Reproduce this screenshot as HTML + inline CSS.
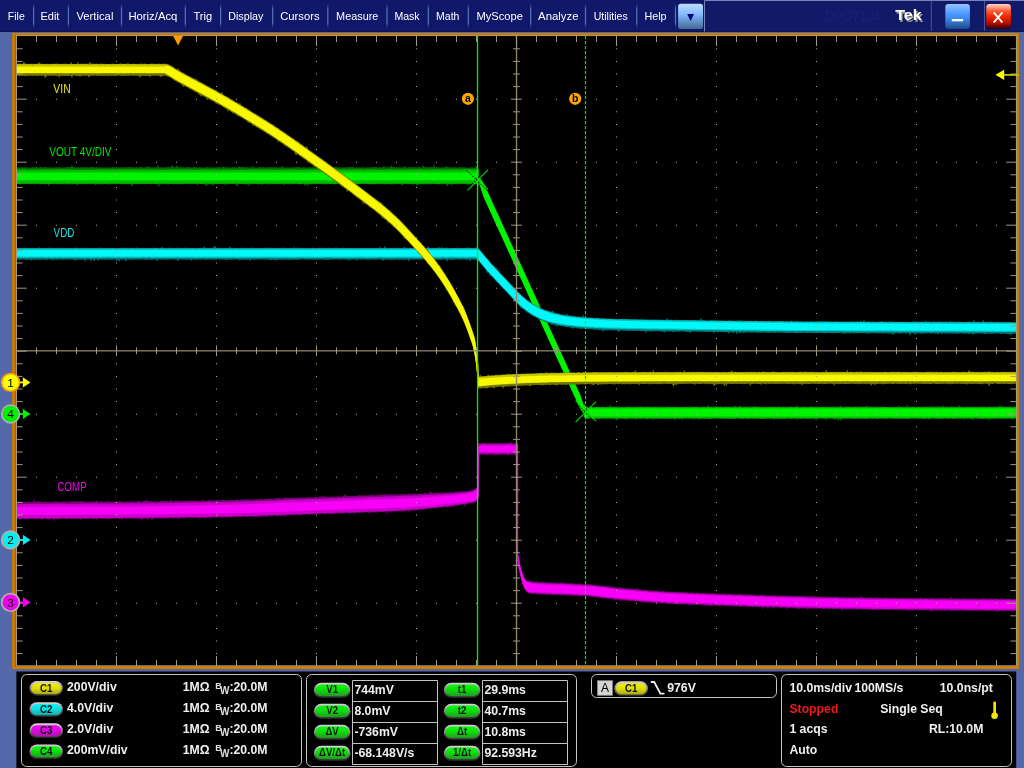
<!DOCTYPE html>
<html><head><meta charset="utf-8"><title>Tek DPO7104</title>
<style>html,body{margin:0;padding:0;background:#000;overflow:hidden}svg{display:block;will-change:transform}</style></head>
<body>
<svg width="1024" height="768" viewBox="0 0 1024 768" font-family="Liberation Sans, Arial, sans-serif">
<defs>
<linearGradient id="gb" x1="0" y1="0" x2="0" y2="1"><stop offset="0" stop-color="#98c4ff"/><stop offset="0.38" stop-color="#4c9aff"/><stop offset="0.6" stop-color="#3a88e6"/><stop offset="1" stop-color="#1c4886"/></linearGradient>
<linearGradient id="gr" x1="0" y1="0" x2="0" y2="1"><stop offset="0" stop-color="#ffd8cc"/><stop offset="0.28" stop-color="#ff5a38"/><stop offset="0.5" stop-color="#f02800"/><stop offset="0.75" stop-color="#b81000"/><stop offset="1" stop-color="#2c0000"/></linearGradient>
<linearGradient id="gd" x1="0" y1="0" x2="0" y2="1"><stop offset="0" stop-color="#bcdcff"/><stop offset="0.42" stop-color="#84baff"/><stop offset="0.56" stop-color="#6ea6e6"/><stop offset="1" stop-color="#466a90"/></linearGradient>
<linearGradient id="sep" x1="0" y1="0" x2="0" y2="1"><stop offset="0" stop-color="#4a5ea8" stop-opacity="0"/><stop offset=".25" stop-color="#5d74b8"/><stop offset=".75" stop-color="#5d74b8"/><stop offset="1" stop-color="#4a5ea8" stop-opacity="0"/></linearGradient>
<linearGradient id="bev" x1="0" y1="0" x2="0" y2="1"><stop offset="0" stop-color="#dcd4dc"/><stop offset=".35" stop-color="#a8a0a8"/><stop offset=".7" stop-color="#585858"/><stop offset="1" stop-color="#202020"/></linearGradient>
<linearGradient id="py" x1="0" y1="0" x2="0" y2="1"><stop offset="0" stop-color="#f0f008"/><stop offset=".5" stop-color="#dcdc08"/><stop offset="1" stop-color="#a8a818"/></linearGradient>
<linearGradient id="pc" x1="0" y1="0" x2="0" y2="1"><stop offset="0" stop-color="#08f4f4"/><stop offset=".5" stop-color="#08dcdc"/><stop offset="1" stop-color="#18a8a8"/></linearGradient>
<linearGradient id="pm" x1="0" y1="0" x2="0" y2="1"><stop offset="0" stop-color="#f408f4"/><stop offset=".5" stop-color="#dc08dc"/><stop offset="1" stop-color="#a818a8"/></linearGradient>
<linearGradient id="pg" x1="0" y1="0" x2="0" y2="1"><stop offset="0" stop-color="#10f810"/><stop offset=".45" stop-color="#08e008"/><stop offset="1" stop-color="#289428"/></linearGradient>
</defs>
<rect width="1024" height="768" fill="#5568aa"/>
<rect x="0" y="0" width="1024" height="31" fill="#10186a"/>
<rect x="0" y="31" width="1024" height="1" fill="#0c1258"/>
<rect x="704" y="0" width="320" height="31.5" fill="#111969"/>
<path d="M704.5 31.5V0.5H1024" fill="none" stroke="#7c80b4" stroke-width="1"/>
<rect x="930.8" y="1" width="1" height="30" fill="#4a5498"/>
<rect x="984" y="1" width="1" height="30" fill="#4a5498"/>
<text x="7.8" y="20" font-size="11.3" fill="#ffffff" textLength="17.0" lengthAdjust="spacingAndGlyphs">File</text>
<text x="40.4" y="20" font-size="11.3" fill="#ffffff" textLength="19.0" lengthAdjust="spacingAndGlyphs">Edit</text>
<text x="76.4" y="20" font-size="11.3" fill="#ffffff" textLength="37.0" lengthAdjust="spacingAndGlyphs">Vertical</text>
<text x="128.4" y="20" font-size="11.3" fill="#ffffff" textLength="49.0" lengthAdjust="spacingAndGlyphs">Horiz/Acq</text>
<text x="193.4" y="20" font-size="11.3" fill="#ffffff" textLength="18.7" lengthAdjust="spacingAndGlyphs">Trig</text>
<text x="228.2" y="20" font-size="11.3" fill="#ffffff" textLength="35.2" lengthAdjust="spacingAndGlyphs">Display</text>
<text x="280.2" y="20" font-size="11.3" fill="#ffffff" textLength="39.4" lengthAdjust="spacingAndGlyphs">Cursors</text>
<text x="336.1" y="20" font-size="11.3" fill="#ffffff" textLength="42.3" lengthAdjust="spacingAndGlyphs">Measure</text>
<text x="394.4" y="20" font-size="11.3" fill="#ffffff" textLength="25.2" lengthAdjust="spacingAndGlyphs">Mask</text>
<text x="436.1" y="20" font-size="11.3" fill="#ffffff" textLength="23.3" lengthAdjust="spacingAndGlyphs">Math</text>
<text x="476.5" y="20" font-size="11.3" fill="#ffffff" textLength="46.4" lengthAdjust="spacingAndGlyphs">MyScope</text>
<text x="538.1" y="20" font-size="11.3" fill="#ffffff" textLength="40.5" lengthAdjust="spacingAndGlyphs">Analyze</text>
<text x="593.7" y="20" font-size="11.3" fill="#ffffff" textLength="34.1" lengthAdjust="spacingAndGlyphs">Utilities</text>
<text x="644.4" y="20" font-size="11.3" fill="#ffffff" textLength="22.1" lengthAdjust="spacingAndGlyphs">Help</text>
<rect x="33.0" y="3" width="1.2" height="26" fill="url(#sep)"/>
<rect x="67.8" y="3" width="1.2" height="26" fill="url(#sep)"/>
<rect x="120.9" y="3" width="1.2" height="26" fill="url(#sep)"/>
<rect x="184.7" y="3" width="1.2" height="26" fill="url(#sep)"/>
<rect x="220.0" y="3" width="1.2" height="26" fill="url(#sep)"/>
<rect x="272.1" y="3" width="1.2" height="26" fill="url(#sep)"/>
<rect x="327.2" y="3" width="1.2" height="26" fill="url(#sep)"/>
<rect x="386.4" y="3" width="1.2" height="26" fill="url(#sep)"/>
<rect x="427.7" y="3" width="1.2" height="26" fill="url(#sep)"/>
<rect x="467.7" y="3" width="1.2" height="26" fill="url(#sep)"/>
<rect x="530.1" y="3" width="1.2" height="26" fill="url(#sep)"/>
<rect x="584.9" y="3" width="1.2" height="26" fill="url(#sep)"/>
<rect x="636.2" y="3" width="1.2" height="26" fill="url(#sep)"/>
<rect x="674.9" y="3" width="1.2" height="26" fill="url(#sep)"/>
<rect x="678.1" y="3.8" width="24.9" height="25.2" rx="2.8" fill="url(#gd)"/>
<path d="M687.2 13.9h6.8l-3.4 7.2z" fill="#000080"/>
<text x="825" y="21.3" font-size="14.5" fill="#182272" textLength="55.5" lengthAdjust="spacingAndGlyphs">DPO7104</text>
<text x="896.6" y="21.5" font-size="15" font-weight="bold" fill="#9a9a8a" textLength="26.5" lengthAdjust="spacingAndGlyphs">Tek</text>
<text x="895.2" y="20" font-size="15" font-weight="bold" fill="#ffffff" textLength="26.5" lengthAdjust="spacingAndGlyphs">Tek</text>
<rect x="945.3" y="3.9" width="24.6" height="25.2" rx="3" fill="url(#gb)"/>
<rect x="951.8" y="19" width="11.3" height="2.3" fill="#ffffff"/>
<rect x="986.3" y="3.9" width="24.6" height="25.2" rx="3" fill="url(#gr)"/>
<path d="M993.7 12.4L1002.4 22.5M1002.4 12.4L993.7 22.5" stroke="#ffffff" stroke-width="1.9" fill="none"/>
<rect x="12.1" y="33" width="1007" height="636" fill="#cc7c00"/>
<rect x="14.8" y="35" width="1.4" height="632" fill="#a86400"/>
<rect x="16" y="35.3" width="1001" height="631" fill="#a89a78"/>
<rect x="17" y="36.1" width="998.9" height="629.2" fill="#000000"/>
<rect x="16.4" y="671.5" width="999.8" height="97" fill="#000000"/>
<clipPath id="gc"><rect x="17" y="36.1" width="998.9" height="629.2"/></clipPath>
<g clip-path="url(#gc)">
<path d="M17,167.5 18,167.3 19,167.7 20,167.4 21,167.3 22,167 23,167.6 24,167.6 25,167.3 26,167.2 27,167.4 28,167.5 29,167.2 30,167.4 31,167.7 32,167.1 33,167.3 34,167.4 35,167.2 36,166 37,167.6 38,167.5 39,167.4 40,167.1 41,167.1 42,167.5 43,167.5 44,167.3 45,167.3 46,167.2 47,167.4 48,167.6 49,167.6 50,167.3 51,167.4 52,167.4 53,167.5 54,167.7 55,167.3 56,167.1 57,167.6 58,167.5 59,167.1 60,167.5 61,167.5 62,167.4 63,167.4 64,167.6 65,167.4 66,167.2 67,167.4 68,167.1 69,167 70,167.6 71,167.1 72,164.4 73,167.3 74,167.1 75,167.5 76,167.6 77,167.3 78,167.3 79,167.6 80,167.4 81,167.3 82,167.3 83,167.3 84,167.4 85,167.2 86,167 87,167.5 88,167.6 89,167.5 90,167.1 91,167.6 92,167 93,167.1 94,167.5 95,167.7 96,167.3 97,167.1 98,167.7 99,167.4 100,167.6 101,167.6 102,167.6 103,167.6 104,167.4 105,167.5 106,167.6 107,167.5 108,167.3 109,167.7 110,167.4 111,167.4 112,167.3 113,167.1 114,167.5 115,167.2 116,167.1 117,167.5 118,167.4 119,167.3 120,167.5 121,167.3 122,167.6 123,167.5 124,167.2 125,167.5 126,167.2 127,167.3 128,167.3 129,167.1 130,166.8 131,167.6 132,167.3 133,167.2 134,167.7 135,167.5 136,167 137,167.2 138,167.6 139,167.3 140,167.2 141,167.3 142,167.1 143,167.7 144,167.4 145,167.6 146,167 147,167.1 148,165.9 149,167.5 150,167.1 151,167.6 152,167.5 153,167.3 154,167.7 155,167 156,167.6 157,167.1 158,165.1 159,167.2 160,167.6 161,167.2 162,167.5 163,167.6 164,167.5 165,167.6 166,167.6 167,167.1 168,167.3 169,167 170,167.1 171,167.4 172,165 173,166.2 174,167.1 175,167.6 176,167 177,165 178,167.1 179,167.5 180,167.7 181,166.6 182,167 183,167.5 184,167.5 185,167.4 186,167.5 187,167.2 188,167.3 189,167.1 190,167.5 191,167.5 192,167.6 193,167.6 194,167.1 195,167 196,167.2 197,167.4 198,167.5 199,167.6 200,167.4 201,167.1 202,167.7 203,167.7 204,167.5 205,167.5 206,167.2 207,167.1 208,167.4 209,167.5 210,167.6 211,167.2 212,167.4 213,167.2 214,167.5 215,167.5 216,167.2 217,167.3 218,167.2 219,167.3 220,167.5 221,167.3 222,167.3 223,167 224,166.2 225,167.6 226,167.4 227,167.2 228,167.3 229,167.6 230,167.6 231,167.6 232,167.3 233,167.3 234,167.2 235,167 236,167.4 237,167.6 238,167.4 239,165.7 240,167.1 241,167.3 242,167.1 243,167 244,167 245,167.4 246,167.6 247,167.1 248,167.4 249,167.5 250,167.2 251,167.3 252,167.4 253,165.5 254,167.5 255,167.6 256,167.4 257,167.7 258,167.2 259,167.4 260,167 261,167 262,167.6 263,167.2 264,167.1 265,167.6 266,167.7 267,167.2 268,167.6 269,167.1 270,167.6 271,167.1 272,167.4 273,167.2 274,167.3 275,167 276,167.4 277,167.5 278,167.6 279,167.3 280,167.6 281,167.6 282,165.5 283,167.5 284,167.2 285,167.4 286,167.7 287,167.6 288,167.1 289,167.7 290,167.7 291,167.2 292,167.5 293,167.2 294,167.3 295,167.5 296,167.1 297,167.2 298,167.1 299,167.3 300,167.4 301,167.4 302,167.6 303,167.6 304,167.3 305,167.3 306,167.4 307,167.7 308,167.6 309,167.1 310,167.5 311,167.6 312,167.5 313,167 314,167.7 315,167.5 316,167.1 317,167.7 318,167.7 319,167.6 320,167.5 321,167.2 322,167.6 323,167.3 324,167.1 325,167.5 326,167.1 327,167.2 328,167.5 329,167.2 330,167.3 331,167.5 332,167.1 333,167.5 334,167.6 335,167 336,167.1 337,167.3 338,167.7 339,167.3 340,167.3 341,167.4 342,167.5 343,167.2 344,167.4 345,167.4 346,167.5 347,167.4 348,167.2 349,167 350,167.2 351,167.3 352,167.3 353,167 354,167.2 355,167.7 356,167.4 357,167.5 358,167.5 359,167.6 360,167.4 361,167.5 362,167.4 363,167.1 364,167.4 365,167.7 366,167.5 367,167.2 368,167.7 369,167.6 370,167 371,167.6 372,167.6 373,167.1 374,167.1 375,167.2 376,167.1 377,167.6 378,167.6 379,167.1 380,167.3 381,167.4 382,167.3 383,167 384,165.2 385,167.5 386,167.3 387,167.4 388,167.1 389,167.3 390,167.5 391,165.1 392,167.3 393,167.1 394,167.1 395,167.2 396,167.2 397,167.6 398,167.2 399,167.3 400,167.5 401,167.3 402,167.3 403,167.3 404,167.4 405,165.5 406,167 407,167.7 408,167.6 409,167.1 410,167.2 411,167 412,167.1 413,167.6 414,167.3 415,167.1 416,167.4 417,167.2 418,167.2 419,167 420,167.4 421,167.3 422,167.7 423,164.6 424,167.1 425,167.1 426,167.6 427,167.2 428,167.2 429,167.2 430,167.1 431,167.1 432,167.3 433,167.2 434,164.3 435,167.6 436,167.3 437,167 438,167.5 439,167.2 440,167.7 441,167.7 442,167 443,167.4 444,167.3 445,167.4 446,166.2 447,167.1 448,167.2 449,167.2 450,167.3 451,167.5 452,167.5 453,167.6 454,167 455,167.4 456,167.3 457,167.4 458,167.7 459,167.1 460,167.5 461,167.4 462,167 463,167.6 464,167.6 465,167.1 466,167.7 467,167.7 468,167.7 469,167.4 470,167.6 471,167.6 472,167.4 473,167.2 474,167.7 475,167.7 476,164.4 477,167.1 478,168.1 478.3,169 478.3,186.6 478,186.3 477,184.6 476,184.1 475,184.4 474,184.3 473,184.4 472,184 471,183.9 470,183.9 469,184.4 468,184.4 467,184.4 466,184.3 465,183.9 464,184.1 463,184.1 462,183.8 461,184 460,184.4 459,184 458,184.3 457,184.2 456,184.1 455,183.9 454,184.4 453,183.8 452,186.1 451,183.9 450,184.3 449,184.5 448,184.7 447,186.8 446,184 445,184.1 444,184.2 443,183.9 442,184.4 441,184.2 440,183.9 439,184.4 438,184.3 437,184.4 436,184.1 435,184.2 434,183.9 433,184.1 432,183.9 431,184.4 430,184.3 429,184.4 428,184.1 427,184.5 426,184.2 425,184.3 424,184.2 423,184.4 422,184 421,184.4 420,184.4 419,184.4 418,184.4 417,187.1 416,184.1 415,184.1 414,184.1 413,185.5 412,183.9 411,184.3 410,184.1 409,184.3 408,183.8 407,184.3 406,183.9 405,183.8 404,183.9 403,184.5 402,185.6 401,184.2 400,184.1 399,184 398,184.1 397,183.8 396,184.1 395,184.2 394,184.2 393,184.2 392,184.4 391,184.3 390,184 389,184.5 388,184.1 387,184.2 386,184.3 385,184.4 384,184.4 383,184 382,183.8 381,184.5 380,184.3 379,183.8 378,184.1 377,184.1 376,184.2 375,184.2 374,184.4 373,184.2 372,184.4 371,184 370,184.3 369,184.4 368,184.4 367,184.1 366,184.1 365,184.3 364,184 363,184 362,184 361,184.2 360,184.2 359,184.3 358,184.4 357,184.3 356,184.3 355,185.2 354,183.9 353,183.9 352,184.4 351,184.2 350,184.5 349,183.8 348,184.3 347,184.3 346,184.1 345,184.3 344,184 343,184.4 342,184.3 341,184.2 340,184.1 339,184.2 338,184.1 337,183.9 336,184.3 335,183.9 334,184.5 333,184.2 332,183.9 331,183.9 330,183.9 329,183.9 328,183.9 327,184.3 326,184 325,184.4 324,184.5 323,184 322,184.4 321,184.1 320,184.5 319,184.1 318,184.1 317,183.9 316,183.9 315,184.3 314,184.1 313,184.2 312,184.3 311,184.8 310,183.9 309,184.2 308,186.5 307,184.4 306,184.4 305,186.1 304,183.9 303,183.8 302,184.2 301,184.3 300,184.4 299,184.3 298,184 297,184.5 296,183.8 295,184.2 294,184.1 293,184.4 292,183.8 291,184.1 290,184.4 289,184.4 288,183.9 287,184.2 286,184.2 285,184 284,185.6 283,184.3 282,184 281,184.2 280,184.5 279,183.9 278,184.1 277,184.3 276,184.2 275,183.8 274,184.5 273,183.8 272,184.3 271,184 270,184.5 269,184.2 268,184.2 267,184.4 266,183.9 265,184 264,183.9 263,183.9 262,185.4 261,184.1 260,184.3 259,184.5 258,184.2 257,184.2 256,183.9 255,184.1 254,184.3 253,184.1 252,184.2 251,184.2 250,183.8 249,186 248,184.2 247,184.4 246,184.4 245,184.4 244,184.1 243,183.9 242,183.9 241,183.9 240,183.9 239,183.9 238,184.4 237,187 236,184.4 235,184 234,184.1 233,184.2 232,183.8 231,184 230,183.8 229,184 228,184 227,184.5 226,184.4 225,184.5 224,184.4 223,183.9 222,184 221,184 220,184 219,184.1 218,183.9 217,184.3 216,184.1 215,183.9 214,184.5 213,185.6 212,184.3 211,184.2 210,184.4 209,184.1 208,184.5 207,184.9 206,186.3 205,184.5 204,184.3 203,183.8 202,184.1 201,183.9 200,183.8 199,184 198,184.5 197,184.9 196,183.8 195,184 194,184.4 193,183.8 192,184.1 191,184.1 190,184.5 189,184 188,183.9 187,183.9 186,183.8 185,184 184,183.8 183,184 182,184.3 181,184.2 180,184.2 179,184.2 178,184.3 177,184.2 176,184.3 175,183.9 174,184.4 173,184.2 172,183.8 171,184.1 170,184 169,183.9 168,184.9 167,184.3 166,184 165,183.9 164,184.4 163,183.9 162,184.2 161,184.5 160,184.1 159,187 158,184.3 157,184.2 156,184.1 155,184 154,183.9 153,184.1 152,184.1 151,184.4 150,183.8 149,183.9 148,183.8 147,184.3 146,183.9 145,184.2 144,184 143,184.1 142,183.9 141,184.1 140,184.3 139,184.2 138,183.9 137,184.3 136,184.1 135,184.3 134,184.3 133,184.2 132,186.7 131,184.4 130,184 129,184.2 128,184.2 127,184.3 126,183.8 125,184.5 124,184.3 123,184.2 122,184.1 121,184.7 120,183.8 119,184 118,184 117,184 116,184.4 115,184 114,183.8 113,184.3 112,184.3 111,184.1 110,184.5 109,184.3 108,184.7 107,184 106,183.9 105,183.9 104,184 103,184.4 102,184.5 101,183.8 100,184.4 99,184.4 98,184.3 97,184.5 96,184.2 95,185.2 94,183.9 93,183.9 92,184.1 91,184.4 90,183.9 89,183.9 88,183.9 87,184.2 86,184.3 85,184.1 84,184.2 83,184.2 82,184 81,184.2 80,184.3 79,183.8 78,185.5 77,184.4 76,184.4 75,184.2 74,183.9 73,184.5 72,183.9 71,184.5 70,184.4 69,184.3 68,184.5 67,183.9 66,184.4 65,184.3 64,184.2 63,184 62,184.5 61,184 60,184.2 59,184.4 58,184 57,184.3 56,184.3 55,183.8 54,184.5 53,184 52,184.1 51,183.9 50,183.9 49,186.5 48,183.9 47,184.1 46,184.4 45,184.3 44,184.5 43,183.8 42,184 41,184.5 40,184 39,184.2 38,184.1 37,183.8 36,184.3 35,184.5 34,184.3 33,184.1 32,184 31,184.3 30,184.3 29,184 28,184.2 27,184 26,184.1 25,183.8 24,184.2 23,183.9 22,183.8 21,184.5 20,184.4 19,184.1 18,184.1 17,183.9Z" fill="#006c00"/>
<path d="M17,169.7 18,169.4 19,169.6 20,169.6 21,169.8 22,169.3 23,169.5 24,169.5 25,169.3 26,169.7 27,169.7 28,169.8 29,169.5 30,169.8 31,169.5 32,169.4 33,169.4 34,169.8 35,169.6 36,169.7 37,169.6 38,169.5 39,169.7 40,169.4 41,169.4 42,169.6 43,169.4 44,169.6 45,169.4 46,169.7 47,169.6 48,169.4 49,169.4 50,169.8 51,169.3 52,169.7 53,169.5 54,169.5 55,169.6 56,169.8 57,169.3 58,169.3 59,169.4 60,169.4 61,169.5 62,169.5 63,169.5 64,169.5 65,169.5 66,169.3 67,169.6 68,169.7 69,169.3 70,169.7 71,169.5 72,169.7 73,169.7 74,169.7 75,169.8 76,169.4 77,169.5 78,169.7 79,169.6 80,169.5 81,169.6 82,169.7 83,169.6 84,169.8 85,169.4 86,169.5 87,169.7 88,169.7 89,169.7 90,169.4 91,169.8 92,169.6 93,169.7 94,169.3 95,169.7 96,169.6 97,169.5 98,169.4 99,169.4 100,169.4 101,169.4 102,169.3 103,169.4 104,169.4 105,169.6 106,169.5 107,169.4 108,169.5 109,169.6 110,169.4 111,169.6 112,169.6 113,169.4 114,169.6 115,169.7 116,169.7 117,169.5 118,169.3 119,169.4 120,169.3 121,169.6 122,169.8 123,169.5 124,169.3 125,169.5 126,169.5 127,169.5 128,169.6 129,169.6 130,169.5 131,169.8 132,169.6 133,169.5 134,169.3 135,169.6 136,169.3 137,169.5 138,169.7 139,169.3 140,169.5 141,169.4 142,169.4 143,169.4 144,169.7 145,169.5 146,169.7 147,169.5 148,169.6 149,169.5 150,169.6 151,169.6 152,169.8 153,169.4 154,169.5 155,169.6 156,169.7 157,169.5 158,169.5 159,169.7 160,169.4 161,169.7 162,169.5 163,169.5 164,169.8 165,169.4 166,169.4 167,169.7 168,169.8 169,169.5 170,169.6 171,169.8 172,169.5 173,169.6 174,169.7 175,169.3 176,169.6 177,169.4 178,169.5 179,169.6 180,169.7 181,169.4 182,169.6 183,169.6 184,169.7 185,169.6 186,169.3 187,169.5 188,169.5 189,169.6 190,169.7 191,169.6 192,169.7 193,169.7 194,169.5 195,169.7 196,169.8 197,169.4 198,169.6 199,169.4 200,169.6 201,169.6 202,169.7 203,169.5 204,169.6 205,169.4 206,169.4 207,169.6 208,169.5 209,169.4 210,169.5 211,169.7 212,169.6 213,169.5 214,169.6 215,169.7 216,169.6 217,169.7 218,169.6 219,169.7 220,169.6 221,169.7 222,169.7 223,169.3 224,169.4 225,169.7 226,169.8 227,169.5 228,169.6 229,169.5 230,169.4 231,169.5 232,169.7 233,169.4 234,169.8 235,169.7 236,169.6 237,169.8 238,169.5 239,169.4 240,169.4 241,169.6 242,169.6 243,169.4 244,169.7 245,169.4 246,169.8 247,169.7 248,169.7 249,169.4 250,169.5 251,169.4 252,169.7 253,169.3 254,169.3 255,169.4 256,169.5 257,169.8 258,169.6 259,169.3 260,169.4 261,169.4 262,169.7 263,169.3 264,169.5 265,169.8 266,169.6 267,169.6 268,169.4 269,169.7 270,169.5 271,169.3 272,169.7 273,169.7 274,169.6 275,169.5 276,169.7 277,169.5 278,169.4 279,169.7 280,169.6 281,169.8 282,169.7 283,169.6 284,169.6 285,169.6 286,169.8 287,169.3 288,169.8 289,169.3 290,169.7 291,169.6 292,169.5 293,169.3 294,169.5 295,169.5 296,169.7 297,169.8 298,169.4 299,169.7 300,169.4 301,169.7 302,169.4 303,169.6 304,169.4 305,169.6 306,169.6 307,169.7 308,169.5 309,169.4 310,169.3 311,169.6 312,169.7 313,169.5 314,169.5 315,169.6 316,169.8 317,169.6 318,169.4 319,169.4 320,169.4 321,169.7 322,169.5 323,169.6 324,169.5 325,169.3 326,169.7 327,169.5 328,169.7 329,169.6 330,169.3 331,169.4 332,169.3 333,169.4 334,169.5 335,169.7 336,169.3 337,169.5 338,169.6 339,169.8 340,169.5 341,169.8 342,169.6 343,169.6 344,169.5 345,169.7 346,169.4 347,169.7 348,169.7 349,169.5 350,169.6 351,169.7 352,169.7 353,169.5 354,169.6 355,169.6 356,169.5 357,169.4 358,169.3 359,169.7 360,169.6 361,169.3 362,169.4 363,169.4 364,169.7 365,169.8 366,169.7 367,169.4 368,169.4 369,169.4 370,169.3 371,169.7 372,169.6 373,169.5 374,169.7 375,169.4 376,169.4 377,169.5 378,169.5 379,169.7 380,169.5 381,169.7 382,169.4 383,169.7 384,169.7 385,169.7 386,169.7 387,169.6 388,169.4 389,169.5 390,169.3 391,169.6 392,169.5 393,169.4 394,169.7 395,169.5 396,169.6 397,169.4 398,169.4 399,169.8 400,169.7 401,169.5 402,169.7 403,169.6 404,169.6 405,169.8 406,169.6 407,169.6 408,169.8 409,169.5 410,169.7 411,169.7 412,169.5 413,169.3 414,169.5 415,169.4 416,169.5 417,169.6 418,169.4 419,169.3 420,169.6 421,169.4 422,169.5 423,169.5 424,169.8 425,169.6 426,169.6 427,169.7 428,169.6 429,169.8 430,169.6 431,169.5 432,169.7 433,169.6 434,169.4 435,169.3 436,169.3 437,169.8 438,169.5 439,169.6 440,169.6 441,169.8 442,169.4 443,169.7 444,169.7 445,169.4 446,169.6 447,169.5 448,169.5 449,169.4 450,169.5 451,169.4 452,169.6 453,169.7 454,169.4 455,169.3 456,169.6 457,169.5 458,169.5 459,169.8 460,169.8 461,169.6 462,169.5 463,169.6 464,169.3 465,169.3 466,169.5 467,169.6 468,169.7 469,169.4 470,169.4 471,169.5 472,169.5 473,169.5 474,169.4 475,169.4 476,169.4 477,168.4 478,169 478.3,169.6 478.3,186 478,185.7 477,184.3 476,183.6 475,183.8 474,183.5 473,183.6 472,183.7 471,183.7 470,183.6 469,183.4 468,183.5 467,183.4 466,183.8 465,183.4 464,183.7 463,183.4 462,183.5 461,183.6 460,183.7 459,183.6 458,183.6 457,183.6 456,183.8 455,183.5 454,183.7 453,183.7 452,183.5 451,183.8 450,183.4 449,183.9 448,183.5 447,183.8 446,183.5 445,183.5 444,183.5 443,183.4 442,183.5 441,183.6 440,183.8 439,183.8 438,183.9 437,183.5 436,183.7 435,183.6 434,183.7 433,183.6 432,183.4 431,183.6 430,183.6 429,183.8 428,183.5 427,183.5 426,183.6 425,183.9 424,183.6 423,183.6 422,183.6 421,183.7 420,183.8 419,183.7 418,183.8 417,183.5 416,183.7 415,183.8 414,183.8 413,183.4 412,183.9 411,183.7 410,183.7 409,183.5 408,183.5 407,183.9 406,183.4 405,183.7 404,183.6 403,183.7 402,183.6 401,183.4 400,183.8 399,183.6 398,183.7 397,183.6 396,183.5 395,183.6 394,183.8 393,183.4 392,183.8 391,183.5 390,183.4 389,183.8 388,183.7 387,183.5 386,183.7 385,183.7 384,183.8 383,183.4 382,183.7 381,183.6 380,183.5 379,183.9 378,183.8 377,183.4 376,183.4 375,183.9 374,183.6 373,183.8 372,183.8 371,183.8 370,183.8 369,183.7 368,183.7 367,183.6 366,183.5 365,183.7 364,183.6 363,183.4 362,183.5 361,183.7 360,183.5 359,183.8 358,183.8 357,183.5 356,183.8 355,183.8 354,183.4 353,183.4 352,183.7 351,183.7 350,183.7 349,183.5 348,183.4 347,183.8 346,183.7 345,183.5 344,183.6 343,183.7 342,183.7 341,183.7 340,183.6 339,183.5 338,183.8 337,183.5 336,183.6 335,183.7 334,183.7 333,183.4 332,183.7 331,183.9 330,183.9 329,183.6 328,183.4 327,183.6 326,183.6 325,183.5 324,183.8 323,183.6 322,183.6 321,183.7 320,183.6 319,183.8 318,183.4 317,183.5 316,183.4 315,183.9 314,183.5 313,183.4 312,183.5 311,183.6 310,183.9 309,183.8 308,183.7 307,183.4 306,183.8 305,183.7 304,183.6 303,183.5 302,183.8 301,183.8 300,183.9 299,183.7 298,183.5 297,183.8 296,183.5 295,183.5 294,183.9 293,183.7 292,183.4 291,183.5 290,183.6 289,183.7 288,183.8 287,183.8 286,183.4 285,183.5 284,183.6 283,183.5 282,183.8 281,183.5 280,183.5 279,183.5 278,183.8 277,183.6 276,183.7 275,183.8 274,183.8 273,183.7 272,183.8 271,183.6 270,183.6 269,183.5 268,183.7 267,183.5 266,183.5 265,183.6 264,183.5 263,183.7 262,183.7 261,183.8 260,183.4 259,183.5 258,183.7 257,183.7 256,183.6 255,183.8 254,183.7 253,183.6 252,183.4 251,183.8 250,183.6 249,183.4 248,183.9 247,183.8 246,183.5 245,183.7 244,183.4 243,183.8 242,183.4 241,183.7 240,183.5 239,183.7 238,183.5 237,183.6 236,183.6 235,183.5 234,183.4 233,183.8 232,183.9 231,183.5 230,183.6 229,183.5 228,183.7 227,183.6 226,183.7 225,183.5 224,183.8 223,183.8 222,183.6 221,183.8 220,183.5 219,183.4 218,183.7 217,183.7 216,183.7 215,183.8 214,183.4 213,183.6 212,183.7 211,183.8 210,183.7 209,183.5 208,183.5 207,183.5 206,183.7 205,183.5 204,183.5 203,183.5 202,183.9 201,183.9 200,183.8 199,183.5 198,183.8 197,183.5 196,183.5 195,183.8 194,183.6 193,183.4 192,183.5 191,183.5 190,183.8 189,183.4 188,183.6 187,183.5 186,183.5 185,183.5 184,183.5 183,183.8 182,183.8 181,183.5 180,183.6 179,183.9 178,183.9 177,183.6 176,183.8 175,183.8 174,183.4 173,183.7 172,183.9 171,183.8 170,183.6 169,183.6 168,183.9 167,183.5 166,183.6 165,183.6 164,183.4 163,183.8 162,183.8 161,183.5 160,183.5 159,183.5 158,183.6 157,183.9 156,183.7 155,183.7 154,183.5 153,183.7 152,183.6 151,183.7 150,183.8 149,183.4 148,183.9 147,183.7 146,183.5 145,183.7 144,183.5 143,183.6 142,183.9 141,183.7 140,183.5 139,183.8 138,183.6 137,183.8 136,183.6 135,183.7 134,183.6 133,183.8 132,183.7 131,183.6 130,183.7 129,183.9 128,183.7 127,183.6 126,183.7 125,183.9 124,183.8 123,183.6 122,183.4 121,183.9 120,183.5 119,183.8 118,183.6 117,183.4 116,183.7 115,183.6 114,183.6 113,183.8 112,183.6 111,183.7 110,183.5 109,183.6 108,183.6 107,183.8 106,183.6 105,183.9 104,183.7 103,183.4 102,183.5 101,183.8 100,183.6 99,183.8 98,183.7 97,183.8 96,183.7 95,183.6 94,183.8 93,183.5 92,183.8 91,183.6 90,183.6 89,183.4 88,183.8 87,183.9 86,183.6 85,183.5 84,183.6 83,183.7 82,183.7 81,183.5 80,183.6 79,183.7 78,183.8 77,183.7 76,183.7 75,183.7 74,183.5 73,183.6 72,183.5 71,183.5 70,183.6 69,183.7 68,183.7 67,183.7 66,183.5 65,183.6 64,183.5 63,183.9 62,183.5 61,183.5 60,183.4 59,183.8 58,183.7 57,183.8 56,183.5 55,183.7 54,183.4 53,183.6 52,183.6 51,183.9 50,183.7 49,183.8 48,183.9 47,183.9 46,183.6 45,183.6 44,183.9 43,183.7 42,183.6 41,183.9 40,183.5 39,183.7 38,183.8 37,183.5 36,183.5 35,183.7 34,183.5 33,183.8 32,183.5 31,183.7 30,183.7 29,183.5 28,183.4 27,183.8 26,183.5 25,183.5 24,183.4 23,183.7 22,183.6 21,183.8 20,183.8 19,183.8 18,183.8 17,183.8Z" fill="#00bc00"/>
<path d="M17,172.4 18,172.4 19,172.4 20,172.4 21,172.4 22,172.4 23,172.4 24,172.4 25,172.4 26,172.4 27,172.4 28,172.4 29,172.4 30,172.4 31,172.4 32,172.4 33,172.4 34,172.4 35,172.4 36,172.4 37,172.4 38,172.4 39,172.4 40,172.4 41,172.4 42,172.4 43,172.4 44,172.4 45,172.4 46,172.4 47,172.4 48,172.4 49,172.4 50,172.4 51,172.4 52,172.4 53,172.4 54,172.4 55,172.4 56,172.4 57,172.4 58,172.4 59,172.4 60,172.4 61,172.4 62,172.4 63,172.4 64,172.4 65,172.4 66,172.4 67,172.4 68,172.4 69,172.4 70,172.4 71,172.4 72,172.4 73,172.4 74,172.4 75,172.4 76,172.4 77,172.4 78,172.4 79,172.4 80,172.4 81,172.4 82,172.4 83,172.4 84,172.4 85,172.4 86,172.4 87,172.4 88,172.4 89,172.4 90,172.4 91,172.4 92,172.4 93,172.4 94,172.4 95,172.4 96,172.4 97,172.4 98,172.4 99,172.4 100,172.4 101,172.4 102,172.4 103,172.4 104,172.4 105,172.4 106,172.4 107,172.4 108,172.4 109,172.4 110,172.4 111,172.4 112,172.4 113,172.4 114,172.4 115,172.4 116,172.4 117,172.4 118,172.4 119,172.4 120,172.4 121,172.4 122,172.4 123,172.4 124,172.4 125,172.4 126,172.4 127,172.4 128,172.4 129,172.4 130,172.4 131,172.4 132,172.4 133,172.4 134,172.4 135,172.4 136,172.4 137,172.4 138,172.4 139,172.4 140,172.4 141,172.4 142,172.4 143,172.4 144,172.4 145,172.4 146,172.4 147,172.4 148,172.4 149,172.4 150,172.4 151,172.4 152,172.4 153,172.4 154,172.4 155,172.4 156,172.4 157,172.4 158,172.4 159,172.4 160,172.4 161,172.4 162,172.4 163,172.4 164,172.4 165,172.4 166,172.4 167,172.4 168,172.4 169,172.4 170,172.4 171,172.4 172,172.4 173,172.4 174,172.4 175,172.4 176,172.4 177,172.4 178,172.4 179,172.4 180,172.4 181,172.4 182,172.4 183,172.4 184,172.4 185,172.4 186,172.4 187,172.4 188,172.4 189,172.4 190,172.4 191,172.4 192,172.4 193,172.4 194,172.4 195,172.4 196,172.4 197,172.4 198,172.4 199,172.4 200,172.4 201,172.4 202,172.4 203,172.4 204,172.4 205,172.4 206,172.4 207,172.4 208,172.4 209,172.4 210,172.4 211,172.4 212,172.4 213,172.4 214,172.4 215,172.4 216,172.4 217,172.4 218,172.4 219,172.4 220,172.4 221,172.4 222,172.4 223,172.4 224,172.4 225,172.4 226,172.4 227,172.4 228,172.4 229,172.4 230,172.4 231,172.4 232,172.4 233,172.4 234,172.4 235,172.4 236,172.4 237,172.4 238,172.4 239,172.4 240,172.4 241,172.4 242,172.4 243,172.4 244,172.4 245,172.4 246,172.4 247,172.4 248,172.4 249,172.4 250,172.4 251,172.4 252,172.4 253,172.4 254,172.4 255,172.4 256,172.4 257,172.4 258,172.4 259,172.4 260,172.4 261,172.4 262,172.4 263,172.4 264,172.4 265,172.4 266,172.4 267,172.4 268,172.4 269,172.4 270,172.4 271,172.4 272,172.4 273,172.4 274,172.4 275,172.4 276,172.4 277,172.4 278,172.4 279,172.4 280,172.4 281,172.4 282,172.4 283,172.4 284,172.4 285,172.4 286,172.4 287,172.4 288,172.4 289,172.4 290,172.4 291,172.4 292,172.4 293,172.4 294,172.4 295,172.4 296,172.4 297,172.4 298,172.4 299,172.4 300,172.4 301,172.4 302,172.4 303,172.4 304,172.4 305,172.4 306,172.4 307,172.4 308,172.4 309,172.4 310,172.4 311,172.4 312,172.4 313,172.4 314,172.4 315,172.4 316,172.4 317,172.4 318,172.4 319,172.4 320,172.4 321,172.4 322,172.4 323,172.4 324,172.4 325,172.4 326,172.4 327,172.4 328,172.4 329,172.4 330,172.4 331,172.4 332,172.4 333,172.4 334,172.4 335,172.4 336,172.4 337,172.4 338,172.4 339,172.4 340,172.4 341,172.4 342,172.4 343,172.4 344,172.4 345,172.4 346,172.4 347,172.4 348,172.4 349,172.4 350,172.4 351,172.4 352,172.4 353,172.4 354,172.4 355,172.4 356,172.4 357,172.4 358,172.4 359,172.4 360,172.4 361,172.4 362,172.4 363,172.4 364,172.4 365,172.4 366,172.4 367,172.4 368,172.4 369,172.4 370,172.4 371,172.4 372,172.4 373,172.4 374,172.4 375,172.4 376,172.4 377,172.4 378,172.4 379,172.4 380,172.4 381,172.4 382,172.4 383,172.4 384,172.4 385,172.4 386,172.4 387,172.4 388,172.4 389,172.4 390,172.4 391,172.4 392,172.4 393,172.4 394,172.4 395,172.4 396,172.4 397,172.4 398,172.4 399,172.4 400,172.4 401,172.4 402,172.4 403,172.4 404,172.4 405,172.4 406,172.4 407,172.4 408,172.4 409,172.4 410,172.4 411,172.4 412,172.4 413,172.4 414,172.4 415,172.4 416,172.4 417,172.4 418,172.4 419,172.4 420,172.4 421,172.4 422,172.4 423,172.4 424,172.4 425,172.4 426,172.4 427,172.4 428,172.4 429,172.4 430,172.4 431,172.4 432,172.4 433,172.4 434,172.4 435,172.4 436,172.4 437,172.4 438,172.4 439,172.4 440,172.4 441,172.4 442,172.4 443,172.4 444,172.4 445,172.4 446,172.4 447,172.4 448,172.4 449,172.4 450,172.4 451,172.4 452,172.4 453,172.4 454,172.4 455,172.4 456,172.4 457,172.4 458,172.4 459,172.4 460,172.4 461,172.4 462,172.4 463,172.4 464,172.4 465,172.4 466,172.4 467,172.4 468,172.4 469,172.4 470,172.4 471,172.4 472,172.4 473,172.4 474,172.4 475,172.4 476,172.4 477,169.4 478,169.6 478.3,170.2 478.3,185.2 478,185.1 477,183 476,180.2 475,180.2 474,180.2 473,180.2 472,180.2 471,180.2 470,180.2 469,180.2 468,180.2 467,180.2 466,180.2 465,180.2 464,180.2 463,180.2 462,180.2 461,180.2 460,180.2 459,180.2 458,180.2 457,180.2 456,180.2 455,180.2 454,180.2 453,180.2 452,180.2 451,180.2 450,180.2 449,180.2 448,180.2 447,180.2 446,180.2 445,180.2 444,180.2 443,180.2 442,180.2 441,180.2 440,180.2 439,180.2 438,180.2 437,180.2 436,180.2 435,180.2 434,180.2 433,180.2 432,180.2 431,180.2 430,180.2 429,180.2 428,180.2 427,180.2 426,180.2 425,180.2 424,180.2 423,180.2 422,180.2 421,180.2 420,180.2 419,180.2 418,180.2 417,180.2 416,180.2 415,180.2 414,180.2 413,180.2 412,180.2 411,180.2 410,180.2 409,180.2 408,180.2 407,180.2 406,180.2 405,180.2 404,180.2 403,180.2 402,180.2 401,180.2 400,180.2 399,180.2 398,180.2 397,180.2 396,180.2 395,180.2 394,180.2 393,180.2 392,180.2 391,180.2 390,180.2 389,180.2 388,180.2 387,180.2 386,180.2 385,180.2 384,180.2 383,180.2 382,180.2 381,180.2 380,180.2 379,180.2 378,180.2 377,180.2 376,180.2 375,180.2 374,180.2 373,180.2 372,180.2 371,180.2 370,180.2 369,180.2 368,180.2 367,180.2 366,180.2 365,180.2 364,180.2 363,180.2 362,180.2 361,180.2 360,180.2 359,180.2 358,180.2 357,180.2 356,180.2 355,180.2 354,180.2 353,180.2 352,180.2 351,180.2 350,180.2 349,180.2 348,180.2 347,180.2 346,180.2 345,180.2 344,180.2 343,180.2 342,180.2 341,180.2 340,180.2 339,180.2 338,180.2 337,180.2 336,180.2 335,180.2 334,180.2 333,180.2 332,180.2 331,180.2 330,180.2 329,180.2 328,180.2 327,180.2 326,180.2 325,180.2 324,180.2 323,180.2 322,180.2 321,180.2 320,180.2 319,180.2 318,180.2 317,180.2 316,180.2 315,180.2 314,180.2 313,180.2 312,180.2 311,180.2 310,180.2 309,180.2 308,180.2 307,180.2 306,180.2 305,180.2 304,180.2 303,180.2 302,180.2 301,180.2 300,180.2 299,180.2 298,180.2 297,180.2 296,180.2 295,180.2 294,180.2 293,180.2 292,180.2 291,180.2 290,180.2 289,180.2 288,180.2 287,180.2 286,180.2 285,180.2 284,180.2 283,180.2 282,180.2 281,180.2 280,180.2 279,180.2 278,180.2 277,180.2 276,180.2 275,180.2 274,180.2 273,180.2 272,180.2 271,180.2 270,180.2 269,180.2 268,180.2 267,180.2 266,180.2 265,180.2 264,180.2 263,180.2 262,180.2 261,180.2 260,180.2 259,180.2 258,180.2 257,180.2 256,180.2 255,180.2 254,180.2 253,180.2 252,180.2 251,180.2 250,180.2 249,180.2 248,180.2 247,180.2 246,180.2 245,180.2 244,180.2 243,180.2 242,180.2 241,180.2 240,180.2 239,180.2 238,180.2 237,180.2 236,180.2 235,180.2 234,180.2 233,180.2 232,180.2 231,180.2 230,180.2 229,180.2 228,180.2 227,180.2 226,180.2 225,180.2 224,180.2 223,180.2 222,180.2 221,180.2 220,180.2 219,180.2 218,180.2 217,180.2 216,180.2 215,180.2 214,180.2 213,180.2 212,180.2 211,180.2 210,180.2 209,180.2 208,180.2 207,180.2 206,180.2 205,180.2 204,180.2 203,180.2 202,180.2 201,180.2 200,180.2 199,180.2 198,180.2 197,180.2 196,180.2 195,180.2 194,180.2 193,180.2 192,180.2 191,180.2 190,180.2 189,180.2 188,180.2 187,180.2 186,180.2 185,180.2 184,180.2 183,180.2 182,180.2 181,180.2 180,180.2 179,180.2 178,180.2 177,180.2 176,180.2 175,180.2 174,180.2 173,180.2 172,180.2 171,180.2 170,180.2 169,180.2 168,180.2 167,180.2 166,180.2 165,180.2 164,180.2 163,180.2 162,180.2 161,180.2 160,180.2 159,180.2 158,180.2 157,180.2 156,180.2 155,180.2 154,180.2 153,180.2 152,180.2 151,180.2 150,180.2 149,180.2 148,180.2 147,180.2 146,180.2 145,180.2 144,180.2 143,180.2 142,180.2 141,180.2 140,180.2 139,180.2 138,180.2 137,180.2 136,180.2 135,180.2 134,180.2 133,180.2 132,180.2 131,180.2 130,180.2 129,180.2 128,180.2 127,180.2 126,180.2 125,180.2 124,180.2 123,180.2 122,180.2 121,180.2 120,180.2 119,180.2 118,180.2 117,180.2 116,180.2 115,180.2 114,180.2 113,180.2 112,180.2 111,180.2 110,180.2 109,180.2 108,180.2 107,180.2 106,180.2 105,180.2 104,180.2 103,180.2 102,180.2 101,180.2 100,180.2 99,180.2 98,180.2 97,180.2 96,180.2 95,180.2 94,180.2 93,180.2 92,180.2 91,180.2 90,180.2 89,180.2 88,180.2 87,180.2 86,180.2 85,180.2 84,180.2 83,180.2 82,180.2 81,180.2 80,180.2 79,180.2 78,180.2 77,180.2 76,180.2 75,180.2 74,180.2 73,180.2 72,180.2 71,180.2 70,180.2 69,180.2 68,180.2 67,180.2 66,180.2 65,180.2 64,180.2 63,180.2 62,180.2 61,180.2 60,180.2 59,180.2 58,180.2 57,180.2 56,180.2 55,180.2 54,180.2 53,180.2 52,180.2 51,180.2 50,180.2 49,180.2 48,180.2 47,180.2 46,180.2 45,180.2 44,180.2 43,180.2 42,180.2 41,180.2 40,180.2 39,180.2 38,180.2 37,180.2 36,180.2 35,180.2 34,180.2 33,180.2 32,180.2 31,180.2 30,180.2 29,180.2 28,180.2 27,180.2 26,180.2 25,180.2 24,180.2 23,180.2 22,180.2 21,180.2 20,180.2 19,180.2 18,180.2 17,180.2Z" fill="#00f400"/>
<path d="M584,404.3 585,405 586,406.2 587,406.7 588,406.9 589,406.9 590,406.4 591,406.5 592,406.9 593,406.8 594,406.8 595,406.9 596,406.9 597,406.8 598,406.9 599,406.5 600,406.7 601,406.6 602,406.9 603,406.5 604,406.8 605,407 606,406.9 607,406.8 608,406.4 609,406.6 610,404.3 611,406.5 612,406.7 613,406.6 614,406.7 615,406.4 616,406.9 617,406.8 618,406.6 619,406.4 620,406.8 621,406.8 622,407 623,406.6 624,406.9 625,407 626,406.7 627,406.5 628,406.9 629,406.6 630,406.6 631,406.9 632,406.7 633,406.9 634,406.7 635,406.9 636,406.5 637,406.5 638,406.8 639,406.7 640,406.4 641,406.5 642,406.8 643,406.3 644,407 645,406.8 646,406.6 647,406.5 648,406.8 649,406.6 650,406.7 651,406.6 652,407 653,406.7 654,406.7 655,406.7 656,406.7 657,406.8 658,406.5 659,407 660,406.5 661,406.6 662,406.7 663,406.5 664,407 665,406.8 666,406.7 667,406.5 668,406.9 669,406.7 670,406.5 671,407 672,406.7 673,406.8 674,406.7 675,407 676,407 677,406.7 678,406.6 679,406.9 680,406.9 681,406.6 682,406.9 683,406.8 684,406.7 685,406.5 686,406.8 687,406.9 688,406.6 689,406.5 690,406.4 691,406.5 692,406.7 693,406.9 694,406.5 695,406.4 696,407 697,406.6 698,407 699,406.5 700,406.9 701,406.8 702,406.9 703,406.5 704,406.5 705,406.9 706,406.7 707,406.9 708,404.3 709,406.5 710,406.5 711,406.7 712,406.7 713,406.6 714,406.4 715,406.5 716,406.4 717,406.8 718,406.6 719,406.9 720,406.4 721,406.5 722,406.9 723,406.9 724,406.4 725,406.5 726,406.5 727,406.5 728,406.4 729,406.4 730,406.9 731,406.7 732,406.8 733,406.4 734,406.6 735,405.3 736,406.5 737,406.8 738,406.6 739,406.6 740,404.9 741,406.8 742,406.5 743,406.7 744,406.9 745,407 746,406.5 747,406.7 748,406.4 749,406.6 750,406.6 751,406.6 752,406.4 753,406.7 754,405.7 755,406.4 756,406.7 757,406.6 758,406.7 759,406.5 760,406.6 761,406.7 762,406.9 763,406.6 764,406.8 765,406.8 766,406.7 767,406.8 768,406.5 769,406.5 770,406.7 771,406.8 772,406.8 773,407 774,406.4 775,406.5 776,406.9 777,406.6 778,406.4 779,406.5 780,406.7 781,406.9 782,406.7 783,406.8 784,406.5 785,406.5 786,406.6 787,406.9 788,406.8 789,406.8 790,406.6 791,406.6 792,407 793,407 794,407 795,406.6 796,406.9 797,404.6 798,406.7 799,406.6 800,406.9 801,406.4 802,406.7 803,406.6 804,406.8 805,406.7 806,406.9 807,406.4 808,406.6 809,407 810,406.8 811,406 812,406.5 813,406.9 814,406.4 815,406.5 816,406.7 817,406.6 818,406.6 819,406.9 820,406.8 821,406.7 822,407 823,406.7 824,406.5 825,406.9 826,406.6 827,407 828,406.6 829,406.7 830,407 831,406.8 832,406.6 833,405.9 834,406.9 835,406.4 836,406.9 837,406.5 838,406.5 839,406.7 840,406.6 841,405 842,406.5 843,406.9 844,406.7 845,406.5 846,406.8 847,406.2 848,406.6 849,406.8 850,406.6 851,406.6 852,406.7 853,406.7 854,406.8 855,406.4 856,406.5 857,406.3 858,406.4 859,406.5 860,406.5 861,406.7 862,406.6 863,406.5 864,406.9 865,406.6 866,406.6 867,405.1 868,406.8 869,406.6 870,406.1 871,406.9 872,406.8 873,406.8 874,406.6 875,406.5 876,406.5 877,407 878,406.6 879,406.9 880,406.6 881,406.5 882,406.6 883,406.8 884,406.5 885,406.9 886,406.8 887,407 888,407 889,406.6 890,406.9 891,407 892,406.7 893,406.7 894,406.9 895,406.9 896,406.8 897,407 898,406.6 899,405.1 900,407 901,406.9 902,406.9 903,406.5 904,406.9 905,406.9 906,406.9 907,404.4 908,406.7 909,406.4 910,406.9 911,406.4 912,406.6 913,406.5 914,406.7 915,406.9 916,406.9 917,407 918,406.7 919,406.5 920,406.8 921,407 922,406.5 923,406.5 924,406.9 925,406.5 926,406.5 927,406.8 928,406.6 929,406.7 930,406.6 931,406.4 932,406.4 933,406.5 934,406.6 935,406.5 936,406.7 937,406.7 938,405.2 939,406.8 940,406.6 941,406.9 942,406.5 943,405.3 944,406.4 945,407 946,406.4 947,406.4 948,406.8 949,407 950,406.6 951,406.6 952,406.4 953,406.6 954,406.5 955,406.9 956,406.9 957,406.9 958,406.6 959,404.9 960,406.8 961,406.5 962,406.8 963,406.5 964,406.8 965,406.9 966,406.4 967,406.9 968,406.6 969,407 970,406.6 971,406.6 972,406.4 973,406.7 974,406.5 975,406.8 976,406.7 977,406.4 978,406.9 979,406.7 980,406.5 981,406.9 982,406.6 983,406.4 984,406.6 985,406.4 986,406.9 987,406.9 988,406.6 989,406.5 990,406.6 991,406.5 992,406.8 993,406.9 994,406.5 995,406.5 996,406.5 997,406.5 998,406.5 999,406.5 1000,404.4 1001,406.7 1002,406.5 1003,404.9 1004,407 1005,406.7 1006,406.8 1007,406.5 1008,406.7 1009,406.7 1010,406.6 1011,406.4 1012,407 1013,406.7 1014,406.5 1015,406.5 1016,406.7 1016,418.7 1015,418.6 1014,418.7 1013,418.6 1012,418.9 1011,418.9 1010,418.6 1009,418.8 1008,418.6 1007,418.9 1006,418.9 1005,418.7 1004,418.5 1003,418.7 1002,418.6 1001,418.7 1000,418.9 999,418.6 998,418.7 997,418.6 996,418.7 995,419.1 994,419 993,419 992,418.7 991,419 990,419 989,420.9 988,418.7 987,419 986,418.7 985,418.6 984,418.9 983,418.9 982,419 981,419.1 980,418.8 979,419 978,418.6 977,418.5 976,418.6 975,418.5 974,418.6 973,421.3 972,419.1 971,419 970,418.6 969,418.7 968,418.8 967,418.8 966,419 965,418.5 964,420.2 963,418.9 962,418.6 961,418.6 960,418.9 959,418.9 958,418.6 957,418.6 956,418.6 955,418.9 954,419 953,418.7 952,418.8 951,418.7 950,418.9 949,418.6 948,418.8 947,418.6 946,418.5 945,418.6 944,418.5 943,418.6 942,418.9 941,419 940,418.9 939,419.1 938,418.8 937,418.7 936,418.5 935,418.7 934,419 933,418.6 932,418.6 931,419 930,418.9 929,420.1 928,418.5 927,418.6 926,418.8 925,419.1 924,418.9 923,418.9 922,418.8 921,418.7 920,418.5 919,419.1 918,418.7 917,418.6 916,418.8 915,418.6 914,418.8 913,418.5 912,418.5 911,418.7 910,419.1 909,418.9 908,418.8 907,418.9 906,418.9 905,418.5 904,418.9 903,418.7 902,419 901,418.8 900,418.8 899,418.6 898,418.7 897,418.8 896,419.1 895,419 894,419.1 893,419 892,418.5 891,418.7 890,418.6 889,418.6 888,418.8 887,418.9 886,418.9 885,418.6 884,418.7 883,418.8 882,418.6 881,418.6 880,418.9 879,418.6 878,418.9 877,418.6 876,419 875,418.5 874,418.6 873,418.7 872,419 871,418.8 870,418.5 869,418.9 868,419.1 867,418.7 866,418.9 865,419.1 864,419.3 863,418.9 862,418.8 861,419.1 860,418.7 859,419 858,418.7 857,418.7 856,419.1 855,418.9 854,418.7 853,418.9 852,419 851,418.5 850,419 849,418.9 848,418.9 847,419 846,419 845,419 844,418.7 843,418.8 842,418.8 841,420.8 840,420.3 839,419 838,421.2 837,418.6 836,419.1 835,420.6 834,418.9 833,418.5 832,418.5 831,419 830,418.6 829,418.6 828,418.6 827,418.8 826,420.7 825,418.6 824,418.7 823,418.9 822,418.7 821,418.5 820,418.5 819,418.5 818,418.7 817,419.1 816,420.9 815,418.6 814,419 813,418.6 812,419 811,418.7 810,418.7 809,419 808,418.9 807,418.9 806,418.7 805,418.8 804,418.7 803,418.8 802,418.6 801,418.7 800,419 799,418.7 798,418.5 797,420.1 796,419 795,418.7 794,419 793,418.8 792,418.9 791,418.5 790,419.1 789,418.6 788,418.5 787,418.9 786,419 785,418.8 784,419 783,418.8 782,419 781,418.7 780,418.8 779,418.7 778,418.9 777,418.9 776,418.7 775,418.9 774,420 773,419 772,418.9 771,418.7 770,418.8 769,418.7 768,418.8 767,419.1 766,418.6 765,419.1 764,419.1 763,419.3 762,418.8 761,419 760,418.9 759,418.9 758,418.8 757,418.7 756,418.5 755,419 754,418.9 753,418.8 752,418.5 751,419 750,418.9 749,418.8 748,419 747,419 746,418.7 745,418.6 744,419 743,419.1 742,418.9 741,419.1 740,418.9 739,418.8 738,418.7 737,418.6 736,418.8 735,419.3 734,419 733,419 732,419 731,419 730,418.6 729,419 728,418.8 727,419 726,419 725,419.1 724,418.9 723,418.9 722,418.9 721,419 720,419 719,418.6 718,418.6 717,418.6 716,418.5 715,418.7 714,418.5 713,418.5 712,418.6 711,418.7 710,419.6 709,418.8 708,419 707,418.6 706,418.7 705,418.8 704,418.6 703,418.8 702,419.1 701,418.7 700,418.9 699,420.1 698,418.8 697,418.6 696,418.7 695,418.7 694,420.1 693,418.6 692,419 691,418.8 690,418.8 689,418.6 688,418.8 687,418.8 686,418.5 685,418.6 684,418.6 683,418.6 682,420.6 681,418.7 680,419 679,419.1 678,418.7 677,419 676,418.9 675,420.9 674,419.1 673,418.9 672,418.7 671,418.7 670,418.6 669,418.8 668,418.5 667,419 666,418.8 665,418.7 664,419.1 663,418.6 662,418.9 661,418.8 660,418.8 659,419 658,419 657,418.5 656,419 655,419 654,418.8 653,420.5 652,419 651,418.7 650,419.1 649,419 648,418.9 647,420 646,419 645,418.6 644,418.6 643,418.7 642,418.8 641,419 640,418.9 639,418.8 638,418.6 637,419 636,420 635,419 634,418.8 633,418.6 632,418.9 631,418.9 630,418.7 629,418.7 628,418.9 627,418.8 626,420.6 625,418.9 624,419 623,418.7 622,418.9 621,418.7 620,418.8 619,419 618,418.8 617,420.6 616,419.9 615,419 614,419.1 613,418.8 612,418.6 611,418.6 610,418.6 609,418.5 608,418.5 607,419.1 606,418.6 605,419 604,418.5 603,418.6 602,419 601,418.8 600,419 599,419 598,419 597,419.1 596,418.6 595,418.7 594,419.1 593,419 592,418.9 591,418.8 590,418.8 589,418.5 588,418.6 587,418.6 586,419.8 585,418.7 584,417Z" fill="#006c00"/>
<path d="M584,405 585,406 586,407.5 587,407.3 588,407.4 589,407.1 590,407.2 591,407.1 592,407.2 593,407.4 594,407.4 595,407.3 596,407.1 597,407.3 598,407.3 599,407.2 600,407.3 601,407.4 602,407.3 603,407.3 604,407.5 605,407.2 606,407.4 607,407.3 608,407.3 609,407.4 610,407.2 611,407.2 612,407.4 613,407.1 614,407.1 615,407.5 616,407.2 617,407.4 618,407.2 619,407.4 620,407.4 621,407.4 622,407.3 623,407.4 624,407.5 625,407.4 626,407.4 627,407.3 628,407.3 629,407.3 630,407.3 631,407.4 632,407.2 633,407.3 634,407.3 635,407.2 636,407.4 637,407.3 638,407.2 639,407.4 640,407.1 641,407.3 642,407.3 643,407.2 644,407.4 645,407.2 646,407.3 647,407.4 648,407.3 649,407.4 650,407.1 651,407.5 652,407.3 653,407.4 654,407.4 655,407.1 656,407.3 657,407.3 658,407.2 659,407.4 660,407.4 661,407.3 662,407.4 663,407.4 664,407.5 665,407.5 666,407.4 667,407.5 668,407.2 669,407.1 670,407.3 671,407.5 672,407.3 673,407.2 674,407.3 675,407.2 676,407.3 677,407.5 678,407.5 679,407.2 680,407.5 681,407.4 682,407.2 683,407.4 684,407.3 685,407.4 686,407.1 687,407.2 688,407.4 689,407.4 690,407.5 691,407.2 692,407.3 693,407.3 694,407.1 695,407.4 696,407.1 697,407.1 698,407.4 699,407.3 700,407.5 701,407.2 702,407.5 703,407.3 704,407.3 705,407.3 706,407.1 707,407.3 708,407.3 709,407.1 710,407.2 711,407.1 712,407.4 713,407.4 714,407.4 715,407.3 716,407.1 717,407.1 718,407.4 719,407.3 720,407.3 721,407.1 722,407.2 723,407.4 724,407.2 725,407.2 726,407.2 727,407.5 728,407.2 729,407.2 730,407.4 731,407.1 732,407.3 733,407.2 734,407.3 735,407.3 736,407.3 737,407.2 738,407.2 739,407.1 740,407.2 741,407.2 742,407.4 743,407.5 744,407.5 745,407.1 746,407.3 747,407.2 748,407.4 749,407.4 750,407.2 751,407.4 752,407.4 753,407.1 754,407.2 755,407.1 756,407.1 757,407.1 758,407.2 759,407.2 760,407.5 761,407.2 762,407.2 763,407.3 764,407.1 765,407.4 766,407.3 767,407.4 768,407.3 769,407.4 770,407.3 771,407.3 772,407.1 773,407.1 774,407.4 775,407.1 776,407.3 777,407.5 778,407.5 779,407.2 780,407.1 781,407.4 782,407.2 783,407.2 784,407.4 785,407.4 786,407.4 787,407.5 788,407.3 789,407.3 790,407.2 791,407.2 792,407.1 793,407.2 794,407.5 795,407.1 796,407.3 797,407.3 798,407.3 799,407.5 800,407.4 801,407.5 802,407.4 803,407.3 804,407.1 805,407.2 806,407.2 807,407.5 808,407.4 809,407.4 810,407.1 811,407.1 812,407.2 813,407.2 814,407.4 815,407.4 816,407.4 817,407.3 818,407.4 819,407.3 820,407.3 821,407.5 822,407.3 823,407.2 824,407.2 825,407.5 826,407.3 827,407.2 828,407.2 829,407.3 830,407.1 831,407.4 832,407.5 833,407.5 834,407.3 835,407.3 836,407.4 837,407.4 838,407.1 839,407.3 840,407.5 841,407.2 842,407.4 843,407.5 844,407.4 845,407.2 846,407.3 847,407.2 848,407.2 849,407.1 850,407.4 851,407.4 852,407.2 853,407.4 854,407.2 855,407.3 856,407.3 857,407.5 858,407.1 859,407.5 860,407.3 861,407.2 862,407.2 863,407.1 864,407.3 865,407.3 866,407.2 867,407.3 868,407.5 869,407.2 870,407.4 871,407.3 872,407.4 873,407.4 874,407.4 875,407.3 876,407.5 877,407.2 878,407.4 879,407.2 880,407.3 881,407.5 882,407.4 883,407.1 884,407.1 885,407.2 886,407.1 887,407.1 888,407.4 889,407.3 890,407.4 891,407.3 892,407.4 893,407.3 894,407.2 895,407.3 896,407.2 897,407.2 898,407.4 899,407.3 900,407.4 901,407.2 902,407.3 903,407.4 904,407.4 905,407.4 906,407.2 907,407.4 908,407.2 909,407.2 910,407.4 911,407.4 912,407.1 913,407.2 914,407.2 915,407.4 916,407.2 917,407.3 918,407.4 919,407.2 920,407.2 921,407.3 922,407.4 923,407.4 924,407.4 925,407.2 926,407.2 927,407.3 928,407.2 929,407.5 930,407.3 931,407.3 932,407.5 933,407.3 934,407.4 935,407.4 936,407.3 937,407.5 938,407.3 939,407.4 940,407.1 941,407.3 942,407.4 943,407.4 944,407.3 945,407.5 946,407.4 947,407.4 948,407.5 949,407.4 950,407.4 951,407.3 952,407.2 953,407.4 954,407.3 955,407.5 956,407.4 957,407.2 958,407.3 959,407.2 960,407.4 961,407.3 962,407.5 963,407.4 964,407.5 965,407.4 966,407.3 967,407.2 968,407.1 969,407.3 970,407.4 971,407.4 972,407.4 973,407.3 974,407.4 975,407.1 976,407.5 977,407.3 978,407.4 979,407.4 980,407.1 981,407.3 982,407.2 983,407.3 984,407.4 985,407.3 986,407.4 987,407.5 988,407.1 989,407.2 990,407.3 991,407.4 992,407.2 993,407.2 994,407.3 995,407.3 996,407.3 997,407.3 998,407.4 999,407.2 1000,407.3 1001,407.3 1002,407.3 1003,407.3 1004,407.4 1005,407.1 1006,407.2 1007,407.3 1008,407.1 1009,407.2 1010,407.2 1011,407.2 1012,407.5 1013,407.3 1014,407.2 1015,407.2 1016,407.1 1016,418.2 1015,418.2 1014,418.3 1013,418.4 1012,418.5 1011,418.3 1010,418.2 1009,418.2 1008,418.5 1007,418.1 1006,418.1 1005,418.4 1004,418.3 1003,418.4 1002,418.4 1001,418.2 1000,418.4 999,418.3 998,418.2 997,418.3 996,418.2 995,418.2 994,418.2 993,418.2 992,418.2 991,418.4 990,418.2 989,418.3 988,418.4 987,418.2 986,418.4 985,418.4 984,418.4 983,418.3 982,418.4 981,418.2 980,418.2 979,418.3 978,418.4 977,418.2 976,418.4 975,418.2 974,418.1 973,418.3 972,418.2 971,418.5 970,418.4 969,418.3 968,418.2 967,418.3 966,418.2 965,418.3 964,418.1 963,418.1 962,418.3 961,418.5 960,418.4 959,418.1 958,418.3 957,418.4 956,418.3 955,418.3 954,418.5 953,418.4 952,418.4 951,418.1 950,418.3 949,418.4 948,418.5 947,418.5 946,418.3 945,418.2 944,418.3 943,418.4 942,418.1 941,418.3 940,418.2 939,418.4 938,418.2 937,418.4 936,418.2 935,418.4 934,418.4 933,418.1 932,418.3 931,418.2 930,418.3 929,418.5 928,418.2 927,418.2 926,418.5 925,418.2 924,418.5 923,418.2 922,418.5 921,418.3 920,418.4 919,418.5 918,418.3 917,418.2 916,418.4 915,418.1 914,418.2 913,418.5 912,418.3 911,418.1 910,418.1 909,418.4 908,418.4 907,418.4 906,418.2 905,418.4 904,418.2 903,418.3 902,418.4 901,418.4 900,418.3 899,418.3 898,418.5 897,418.3 896,418.4 895,418.2 894,418.2 893,418.3 892,418.3 891,418.2 890,418.3 889,418.2 888,418.3 887,418.3 886,418.4 885,418.3 884,418.4 883,418.2 882,418.4 881,418.1 880,418.4 879,418.1 878,418.4 877,418.4 876,418.4 875,418.1 874,418.5 873,418.4 872,418.4 871,418.4 870,418.1 869,418.1 868,418.4 867,418.5 866,418.4 865,418.2 864,418.2 863,418.4 862,418.2 861,418.3 860,418.2 859,418.3 858,418.5 857,418.3 856,418.2 855,418.4 854,418.2 853,418.2 852,418.5 851,418.1 850,418.3 849,418.1 848,418.1 847,418.3 846,418.2 845,418.4 844,418.1 843,418.3 842,418.4 841,418.4 840,418.1 839,418.2 838,418.4 837,418.2 836,418.2 835,418.5 834,418.2 833,418.4 832,418.2 831,418.1 830,418.3 829,418.3 828,418.4 827,418.2 826,418.2 825,418.3 824,418.2 823,418.2 822,418.2 821,418.1 820,418.3 819,418.3 818,418.3 817,418.4 816,418.2 815,418.2 814,418.5 813,418.3 812,418.2 811,418.3 810,418.5 809,418.4 808,418.2 807,418.4 806,418.5 805,418.1 804,418.3 803,418.2 802,418.5 801,418.5 800,418.4 799,418.2 798,418.4 797,418.5 796,418.1 795,418.2 794,418.3 793,418.1 792,418.4 791,418.5 790,418.4 789,418.1 788,418.2 787,418.1 786,418.5 785,418.5 784,418.3 783,418.4 782,418.3 781,418.5 780,418.4 779,418.3 778,418.2 777,418.2 776,418.2 775,418.3 774,418.3 773,418.5 772,418.2 771,418.2 770,418.4 769,418.2 768,418.3 767,418.2 766,418.3 765,418.4 764,418.5 763,418.4 762,418.2 761,418.4 760,418.5 759,418.3 758,418.3 757,418.4 756,418.3 755,418.2 754,418.2 753,418.3 752,418.2 751,418.3 750,418.1 749,418.2 748,418.5 747,418.4 746,418.3 745,418.1 744,418.4 743,418.3 742,418.4 741,418.3 740,418.2 739,418.3 738,418.1 737,418.2 736,418.1 735,418.5 734,418.4 733,418.4 732,418.3 731,418.5 730,418.5 729,418.2 728,418.2 727,418.3 726,418.4 725,418.2 724,418.3 723,418.1 722,418.1 721,418.1 720,418.3 719,418.5 718,418.4 717,418.4 716,418.1 715,418.2 714,418.4 713,418.3 712,418.4 711,418.4 710,418.4 709,418.4 708,418.2 707,418.2 706,418.5 705,418.5 704,418.4 703,418.4 702,418.4 701,418.3 700,418.4 699,418.4 698,418.2 697,418.3 696,418.4 695,418.3 694,418.3 693,418.3 692,418.4 691,418.1 690,418.3 689,418.4 688,418.2 687,418.2 686,418.5 685,418.2 684,418.3 683,418.5 682,418.5 681,418.3 680,418.2 679,418.4 678,418.1 677,418.1 676,418.5 675,418.4 674,418.1 673,418.4 672,418.2 671,418.5 670,418.5 669,418.5 668,418.4 667,418.2 666,418.2 665,418.4 664,418.2 663,418.4 662,418.4 661,418.2 660,418.5 659,418.3 658,418.2 657,418.3 656,418.2 655,418.4 654,418.3 653,418.5 652,418.3 651,418.2 650,418.4 649,418.1 648,418.3 647,418.5 646,418.4 645,418.4 644,418.2 643,418.5 642,418.4 641,418.2 640,418.3 639,418.4 638,418.4 637,418.1 636,418.4 635,418.3 634,418.2 633,418.2 632,418.5 631,418.1 630,418.2 629,418.2 628,418.5 627,418.5 626,418.3 625,418.3 624,418.2 623,418.2 622,418.2 621,418.3 620,418.2 619,418.4 618,418.5 617,418.3 616,418.4 615,418.1 614,418.3 613,418.1 612,418.4 611,418.4 610,418.4 609,418.3 608,418.5 607,418.2 606,418.2 605,418.4 604,418.2 603,418.1 602,418.3 601,418.2 600,418.3 599,418.4 598,418.2 597,418.5 596,418.5 595,418.5 594,418.1 593,418.5 592,418.4 591,418.3 590,418.2 589,418.3 588,418.5 587,418.4 586,418.2 585,418.1 584,416.4Z" fill="#00bc00"/>
<path d="M584,405.1 585,406.3 586,408.1 587,408.4 588,408.4 589,408.4 590,408.4 591,408.4 592,408.4 593,408.4 594,408.4 595,408.4 596,408.4 597,408.4 598,408.4 599,408.4 600,408.4 601,408.4 602,408.4 603,408.4 604,408.4 605,408.4 606,408.4 607,408.4 608,408.4 609,408.4 610,408.4 611,408.4 612,408.4 613,408.4 614,408.4 615,408.4 616,408.4 617,408.4 618,408.4 619,408.4 620,408.4 621,408.4 622,408.4 623,408.4 624,408.4 625,408.4 626,408.4 627,408.4 628,408.4 629,408.4 630,408.4 631,408.4 632,408.4 633,408.4 634,408.4 635,408.4 636,408.4 637,408.4 638,408.4 639,408.4 640,408.4 641,408.4 642,408.4 643,408.4 644,408.4 645,408.4 646,408.4 647,408.4 648,408.4 649,408.4 650,408.4 651,408.4 652,408.4 653,408.4 654,408.4 655,408.4 656,408.4 657,408.4 658,408.4 659,408.4 660,408.4 661,408.4 662,408.4 663,408.4 664,408.4 665,408.4 666,408.4 667,408.4 668,408.4 669,408.4 670,408.4 671,408.4 672,408.4 673,408.4 674,408.4 675,408.4 676,408.4 677,408.4 678,408.4 679,408.4 680,408.4 681,408.4 682,408.4 683,408.4 684,408.4 685,408.4 686,408.4 687,408.4 688,408.4 689,408.4 690,408.4 691,408.4 692,408.4 693,408.4 694,408.4 695,408.4 696,408.4 697,408.4 698,408.4 699,408.4 700,408.4 701,408.4 702,408.4 703,408.4 704,408.4 705,408.4 706,408.4 707,408.4 708,408.4 709,408.4 710,408.4 711,408.4 712,408.4 713,408.4 714,408.4 715,408.4 716,408.4 717,408.4 718,408.4 719,408.4 720,408.4 721,408.4 722,408.4 723,408.4 724,408.4 725,408.4 726,408.4 727,408.4 728,408.4 729,408.4 730,408.4 731,408.4 732,408.4 733,408.4 734,408.4 735,408.4 736,408.4 737,408.4 738,408.4 739,408.4 740,408.4 741,408.4 742,408.4 743,408.4 744,408.4 745,408.4 746,408.4 747,408.4 748,408.4 749,408.4 750,408.4 751,408.4 752,408.4 753,408.4 754,408.4 755,408.4 756,408.4 757,408.4 758,408.4 759,408.4 760,408.4 761,408.4 762,408.4 763,408.4 764,408.4 765,408.4 766,408.4 767,408.4 768,408.4 769,408.4 770,408.4 771,408.4 772,408.4 773,408.4 774,408.4 775,408.4 776,408.4 777,408.4 778,408.4 779,408.4 780,408.4 781,408.4 782,408.4 783,408.4 784,408.4 785,408.4 786,408.4 787,408.4 788,408.4 789,408.4 790,408.4 791,408.4 792,408.4 793,408.4 794,408.4 795,408.4 796,408.4 797,408.4 798,408.4 799,408.4 800,408.4 801,408.4 802,408.4 803,408.4 804,408.4 805,408.4 806,408.4 807,408.4 808,408.4 809,408.4 810,408.4 811,408.4 812,408.4 813,408.4 814,408.4 815,408.4 816,408.4 817,408.4 818,408.4 819,408.4 820,408.4 821,408.4 822,408.4 823,408.4 824,408.4 825,408.4 826,408.4 827,408.4 828,408.4 829,408.4 830,408.4 831,408.4 832,408.4 833,408.4 834,408.4 835,408.4 836,408.4 837,408.4 838,408.4 839,408.4 840,408.4 841,408.4 842,408.4 843,408.4 844,408.4 845,408.4 846,408.4 847,408.4 848,408.4 849,408.4 850,408.4 851,408.4 852,408.4 853,408.4 854,408.4 855,408.4 856,408.4 857,408.4 858,408.4 859,408.4 860,408.4 861,408.4 862,408.4 863,408.4 864,408.4 865,408.4 866,408.4 867,408.4 868,408.4 869,408.4 870,408.4 871,408.4 872,408.4 873,408.4 874,408.4 875,408.4 876,408.4 877,408.4 878,408.4 879,408.4 880,408.4 881,408.4 882,408.4 883,408.4 884,408.4 885,408.4 886,408.4 887,408.4 888,408.4 889,408.4 890,408.4 891,408.4 892,408.4 893,408.4 894,408.4 895,408.4 896,408.4 897,408.4 898,408.4 899,408.4 900,408.4 901,408.4 902,408.4 903,408.4 904,408.4 905,408.4 906,408.4 907,408.4 908,408.4 909,408.4 910,408.4 911,408.4 912,408.4 913,408.4 914,408.4 915,408.4 916,408.4 917,408.4 918,408.4 919,408.4 920,408.4 921,408.4 922,408.4 923,408.4 924,408.4 925,408.4 926,408.4 927,408.4 928,408.4 929,408.4 930,408.4 931,408.4 932,408.4 933,408.4 934,408.4 935,408.4 936,408.4 937,408.4 938,408.4 939,408.4 940,408.4 941,408.4 942,408.4 943,408.4 944,408.4 945,408.4 946,408.4 947,408.4 948,408.4 949,408.4 950,408.4 951,408.4 952,408.4 953,408.4 954,408.4 955,408.4 956,408.4 957,408.4 958,408.4 959,408.4 960,408.4 961,408.4 962,408.4 963,408.4 964,408.4 965,408.4 966,408.4 967,408.4 968,408.4 969,408.4 970,408.4 971,408.4 972,408.4 973,408.4 974,408.4 975,408.4 976,408.4 977,408.4 978,408.4 979,408.4 980,408.4 981,408.4 982,408.4 983,408.4 984,408.4 985,408.4 986,408.4 987,408.4 988,408.4 989,408.4 990,408.4 991,408.4 992,408.4 993,408.4 994,408.4 995,408.4 996,408.4 997,408.4 998,408.4 999,408.4 1000,408.4 1001,408.4 1002,408.4 1003,408.4 1004,408.4 1005,408.4 1006,408.4 1007,408.4 1008,408.4 1009,408.4 1010,408.4 1011,408.4 1012,408.4 1013,408.4 1014,408.4 1015,408.4 1016,408.4 1016,416.4 1015,416.4 1014,416.4 1013,416.4 1012,416.4 1011,416.4 1010,416.4 1009,416.4 1008,416.4 1007,416.4 1006,416.4 1005,416.4 1004,416.4 1003,416.4 1002,416.4 1001,416.4 1000,416.4 999,416.4 998,416.4 997,416.4 996,416.4 995,416.4 994,416.4 993,416.4 992,416.4 991,416.4 990,416.4 989,416.4 988,416.4 987,416.4 986,416.4 985,416.4 984,416.4 983,416.4 982,416.4 981,416.4 980,416.4 979,416.4 978,416.4 977,416.4 976,416.4 975,416.4 974,416.4 973,416.4 972,416.4 971,416.4 970,416.4 969,416.4 968,416.4 967,416.4 966,416.4 965,416.4 964,416.4 963,416.4 962,416.4 961,416.4 960,416.4 959,416.4 958,416.4 957,416.4 956,416.4 955,416.4 954,416.4 953,416.4 952,416.4 951,416.4 950,416.4 949,416.4 948,416.4 947,416.4 946,416.4 945,416.4 944,416.4 943,416.4 942,416.4 941,416.4 940,416.4 939,416.4 938,416.4 937,416.4 936,416.4 935,416.4 934,416.4 933,416.4 932,416.4 931,416.4 930,416.4 929,416.4 928,416.4 927,416.4 926,416.4 925,416.4 924,416.4 923,416.4 922,416.4 921,416.4 920,416.4 919,416.4 918,416.4 917,416.4 916,416.4 915,416.4 914,416.4 913,416.4 912,416.4 911,416.4 910,416.4 909,416.4 908,416.4 907,416.4 906,416.4 905,416.4 904,416.4 903,416.4 902,416.4 901,416.4 900,416.4 899,416.4 898,416.4 897,416.4 896,416.4 895,416.4 894,416.4 893,416.4 892,416.4 891,416.4 890,416.4 889,416.4 888,416.4 887,416.4 886,416.4 885,416.4 884,416.4 883,416.4 882,416.4 881,416.4 880,416.4 879,416.4 878,416.4 877,416.4 876,416.4 875,416.4 874,416.4 873,416.4 872,416.4 871,416.4 870,416.4 869,416.4 868,416.4 867,416.4 866,416.4 865,416.4 864,416.4 863,416.4 862,416.4 861,416.4 860,416.4 859,416.4 858,416.4 857,416.4 856,416.4 855,416.4 854,416.4 853,416.4 852,416.4 851,416.4 850,416.4 849,416.4 848,416.4 847,416.4 846,416.4 845,416.4 844,416.4 843,416.4 842,416.4 841,416.4 840,416.4 839,416.4 838,416.4 837,416.4 836,416.4 835,416.4 834,416.4 833,416.4 832,416.4 831,416.4 830,416.4 829,416.4 828,416.4 827,416.4 826,416.4 825,416.4 824,416.4 823,416.4 822,416.4 821,416.4 820,416.4 819,416.4 818,416.4 817,416.4 816,416.4 815,416.4 814,416.4 813,416.4 812,416.4 811,416.4 810,416.4 809,416.4 808,416.4 807,416.4 806,416.4 805,416.4 804,416.4 803,416.4 802,416.4 801,416.4 800,416.4 799,416.4 798,416.4 797,416.4 796,416.4 795,416.4 794,416.4 793,416.4 792,416.4 791,416.4 790,416.4 789,416.4 788,416.4 787,416.4 786,416.4 785,416.4 784,416.4 783,416.4 782,416.4 781,416.4 780,416.4 779,416.4 778,416.4 777,416.4 776,416.4 775,416.4 774,416.4 773,416.4 772,416.4 771,416.4 770,416.4 769,416.4 768,416.4 767,416.4 766,416.4 765,416.4 764,416.4 763,416.4 762,416.4 761,416.4 760,416.4 759,416.4 758,416.4 757,416.4 756,416.4 755,416.4 754,416.4 753,416.4 752,416.4 751,416.4 750,416.4 749,416.4 748,416.4 747,416.4 746,416.4 745,416.4 744,416.4 743,416.4 742,416.4 741,416.4 740,416.4 739,416.4 738,416.4 737,416.4 736,416.4 735,416.4 734,416.4 733,416.4 732,416.4 731,416.4 730,416.4 729,416.4 728,416.4 727,416.4 726,416.4 725,416.4 724,416.4 723,416.4 722,416.4 721,416.4 720,416.4 719,416.4 718,416.4 717,416.4 716,416.4 715,416.4 714,416.4 713,416.4 712,416.4 711,416.4 710,416.4 709,416.4 708,416.4 707,416.4 706,416.4 705,416.4 704,416.4 703,416.4 702,416.4 701,416.4 700,416.4 699,416.4 698,416.4 697,416.4 696,416.4 695,416.4 694,416.4 693,416.4 692,416.4 691,416.4 690,416.4 689,416.4 688,416.4 687,416.4 686,416.4 685,416.4 684,416.4 683,416.4 682,416.4 681,416.4 680,416.4 679,416.4 678,416.4 677,416.4 676,416.4 675,416.4 674,416.4 673,416.4 672,416.4 671,416.4 670,416.4 669,416.4 668,416.4 667,416.4 666,416.4 665,416.4 664,416.4 663,416.4 662,416.4 661,416.4 660,416.4 659,416.4 658,416.4 657,416.4 656,416.4 655,416.4 654,416.4 653,416.4 652,416.4 651,416.4 650,416.4 649,416.4 648,416.4 647,416.4 646,416.4 645,416.4 644,416.4 643,416.4 642,416.4 641,416.4 640,416.4 639,416.4 638,416.4 637,416.4 636,416.4 635,416.4 634,416.4 633,416.4 632,416.4 631,416.4 630,416.4 629,416.4 628,416.4 627,416.4 626,416.4 625,416.4 624,416.4 623,416.4 622,416.4 621,416.4 620,416.4 619,416.4 618,416.4 617,416.4 616,416.4 615,416.4 614,416.4 613,416.4 612,416.4 611,416.4 610,416.4 609,416.4 608,416.4 607,416.4 606,416.4 605,416.4 604,416.4 603,416.4 602,416.4 601,416.4 600,416.4 599,416.4 598,416.4 597,416.4 596,416.4 595,416.4 594,416.4 593,416.4 592,416.4 591,416.4 590,416.4 589,416.4 588,416.4 587,416.4 586,417 585,417.6 584,416.1Z" fill="#00f400"/>
<path d="M478,176.8 479,177 480,178.1 481,179.6 482,180.8 483,181.9 484,183.2 485,185.5 486,187.6 487,189.9 488,192.3 489,194.4 490,196.4 491,198.7 492,200.8 493,203.3 494,205.4 495,207.4 496,209.6 497,212 498,213.9 499,216.3 500,218.7 501,220.6 502,222.9 503,225.1 504,227.2 505,229.4 506,231.5 507,233.8 508,236.2 509,238.3 510,240.6 511,242.6 512,244.9 513,247.1 514,249.4 515,251.5 516,253.6 517,255.7 518,257.9 519,260 520,262.3 521,264.6 522,266.6 523,269.1 524,271.1 525,273.4 526,275.5 527,277.8 528,280 529,282.1 530,284.3 531,286.7 532,288.8 533,290.7 534,293 535,295.1 536,297.3 537,299.6 538,301.9 539,304.2 540,306.1 541,308.4 542,310.7 543,312.6 544,315.1 545,317.3 546,319.4 547,321.6 548,323.8 549,325.8 550,328.2 551,330.4 552,332.4 553,334.5 554,337.1 555,339.1 556,341.3 557,343.6 558,345.7 559,347.9 560,349.9 561,352.4 562,354.3 563,356.6 564,358.8 565,361.1 566,363.1 567,365.5 568,367.4 569,369.7 570,371.8 571,374.3 572,376.3 573,378.7 574,380.7 575,383.1 576,385.2 577,387.4 578,389.4 579,391.6 580,393.9 581,397.1 582,400.2 583,403.3 584,406.2 585,409.3 586,411.7 586,413.8 585,414.8 584,414 583,412.9 582,411.7 581,410.3 580,409 579,406.6 578,404.4 577,402.2 576,400.2 575,397.9 574,395.8 573,393.6 572,391.4 571,389.1 570,387 569,384.8 568,382.4 567,380.5 566,378 565,376 564,373.8 563,371.6 562,369.4 561,367.2 560,365 559,363 558,360.6 557,358.6 556,356.2 555,354.3 554,352 553,349.6 552,347.6 551,345.2 550,342.9 549,340.8 548,338.8 547,336.5 546,334.2 545,332 544,329.8 543,327.6 542,325.7 541,323.5 540,321.1 539,319.1 538,316.8 537,314.7 536,312.3 535,310.2 534,307.9 533,305.9 532,303.5 531,301.6 530,299.4 529,297 528,294.9 527,292.7 526,290.4 525,288.4 524,286 523,283.9 522,281.6 521,279.6 520,277.5 519,275.3 518,272.9 517,270.6 516,268.6 515,266.5 514,264.3 513,262 512,259.8 511,257.6 510,255.3 509,253.3 508,251.1 507,249 506,246.6 505,244.3 504,242.2 503,240.2 502,237.8 501,235.8 500,233.6 499,231.3 498,229 497,226.8 496,224.7 495,222.4 494,220.4 493,218.3 492,215.9 491,213.7 490,211.4 489,209.4 488,207.3 487,204.9 486,202.9 485,200.5 484,198.4 483,195.5 482,192.5 481,189.1 480,186 479,182.9 478,179.9Z" fill="#006c00"/>
<path d="M478,176.8 479,177 480,178.5 481,179.8 482,181.3 483,182.8 484,184.2 485,186.5 486,188.5 487,190.8 488,193 489,195.1 490,197.2 491,199.6 492,201.7 493,203.9 494,206.1 495,208.3 496,210.4 497,212.7 498,215 499,217.1 500,219.4 501,221.5 502,223.7 503,225.8 504,228 505,230.3 506,232.3 507,234.6 508,236.7 509,239 510,241.3 511,243.3 512,245.5 513,247.8 514,250 515,252.1 516,254.4 517,256.6 518,258.7 519,261 520,263.1 521,265.3 522,267.4 523,269.6 524,271.8 525,274.1 526,276.2 527,278.4 528,280.6 529,282.9 530,285.1 531,287.2 532,289.4 533,291.7 534,293.9 535,296 536,298.3 537,300.3 538,302.6 539,304.7 540,306.9 541,309.1 542,311.4 543,313.4 544,315.6 545,317.9 546,320.1 547,322.2 548,324.4 549,326.6 550,328.9 551,331 552,333.2 553,335.5 554,337.6 555,339.9 556,342.1 557,344.3 558,346.5 559,348.7 560,350.8 561,353 562,355.3 563,357.4 564,359.5 565,361.8 566,364.1 567,366.1 568,368.4 569,370.5 570,372.6 571,375 572,377.2 573,379.3 574,381.5 575,383.8 576,385.9 577,388.2 578,390.3 579,392.4 580,394.6 581,397.6 582,400.5 583,403.7 584,406.5 585,409.5 586,411.8 586,413.8 585,414.6 584,413.9 583,412.3 582,410.9 581,409.5 580,408.2 579,406 578,403.8 577,401.6 576,399.3 575,397.2 574,395 573,392.8 572,390.6 571,388.5 570,386.3 569,384 568,381.8 567,379.6 566,377.5 565,375.1 564,373 563,370.8 562,368.7 561,366.4 560,364.2 559,362 558,360 557,357.8 556,355.6 555,353.2 554,351.1 553,348.9 552,346.8 551,344.6 550,342.3 549,340.2 548,337.9 547,335.8 546,333.6 545,331.3 544,329.2 543,327.1 542,324.9 541,322.6 540,320.4 539,318.3 538,316 537,313.8 536,311.6 535,309.5 534,307.3 533,305.1 532,302.9 531,300.6 530,298.5 529,296.4 528,294.1 527,292 526,289.7 525,287.6 524,285.4 523,283.2 522,280.9 521,278.7 520,276.6 519,274.4 518,272.1 517,270.1 516,267.8 515,265.6 514,263.4 513,261.2 512,259 511,256.9 510,254.6 509,252.5 508,250.2 507,248 506,245.8 505,243.6 504,241.5 503,239.2 502,237 501,234.8 500,232.7 499,230.5 498,228.3 497,226.2 496,223.9 495,221.7 494,219.6 493,217.5 492,215.1 491,213 490,210.9 489,208.6 488,206.3 487,204.3 486,202 485,199.8 484,197.6 483,194.7 482,191.8 481,188.7 480,185.7 479,182.7 478,179.7Z" fill="#00bc00"/>
<path d="M478,176.9 479,177.3 480,178.7 481,180.1 482,181.5 483,182.9 484,184.4 485,186.6 486,188.8 487,190.9 488,193.1 489,195.3 490,197.5 491,199.7 492,201.9 493,204.1 494,206.3 495,208.5 496,210.7 497,212.9 498,215.1 499,217.3 500,219.5 501,221.6 502,223.8 503,226 504,228.2 505,230.4 506,232.6 507,234.8 508,237 509,239.2 510,241.4 511,243.6 512,245.8 513,248 514,250.1 515,252.3 516,254.5 517,256.7 518,258.9 519,261.1 520,263.3 521,265.5 522,267.7 523,269.9 524,272.1 525,274.3 526,276.5 527,278.7 528,280.8 529,283 530,285.2 531,287.4 532,289.6 533,291.8 534,294 535,296.2 536,298.4 537,300.6 538,302.8 539,305 540,307.2 541,309.3 542,311.5 543,313.7 544,315.9 545,318.1 546,320.3 547,322.5 548,324.7 549,326.9 550,329.1 551,331.3 552,333.5 553,335.7 554,337.9 555,340 556,342.2 557,344.4 558,346.6 559,348.8 560,351 561,353.2 562,355.4 563,357.6 564,359.8 565,362 566,364.2 567,366.4 568,368.5 569,370.7 570,372.9 571,375.1 572,377.3 573,379.5 574,381.7 575,383.9 576,386.1 577,388.3 578,390.5 579,392.7 580,394.9 581,397.8 582,400.8 583,403.7 584,406.7 585,409.7 586,412 586,413.6 585,414.4 584,413.6 583,412.2 582,410.8 581,409.4 580,407.9 579,405.7 578,403.6 577,401.4 576,399.2 575,397 574,394.8 573,392.6 572,390.4 571,388.2 570,386 569,383.8 568,381.6 567,379.4 566,377.2 565,375 564,372.9 563,370.7 562,368.5 561,366.3 560,364.1 559,361.9 558,359.7 557,357.5 556,355.3 555,353.1 554,350.9 553,348.7 552,346.5 551,344.4 550,342.2 549,340 548,337.8 547,335.6 546,333.4 545,331.2 544,329 543,326.8 542,324.6 541,322.4 540,320.2 539,318 538,315.8 537,313.7 536,311.5 535,309.3 534,307.1 533,304.9 532,302.7 531,300.5 530,298.3 529,296.1 528,293.9 527,291.7 526,289.5 525,287.3 524,285.2 523,283 522,280.8 521,278.6 520,276.4 519,274.2 518,272 517,269.8 516,267.6 515,265.4 514,263.2 513,261 512,258.8 511,256.6 510,254.5 509,252.3 508,250.1 507,247.9 506,245.7 505,243.5 504,241.3 503,239.1 502,236.9 501,234.7 500,232.5 499,230.3 498,228.1 497,226 496,223.8 495,221.6 494,219.4 493,217.2 492,215 491,212.8 490,210.6 489,208.4 488,206.2 487,204 486,201.8 485,199.6 484,197.4 483,194.5 482,191.5 481,188.6 480,185.6 479,182.6 478,179.7Z" fill="#00f400"/>
<path d="M17,501.9 18,502.3 19,501.7 20,501.9 21,501.9 22,501.4 23,502.4 24,502 25,502.1 26,501.7 27,501.4 28,502.3 29,501.4 30,502.3 31,502.3 32,501.9 33,501.7 34,499.1 35,502 36,502.1 37,501.6 38,501.4 39,501.3 40,501.6 41,501.7 42,502.3 43,502.3 44,501.9 45,501.7 46,501.5 47,501.9 48,501.7 49,501.8 50,501.9 51,502.1 52,501.7 53,502.1 54,501.3 55,501.4 56,501.6 57,501.4 58,501.6 59,502 60,501.4 61,502.1 62,502.1 63,501.4 64,501.3 65,502.1 66,501.6 67,502.2 68,501.5 69,502.1 70,501.5 71,501.3 72,501.3 73,501.3 74,501.7 75,501.2 76,501.3 77,501.4 78,501.7 79,501.3 80,501.2 81,501.3 82,501.3 83,501.4 84,501.4 85,501.9 86,501.3 87,502 88,501.7 89,501.7 90,501.6 91,501.6 92,501.9 93,501.3 94,501.7 95,501.4 96,501.3 97,500.2 98,501.5 99,501.9 100,501.4 101,501.4 102,501.1 103,502 104,502.1 105,501.4 106,501.8 107,501.5 108,501.1 109,501.7 110,501.3 111,502 112,502 113,501.4 114,501.8 115,501.8 116,501.7 117,501.3 118,501.9 119,501.1 120,501.3 121,501 122,501.8 123,501.7 124,501.8 125,501.8 126,501.7 127,501.6 128,501.5 129,501.3 130,501.9 131,501.1 132,501.7 133,501 134,501.8 135,501.8 136,501.7 137,501.6 138,500.9 139,500.9 140,501.1 141,501.8 142,501.2 143,501.5 144,500.3 145,501 146,500.9 147,498.8 148,501.2 149,501.5 150,501 151,501.1 152,500.8 153,501.6 154,501.7 155,501.6 156,500.8 157,501.2 158,501.2 159,501.7 160,501.2 161,500.8 162,501.3 163,501 164,500.8 165,501.4 166,500.9 167,500.7 168,501.1 169,501.1 170,501.2 171,498.7 172,501.1 173,501.5 174,501 175,500.6 176,500.7 177,500.6 178,500.8 179,501.3 180,500.7 181,500.8 182,501.1 183,501.1 184,500.9 185,501 186,500.7 187,500.3 188,501.1 189,500.7 190,500.4 191,500.3 192,501 193,500.8 194,500.3 195,500.2 196,500.9 197,500.4 198,500.9 199,501.1 200,500.8 201,500.8 202,500.2 203,499.9 204,500.5 205,500.7 206,500.9 207,500.8 208,500.6 209,499.9 210,500.6 211,500.5 212,500.6 213,500.3 214,500.6 215,500.2 216,499.9 217,500.1 218,499.9 219,499.9 220,500.4 221,500.5 222,500.2 223,499.7 224,500.1 225,500.3 226,500.2 227,499.8 228,500.4 229,500.2 230,499.7 231,499.7 232,500 233,500 234,500.1 235,500.3 236,499.8 237,499.4 238,499.6 239,500.2 240,500.1 241,499.7 242,499.7 243,499.5 244,499.3 245,499.7 246,499.1 247,499.6 248,499.3 249,499.3 250,499.4 251,499.9 252,499.5 253,498.9 254,499.8 255,499.4 256,498.9 257,499.5 258,499.4 259,499.2 260,499 261,498.8 262,499.3 263,499.5 264,499.4 265,499.1 266,498.9 267,498.7 268,499 269,499.1 270,498.7 271,498.3 272,499.2 273,498.8 274,498.5 275,498.4 276,498 277,498 278,498.4 279,498.1 280,497.3 281,498.7 282,498.4 283,498 284,497.9 285,497 286,498 287,497.9 288,497.6 289,498.3 290,497.7 291,498 292,497.7 293,497.6 294,497.7 295,497.7 296,497.9 297,497.9 298,497.2 299,497.9 300,497.6 301,497.4 302,498 303,497.1 304,497.3 305,497.9 306,497.4 307,497 308,497.3 309,496.8 310,497.6 311,497.1 312,497.1 313,497.6 314,497.6 315,496.8 316,497.5 317,497 318,497.1 319,496.7 320,496.6 321,496.6 322,496.3 323,496.3 324,496.5 325,496.5 326,496.5 327,497.1 328,497.1 329,496.9 330,496.8 331,496.9 332,496.8 333,496.4 334,496.3 335,496.9 336,496.8 337,496.2 338,496.6 339,496.4 340,496.7 341,496.7 342,496.5 343,496.1 344,496 345,494.1 346,495.6 347,496.1 348,495.6 349,495.8 350,496.3 351,496.1 352,495.5 353,496.1 354,495.9 355,496 356,495.6 357,495.9 358,495.2 359,495.2 360,495.3 361,495.2 362,495.7 363,495.4 364,494.9 365,495.2 366,495.5 367,495.5 368,495.6 369,495.2 370,494.7 371,494.9 372,495.4 373,494.6 374,494.9 375,495.5 376,495.4 377,495.2 378,494.5 379,494.4 380,495.3 381,494.5 382,494.5 383,495 384,494.3 385,494.7 386,494.2 387,494.2 388,494.9 389,494.4 390,494.2 391,494 392,494.4 393,494.7 394,494.4 395,494 396,494.7 397,494.3 398,494.4 399,494.2 400,494.5 401,494 402,493.8 403,493.9 404,494.4 405,493.5 406,494.4 407,494.5 408,494.2 409,493.5 410,493.8 411,494.2 412,494.1 413,493.4 414,493.5 415,493.4 416,494 417,494 418,493.6 419,493.7 420,493.9 421,493.2 422,494.1 423,493.7 424,493.3 425,492.2 426,493.1 427,493.4 428,493.4 429,493.2 430,491.3 431,492 432,493.1 433,493.1 434,492.8 435,493.1 436,492.5 437,492.5 438,492.9 439,492.9 440,492.4 441,492.7 442,492.5 443,492.3 444,492.4 445,492.4 446,492.4 447,492.7 448,492.4 449,492.2 450,492.6 451,491.9 452,492.2 453,492.6 454,492.4 455,491.8 456,491.6 457,492.1 458,491.4 459,491.3 460,491.6 461,491.4 462,491 463,491.5 464,491 465,491.6 466,490.9 467,490.9 468,491.3 469,491.1 470,490.5 471,490.8 472,489.9 473,489.5 474,489.3 475,489.3 476,488.3 477,487.4 478,442.1 478.2,442.5 478.2,499.8 478,499.4 477,500.9 476,502.8 475,501.9 474,502.5 473,502.9 472,503.4 471,503.2 470,503.8 469,503.1 468,504 467,504.3 466,504 465,507 464,504.3 463,504.2 462,504.5 461,504.7 460,505 459,504.7 458,505.5 457,505.4 456,505.6 455,505.8 454,506.2 453,506.5 452,506.9 451,506.3 450,506.6 449,506.5 448,508.7 447,507 446,506.4 445,506.7 444,507 443,507.2 442,507 441,507.8 440,507.8 439,507.2 438,507.4 437,508 436,508.2 435,508.4 434,508.4 433,508 432,508 431,508.5 430,508.2 429,508.8 428,508.4 427,508.8 426,509.1 425,509 424,509.5 423,509.6 422,509.9 421,509.3 420,509.4 419,509.5 418,509.7 417,510.1 416,511.3 415,510.3 414,510.1 413,510.4 412,510.7 411,510.6 410,510.8 409,512.2 408,511.1 407,510.3 406,511 405,511 404,511.3 403,511.5 402,511.4 401,511.2 400,511.3 399,511.8 398,510.9 397,511.8 396,511.6 395,511.2 394,511.2 393,511.6 392,511.4 391,513.1 390,511.7 389,511.7 388,511.5 387,514.5 386,512.1 385,511.9 384,512 383,512 382,512 381,511.7 380,512 379,511.7 378,511.9 377,512.6 376,512.5 375,512.7 374,512.4 373,512.3 372,512.2 371,512.7 370,512.2 369,513.7 368,512.4 367,512.1 366,512.1 365,512.6 364,513.1 363,512.6 362,513 361,512.4 360,512.9 359,513.3 358,512.7 357,513 356,513 355,513.3 354,513.4 353,512.8 352,513.3 351,513.2 350,513.4 349,513.3 348,513.1 347,512.9 346,512.8 345,512.9 344,513.5 343,513.4 342,513.7 341,513.2 340,513.8 339,513.4 338,513 337,513.6 336,513.3 335,514.1 334,513.8 333,513.7 332,514.3 331,514.1 330,513.9 329,514.1 328,514.1 327,513.5 326,514 325,514.4 324,513.8 323,514 322,513.6 321,513.8 320,514.6 319,514.5 318,513.7 317,514 316,513.9 315,514.6 314,514.2 313,514.8 312,513.9 311,514.2 310,514 309,514.9 308,514.5 307,514.2 306,514.1 305,514.4 304,514.7 303,514.6 302,514.8 301,515.4 300,515.1 299,515.5 298,514.8 297,515.1 296,514.7 295,515.4 294,515 293,515.1 292,515 291,515.6 290,514.9 289,515.2 288,515.1 287,514.9 286,515.9 285,515.3 284,517.7 283,515.1 282,515.9 281,516 280,516 279,515.6 278,516.2 277,516.2 276,516.1 275,515.7 274,515.5 273,516 272,515.9 271,516.4 270,515.9 269,515.6 268,516.6 267,516.6 266,516.5 265,516 264,516.6 263,516.1 262,516.6 261,516.7 260,516.1 259,517.6 258,516.7 257,516.7 256,517.6 255,517 254,516.2 253,517.1 252,516.4 251,517.1 250,516.5 249,516.3 248,517.1 247,517.1 246,516.3 245,516.9 244,516.7 243,516.7 242,516.7 241,517.3 240,517 239,516.5 238,517.3 237,516.6 236,517 235,517.4 234,516.7 233,516.9 232,517.5 231,517.6 230,517 229,516.9 228,517.5 227,517.6 226,517.3 225,516.9 224,517.6 223,517.7 222,517.7 221,517.3 220,517 219,517.3 218,517.6 217,517.7 216,517.8 215,517.7 214,517.3 213,517.2 212,517.2 211,517.3 210,518.7 209,517.8 208,517.2 207,517.8 206,518.2 205,518.2 204,518 203,517.3 202,518 201,517.5 200,518.1 199,518.7 198,517.6 197,517.8 196,517.5 195,517.9 194,517.8 193,517.9 192,517.7 191,517.6 190,517.6 189,517.7 188,517.8 187,517.8 186,517.6 185,518.5 184,518.4 183,517.9 182,518.5 181,517.7 180,518.1 179,519.7 178,518.6 177,518.5 176,518.1 175,517.9 174,518 173,518.6 172,518.3 171,517.8 170,518.1 169,518.2 168,518.5 167,518.4 166,518.6 165,517.9 164,518.6 163,518.6 162,518.6 161,518.6 160,517.9 159,518.2 158,518.4 157,518.6 156,518.3 155,518.4 154,518.6 153,518.9 152,520.5 151,518.6 150,518.2 149,518 148,521.1 147,518.6 146,519 145,518.7 144,518.6 143,518.9 142,520.8 141,518.9 140,518.7 139,518.2 138,519 137,518.5 136,518.9 135,518.7 134,518.6 133,518.8 132,518.8 131,518.5 130,518.8 129,518.2 128,518.5 127,519.1 126,518.7 125,518.4 124,518.3 123,518.2 122,520.7 121,518.2 120,518.8 119,519.1 118,518.5 117,518.3 116,519 115,518.5 114,518.8 113,518.7 112,518.5 111,519 110,518.8 109,519 108,519.6 107,519.1 106,519 105,518.6 104,518.7 103,518.6 102,519 101,518.7 100,518.6 99,518.5 98,518.6 97,520.4 96,518.6 95,519 94,519 93,519.2 92,518.4 91,518.8 90,518.8 89,518.5 88,519.3 87,518.4 86,519.3 85,518.7 84,519.1 83,518.8 82,518.7 81,520.9 80,518.5 79,519.3 78,518.7 77,519.3 76,518.8 75,518.9 74,519.2 73,518.7 72,519.3 71,519 70,518.6 69,518.8 68,519.2 67,518.8 66,519.3 65,519.1 64,518.6 63,518.6 62,518.7 61,519.2 60,518.7 59,519 58,519.3 57,519.4 56,519.3 55,518.6 54,521.4 53,519.3 52,518.6 51,518.6 50,519.8 49,519.4 48,519.9 47,518.8 46,519.4 45,518.8 44,518.7 43,519.1 42,520.8 41,519 40,519.5 39,518.5 38,519.1 37,519.1 36,519.1 35,519.4 34,519.3 33,518.7 32,518.6 31,519.1 30,518.9 29,519.4 28,519 27,519 26,519.1 25,518.9 24,519.4 23,519.1 22,518.8 21,519.4 20,518.9 19,519.5 18,519.2 17,519.1Z" fill="#780078"/>
<path d="M17,503.9 18,504.1 19,503.8 20,504.1 21,504.1 22,504.1 23,504.1 24,503.9 25,503.9 26,503.9 27,504 28,504 29,503.9 30,503.8 31,503.8 32,503.7 33,503.9 34,503.8 35,503.8 36,503.8 37,503.9 38,503.7 39,503.9 40,504 41,504 42,503.8 43,503.6 44,504 45,504 46,503.8 47,503.7 48,503.9 49,503.7 50,504 51,503.6 52,503.7 53,503.7 54,503.9 55,503.8 56,503.9 57,503.7 58,503.6 59,503.6 60,503.6 61,504 62,503.6 63,503.7 64,503.8 65,503.7 66,503.9 67,503.7 68,503.9 69,503.9 70,503.9 71,503.7 72,503.9 73,503.7 74,503.9 75,503.8 76,503.9 77,504 78,503.6 79,503.9 80,503.5 81,503.7 82,503.7 83,503.5 84,503.8 85,503.8 86,503.5 87,503.6 88,503.8 89,503.6 90,503.6 91,503.9 92,503.6 93,503.4 94,503.6 95,503.4 96,503.5 97,503.5 98,503.8 99,503.8 100,503.8 101,503.8 102,503.6 103,503.4 104,503.5 105,503.4 106,503.5 107,503.7 108,503.4 109,503.7 110,503.5 111,503.4 112,503.6 113,503.5 114,503.4 115,503.8 116,503.7 117,503.7 118,503.7 119,503.4 120,503.6 121,503.5 122,503.5 123,503.5 124,503.4 125,503.4 126,503.4 127,503.6 128,503.7 129,503.3 130,503.6 131,503.3 132,503.3 133,503.5 134,503.3 135,503.5 136,503.5 137,503.6 138,503.3 139,503.3 140,503.6 141,503.5 142,503.1 143,503.6 144,503.5 145,503.3 146,503.4 147,503.5 148,503.1 149,503.4 150,503.5 151,503.2 152,503.2 153,503.1 154,503 155,503.4 156,503.1 157,503.4 158,503.3 159,503 160,503.1 161,503.3 162,503.2 163,503.1 164,503.3 165,503.3 166,502.9 167,503.1 168,503.3 169,503.2 170,502.9 171,502.9 172,503.2 173,503.2 174,503.1 175,503 176,502.8 177,502.7 178,502.9 179,503.1 180,503 181,502.8 182,502.7 183,502.7 184,502.6 185,502.7 186,502.7 187,502.7 188,502.9 189,502.6 190,502.7 191,502.6 192,502.7 193,502.5 194,502.6 195,502.6 196,502.8 197,502.4 198,502.4 199,502.7 200,502.8 201,502.5 202,502.5 203,502.4 204,502.3 205,502.7 206,502.2 207,502.3 208,502.2 209,502.2 210,502.2 211,502.4 212,502.2 213,502.1 214,502.2 215,502.3 216,502.2 217,502.3 218,502 219,502.1 220,502.1 221,502.4 222,501.9 223,502.1 224,502.2 225,502.3 226,501.9 227,502.1 228,502.1 229,501.7 230,501.9 231,502.2 232,502.1 233,502 234,501.8 235,501.7 236,501.8 237,501.6 238,501.7 239,501.8 240,501.8 241,501.6 242,501.8 243,501.9 244,501.6 245,501.4 246,501.4 247,501.6 248,501.2 249,501.5 250,501.5 251,501.5 252,501.4 253,501.1 254,501.5 255,501.1 256,501.1 257,501.1 258,501 259,501.3 260,501.2 261,501.1 262,501 263,500.8 264,501.1 265,501.1 266,500.7 267,500.9 268,500.6 269,500.5 270,500.9 271,500.7 272,500.7 273,500.5 274,500.7 275,500.7 276,500.7 277,500.2 278,500.2 279,500.3 280,500.1 281,500.5 282,500.3 283,500 284,500.3 285,500.3 286,500 287,500 288,499.8 289,499.8 290,500.1 291,499.7 292,499.8 293,499.6 294,499.8 295,499.8 296,499.6 297,499.5 298,499.6 299,499.5 300,499.5 301,499.3 302,499.3 303,499.6 304,499.5 305,499.3 306,499.1 307,499.3 308,499 309,499.1 310,499.2 311,499 312,499.3 313,499.1 314,499.1 315,498.8 316,498.8 317,499 318,499.1 319,499 320,499 321,498.8 322,498.7 323,499 324,498.6 325,498.8 326,498.5 327,498.4 328,498.5 329,498.6 330,498.3 331,498.4 332,498.2 333,498.2 334,498.5 335,498.6 336,498.5 337,498.4 338,498.1 339,498 340,498.3 341,498 342,498 343,497.9 344,498.3 345,497.9 346,497.8 347,498 348,497.7 349,498 350,498 351,497.9 352,497.6 353,497.9 354,497.6 355,497.9 356,497.4 357,497.6 358,497.3 359,497.5 360,497.5 361,497.4 362,497.5 363,497.5 364,497.2 365,497.3 366,497.4 367,497.1 368,497.2 369,496.9 370,497 371,497.3 372,497.1 373,496.9 374,496.9 375,497.1 376,496.9 377,497 378,496.7 379,496.7 380,496.8 381,496.7 382,496.9 383,496.9 384,496.6 385,496.6 386,496.4 387,496.5 388,496.7 389,496.2 390,496.5 391,496.5 392,496.2 393,496.2 394,496.3 395,496.4 396,496.4 397,495.9 398,496.1 399,496 400,496.2 401,496 402,495.9 403,495.7 404,496 405,495.8 406,495.7 407,495.8 408,495.6 409,495.7 410,495.8 411,495.8 412,495.9 413,495.4 414,495.6 415,495.5 416,495.7 417,495.7 418,495.8 419,495.6 420,495.3 421,495.2 422,495.1 423,495.2 424,495 425,495 426,495 427,495 428,495.3 429,494.9 430,495.1 431,494.7 432,494.7 433,494.7 434,494.8 435,494.9 436,494.7 437,494.4 438,494.3 439,494.2 440,494.3 441,494.5 442,494.4 443,494.4 444,494.2 445,494.1 446,493.8 447,493.7 448,493.9 449,494 450,493.8 451,493.5 452,493.5 453,493.7 454,493.7 455,493.2 456,493.5 457,493.5 458,493.3 459,493 460,493.2 461,492.9 462,492.8 463,492.8 464,492.7 465,492.6 466,492.2 467,492.2 468,491.9 469,492.1 470,491.8 471,491.4 472,491.4 473,491.3 474,490.7 475,490 476,489.2 477,487.7 478,443.3 478.2,443.3 478.2,498.8 478,498.7 477,499.6 476,500.8 475,501.1 474,501.5 473,502.1 472,502.2 471,502.7 470,502.6 469,502.6 468,502.9 467,503.2 466,503.5 465,503.7 464,504 463,503.9 462,503.8 461,504.2 460,504.4 459,504.7 458,504.4 457,504.8 456,504.8 455,504.9 454,505 453,505.2 452,505.4 451,505.5 450,505.7 449,505.9 448,505.9 447,506.2 446,506 445,506.4 444,506.3 443,506.5 442,506.7 441,506.7 440,506.7 439,507.1 438,507 437,507 436,507 435,507.1 434,507.4 433,507.5 432,507.9 431,507.6 430,507.9 429,508.1 428,508.1 427,508 426,508.4 425,508.2 424,508.5 423,508.8 422,508.9 421,508.6 420,508.6 419,508.9 418,508.9 417,509.2 416,509.3 415,509.4 414,509.5 413,509.4 412,509.5 411,509.6 410,509.7 409,509.6 408,509.9 407,509.9 406,509.8 405,510.3 404,509.9 403,510 402,510.2 401,510.2 400,510.5 399,510.2 398,510.5 397,510.4 396,510.4 395,510.6 394,510.8 393,511 392,511 391,510.8 390,510.7 389,510.8 388,511.1 387,511.1 386,510.8 385,511.1 384,510.9 383,511.2 382,511.3 381,511.4 380,511.3 379,511.1 378,511.4 377,511.1 376,511.4 375,511.6 374,511.5 373,511.6 372,511.7 371,511.6 370,511.5 369,511.6 368,511.5 367,511.8 366,511.7 365,511.9 364,512 363,511.7 362,511.8 361,511.8 360,511.7 359,512.1 358,512 357,512.1 356,512 355,512.2 354,512.2 353,511.9 352,512.3 351,512.4 350,512.2 349,512.4 348,512.4 347,512.2 346,512.2 345,512.4 344,512.3 343,512.4 342,512.6 341,512.4 340,512.5 339,512.5 338,512.6 337,512.9 336,512.6 335,512.8 334,512.7 333,513 332,513 331,512.7 330,512.8 329,512.9 328,512.8 327,513.1 326,512.9 325,513 324,513.3 323,513.3 322,513.1 321,513.1 320,513.3 319,513.3 318,513.3 317,513.1 316,513.2 315,513.6 314,513.6 313,513.4 312,513.7 311,513.5 310,513.8 309,513.9 308,513.5 307,513.8 306,513.9 305,513.7 304,513.7 303,513.7 302,514 301,513.9 300,514.1 299,514 298,514.1 297,513.9 296,514.3 295,513.9 294,514.2 293,514.2 292,514.3 291,514.3 290,514.5 289,514.4 288,514.5 287,514.3 286,514.4 285,514.6 284,514.7 283,514.4 282,514.9 281,514.9 280,514.5 279,514.7 278,515 277,514.7 276,515.1 275,514.8 274,514.9 273,514.9 272,515.1 271,514.9 270,515 269,515.1 268,515.5 267,515.5 266,515.1 265,515.5 264,515.2 263,515.3 262,515.5 261,515.5 260,515.6 259,515.6 258,515.7 257,515.8 256,515.5 255,515.7 254,516 253,515.8 252,515.8 251,515.8 250,516.1 249,516.1 248,515.9 247,515.9 246,516.1 245,515.8 244,515.8 243,515.8 242,516 241,515.9 240,516.2 239,515.9 238,516.3 237,516.3 236,516 235,516.1 234,516.1 233,516.5 232,516.5 231,516.2 230,516.2 229,516.4 228,516.4 227,516.6 226,516.6 225,516.6 224,516.6 223,516.3 222,516.4 221,516.5 220,516.6 219,516.6 218,516.7 217,516.8 216,516.5 215,516.6 214,516.8 213,516.7 212,516.9 211,516.9 210,516.8 209,516.6 208,516.6 207,517 206,516.7 205,517 204,516.9 203,516.8 202,516.9 201,516.7 200,517.1 199,517 198,517.1 197,516.9 196,516.9 195,516.9 194,516.9 193,516.8 192,517 191,517 190,517.1 189,516.9 188,517 187,517.2 186,517.1 185,517 184,517.2 183,517 182,517.3 181,517.1 180,517.1 179,517.2 178,517.3 177,517.5 176,517.1 175,517.6 174,517.5 173,517.3 172,517.3 171,517.1 170,517.2 169,517.2 168,517.7 167,517.7 166,517.7 165,517.4 164,517.6 163,517.6 162,517.5 161,517.6 160,517.7 159,517.6 158,517.5 157,517.5 156,517.7 155,517.4 154,517.6 153,517.7 152,517.5 151,517.4 150,517.6 149,517.7 148,517.6 147,517.6 146,517.7 145,517.5 144,517.9 143,517.6 142,517.6 141,517.7 140,518 139,517.7 138,517.7 137,517.7 136,517.7 135,517.9 134,517.7 133,517.8 132,517.6 131,517.8 130,517.9 129,518 128,517.8 127,517.6 126,517.8 125,518 124,517.6 123,517.8 122,517.9 121,518.1 120,517.9 119,517.9 118,517.7 117,518.1 116,518 115,517.9 114,517.6 113,517.9 112,518 111,517.9 110,518.1 109,518.1 108,518.1 107,518.1 106,518 105,518.1 104,517.9 103,517.8 102,518 101,518 100,518 99,518 98,517.9 97,517.9 96,517.7 95,518 94,517.7 93,518.1 92,518 91,517.8 90,517.7 89,517.8 88,517.8 87,518 86,517.9 85,518.2 84,517.9 83,518.1 82,517.8 81,518 80,518 79,518 78,518 77,517.8 76,518.1 75,518.2 74,517.9 73,518.2 72,518 71,518 70,518.1 69,518.2 68,518.1 67,518.3 66,518.3 65,518 64,517.9 63,518.1 62,518.1 61,518.3 60,517.9 59,518.3 58,518.3 57,518.1 56,517.9 55,518 54,518 53,518.3 52,517.9 51,518.1 50,518.1 49,518.1 48,518.2 47,518.2 46,518 45,518.2 44,518 43,518 42,518.1 41,518 40,518 39,518 38,518.2 37,518.2 36,518.1 35,518.1 34,518.1 33,518.1 32,518.1 31,518.1 30,518 29,518.1 28,518 27,518.4 26,518.2 25,518.2 24,518.3 23,518.1 22,518.3 21,518.4 20,518.5 19,518.2 18,518.2 17,518.1Z" fill="#c800c8"/>
<path d="M17,506.9 18,506.9 19,506.9 20,506.9 21,506.9 22,506.9 23,506.9 24,506.9 25,506.9 26,506.9 27,506.9 28,506.9 29,506.9 30,506.9 31,506.9 32,506.9 33,506.9 34,506.9 35,506.9 36,506.9 37,506.9 38,506.9 39,506.9 40,506.9 41,506.9 42,506.9 43,506.9 44,506.8 45,506.8 46,506.8 47,506.8 48,506.8 49,506.8 50,506.8 51,506.8 52,506.8 53,506.8 54,506.8 55,506.8 56,506.8 57,506.8 58,506.8 59,506.8 60,506.8 61,506.8 62,506.8 63,506.8 64,506.8 65,506.8 66,506.8 67,506.8 68,506.8 69,506.8 70,506.8 71,506.8 72,506.8 73,506.7 74,506.7 75,506.7 76,506.7 77,506.7 78,506.7 79,506.7 80,506.7 81,506.7 82,506.7 83,506.7 84,506.7 85,506.7 86,506.7 87,506.7 88,506.7 89,506.7 90,506.7 91,506.7 92,506.7 93,506.7 94,506.7 95,506.7 96,506.7 97,506.6 98,506.6 99,506.6 100,506.6 101,506.6 102,506.6 103,506.6 104,506.6 105,506.6 106,506.6 107,506.6 108,506.6 109,506.6 110,506.6 111,506.6 112,506.6 113,506.6 114,506.6 115,506.6 116,506.5 117,506.5 118,506.5 119,506.5 120,506.5 121,506.5 122,506.5 123,506.5 124,506.5 125,506.5 126,506.5 127,506.5 128,506.5 129,506.5 130,506.5 131,506.4 132,506.4 133,506.4 134,506.4 135,506.4 136,506.4 137,506.4 138,506.4 139,506.4 140,506.4 141,506.4 142,506.3 143,506.3 144,506.3 145,506.3 146,506.3 147,506.3 148,506.3 149,506.3 150,506.2 151,506.2 152,506.2 153,506.2 154,506.2 155,506.2 156,506.2 157,506.2 158,506.1 159,506.1 160,506.1 161,506.1 162,506.1 163,506.1 164,506.1 165,506 166,506 167,506 168,506 169,506 170,506 171,505.9 172,505.9 173,505.9 174,505.9 175,505.9 176,505.9 177,505.8 178,505.8 179,505.8 180,505.8 181,505.8 182,505.8 183,505.7 184,505.7 185,505.7 186,505.7 187,505.7 188,505.7 189,505.6 190,505.6 191,505.6 192,505.6 193,505.6 194,505.5 195,505.5 196,505.5 197,505.5 198,505.5 199,505.4 200,505.4 201,505.4 202,505.4 203,505.4 204,505.4 205,505.3 206,505.3 207,505.3 208,505.3 209,505.3 210,505.2 211,505.2 212,505.2 213,505.2 214,505.2 215,505.1 216,505.1 217,505.1 218,505.1 219,505.1 220,505 221,505 222,505 223,505 224,505 225,504.9 226,504.9 227,504.9 228,504.8 229,504.8 230,504.8 231,504.8 232,504.7 233,504.7 234,504.7 235,504.7 236,504.6 237,504.6 238,504.6 239,504.5 240,504.5 241,504.5 242,504.5 243,504.4 244,504.4 245,504.4 246,504.3 247,504.3 248,504.3 249,504.2 250,504.2 251,504.2 252,504.1 253,504.1 254,504.1 255,504 256,504 257,504 258,503.9 259,503.9 260,503.8 261,503.8 262,503.8 263,503.7 264,503.7 265,503.6 266,503.6 267,503.5 268,503.5 269,503.5 270,503.4 271,503.4 272,503.3 273,503.3 274,503.2 275,503.2 276,503.2 277,503.1 278,503.1 279,503 280,503 281,502.9 282,502.9 283,502.9 284,502.8 285,502.8 286,502.7 287,502.7 288,502.7 289,502.6 290,502.6 291,502.5 292,502.5 293,502.5 294,502.4 295,502.4 296,502.4 297,502.3 298,502.3 299,502.3 300,502.2 301,502.2 302,502.2 303,502.1 304,502.1 305,502.1 306,502 307,502 308,502 309,501.9 310,501.9 311,501.9 312,501.9 313,501.8 314,501.8 315,501.8 316,501.7 317,501.7 318,501.7 319,501.6 320,501.6 321,501.6 322,501.5 323,501.5 324,501.5 325,501.4 326,501.4 327,501.4 328,501.3 329,501.3 330,501.3 331,501.2 332,501.2 333,501.2 334,501.1 335,501.1 336,501.1 337,501 338,501 339,501 340,500.9 341,500.9 342,500.8 343,500.8 344,500.8 345,500.7 346,500.7 347,500.7 348,500.6 349,500.6 350,500.5 351,500.5 352,500.5 353,500.4 354,500.4 355,500.4 356,500.3 357,500.3 358,500.3 359,500.2 360,500.2 361,500.2 362,500.1 363,500.1 364,500.1 365,500 366,500 367,500 368,499.9 369,499.9 370,499.9 371,499.8 372,499.8 373,499.8 374,499.7 375,499.7 376,499.7 377,499.6 378,499.6 379,499.5 380,499.5 381,499.5 382,499.4 383,499.4 384,499.3 385,499.3 386,499.3 387,499.2 388,499.2 389,499.1 390,499.1 391,499.1 392,499 393,499 394,498.9 395,498.9 396,498.8 397,498.8 398,498.7 399,498.7 400,498.6 401,498.6 402,498.6 403,498.5 404,498.5 405,498.5 406,498.4 407,498.4 408,498.4 409,498.3 410,498.3 411,498.3 412,498.2 413,498.2 414,498.1 415,498.1 416,498 417,498 418,497.9 419,497.9 420,497.8 421,497.7 422,497.7 423,497.6 424,497.5 425,497.5 426,497.4 427,497.3 428,497.3 429,497.2 430,497.1 431,497.1 432,497 433,496.9 434,496.8 435,496.8 436,496.7 437,496.6 438,496.6 439,496.5 440,496.5 441,496.4 442,496.3 443,496.3 444,496.2 445,496.1 446,496 447,496 448,495.9 449,495.8 450,495.7 451,495.6 452,495.5 453,495.5 454,495.4 455,495.3 456,495.2 457,495.1 458,495 459,494.9 460,494.8 461,494.6 462,494.5 463,494.4 464,494.3 465,494.1 466,494 467,493.8 468,493.6 469,493.4 470,493.2 471,493 472,492.8 473,492.4 474,491.9 475,491 476,489.7 477,488.7 478,443.5 478.2,443.5 478.2,498.3 478,498.3 477,499 476,500 475,500.4 474,500.5 473,500.6 472,500.8 471,500.9 470,501.1 469,501.3 468,501.4 467,501.5 466,501.7 465,501.8 464,501.9 463,502.1 462,502.2 461,502.3 460,502.4 459,502.6 458,502.7 457,502.8 456,502.9 455,503 454,503.1 453,503.2 452,503.3 451,503.4 450,503.5 449,503.6 448,503.7 447,503.8 446,504 445,504.1 444,504.2 443,504.3 442,504.4 441,504.5 440,504.6 439,504.7 438,504.8 437,504.9 436,505 435,505.1 434,505.2 433,505.3 432,505.4 431,505.5 430,505.6 429,505.6 428,505.7 427,505.8 426,505.9 425,506 424,506.1 423,506.1 422,506.2 421,506.3 420,506.4 419,506.4 418,506.5 417,506.5 416,506.6 415,506.7 414,506.7 413,506.8 412,506.9 411,506.9 410,507 409,507.1 408,507.1 407,507.2 406,507.2 405,507.3 404,507.4 403,507.4 402,507.5 401,507.5 400,507.6 399,507.6 398,507.7 397,507.7 396,507.7 395,507.8 394,507.8 393,507.8 392,507.9 391,507.9 390,508 389,508 388,508 387,508.1 386,508.1 385,508.1 384,508.2 383,508.2 382,508.2 381,508.3 380,508.3 379,508.3 378,508.4 377,508.4 376,508.4 375,508.5 374,508.5 373,508.5 372,508.6 371,508.6 370,508.6 369,508.7 368,508.7 367,508.7 366,508.8 365,508.8 364,508.8 363,508.9 362,508.9 361,508.9 360,509 359,509 358,509 357,509.1 356,509.1 355,509.2 354,509.2 353,509.2 352,509.3 351,509.3 350,509.3 349,509.4 348,509.4 347,509.4 346,509.5 345,509.5 344,509.5 343,509.6 342,509.6 341,509.6 340,509.7 339,509.7 338,509.7 337,509.8 336,509.8 335,509.8 334,509.9 333,509.9 332,509.9 331,510 330,510 329,510 328,510.1 327,510.1 326,510.1 325,510.2 324,510.2 323,510.2 322,510.3 321,510.3 320,510.3 319,510.4 318,510.4 317,510.4 316,510.5 315,510.5 314,510.5 313,510.6 312,510.6 311,510.6 310,510.7 309,510.7 308,510.7 307,510.8 306,510.8 305,510.9 304,510.9 303,510.9 302,511 301,511 300,511 299,511.1 298,511.1 297,511.2 296,511.2 295,511.3 294,511.3 293,511.3 292,511.4 291,511.4 290,511.5 289,511.5 288,511.6 287,511.6 286,511.6 285,511.7 284,511.7 283,511.8 282,511.8 281,511.8 280,511.9 279,511.9 278,512 277,512 276,512.1 275,512.1 274,512.1 273,512.2 272,512.2 271,512.2 270,512.3 269,512.3 268,512.3 267,512.4 266,512.4 265,512.4 264,512.5 263,512.5 262,512.5 261,512.6 260,512.6 259,512.6 258,512.6 257,512.7 256,512.7 255,512.7 254,512.7 253,512.8 252,512.8 251,512.8 250,512.9 249,512.9 248,512.9 247,512.9 246,513 245,513 244,513 243,513 242,513.1 241,513.1 240,513.1 239,513.1 238,513.1 237,513.2 236,513.2 235,513.2 234,513.2 233,513.3 232,513.3 231,513.3 230,513.3 229,513.3 228,513.4 227,513.4 226,513.4 225,513.4 224,513.4 223,513.4 222,513.5 221,513.5 220,513.5 219,513.5 218,513.5 217,513.5 216,513.6 215,513.6 214,513.6 213,513.6 212,513.6 211,513.7 210,513.7 209,513.7 208,513.7 207,513.7 206,513.7 205,513.8 204,513.8 203,513.8 202,513.8 201,513.8 200,513.8 199,513.9 198,513.9 197,513.9 196,513.9 195,513.9 194,513.9 193,514 192,514 191,514 190,514 189,514 188,514 187,514.1 186,514.1 185,514.1 184,514.1 183,514.1 182,514.1 181,514.1 180,514.2 179,514.2 178,514.2 177,514.2 176,514.2 175,514.2 174,514.2 173,514.2 172,514.3 171,514.3 170,514.3 169,514.3 168,514.3 167,514.3 166,514.3 165,514.3 164,514.4 163,514.4 162,514.4 161,514.4 160,514.4 159,514.4 158,514.4 157,514.4 156,514.4 155,514.4 154,514.5 153,514.5 152,514.5 151,514.5 150,514.5 149,514.5 148,514.5 147,514.5 146,514.5 145,514.5 144,514.5 143,514.5 142,514.5 141,514.5 140,514.6 139,514.6 138,514.6 137,514.6 136,514.6 135,514.6 134,514.6 133,514.6 132,514.6 131,514.6 130,514.6 129,514.6 128,514.6 127,514.6 126,514.6 125,514.6 124,514.6 123,514.6 122,514.6 121,514.6 120,514.7 119,514.7 118,514.7 117,514.7 116,514.7 115,514.7 114,514.7 113,514.7 112,514.7 111,514.7 110,514.7 109,514.7 108,514.7 107,514.7 106,514.7 105,514.7 104,514.7 103,514.7 102,514.7 101,514.7 100,514.7 99,514.7 98,514.7 97,514.8 96,514.8 95,514.8 94,514.8 93,514.8 92,514.8 91,514.8 90,514.8 89,514.8 88,514.8 87,514.8 86,514.8 85,514.8 84,514.8 83,514.8 82,514.8 81,514.8 80,514.8 79,514.8 78,514.8 77,514.8 76,514.8 75,514.8 74,514.8 73,514.8 72,514.8 71,514.8 70,514.8 69,514.8 68,514.9 67,514.9 66,514.9 65,514.9 64,514.9 63,514.9 62,514.9 61,514.9 60,514.9 59,514.9 58,514.9 57,514.9 56,514.9 55,514.9 54,514.9 53,514.9 52,514.9 51,514.9 50,514.9 49,514.9 48,514.9 47,514.9 46,514.9 45,514.9 44,514.9 43,514.9 42,514.9 41,514.9 40,514.9 39,514.9 38,515 37,515 36,515 35,515 34,515 33,515 32,515 31,515 30,515 29,515 28,515 27,515 26,515 25,515 24,515 23,515 22,515 21,515 20,515 19,515 18,515 17,515Z" fill="#f800f8"/>
<path d="M517.8,554.3 518.8,557.9 519.8,563.5 520.8,567.6 521.8,571.1 522.8,573.9 523.8,576.7 524.8,578.3 525.8,579.9 526.8,580.7 527.8,580.6 528.8,580.6 529.8,581 530.8,581.4 531.8,581.6 532.8,581.8 533.8,582 534.8,581.7 535.8,582.1 536.8,580.5 537.8,582.2 538.8,582 539.8,582.3 540.8,582.2 541.8,582.2 542.8,581.6 543.8,582.5 544.8,582.2 545.8,582.4 546.8,582.4 547.8,582.7 548.8,582.4 549.8,582.9 550.8,582.7 551.8,582.5 552.8,582.7 553.8,582.8 554.8,582.8 555.8,582.7 556.8,582.8 557.8,582.7 558.8,582.8 559.8,582.8 560.8,582.8 561.8,581.5 562.8,583.1 563.8,582.9 564.8,582.8 565.8,583.3 566.8,583.4 567.8,583.1 568.8,583.4 569.8,583.2 570.8,583.3 571.8,583.1 572.8,583.3 573.8,583.8 574.8,583.9 575.8,583.7 576.8,583.7 577.8,583.7 578.8,583.8 579.8,583.6 580.8,583.6 581.8,584 582.8,584.3 583.8,584.4 584.8,584 585.8,584 586.8,584.2 587.8,584.1 588.8,584.2 589.8,584.3 590.8,584.5 591.8,584.9 592.8,584.6 593.8,585.1 594.8,585.1 595.8,585.1 596.8,584.8 597.8,585.4 598.8,585.5 599.8,585.5 600.8,586 601.8,585.5 602.8,585.9 603.8,586 604.8,585.9 605.8,586.2 606.8,586.1 607.8,586.7 608.8,585.8 609.8,586.9 610.8,586.7 611.8,587 612.8,587 613.8,587.5 614.8,587 615.8,587.4 616.8,587.2 617.8,587.7 618.8,587.8 619.8,586.5 620.8,588.1 621.8,587.8 622.8,588.2 623.8,588 624.8,588.2 625.8,588.4 626.8,588.5 627.8,588.3 628.8,588.6 629.8,588.9 630.8,589 631.8,588.6 632.8,589.2 633.8,589.1 634.8,589.2 635.8,589 636.8,587.6 637.8,589.4 638.8,589.3 639.8,589.6 640.8,589.4 641.8,589.8 642.8,590 643.8,590.3 644.8,589.8 645.8,590 646.8,590.4 647.8,590.5 648.8,590.7 649.8,590.7 650.8,590.5 651.8,590.7 652.8,590.5 653.8,591 654.8,590.5 655.8,590.5 656.8,590.6 657.8,590.8 658.8,591.2 659.8,591.3 660.8,591 661.8,591.3 662.8,591 663.8,591.2 664.8,591.6 665.8,591.7 666.8,591.3 667.8,591.5 668.8,591.9 669.8,591.4 670.8,592 671.8,592 672.8,592 673.8,592 674.8,591.6 675.8,592.3 676.8,591.9 677.8,591.8 678.8,591.7 679.8,591.8 680.8,592.4 681.8,591.9 682.8,592 683.8,592.2 684.8,592.4 685.8,592.4 686.8,592.1 687.8,592.7 688.8,592.7 689.8,592.7 690.8,592.4 691.8,592.7 692.8,592.4 693.8,593 694.8,592.7 695.8,593.1 696.8,592.5 697.8,592.9 698.8,593 699.8,592.8 700.8,593.2 701.8,593.3 702.8,592.8 703.8,592.9 704.8,592.9 705.8,592.8 706.8,593.4 707.8,593.2 708.8,593.4 709.8,593.4 710.8,593.6 711.8,593.3 712.8,593.3 713.8,593.2 714.8,593.4 715.8,593.2 716.8,593.7 717.8,593.9 718.8,593.7 719.8,593.7 720.8,594 721.8,592.9 722.8,594.1 723.8,593.6 724.8,593.7 725.8,594 726.8,594.2 727.8,594 728.8,593.7 729.8,594 730.8,593.8 731.8,593.8 732.8,594.2 733.8,594.4 734.8,594.2 735.8,594.3 736.8,594.4 737.8,594.3 738.8,594.1 739.8,594.2 740.8,593.5 741.8,594.7 742.8,594.6 743.8,594.7 744.8,594.2 745.8,594.6 746.8,594.5 747.8,594.6 748.8,594.9 749.8,593.4 750.8,595 751.8,594.7 752.8,594.9 753.8,594.9 754.8,594.9 755.8,595 756.8,594.8 757.8,594.8 758.8,595.2 759.8,595.1 760.8,594.7 761.8,594.9 762.8,595 763.8,594.9 764.8,595.5 765.8,595.3 766.8,595.5 767.8,595.3 768.8,595.6 769.8,595.5 770.8,595.6 771.8,595.6 772.8,595.2 773.8,595.2 774.8,595.2 775.8,595.5 776.8,595.4 777.8,595.8 778.8,595.7 779.8,595.5 780.8,595.3 781.8,595.5 782.8,595.7 783.8,595.6 784.8,595.5 785.8,596 786.8,595.6 787.8,596.1 788.8,595.6 789.8,596 790.8,595.8 791.8,596 792.8,595.7 793.8,596 794.8,596.2 795.8,595.8 796.8,596.1 797.8,595.8 798.8,596 799.8,596 800.8,596 801.8,595.9 802.8,596.4 803.8,596 804.8,596.4 805.8,596.2 806.8,596.2 807.8,596.6 808.8,596.4 809.8,596.2 810.8,596.1 811.8,596.5 812.8,596.1 813.8,596.5 814.8,596.2 815.8,596.5 816.8,596.7 817.8,596.4 818.8,596.8 819.8,596.8 820.8,596.7 821.8,596.6 822.8,596.9 823.8,596.7 824.8,596.6 825.8,596.6 826.8,596.5 827.8,596.9 828.8,597.1 829.8,596.9 830.8,597 831.8,597 832.8,597.1 833.8,596.7 834.8,596.8 835.8,597.1 836.8,596.8 837.8,597 838.8,596.9 839.8,597.2 840.8,597.3 841.8,597.3 842.8,596.9 843.8,597.4 844.8,596.8 845.8,597.2 846.8,597.5 847.8,597.3 848.8,596.9 849.8,597.3 850.8,597.4 851.8,597.3 852.8,597.2 853.8,597.6 854.8,597.3 855.8,597.2 856.8,597 857.8,597.4 858.8,597.2 859.8,597.5 860.8,595.8 861.8,597.2 862.8,597.2 863.8,597.4 864.8,597.7 865.8,597.5 866.8,597.4 867.8,597.7 868.8,597.4 869.8,597.6 870.8,597.3 871.8,597.6 872.8,597.9 873.8,597.3 874.8,597.3 875.8,597.3 876.8,597.6 877.8,597.9 878.8,597.4 879.8,598 880.8,597.4 881.8,597.8 882.8,597.9 883.8,598 884.8,597.5 885.8,597.2 886.8,597.8 887.8,597.6 888.8,597.8 889.8,598 890.8,597.9 891.8,598.1 892.8,598 893.8,597.8 894.8,597.8 895.8,598 896.8,598.1 897.8,598 898.8,598 899.8,597.9 900.8,597.4 901.8,598.2 902.8,598 903.8,598 904.8,598.2 905.8,598.2 906.8,598.1 907.8,598.2 908.8,598 909.8,597.8 910.8,598.4 911.8,597.9 912.8,598 913.8,598.2 914.8,598.1 915.8,598.1 916.8,598.3 917.8,598.1 918.8,598.2 919.8,598.1 920.8,597.4 921.8,598.2 922.8,598.2 923.8,598.4 924.8,598.3 925.8,598 926.8,598.6 927.8,598.5 928.8,598.6 929.8,598.6 930.8,598 931.8,598.2 932.8,598.2 933.8,598.5 934.8,598.1 935.8,598.4 936.8,598 937.8,598 938.8,598.5 939.8,598.5 940.8,598 941.8,598.2 942.8,598.5 943.8,598.6 944.8,598.1 945.8,598.2 946.8,598.3 947.8,598.3 948.8,598.5 949.8,598.5 950.8,596.3 951.8,598.2 952.8,598.7 953.8,598.6 954.8,598.3 955.8,598.3 956.8,598.5 957.8,598.6 958.8,598.4 959.8,598.4 960.8,598.7 961.8,598.6 962.8,598.7 963.8,598.5 964.8,598.2 965.8,598.5 966.8,598.8 967.8,598.8 968.8,598.5 969.8,598.8 970.8,598.7 971.8,598.7 972.8,598.7 973.8,598.5 974.8,598.5 975.8,598.7 976.8,598.5 977.8,598.4 978.8,598.8 979.8,598.7 980.8,598.8 981.8,598.7 982.8,597.2 983.8,598.8 984.8,598.5 985.8,598.7 986.8,598.4 987.8,599 988.8,599 989.8,598.5 990.8,598.5 991.8,598.8 992.8,598.9 993.8,598.7 994.8,598.5 995.8,597.8 996.8,598.8 997.8,598.5 998.8,599.1 999.8,598.7 1000.8,598 1001.8,599 1002.8,598.6 1003.8,598.9 1004.8,599.1 1005.8,599 1006.8,598.9 1007.8,598.8 1008.8,598.8 1009.8,598.8 1010.8,598.9 1011.8,598.9 1012.8,599 1013.8,598.9 1014.8,598.6 1015.8,599.3 1016,599 1016,611.1 1015.8,611.4 1014.8,610.8 1013.8,611.1 1012.8,611.1 1011.8,611.3 1010.8,611 1009.8,611.2 1008.8,610.8 1007.8,610.6 1006.8,610.9 1005.8,611 1004.8,610.6 1003.8,612.8 1002.8,611 1001.8,610.8 1000.8,610.9 999.8,611.1 998.8,610.9 997.8,612.4 996.8,611.2 995.8,611 994.8,611.2 993.8,611.1 992.8,610.6 991.8,610.7 990.8,610.7 989.8,610.9 988.8,611 987.8,611 986.8,611.1 985.8,610.6 984.8,611.1 983.8,610.7 982.8,610.6 981.8,610.8 980.8,610.5 979.8,610.8 978.8,610.7 977.8,610.7 976.8,611 975.8,610.7 974.8,610.6 973.8,610.4 972.8,610.5 971.8,611 970.8,610.7 969.8,610.8 968.8,610.6 967.8,610.7 966.8,610.9 965.8,610.5 964.8,610.7 963.8,610.5 962.8,610.8 961.8,610.3 960.8,610.3 959.8,610.9 958.8,610.6 957.8,610.8 956.8,610.7 955.8,610.7 954.8,610.4 953.8,610.8 952.8,610.7 951.8,610.7 950.8,610.9 949.8,610.7 948.8,610.2 947.8,610.5 946.8,610.2 945.8,610.7 944.8,610.7 943.8,610.3 942.8,610.4 941.8,610.4 940.8,610.7 939.8,610.2 938.8,610.3 937.8,610.4 936.8,610.7 935.8,610.3 934.8,610.7 933.8,610.5 932.8,610.2 931.8,612.1 930.8,611.3 929.8,610.4 928.8,610.6 927.8,610.2 926.8,610.1 925.8,610.3 924.8,610 923.8,610 922.8,610.6 921.8,610.5 920.8,610.1 919.8,610 918.8,610.2 917.8,610.1 916.8,610.2 915.8,610.3 914.8,610.3 913.8,610.3 912.8,610.4 911.8,609.8 910.8,611 909.8,610.2 908.8,610.4 907.8,610.4 906.8,610.3 905.8,610.4 904.8,609.8 903.8,609.9 902.8,610.3 901.8,610.3 900.8,609.9 899.8,609.9 898.8,610.1 897.8,610.4 896.8,609.9 895.8,609.8 894.8,610.1 893.8,609.9 892.8,610 891.8,610 890.8,609.6 889.8,609.9 888.8,609.9 887.8,610.2 886.8,609.7 885.8,609.9 884.8,609.8 883.8,609.9 882.8,609.6 881.8,610.1 880.8,609.7 879.8,609.5 878.8,610 877.8,609.6 876.8,610 875.8,609.5 874.8,610 873.8,609.9 872.8,610 871.8,609.9 870.8,609.9 869.8,609.8 868.8,609.5 867.8,609.5 866.8,609.7 865.8,609.5 864.8,609.3 863.8,609.7 862.8,609.6 861.8,609.6 860.8,609.3 859.8,609.2 858.8,609.7 857.8,609.2 856.8,609.5 855.8,609.6 854.8,609.5 853.8,609.1 852.8,609.2 851.8,609.4 850.8,609.2 849.8,609 848.8,609.2 847.8,609.4 846.8,609.3 845.8,609.5 844.8,609.5 843.8,609 842.8,609.4 841.8,611.1 840.8,609.4 839.8,608.9 838.8,609 837.8,609.1 836.8,608.9 835.8,609.1 834.8,609.1 833.8,609.6 832.8,608.9 831.8,609.3 830.8,608.6 829.8,609.1 828.8,610 827.8,608.7 826.8,608.8 825.8,609 824.8,608.9 823.8,609.1 822.8,608.9 821.8,608.5 820.8,608.9 819.8,608.4 818.8,608.6 817.8,608.4 816.8,608.8 815.8,609 814.8,608.7 813.8,608.7 812.8,608.8 811.8,608.8 810.8,608.8 809.8,608.2 808.8,608.7 807.8,609.9 806.8,608.5 805.8,608.4 804.8,608.4 803.8,608.2 802.8,608.6 801.8,608.4 800.8,608.2 799.8,608.9 798.8,608.3 797.8,609.4 796.8,608.2 795.8,608 794.8,608.5 793.8,608.1 792.8,608.4 791.8,607.8 790.8,608 789.8,607.7 788.8,608.1 787.8,608.1 786.8,609.2 785.8,607.9 784.8,607.6 783.8,607.6 782.8,608.1 781.8,607.7 780.8,607.9 779.8,607.7 778.8,607.4 777.8,607.7 776.8,607.3 775.8,607.4 774.8,607.6 773.8,607.6 772.8,608.9 771.8,607.2 770.8,607.3 769.8,607.5 768.8,607.3 767.8,608.8 766.8,607 765.8,607.4 764.8,607.2 763.8,607.3 762.8,608.9 761.8,607.1 760.8,607.3 759.8,607.3 758.8,607.3 757.8,607.3 756.8,606.9 755.8,607.3 754.8,607.1 753.8,606.9 752.8,607.2 751.8,606.7 750.8,606.8 749.8,606.9 748.8,606.7 747.8,607 746.8,606.8 745.8,606.6 744.8,606.3 743.8,606.7 742.8,606.5 741.8,606.8 740.8,606.8 739.8,606.4 738.8,606.9 737.8,606.1 736.8,606.5 735.8,606.5 734.8,606.5 733.8,606.2 732.8,606.4 731.8,606.3 730.8,606 729.8,606.2 728.8,605.8 727.8,606.1 726.8,605.9 725.8,605.9 724.8,605.8 723.8,605.8 722.8,605.6 721.8,605.7 720.8,606.1 719.8,605.9 718.8,605.7 717.8,606 716.8,605.6 715.8,605.6 714.8,605.9 713.8,605.3 712.8,605.6 711.8,605.4 710.8,606.4 709.8,605.7 708.8,605.4 707.8,605.7 706.8,605.6 705.8,605.1 704.8,605.4 703.8,605.4 702.8,604.9 701.8,605.3 700.8,605 699.8,604.8 698.8,604.9 697.8,605 696.8,604.6 695.8,604.7 694.8,605.1 693.8,604.7 692.8,605 691.8,604.8 690.8,604.7 689.8,605.5 688.8,604.6 687.8,604.7 686.8,604.3 685.8,604.2 684.8,604.2 683.8,604.1 682.8,604.4 681.8,604.7 680.8,604.5 679.8,603.9 678.8,604.5 677.8,604.3 676.8,604 675.8,603.9 674.8,604.3 673.8,604.3 672.8,603.9 671.8,604 670.8,604.2 669.8,604 668.8,603.9 667.8,604 666.8,603.6 665.8,603.8 664.8,603.3 663.8,603.2 662.8,603.4 661.8,603.7 660.8,603.4 659.8,603 658.8,603.5 657.8,603.1 656.8,602.9 655.8,602.8 654.8,602.9 653.8,603 652.8,603 651.8,602.4 650.8,602.4 649.8,602.3 648.8,602.5 647.8,602.5 646.8,602.7 645.8,602.6 644.8,602.2 643.8,602.3 642.8,602 641.8,602.2 640.8,601.7 639.8,602 638.8,601.4 637.8,601.5 636.8,601.6 635.8,601.6 634.8,601 633.8,601 632.8,601.1 631.8,601.3 630.8,600.9 629.8,601 628.8,601 627.8,600.5 626.8,600.6 625.8,600.7 624.8,600.4 623.8,600.4 622.8,600.5 621.8,600.1 620.8,601.6 619.8,599.7 618.8,599.8 617.8,599.8 616.8,599.8 615.8,599.6 614.8,601 613.8,599.7 612.8,599.4 611.8,598.8 610.8,599 609.8,599 608.8,598.6 607.8,598.9 606.8,598.5 605.8,598.6 604.8,598 603.8,598.1 602.8,598.3 601.8,598.2 600.8,598.1 599.8,597.8 598.8,597.7 597.8,597.6 596.8,597.7 595.8,597.2 594.8,597.2 593.8,597.3 592.8,597.1 591.8,597.1 590.8,596.4 589.8,596.6 588.8,596.5 587.8,596.4 586.8,596.4 585.8,596.3 584.8,596.2 583.8,596.1 582.8,596.5 581.8,595.7 580.8,596.3 579.8,596.3 578.8,596.1 577.8,595.7 576.8,595.6 575.8,595.6 574.8,595.9 573.8,595.8 572.8,595.8 571.8,595.3 570.8,595.3 569.8,595.8 568.8,595.2 567.8,595.9 566.8,595.1 565.8,595.6 564.8,595.1 563.8,595.3 562.8,595.2 561.8,595.2 560.8,595.4 559.8,594.8 558.8,595.2 557.8,594.8 556.8,594.6 555.8,594.6 554.8,595.8 553.8,595 552.8,595.1 551.8,595.1 550.8,594.8 549.8,594.8 548.8,594.6 547.8,595 546.8,594.9 545.8,594.8 544.8,594.3 543.8,594.6 542.8,594.2 541.8,594.6 540.8,594.3 539.8,594.2 538.8,594.6 537.8,594.6 536.8,594 535.8,594.4 534.8,594.1 533.8,594.3 532.8,593.7 531.8,593.7 530.8,594 529.8,593.3 528.8,593.6 527.8,593 526.8,591.9 525.8,591.8 524.8,589.3 523.8,587 522.8,584.6 521.8,581.3 520.8,577.3 519.8,573 518.8,569.1 517.8,561.9Z" fill="#780078"/>
<path d="M517.8,554.3 518.8,557.9 519.8,564.1 520.8,567.9 521.8,571.5 522.8,574.8 523.8,577.2 524.8,578.9 525.8,580.4 526.8,581.2 527.8,581.8 528.8,582 529.8,582.3 530.8,582.6 531.8,582.5 532.8,582.8 533.8,582.8 534.8,582.8 535.8,582.9 536.8,582.9 537.8,583.3 538.8,583 539.8,583.3 540.8,583.3 541.8,583.3 542.8,583.5 543.8,583.3 544.8,583.5 545.8,583.6 546.8,583.5 547.8,583.7 548.8,583.6 549.8,583.4 550.8,583.6 551.8,583.8 552.8,583.7 553.8,583.6 554.8,583.6 555.8,584 556.8,583.9 557.8,584 558.8,583.9 559.8,584.1 560.8,583.9 561.8,583.8 562.8,583.9 563.8,584 564.8,584 565.8,584.2 566.8,584.3 567.8,584.1 568.8,584.3 569.8,584.2 570.8,584.5 571.8,584.6 572.8,584.4 573.8,584.5 574.8,584.6 575.8,584.8 576.8,584.8 577.8,584.8 578.8,584.9 579.8,584.8 580.8,585 581.8,585 582.8,585.1 583.8,585 584.8,585.1 585.8,585.1 586.8,585.2 587.8,585.4 588.8,585.4 589.8,585.5 590.8,585.4 591.8,585.6 592.8,585.8 593.8,585.9 594.8,585.9 595.8,586 596.8,586.2 597.8,586.3 598.8,586.3 599.8,586.7 600.8,586.5 601.8,586.7 602.8,586.8 603.8,586.8 604.8,587 605.8,587.3 606.8,587.3 607.8,587.4 608.8,587.7 609.8,587.9 610.8,587.9 611.8,587.9 612.8,588 613.8,588 614.8,588.1 615.8,588.3 616.8,588.4 617.8,588.8 618.8,588.6 619.8,588.8 620.8,588.9 621.8,588.9 622.8,589.2 623.8,589 624.8,589.1 625.8,589.5 626.8,589.6 627.8,589.7 628.8,589.7 629.8,589.8 630.8,589.7 631.8,589.7 632.8,589.8 633.8,590 634.8,590.1 635.8,590.1 636.8,590.2 637.8,590.5 638.8,590.6 639.8,590.6 640.8,590.8 641.8,590.7 642.8,590.9 643.8,590.8 644.8,590.9 645.8,591.1 646.8,591.3 647.8,591.1 648.8,591.5 649.8,591.5 650.8,591.6 651.8,591.7 652.8,591.5 653.8,591.7 654.8,591.7 655.8,591.8 656.8,591.7 657.8,591.9 658.8,591.9 659.8,592 660.8,592.4 661.8,592.3 662.8,592.1 663.8,592.4 664.8,592.4 665.8,592.6 666.8,592.7 667.8,592.7 668.8,592.7 669.8,592.6 670.8,592.7 671.8,592.6 672.8,592.8 673.8,593 674.8,592.7 675.8,593.1 676.8,593.2 677.8,592.9 678.8,593.3 679.8,593 680.8,593.3 681.8,593.2 682.8,593.1 683.8,593.4 684.8,593.3 685.8,593.6 686.8,593.3 687.8,593.6 688.8,593.5 689.8,593.5 690.8,593.5 691.8,593.5 692.8,593.7 693.8,593.8 694.8,593.8 695.8,593.9 696.8,593.9 697.8,593.8 698.8,594.1 699.8,594.1 700.8,593.9 701.8,593.9 702.8,594.1 703.8,594.2 704.8,594.2 705.8,594.3 706.8,594.2 707.8,594.2 708.8,594.5 709.8,594.3 710.8,594.3 711.8,594.3 712.8,594.3 713.8,594.5 714.8,594.6 715.8,594.7 716.8,594.7 717.8,594.5 718.8,594.5 719.8,594.8 720.8,594.8 721.8,594.9 722.8,595 723.8,594.7 724.8,594.7 725.8,595.1 726.8,595 727.8,594.9 728.8,595.1 729.8,595.2 730.8,594.9 731.8,595.2 732.8,595.2 733.8,595.2 734.8,595.3 735.8,595.1 736.8,595.2 737.8,595.3 738.8,595.2 739.8,595.2 740.8,595.4 741.8,595.3 742.8,595.4 743.8,595.3 744.8,595.7 745.8,595.7 746.8,595.4 747.8,595.5 748.8,595.6 749.8,595.5 750.8,595.8 751.8,595.6 752.8,595.8 753.8,595.7 754.8,596 755.8,596 756.8,595.8 757.8,595.9 758.8,596.1 759.8,595.9 760.8,596 761.8,596.1 762.8,596 763.8,596.1 764.8,596.3 765.8,596.4 766.8,596.3 767.8,596.2 768.8,596.1 769.8,596.4 770.8,596.4 771.8,596.2 772.8,596.4 773.8,596.3 774.8,596.4 775.8,596.6 776.8,596.5 777.8,596.5 778.8,596.7 779.8,596.6 780.8,596.7 781.8,596.8 782.8,596.6 783.8,596.7 784.8,596.8 785.8,596.6 786.8,596.8 787.8,596.9 788.8,596.9 789.8,597.1 790.8,597 791.8,597.1 792.8,596.9 793.8,596.9 794.8,596.9 795.8,597 796.8,597.2 797.8,597.1 798.8,597.2 799.8,597 800.8,597 801.8,597.3 802.8,597.1 803.8,597.3 804.8,597.1 805.8,597.5 806.8,597.4 807.8,597.4 808.8,597.6 809.8,597.4 810.8,597.5 811.8,597.4 812.8,597.4 813.8,597.7 814.8,597.5 815.8,597.6 816.8,597.5 817.8,597.6 818.8,597.6 819.8,597.6 820.8,597.8 821.8,597.8 822.8,597.8 823.8,597.8 824.8,597.8 825.8,598 826.8,597.8 827.8,598 828.8,597.7 829.8,597.7 830.8,597.7 831.8,597.9 832.8,598.1 833.8,597.9 834.8,598.1 835.8,597.8 836.8,597.8 837.8,598.1 838.8,598 839.8,598.2 840.8,598.2 841.8,598.2 842.8,598.2 843.8,598.2 844.8,598.2 845.8,598.3 846.8,598.4 847.8,598.4 848.8,598.1 849.8,598.3 850.8,598.3 851.8,598.5 852.8,598.4 853.8,598.4 854.8,598.3 855.8,598.3 856.8,598.4 857.8,598.3 858.8,598.5 859.8,598.3 860.8,598.5 861.8,598.6 862.8,598.5 863.8,598.3 864.8,598.6 865.8,598.6 866.8,598.4 867.8,598.6 868.8,598.4 869.8,598.5 870.8,598.8 871.8,598.4 872.8,598.5 873.8,598.7 874.8,598.7 875.8,598.8 876.8,598.5 877.8,598.7 878.8,598.6 879.8,598.8 880.8,598.7 881.8,598.7 882.8,598.9 883.8,598.6 884.8,598.7 885.8,598.8 886.8,598.7 887.8,598.8 888.8,598.7 889.8,598.9 890.8,598.9 891.8,599 892.8,599 893.8,598.8 894.8,599.1 895.8,598.9 896.8,599 897.8,598.9 898.8,599 899.8,599 900.8,598.9 901.8,598.9 902.8,599.1 903.8,599 904.8,598.9 905.8,599.1 906.8,599.2 907.8,599 908.8,599 909.8,599.1 910.8,599.2 911.8,599.1 912.8,599.2 913.8,599.1 914.8,599.2 915.8,599.1 916.8,599.1 917.8,599.1 918.8,599.4 919.8,599.3 920.8,599.1 921.8,599.3 922.8,599.1 923.8,599.3 924.8,599.1 925.8,599.1 926.8,599.1 927.8,599.2 928.8,599.4 929.8,599.1 930.8,599.4 931.8,599.1 932.8,599.4 933.8,599.5 934.8,599.5 935.8,599.5 936.8,599.4 937.8,599.4 938.8,599.4 939.8,599.4 940.8,599.2 941.8,599.6 942.8,599.3 943.8,599.6 944.8,599.6 945.8,599.3 946.8,599.6 947.8,599.3 948.8,599.6 949.8,599.4 950.8,599.6 951.8,599.6 952.8,599.6 953.8,599.5 954.8,599.4 955.8,599.6 956.8,599.5 957.8,599.6 958.8,599.5 959.8,599.5 960.8,599.5 961.8,599.7 962.8,599.6 963.8,599.5 964.8,599.7 965.8,599.6 966.8,599.6 967.8,599.8 968.8,599.7 969.8,599.6 970.8,599.6 971.8,599.6 972.8,599.5 973.8,599.8 974.8,599.6 975.8,599.8 976.8,599.8 977.8,599.8 978.8,599.7 979.8,599.5 980.8,599.7 981.8,599.8 982.8,599.9 983.8,599.6 984.8,599.7 985.8,599.8 986.8,599.9 987.8,599.7 988.8,599.8 989.8,599.9 990.8,599.8 991.8,599.6 992.8,599.8 993.8,599.6 994.8,599.8 995.8,599.8 996.8,600 997.8,599.8 998.8,599.9 999.8,599.9 1000.8,600 1001.8,600 1002.8,599.8 1003.8,599.9 1004.8,599.7 1005.8,599.8 1006.8,600 1007.8,599.8 1008.8,599.8 1009.8,599.8 1010.8,599.9 1011.8,600.1 1012.8,600.2 1013.8,599.8 1014.8,600 1015.8,599.8 1016,599.8 1016,610 1015.8,610.1 1014.8,609.9 1013.8,610 1012.8,609.9 1011.8,610.1 1010.8,610.2 1009.8,610 1008.8,609.9 1007.8,610 1006.8,610.2 1005.8,610.1 1004.8,610.1 1003.8,610.1 1002.8,609.8 1001.8,610 1000.8,610 999.8,609.9 998.8,609.8 997.8,609.9 996.8,609.8 995.8,609.9 994.8,609.7 993.8,609.8 992.8,609.8 991.8,609.8 990.8,610.1 989.8,609.9 988.8,609.9 987.8,609.8 986.8,610.1 985.8,609.7 984.8,609.8 983.8,610 982.8,609.7 981.8,609.7 980.8,609.8 979.8,609.8 978.8,609.9 977.8,609.7 976.8,609.6 975.8,609.9 974.8,609.9 973.8,609.9 972.8,609.7 971.8,609.9 970.8,609.8 969.8,609.9 968.8,609.6 967.8,609.7 966.8,609.9 965.8,609.6 964.8,609.6 963.8,609.8 962.8,609.6 961.8,609.8 960.8,609.9 959.8,609.5 958.8,609.7 957.8,609.8 956.8,609.5 955.8,609.5 954.8,609.4 953.8,609.6 952.8,609.4 951.8,609.6 950.8,609.7 949.8,609.4 948.8,609.8 947.8,609.4 946.8,609.6 945.8,609.7 944.8,609.6 943.8,609.4 942.8,609.4 941.8,609.5 940.8,609.7 939.8,609.7 938.8,609.3 937.8,609.4 936.8,609.6 935.8,609.6 934.8,609.4 933.8,609.3 932.8,609.6 931.8,609.5 930.8,609.6 929.8,609.3 928.8,609.3 927.8,609.3 926.8,609.3 925.8,609.5 924.8,609.4 923.8,609.4 922.8,609.3 921.8,609.4 920.8,609.4 919.8,609.3 918.8,609.4 917.8,609.1 916.8,609.5 915.8,609.1 914.8,609.2 913.8,609.3 912.8,609.4 911.8,609.1 910.8,609.3 909.8,609.1 908.8,609.1 907.8,609.4 906.8,609.1 905.8,609 904.8,609 903.8,609.3 902.8,609.1 901.8,609.1 900.8,609.1 899.8,609 898.8,609 897.8,609.1 896.8,608.9 895.8,609.2 894.8,608.9 893.8,608.8 892.8,609.1 891.8,609 890.8,609.1 889.8,609.1 888.8,609.2 887.8,609.1 886.8,608.9 885.8,609 884.8,609 883.8,608.9 882.8,608.9 881.8,609 880.8,609 879.8,608.7 878.8,609 877.8,609 876.8,608.7 875.8,609 874.8,608.7 873.8,609 872.8,608.9 871.8,608.8 870.8,608.5 869.8,608.6 868.8,608.9 867.8,608.9 866.8,608.6 865.8,608.7 864.8,608.8 863.8,608.5 862.8,608.7 861.8,608.7 860.8,608.4 859.8,608.5 858.8,608.3 857.8,608.5 856.8,608.6 855.8,608.6 854.8,608.3 853.8,608.3 852.8,608.3 851.8,608.3 850.8,608.3 849.8,608.3 848.8,608.4 847.8,608.3 846.8,608.4 845.8,608.1 844.8,608.2 843.8,608.2 842.8,608.3 841.8,608.2 840.8,608.1 839.8,608.1 838.8,608.3 837.8,608 836.8,608.1 835.8,608 834.8,608.2 833.8,608 832.8,608.2 831.8,607.9 830.8,608.1 829.8,608 828.8,608 827.8,607.8 826.8,607.9 825.8,607.7 824.8,607.8 823.8,607.7 822.8,608 821.8,607.8 820.8,608 819.8,608 818.8,607.8 817.8,607.6 816.8,607.8 815.8,607.6 814.8,607.8 813.8,607.5 812.8,607.6 811.8,607.8 810.8,607.8 809.8,607.4 808.8,607.5 807.8,607.5 806.8,607.5 805.8,607.4 804.8,607.3 803.8,607.4 802.8,607.6 801.8,607.5 800.8,607.3 799.8,607.4 798.8,607.4 797.8,607.4 796.8,607.4 795.8,607.2 794.8,607.2 793.8,607 792.8,607.1 791.8,607.1 790.8,607 789.8,607.1 788.8,607.2 787.8,607.2 786.8,606.9 785.8,607 784.8,606.8 783.8,607 782.8,606.9 781.8,606.7 780.8,606.8 779.8,606.7 778.8,606.6 777.8,606.8 776.8,606.6 775.8,606.5 774.8,606.5 773.8,606.5 772.8,606.4 771.8,606.6 770.8,606.4 769.8,606.3 768.8,606.4 767.8,606.6 766.8,606.5 765.8,606.3 764.8,606.5 763.8,606.2 762.8,606.3 761.8,606.4 760.8,606.1 759.8,606.2 758.8,606.2 757.8,606 756.8,606 755.8,605.9 754.8,606 753.8,605.9 752.8,605.9 751.8,606.1 750.8,606 749.8,605.8 748.8,605.7 747.8,605.8 746.8,605.8 745.8,605.6 744.8,605.6 743.8,605.6 742.8,605.6 741.8,605.6 740.8,605.5 739.8,605.4 738.8,605.6 737.8,605.4 736.8,605.5 735.8,605.2 734.8,605.3 733.8,605.2 732.8,605.3 731.8,605.3 730.8,605 729.8,605.3 728.8,605 727.8,605.1 726.8,605 725.8,605.2 724.8,604.9 723.8,605.1 722.8,604.8 721.8,604.8 720.8,604.7 719.8,604.9 718.8,605 717.8,604.7 716.8,604.8 715.8,604.7 714.8,604.5 713.8,604.5 712.8,604.6 711.8,604.7 710.8,604.7 709.8,604.6 708.8,604.3 707.8,604.4 706.8,604.3 705.8,604.3 704.8,604.4 703.8,604.3 702.8,604 701.8,604.1 700.8,604.3 699.8,604.2 698.8,604 697.8,604.2 696.8,604 695.8,604.1 694.8,604 693.8,604.1 692.8,604 691.8,603.7 690.8,603.9 689.8,603.7 688.8,603.6 687.8,603.5 686.8,603.4 685.8,603.5 684.8,603.6 683.8,603.7 682.8,603.5 681.8,603.2 680.8,603.6 679.8,603.4 678.8,603.4 677.8,603.2 676.8,603.3 675.8,603.2 674.8,603 673.8,603 672.8,602.9 671.8,603.1 670.8,602.8 669.8,602.9 668.8,602.9 667.8,603 666.8,602.8 665.8,602.5 664.8,602.4 663.8,602.4 662.8,602.6 661.8,602.3 660.8,602.5 659.8,602.4 658.8,602.3 657.8,602 656.8,602.1 655.8,602 654.8,601.8 653.8,601.9 652.8,601.7 651.8,601.7 650.8,601.8 649.8,601.8 648.8,601.5 647.8,601.7 646.8,601.4 645.8,601.4 644.8,601.4 643.8,601.3 642.8,601.2 641.8,601.2 640.8,601.1 639.8,601 638.8,600.7 637.8,600.8 636.8,600.7 635.8,600.4 634.8,600.5 633.8,600.3 632.8,600.3 631.8,600.3 630.8,600 629.8,600.2 628.8,599.7 627.8,599.8 626.8,599.8 625.8,599.6 624.8,599.5 623.8,599.3 622.8,599.2 621.8,599.1 620.8,599.3 619.8,598.9 618.8,599.1 617.8,598.7 616.8,598.8 615.8,598.8 614.8,598.6 613.8,598.5 612.8,598.2 611.8,598.3 610.8,598.1 609.8,598 608.8,598 607.8,597.7 606.8,597.8 605.8,597.6 604.8,597.3 603.8,597.4 602.8,597.4 601.8,597.2 600.8,597 599.8,596.8 598.8,596.6 597.8,596.6 596.8,596.3 595.8,596.2 594.8,596.1 593.8,596.2 592.8,596 591.8,596 590.8,595.7 589.8,595.6 588.8,595.5 587.8,595.3 586.8,595.3 585.8,595.2 584.8,595.5 583.8,595.1 582.8,595.1 581.8,595.1 580.8,595.1 579.8,594.9 578.8,595.1 577.8,595 576.8,594.7 575.8,594.7 574.8,595 573.8,594.6 572.8,594.9 571.8,594.8 570.8,594.5 569.8,594.5 568.8,594.3 567.8,594.5 566.8,594.4 565.8,594.5 564.8,594.3 563.8,594.3 562.8,594.1 561.8,594.2 560.8,594.2 559.8,594.1 558.8,594.1 557.8,594.2 556.8,594.2 555.8,594.1 554.8,594 553.8,593.9 552.8,594.1 551.8,593.7 550.8,593.7 549.8,593.6 548.8,594 547.8,593.6 546.8,593.9 545.8,593.6 544.8,593.7 543.8,593.5 542.8,593.7 541.8,593.5 540.8,593.4 539.8,593.6 538.8,593.5 537.8,593.2 536.8,593.4 535.8,593.1 534.8,593.1 533.8,593 532.8,593 531.8,593 530.8,592.7 529.8,592.9 528.8,592.5 527.8,591.8 526.8,591.1 525.8,590 524.8,588.7 523.8,586.4 522.8,584 521.8,581 520.8,577 519.8,572.7 518.8,568.6 517.8,561.8Z" fill="#c800c8"/>
<path d="M517.8,554.5 518.8,558.2 519.8,564.4 520.8,568.1 521.8,571.6 522.8,575 523.8,577.4 524.8,579.4 525.8,580.9 526.8,581.7 527.8,582.2 528.8,582.6 529.8,583.1 530.8,583.5 531.8,583.7 532.8,583.8 533.8,584 534.8,584.1 535.8,584.2 536.8,584.3 537.8,584.4 538.8,584.4 539.8,584.5 540.8,584.5 541.8,584.6 542.8,584.6 543.8,584.7 544.8,584.7 545.8,584.8 546.8,584.8 547.8,584.9 548.8,584.9 549.8,584.9 550.8,585 551.8,585 552.8,585 553.8,585 554.8,585.1 555.8,585.1 556.8,585.1 557.8,585.1 558.8,585.2 559.8,585.2 560.8,585.2 561.8,585.3 562.8,585.3 563.8,585.4 564.8,585.4 565.8,585.4 566.8,585.5 567.8,585.5 568.8,585.6 569.8,585.6 570.8,585.6 571.8,585.7 572.8,585.7 573.8,585.8 574.8,585.8 575.8,585.8 576.8,585.9 577.8,585.9 578.8,586 579.8,586 580.8,586.1 581.8,586.1 582.8,586.2 583.8,586.2 584.8,586.3 585.8,586.3 586.8,586.4 587.8,586.4 588.8,586.5 589.8,586.6 590.8,586.6 591.8,586.7 592.8,586.8 593.8,586.9 594.8,587 595.8,587.1 596.8,587.2 597.8,587.3 598.8,587.4 599.8,587.5 600.8,587.7 601.8,587.8 602.8,587.9 603.8,588 604.8,588.1 605.8,588.3 606.8,588.4 607.8,588.5 608.8,588.6 609.8,588.8 610.8,588.9 611.8,589 612.8,589.1 613.8,589.2 614.8,589.4 615.8,589.5 616.8,589.6 617.8,589.7 618.8,589.8 619.8,589.9 620.8,590 621.8,590.1 622.8,590.2 623.8,590.2 624.8,590.3 625.8,590.4 626.8,590.5 627.8,590.6 628.8,590.7 629.8,590.8 630.8,590.9 631.8,591 632.8,591.1 633.8,591.2 634.8,591.3 635.8,591.4 636.8,591.5 637.8,591.5 638.8,591.6 639.8,591.7 640.8,591.8 641.8,591.9 642.8,592 643.8,592.1 644.8,592.2 645.8,592.2 646.8,592.3 647.8,592.4 648.8,592.5 649.8,592.6 650.8,592.7 651.8,592.7 652.8,592.8 653.8,592.9 654.8,593 655.8,593 656.8,593.1 657.8,593.2 658.8,593.2 659.8,593.3 660.8,593.4 661.8,593.4 662.8,593.5 663.8,593.6 664.8,593.6 665.8,593.7 666.8,593.7 667.8,593.8 668.8,593.9 669.8,593.9 670.8,594 671.8,594 672.8,594.1 673.8,594.1 674.8,594.2 675.8,594.2 676.8,594.2 677.8,594.3 678.8,594.3 679.8,594.4 680.8,594.4 681.8,594.5 682.8,594.5 683.8,594.6 684.8,594.6 685.8,594.6 686.8,594.7 687.8,594.7 688.8,594.8 689.8,594.8 690.8,594.9 691.8,594.9 692.8,594.9 693.8,595 694.8,595 695.8,595.1 696.8,595.1 697.8,595.1 698.8,595.2 699.8,595.2 700.8,595.3 701.8,595.3 702.8,595.3 703.8,595.4 704.8,595.4 705.8,595.5 706.8,595.5 707.8,595.5 708.8,595.6 709.8,595.6 710.8,595.6 711.8,595.7 712.8,595.7 713.8,595.7 714.8,595.8 715.8,595.8 716.8,595.9 717.8,595.9 718.8,595.9 719.8,596 720.8,596 721.8,596 722.8,596.1 723.8,596.1 724.8,596.1 725.8,596.2 726.8,596.2 727.8,596.2 728.8,596.3 729.8,596.3 730.8,596.3 731.8,596.4 732.8,596.4 733.8,596.4 734.8,596.5 735.8,596.5 736.8,596.5 737.8,596.6 738.8,596.6 739.8,596.6 740.8,596.7 741.8,596.7 742.8,596.7 743.8,596.8 744.8,596.8 745.8,596.8 746.8,596.9 747.8,596.9 748.8,596.9 749.8,597 750.8,597 751.8,597 752.8,597.1 753.8,597.1 754.8,597.1 755.8,597.2 756.8,597.2 757.8,597.2 758.8,597.3 759.8,597.3 760.8,597.3 761.8,597.3 762.8,597.4 763.8,597.4 764.8,597.4 765.8,597.5 766.8,597.5 767.8,597.5 768.8,597.6 769.8,597.6 770.8,597.6 771.8,597.7 772.8,597.7 773.8,597.7 774.8,597.8 775.8,597.8 776.8,597.8 777.8,597.9 778.8,597.9 779.8,597.9 780.8,597.9 781.8,598 782.8,598 783.8,598 784.8,598.1 785.8,598.1 786.8,598.1 787.8,598.2 788.8,598.2 789.8,598.2 790.8,598.2 791.8,598.3 792.8,598.3 793.8,598.3 794.8,598.4 795.8,598.4 796.8,598.4 797.8,598.4 798.8,598.5 799.8,598.5 800.8,598.5 801.8,598.5 802.8,598.6 803.8,598.6 804.8,598.6 805.8,598.6 806.8,598.7 807.8,598.7 808.8,598.7 809.8,598.7 810.8,598.8 811.8,598.8 812.8,598.8 813.8,598.8 814.8,598.9 815.8,598.9 816.8,598.9 817.8,598.9 818.8,599 819.8,599 820.8,599 821.8,599 822.8,599 823.8,599.1 824.8,599.1 825.8,599.1 826.8,599.1 827.8,599.1 828.8,599.2 829.8,599.2 830.8,599.2 831.8,599.2 832.8,599.2 833.8,599.3 834.8,599.3 835.8,599.3 836.8,599.3 837.8,599.3 838.8,599.4 839.8,599.4 840.8,599.4 841.8,599.4 842.8,599.4 843.8,599.5 844.8,599.5 845.8,599.5 846.8,599.5 847.8,599.5 848.8,599.6 849.8,599.6 850.8,599.6 851.8,599.6 852.8,599.6 853.8,599.6 854.8,599.7 855.8,599.7 856.8,599.7 857.8,599.7 858.8,599.7 859.8,599.7 860.8,599.8 861.8,599.8 862.8,599.8 863.8,599.8 864.8,599.8 865.8,599.8 866.8,599.9 867.8,599.9 868.8,599.9 869.8,599.9 870.8,599.9 871.8,599.9 872.8,600 873.8,600 874.8,600 875.8,600 876.8,600 877.8,600 878.8,600.1 879.8,600.1 880.8,600.1 881.8,600.1 882.8,600.1 883.8,600.1 884.8,600.1 885.8,600.2 886.8,600.2 887.8,600.2 888.8,600.2 889.8,600.2 890.8,600.2 891.8,600.2 892.8,600.2 893.8,600.3 894.8,600.3 895.8,600.3 896.8,600.3 897.8,600.3 898.8,600.3 899.8,600.3 900.8,600.3 901.8,600.4 902.8,600.4 903.8,600.4 904.8,600.4 905.8,600.4 906.8,600.4 907.8,600.4 908.8,600.4 909.8,600.5 910.8,600.5 911.8,600.5 912.8,600.5 913.8,600.5 914.8,600.5 915.8,600.5 916.8,600.5 917.8,600.5 918.8,600.5 919.8,600.6 920.8,600.6 921.8,600.6 922.8,600.6 923.8,600.6 924.8,600.6 925.8,600.6 926.8,600.6 927.8,600.6 928.8,600.6 929.8,600.7 930.8,600.7 931.8,600.7 932.8,600.7 933.8,600.7 934.8,600.7 935.8,600.7 936.8,600.7 937.8,600.7 938.8,600.7 939.8,600.7 940.8,600.8 941.8,600.8 942.8,600.8 943.8,600.8 944.8,600.8 945.8,600.8 946.8,600.8 947.8,600.8 948.8,600.8 949.8,600.8 950.8,600.8 951.8,600.9 952.8,600.9 953.8,600.9 954.8,600.9 955.8,600.9 956.8,600.9 957.8,600.9 958.8,600.9 959.8,600.9 960.8,600.9 961.8,600.9 962.8,600.9 963.8,600.9 964.8,601 965.8,601 966.8,601 967.8,601 968.8,601 969.8,601 970.8,601 971.8,601 972.8,601 973.8,601 974.8,601 975.8,601 976.8,601 977.8,601.1 978.8,601.1 979.8,601.1 980.8,601.1 981.8,601.1 982.8,601.1 983.8,601.1 984.8,601.1 985.8,601.1 986.8,601.1 987.8,601.1 988.8,601.1 989.8,601.1 990.8,601.2 991.8,601.2 992.8,601.2 993.8,601.2 994.8,601.2 995.8,601.2 996.8,601.2 997.8,601.2 998.8,601.2 999.8,601.2 1000.8,601.2 1001.8,601.2 1002.8,601.2 1003.8,601.3 1004.8,601.3 1005.8,601.3 1006.8,601.3 1007.8,601.3 1008.8,601.3 1009.8,601.3 1010.8,601.3 1011.8,601.3 1012.8,601.3 1013.8,601.3 1014.8,601.3 1015.8,601.4 1016,601.4 1016,608.6 1015.8,608.6 1014.8,608.6 1013.8,608.6 1012.8,608.6 1011.8,608.6 1010.8,608.6 1009.8,608.6 1008.8,608.6 1007.8,608.6 1006.8,608.6 1005.8,608.6 1004.8,608.5 1003.8,608.5 1002.8,608.5 1001.8,608.5 1000.8,608.5 999.8,608.5 998.8,608.5 997.8,608.5 996.8,608.5 995.8,608.5 994.8,608.5 993.8,608.5 992.8,608.5 991.8,608.4 990.8,608.4 989.8,608.4 988.8,608.4 987.8,608.4 986.8,608.4 985.8,608.4 984.8,608.4 983.8,608.4 982.8,608.4 981.8,608.4 980.8,608.4 979.8,608.4 978.8,608.3 977.8,608.3 976.8,608.3 975.8,608.3 974.8,608.3 973.8,608.3 972.8,608.3 971.8,608.3 970.8,608.3 969.8,608.3 968.8,608.3 967.8,608.3 966.8,608.3 965.8,608.2 964.8,608.2 963.8,608.2 962.8,608.2 961.8,608.2 960.8,608.2 959.8,608.2 958.8,608.2 957.8,608.2 956.8,608.2 955.8,608.2 954.8,608.2 953.8,608.2 952.8,608.1 951.8,608.1 950.8,608.1 949.8,608.1 948.8,608.1 947.8,608.1 946.8,608.1 945.8,608.1 944.8,608.1 943.8,608.1 942.8,608.1 941.8,608.1 940.8,608 939.8,608 938.8,608 937.8,608 936.8,608 935.8,608 934.8,608 933.8,608 932.8,608 931.8,608 930.8,608 929.8,608 928.8,607.9 927.8,607.9 926.8,607.9 925.8,607.9 924.8,607.9 923.8,607.9 922.8,607.9 921.8,607.9 920.8,607.9 919.8,607.9 918.8,607.9 917.8,607.8 916.8,607.8 915.8,607.8 914.8,607.8 913.8,607.8 912.8,607.8 911.8,607.8 910.8,607.8 909.8,607.8 908.8,607.8 907.8,607.7 906.8,607.7 905.8,607.7 904.8,607.7 903.8,607.7 902.8,607.7 901.8,607.7 900.8,607.7 899.8,607.7 898.8,607.6 897.8,607.6 896.8,607.6 895.8,607.6 894.8,607.6 893.8,607.6 892.8,607.6 891.8,607.6 890.8,607.6 889.8,607.5 888.8,607.5 887.8,607.5 886.8,607.5 885.8,607.5 884.8,607.5 883.8,607.5 882.8,607.5 881.8,607.4 880.8,607.4 879.8,607.4 878.8,607.4 877.8,607.4 876.8,607.4 875.8,607.4 874.8,607.3 873.8,607.3 872.8,607.3 871.8,607.3 870.8,607.3 869.8,607.3 868.8,607.3 867.8,607.2 866.8,607.2 865.8,607.2 864.8,607.2 863.8,607.2 862.8,607.2 861.8,607.1 860.8,607.1 859.8,607.1 858.8,607.1 857.8,607.1 856.8,607.1 855.8,607.1 854.8,607 853.8,607 852.8,607 851.8,607 850.8,607 849.8,607 848.8,606.9 847.8,606.9 846.8,606.9 845.8,606.9 844.8,606.9 843.8,606.8 842.8,606.8 841.8,606.8 840.8,606.8 839.8,606.8 838.8,606.8 837.8,606.7 836.8,606.7 835.8,606.7 834.8,606.7 833.8,606.7 832.8,606.6 831.8,606.6 830.8,606.6 829.8,606.6 828.8,606.6 827.8,606.5 826.8,606.5 825.8,606.5 824.8,606.5 823.8,606.5 822.8,606.4 821.8,606.4 820.8,606.4 819.8,606.4 818.8,606.4 817.8,606.3 816.8,606.3 815.8,606.3 814.8,606.3 813.8,606.3 812.8,606.2 811.8,606.2 810.8,606.2 809.8,606.2 808.8,606.2 807.8,606.1 806.8,606.1 805.8,606.1 804.8,606.1 803.8,606 802.8,606 801.8,606 800.8,606 799.8,605.9 798.8,605.9 797.8,605.9 796.8,605.9 795.8,605.8 794.8,605.8 793.8,605.8 792.8,605.8 791.8,605.7 790.8,605.7 789.8,605.7 788.8,605.7 787.8,605.6 786.8,605.6 785.8,605.6 784.8,605.6 783.8,605.5 782.8,605.5 781.8,605.5 780.8,605.4 779.8,605.4 778.8,605.4 777.8,605.3 776.8,605.3 775.8,605.3 774.8,605.3 773.8,605.2 772.8,605.2 771.8,605.2 770.8,605.1 769.8,605.1 768.8,605.1 767.8,605 766.8,605 765.8,605 764.8,605 763.8,604.9 762.8,604.9 761.8,604.9 760.8,604.8 759.8,604.8 758.8,604.8 757.8,604.7 756.8,604.7 755.8,604.7 754.8,604.6 753.8,604.6 752.8,604.6 751.8,604.5 750.8,604.5 749.8,604.5 748.8,604.4 747.8,604.4 746.8,604.4 745.8,604.3 744.8,604.3 743.8,604.3 742.8,604.3 741.8,604.2 740.8,604.2 739.8,604.2 738.8,604.1 737.8,604.1 736.8,604.1 735.8,604 734.8,604 733.8,604 732.8,603.9 731.8,603.9 730.8,603.9 729.8,603.8 728.8,603.8 727.8,603.8 726.8,603.7 725.8,603.7 724.8,603.7 723.8,603.6 722.8,603.6 721.8,603.6 720.8,603.5 719.8,603.5 718.8,603.5 717.8,603.4 716.8,603.4 715.8,603.4 714.8,603.3 713.8,603.3 712.8,603.3 711.8,603.2 710.8,603.2 709.8,603.1 708.8,603.1 707.8,603.1 706.8,603 705.8,603 704.8,603 703.8,602.9 702.8,602.9 701.8,602.9 700.8,602.8 699.8,602.8 698.8,602.8 697.8,602.7 696.8,602.7 695.8,602.6 694.8,602.6 693.8,602.6 692.8,602.5 691.8,602.5 690.8,602.4 689.8,602.4 688.8,602.4 687.8,602.3 686.8,602.3 685.8,602.2 684.8,602.2 683.8,602.2 682.8,602.1 681.8,602.1 680.8,602 679.8,602 678.8,602 677.8,601.9 676.8,601.9 675.8,601.8 674.8,601.8 673.8,601.7 672.8,601.7 671.8,601.7 670.8,601.6 669.8,601.6 668.8,601.5 667.8,601.5 666.8,601.4 665.8,601.4 664.8,601.3 663.8,601.3 662.8,601.2 661.8,601.2 660.8,601.1 659.8,601.1 658.8,601 657.8,601 656.8,600.9 655.8,600.8 654.8,600.8 653.8,600.7 652.8,600.6 651.8,600.6 650.8,600.5 649.8,600.4 648.8,600.4 647.8,600.3 646.8,600.2 645.8,600.1 644.8,600.1 643.8,600 642.8,599.9 641.8,599.8 640.8,599.7 639.8,599.7 638.8,599.6 637.8,599.5 636.8,599.4 635.8,599.3 634.8,599.2 633.8,599.1 632.8,599.1 631.8,599 630.8,598.9 629.8,598.8 628.8,598.7 627.8,598.6 626.8,598.5 625.8,598.4 624.8,598.3 623.8,598.2 622.8,598.1 621.8,598 620.8,598 619.8,597.9 618.8,597.8 617.8,597.7 616.8,597.6 615.8,597.5 614.8,597.4 613.8,597.3 612.8,597.2 611.8,597.1 610.8,597 609.8,596.9 608.8,596.8 607.8,596.7 606.8,596.5 605.8,596.4 604.8,596.3 603.8,596.2 602.8,596.1 601.8,595.9 600.8,595.8 599.8,595.7 598.8,595.6 597.8,595.4 596.8,595.3 595.8,595.2 594.8,595.1 593.8,595 592.8,594.9 591.8,594.7 590.8,594.6 589.8,594.5 588.8,594.4 587.8,594.3 586.8,594.2 585.8,594.1 584.8,594.1 583.8,594 582.8,593.9 581.8,593.9 580.8,593.8 579.8,593.7 578.8,593.7 577.8,593.6 576.8,593.6 575.8,593.5 574.8,593.4 573.8,593.4 572.8,593.3 571.8,593.3 570.8,593.2 569.8,593.2 568.8,593.2 567.8,593.1 566.8,593.1 565.8,593 564.8,593 563.8,592.9 562.8,592.9 561.8,592.9 560.8,592.8 559.8,592.8 558.8,592.7 557.8,592.7 556.8,592.6 555.8,592.6 554.8,592.6 553.8,592.5 552.8,592.5 551.8,592.5 550.8,592.4 549.8,592.4 548.8,592.4 547.8,592.4 546.8,592.3 545.8,592.3 544.8,592.3 543.8,592.3 542.8,592.2 541.8,592.2 540.8,592.2 539.8,592.1 538.8,592.1 537.8,592 536.8,592 535.8,592 534.8,591.9 533.8,591.9 532.8,591.9 531.8,591.8 530.8,591.7 529.8,591.7 528.8,591.7 527.8,591.2 526.8,590.4 525.8,589.5 524.8,588.3 523.8,586.3 522.8,583.7 521.8,580.7 520.8,576.7 519.8,572.6 518.8,568.3 517.8,561.5Z" fill="#f800f8"/>
<path d="M478.6,443.1 479.6,443 480.6,443.4 481.6,442.8 482.6,443 483.6,442.8 484.6,442.9 485.6,442.7 486.6,443.3 487.6,443.3 488.6,443 489.6,443 490.6,443.4 491.6,442.9 492.6,442.9 493.6,443.1 494.6,443.2 495.6,442.8 496.6,443.3 497.6,443.1 498.6,442.9 499.6,443.1 500.6,443.3 501.6,443.2 502.6,442.8 503.6,443.1 504.6,443.3 505.6,442.3 506.6,443.3 507.6,442.9 508.6,443 509.6,442.9 510.6,441.8 511.6,442.7 512.6,443.2 513.6,443.3 514.6,443.3 515.6,442.8 516.6,443 517.6,443 517.6,561.9 516.6,454.8 515.6,454.9 514.6,454.4 513.6,454.7 512.6,454.8 511.6,455 510.6,454.6 509.6,454.6 508.6,454.7 507.6,455.5 506.6,454.6 505.6,454.5 504.6,454.5 503.6,454.4 502.6,454.4 501.6,454.4 500.6,454.6 499.6,455.6 498.6,454.4 497.6,454.9 496.6,454.9 495.6,454.5 494.6,456.3 493.6,454.6 492.6,454.5 491.6,454.4 490.6,454.4 489.6,454.5 488.6,454.4 487.6,455 486.6,455.5 485.6,454.8 484.6,454.4 483.6,454.5 482.6,454.8 481.6,454.5 480.6,454.4 479.6,454.7 478.6,454.5Z" fill="#780078"/>
<path d="M478.6,444.3 479.6,444.3 480.6,444.4 481.6,444.3 482.6,444.1 483.6,444.1 484.6,444.4 485.6,444.4 486.6,444.3 487.6,444.4 488.6,444.3 489.6,444.4 490.6,444.3 491.6,444.2 492.6,444.2 493.6,444.4 494.6,444.1 495.6,444.2 496.6,444.5 497.6,444.5 498.6,444.2 499.6,444.1 500.6,444.3 501.6,444.4 502.6,444.3 503.6,444.4 504.6,444.5 505.6,444.2 506.6,444.3 507.6,444.1 508.6,444.1 509.6,444.1 510.6,444.2 511.6,444.1 512.6,444.5 513.6,444.5 514.6,444.1 515.6,444.4 516.6,444.1 517.6,443.9 517.6,560.6 516.6,453.8 515.6,453.6 514.6,453.6 513.6,453.4 512.6,453.4 511.6,453.6 510.6,453.3 509.6,453.4 508.6,453.7 507.6,453.4 506.6,453.4 505.6,453.4 504.6,453.4 503.6,453.5 502.6,453.5 501.6,453.3 500.6,453.4 499.6,453.6 498.6,453.5 497.6,453.6 496.6,453.7 495.6,453.7 494.6,453.5 493.6,453.3 492.6,453.3 491.6,453.4 490.6,453.6 489.6,453.6 488.6,453.5 487.6,453.3 486.6,453.3 485.6,453.7 484.6,453.5 483.6,453.4 482.6,453.4 481.6,453.4 480.6,453.3 479.6,453.6 478.6,453.7Z" fill="#c800c8"/>
<path d="M478.6,446 479.6,446 480.6,446 481.6,446 482.6,446 483.6,446 484.6,446 485.6,446 486.6,446 487.6,446 488.6,446 489.6,446 490.6,446 491.6,446 492.6,446 493.6,446 494.6,446 495.6,446 496.6,446 497.6,446 498.6,446 499.6,446 500.6,446 501.6,446 502.6,446 503.6,446 504.6,446 505.6,446 506.6,446 507.6,446 508.6,446 509.6,446 510.6,446 511.6,446 512.6,446 513.6,446 514.6,446 515.6,446 516.6,444.1 517.6,444.1 517.6,560.6 516.6,453.6 515.6,452 514.6,452 513.6,452 512.6,452 511.6,452 510.6,452 509.6,452 508.6,452 507.6,452 506.6,452 505.6,452 504.6,452 503.6,452 502.6,452 501.6,452 500.6,452 499.6,452 498.6,452 497.6,452 496.6,452 495.6,452 494.6,452 493.6,452 492.6,452 491.6,452 490.6,452 489.6,452 488.6,452 487.6,452 486.6,452 485.6,452 484.6,452 483.6,452 482.6,452 481.6,452 480.6,452 479.6,452 478.6,452Z" fill="#f800f8"/>
<path d="M478.0 497 L478.8 447" stroke="#e800e8" stroke-width="1.6" fill="none"/>
<path d="M517.4 445 L517.4 552 L518.4 566" stroke="#e800e8" stroke-width="1.6" fill="none"/>
<path d="M17,247.7 18,247.9 19,248 20,248.3 21,248.3 22,247.8 23,247.8 24,248.2 25,247.7 26,247.9 27,247.7 28,248 29,248.1 30,247.9 31,248 32,247.9 33,247.8 34,248 35,247.9 36,248.1 37,248.1 38,248.2 39,247 40,247.9 41,248.1 42,248 43,247.7 44,248.2 45,248.1 46,248.2 47,248.2 48,247.8 49,248 50,247.8 51,247.8 52,248.1 53,248.1 54,248 55,247.9 56,248.2 57,248.1 58,247.8 59,248.1 60,247.7 61,248.2 62,247.8 63,248.3 64,248.2 65,248.3 66,247.9 67,248.1 68,248.3 69,248.2 70,247.8 71,247.9 72,248 73,247.9 74,248.2 75,247.8 76,248.1 77,247.8 78,247.7 79,248.2 80,248.2 81,247.8 82,248 83,247.7 84,248 85,247.7 86,248.2 87,248 88,248.3 89,248.1 90,247.9 91,247.9 92,248.2 93,247.8 94,248.2 95,248 96,247.8 97,248.3 98,247.7 99,248 100,247.7 101,247.7 102,247.8 103,247.9 104,247.9 105,248.2 106,248.1 107,248 108,247.9 109,248 110,247.8 111,247.9 112,248 113,248.1 114,247.9 115,247.9 116,248.3 117,248.1 118,248.1 119,248.2 120,247.7 121,248 122,247.7 123,248 124,248.3 125,247.8 126,247.7 127,248.1 128,248.2 129,247.8 130,248 131,248.1 132,248.2 133,247.8 134,248.1 135,248 136,247.8 137,247.7 138,247.8 139,247.9 140,248 141,248.3 142,248 143,247.8 144,247.9 145,248.3 146,247.9 147,248.2 148,247.8 149,248.1 150,247.9 151,248.2 152,247.9 153,247.9 154,247.8 155,247.7 156,247.9 157,248 158,248.2 159,247.9 160,248.2 161,247.8 162,246.8 163,248 164,247.9 165,248 166,248.3 167,248.2 168,248.3 169,247.8 170,247.8 171,247.8 172,247.9 173,247.9 174,248 175,248 176,248.2 177,247.8 178,247.8 179,247.8 180,248.1 181,247.8 182,247.9 183,248 184,248.2 185,247.5 186,247.9 187,247.8 188,248 189,248.1 190,247.9 191,248 192,247.8 193,248 194,248 195,247.9 196,248.3 197,248.2 198,248.2 199,248.1 200,247.8 201,247.8 202,248.2 203,248.3 204,246.2 205,247.8 206,247.8 207,248.3 208,247.8 209,247.9 210,247.9 211,247.9 212,247.8 213,248.1 214,246.4 215,246 216,247.8 217,247.9 218,248 219,248.2 220,247.8 221,247.7 222,248.2 223,248.1 224,248.3 225,248.3 226,248.1 227,247.8 228,248.2 229,248.3 230,246.2 231,248.3 232,247.7 233,248.3 234,248.3 235,247.8 236,247.9 237,247.9 238,248 239,248.3 240,247.8 241,247.8 242,248 243,247.9 244,247.9 245,247.8 246,248 247,248.1 248,248.1 249,248.1 250,247.9 251,247.8 252,248.1 253,247.8 254,247.9 255,248.3 256,248.2 257,248.2 258,248.2 259,248.1 260,247.9 261,247.9 262,247.7 263,248 264,248.2 265,247.8 266,247.8 267,248 268,248 269,247.2 270,248 271,247.8 272,248.1 273,247.9 274,247.9 275,247.8 276,248.2 277,248.2 278,247.9 279,247.8 280,248.2 281,248.1 282,247.7 283,247.7 284,247.8 285,248.2 286,248 287,247.9 288,248 289,248 290,247.9 291,247.7 292,248.3 293,247.9 294,247 295,248.2 296,248.2 297,248.2 298,247.3 299,248.3 300,247.7 301,248.1 302,248.1 303,248 304,248.1 305,248.3 306,247.8 307,247.9 308,248 309,247.9 310,248.2 311,247.9 312,248.1 313,247.7 314,247.8 315,248.2 316,248.3 317,248.3 318,248.1 319,247.7 320,248 321,247.7 322,247.9 323,247.7 324,247.9 325,248 326,248 327,248.3 328,247.8 329,247.7 330,248 331,247.8 332,247.9 333,248.2 334,248.1 335,247.7 336,247.8 337,247.7 338,247.9 339,248.1 340,248.3 341,248.2 342,248.1 343,248 344,247.8 345,248.1 346,248 347,248.2 348,247.9 349,248 350,248.1 351,248.1 352,248.3 353,248.2 354,248.2 355,247.8 356,247.9 357,248.3 358,248.3 359,248.1 360,248.3 361,248.1 362,248 363,248 364,248 365,248.3 366,248.2 367,248.1 368,247.9 369,247.9 370,248.2 371,248 372,247.9 373,247.9 374,247.8 375,247.9 376,248 377,248.1 378,247.9 379,248.1 380,246.4 381,248.3 382,248.1 383,247.9 384,247.9 385,245.8 386,248.3 387,247.8 388,248.2 389,248.2 390,248.2 391,247.8 392,248.1 393,247.8 394,247.9 395,248 396,247.8 397,247.8 398,248.1 399,247.8 400,248.1 401,248.2 402,248.2 403,248.2 404,246.4 405,247.8 406,247.7 407,247.9 408,248.2 409,247.8 410,247.8 411,247.8 412,248.1 413,248 414,248.1 415,247.9 416,248.1 417,248.1 418,247.8 419,247.8 420,248.1 421,247.8 422,248.2 423,248.1 424,248.3 425,248 426,248.2 427,248.2 428,245.9 429,247.7 430,248.2 431,248 432,248.2 433,247.7 434,247.9 435,248.2 436,247.7 437,247.9 438,247.9 439,246.9 440,247.7 441,247.9 442,247.1 443,248 444,248 445,248.1 446,247.8 447,247.7 448,247.8 449,248.3 450,248 451,248.1 452,248 453,247.8 454,248.2 455,248 456,248 457,247.8 458,247.7 459,248.2 460,247.9 461,248.2 462,248 463,247.9 464,248.1 465,248.1 466,247.8 467,247.7 468,247.7 469,247.7 470,247.7 471,247.9 472,248.1 473,248.3 474,248.1 475,248 476,247 477,247.8 478,248.2 479,248.9 480,249.8 481,251.2 482,252.3 483,253.6 484,254.6 485,256 486,257.4 487,258.3 488,259.4 489,260.5 490,261.7 491,263.2 492,264.3 493,265.3 494,266 495,267.3 496,268.5 497,267.8 498,270.5 499,271.6 500,272.7 501,273.9 502,274.9 503,275.7 504,277 505,277.8 506,279.1 507,279.8 508,281.4 509,282.1 510,283.4 511,284.4 512,285.2 513,286.5 514,287.9 515,288.6 516,289.6 517,290.9 518,292 519,292.5 520,293.7 521,294.5 522,295.9 523,296.3 524,297.3 525,298.2 526,299.2 527,300 528,300.3 529,301 530,301.9 531,302.8 532,303.5 533,303.9 534,304.5 535,305.1 536,305.7 537,306 538,306.4 539,307.4 540,307.4 541,308.3 542,308.8 543,308.8 544,309.4 545,310 546,310 547,310.8 548,311.1 549,311 550,311.6 551,312 552,310.8 553,311 554,312.4 555,313.1 556,313.3 557,313.3 558,313.5 559,313.6 560,314 561,314.5 562,314.6 563,314.9 564,314.7 565,315.1 566,314.9 567,313.5 568,315.2 569,315.5 570,315.8 571,315.6 572,315.7 573,315.8 574,316.3 575,316 576,316.3 577,316.6 578,316.7 579,316.8 580,316.5 581,317.1 582,316.9 583,314.6 584,316.9 585,317.1 586,317.3 587,317.7 588,317.7 589,317.5 590,317.7 591,317.7 592,317.6 593,318 594,318.1 595,318.1 596,317.8 597,317.8 598,317.9 599,318.3 600,318 601,318.5 602,318.5 603,318.3 604,318.2 605,318.4 606,318.7 607,318.4 608,318.8 609,318.6 610,318.4 611,318.6 612,318.7 613,318.7 614,318.9 615,318.7 616,318.8 617,319 618,319 619,318.7 620,319 621,318.9 622,318.9 623,318.8 624,318.8 625,319 626,318.8 627,319.1 628,319.3 629,319.2 630,319.2 631,319.3 632,319.3 633,319.5 634,319.2 635,319.1 636,319.3 637,319.4 638,319.1 639,319.4 640,319.5 641,319.2 642,319.2 643,319.2 644,319.6 645,319.5 646,319.3 647,319.6 648,319.5 649,319.6 650,319.4 651,319.5 652,319.6 653,319.6 654,319.7 655,319.4 656,319.5 657,319.7 658,319.6 659,319.4 660,319.7 661,319.9 662,319.8 663,319.8 664,320 665,319.9 666,319.9 667,317.8 668,319.7 669,319.7 670,319.7 671,319.7 672,319.8 673,319.9 674,320 675,319.7 676,319.7 677,320 678,319.9 679,320.2 680,320 681,320.1 682,320.1 683,319.8 684,320 685,320.1 686,319.9 687,320.1 688,320.3 689,320.2 690,319.9 691,320 692,319.9 693,319.9 694,320.4 695,320.1 696,320.1 697,320.2 698,320 699,320.3 700,320 701,317.5 702,320.2 703,320.4 704,320.1 705,320.4 706,320.6 707,320.5 708,320.5 709,320.6 710,320.1 711,320.6 712,320.5 713,320.5 714,320.6 715,320.2 716,320.6 717,320.4 718,320.3 719,320.3 720,320.4 721,320.4 722,320.4 723,320.4 724,320.7 725,320.8 726,320.7 727,320.8 728,320.7 729,320.3 730,320.4 731,320.7 732,320.6 733,320.8 734,320.9 735,320.8 736,320.7 737,320.6 738,320.5 739,320.5 740,320.6 741,320.5 742,320.5 743,320.6 744,321 745,320.7 746,320.7 747,321 748,320.8 749,320.7 750,321 751,320.7 752,320.7 753,320.9 754,321.1 755,321 756,320.6 757,321.1 758,320.9 759,320.9 760,321 761,320.7 762,321.1 763,321.1 764,321.2 765,321.2 766,321 767,321.3 768,320.8 769,320.7 770,321.2 771,320.8 772,321.2 773,321 774,321.1 775,321.1 776,321.2 777,321 778,321.1 779,320.9 780,320.9 781,321.1 782,320.9 783,320.9 784,321 785,321.5 786,321.4 787,321.3 788,321.2 789,321.4 790,321.4 791,320.3 792,321.4 793,321.5 794,321 795,321.2 796,321.4 797,321.1 798,321 799,321.6 800,321.6 801,321.2 802,321.5 803,321.4 804,321.6 805,321.6 806,321.4 807,321.4 808,321.4 809,321.6 810,321.3 811,321.6 812,321.2 813,321.6 814,321.5 815,321.3 816,321.4 817,321.5 818,321.3 819,321.3 820,321.1 821,321.6 822,321.2 823,321.6 824,321.4 825,321.2 826,321.5 827,321.2 828,321.5 829,321.5 830,321.2 831,321.6 832,321.4 833,321.7 834,321.3 835,321.5 836,321.4 837,321.3 838,321.3 839,321.7 840,321.6 841,321.5 842,321.7 843,321.4 844,321.7 845,321.5 846,321.5 847,321.7 848,321.4 849,321.8 850,321.7 851,321.3 852,321.7 853,321.4 854,321.5 855,321.7 856,321.7 857,321.3 858,321.4 859,321.7 860,321.8 861,320.5 862,321.8 863,321.5 864,319.4 865,321.7 866,321.9 867,321.7 868,321.8 869,321.4 870,321.7 871,321.7 872,321.8 873,321.6 874,321.7 875,321.9 876,321.9 877,321.8 878,321.9 879,321.4 880,321.6 881,321.8 882,321 883,321.5 884,322 885,321.9 886,321.5 887,321.9 888,322 889,321.2 890,321.8 891,321.6 892,321.4 893,321.9 894,321.4 895,322 896,321.9 897,321.8 898,321.7 899,321.7 900,321.8 901,322 902,321.9 903,321.8 904,321.9 905,321.8 906,321.6 907,322 908,321.8 909,321.9 910,322 911,322 912,321.6 913,321.7 914,321.6 915,321.8 916,321.5 917,321.7 918,321.9 919,321.6 920,322.1 921,322 922,321.8 923,321.5 924,321.8 925,321.6 926,320.5 927,322 928,321.7 929,321.5 930,321.8 931,322 932,322.1 933,321.8 934,320.9 935,322.1 936,321.8 937,322 938,322 939,320.8 940,321.7 941,322.1 942,321.6 943,322.1 944,321.8 945,321.7 946,321.6 947,321.7 948,322.1 949,322.1 950,320.9 951,321.6 952,321.6 953,321.8 954,321.7 955,322.1 956,321.7 957,321.7 958,321.8 959,321.7 960,321.8 961,321.8 962,321.9 963,322.1 964,322.1 965,322 966,321.7 967,322 968,321.7 969,321.6 970,321.9 971,322 972,321.9 973,321.9 974,319.6 975,321.9 976,322.2 977,321.8 978,321.8 979,321.8 980,321.9 981,321.9 982,322 983,319.8 984,321.8 985,321.9 986,322.2 987,322.1 988,322 989,321.8 990,321.8 991,321.8 992,321.8 993,322.1 994,322.1 995,322.3 996,321.8 997,321.9 998,322.1 999,321.9 1000,322.3 1001,322 1002,322.3 1003,322 1004,321.9 1005,321.8 1006,322.2 1007,322.1 1008,322.2 1009,322.1 1010,322.2 1011,322 1012,322.2 1013,322.1 1014,322.4 1015,322 1016,322.1 1016,333.8 1015,333.7 1014,333.5 1013,333.6 1012,333.9 1011,333.7 1010,335.6 1009,333.6 1008,334.6 1007,333.7 1006,333.9 1005,333.6 1004,333.7 1003,333.5 1002,333.7 1001,333.9 1000,333.8 999,333.6 998,333.6 997,333.6 996,333.6 995,333.5 994,333.7 993,333.8 992,333.6 991,333.7 990,333.4 989,333.4 988,333.4 987,333.7 986,333.5 985,333.9 984,333.9 983,333.5 982,333.4 981,333.5 980,333.5 979,333.6 978,333.3 977,333.4 976,333.8 975,333.8 974,333.3 973,335.6 972,333.5 971,333.4 970,333.8 969,333.7 968,333.8 967,333.3 966,333.7 965,333.8 964,333.4 963,333.8 962,333.3 961,333.6 960,333.3 959,333.7 958,333.7 957,333.8 956,333.4 955,333.5 954,333.7 953,333.8 952,333.5 951,333.5 950,333.8 949,333.5 948,333.2 947,333.5 946,333.7 945,333.6 944,333.3 943,333.2 942,334.5 941,333.2 940,333.2 939,333.5 938,334.5 937,333.3 936,333.7 935,333.4 934,333.5 933,333.3 932,333.7 931,333.5 930,333.6 929,333.1 928,333.3 927,333.5 926,333.4 925,333.3 924,333.5 923,333.3 922,334 921,333.6 920,333.6 919,333.2 918,333.6 917,333.6 916,333.2 915,335 914,333.5 913,333.1 912,333.1 911,333.6 910,335.9 909,333.1 908,333.3 907,333.3 906,333.4 905,333.4 904,333.1 903,333.3 902,333.4 901,333.6 900,333.4 899,333.3 898,333.2 897,333.1 896,333.2 895,333.3 894,333.5 893,335.3 892,333.6 891,333.4 890,333.6 889,333.4 888,333.5 887,333.3 886,333.1 885,333.2 884,333.5 883,333.5 882,333.3 881,333.1 880,333.5 879,333.5 878,333 877,333.4 876,333.2 875,333.2 874,333.1 873,333.2 872,333.2 871,333.3 870,333 869,333.5 868,333.4 867,333.4 866,333.2 865,333.5 864,333 863,333.3 862,333.2 861,333 860,333 859,333 858,333.4 857,333.3 856,333.2 855,333.1 854,334 853,332.9 852,333.2 851,333.3 850,333.4 849,333.4 848,333.3 847,333.3 846,333.4 845,332.9 844,334.5 843,333 842,333.1 841,333.3 840,333.1 839,332.9 838,333.1 837,333.2 836,333.2 835,332.9 834,333.3 833,333.4 832,332.9 831,333.3 830,332.9 829,333.2 828,332.8 827,332.9 826,333.3 825,333.2 824,333.2 823,333.3 822,333 821,332.8 820,333.1 819,333 818,333.1 817,333 816,333 815,333 814,333.2 813,333.1 812,333 811,332.9 810,332.7 809,332.7 808,333 807,333.1 806,333 805,332.8 804,333.1 803,332.7 802,332.8 801,333.1 800,332.9 799,333.1 798,332.9 797,332.9 796,333.2 795,333.1 794,333 793,332.6 792,332.8 791,332.8 790,332.8 789,332.8 788,333.3 787,333.1 786,332.9 785,332.7 784,333 783,332.6 782,332.8 781,332.6 780,332.6 779,333 778,332.5 777,332.6 776,332.5 775,332.9 774,332.7 773,332.6 772,332.6 771,332.8 770,332.6 769,332.9 768,332.9 767,332.7 766,332.3 765,332.8 764,332.6 763,332.4 762,332.5 761,332.7 760,332.8 759,332.8 758,332.7 757,332.7 756,332.5 755,332.4 754,332.5 753,332.2 752,333.3 751,332.5 750,332.5 749,332.2 748,332.5 747,332.5 746,332.4 745,332.4 744,332.6 743,333 742,332.6 741,332.2 740,333.7 739,332.5 738,332.1 737,334.6 736,332.3 735,332.1 734,332.4 733,333.2 732,332.2 731,332.1 730,332.2 729,334 728,332 727,332.2 726,332.4 725,332.1 724,332.2 723,332 722,332.1 721,332.3 720,331.8 719,331.9 718,331.9 717,332.3 716,332 715,332.1 714,333.2 713,332 712,331.9 711,331.7 710,331.7 709,331.9 708,332 707,331.8 706,331.7 705,331.9 704,331.8 703,331.8 702,331.5 701,332 700,331.8 699,331.5 698,331.5 697,331.8 696,331.6 695,331.5 694,331.5 693,331.6 692,331.6 691,331.8 690,333.5 689,331.7 688,331.9 687,331.9 686,331.7 685,331.4 684,331.8 683,331.3 682,331.3 681,331.6 680,331.6 679,331.7 678,331.5 677,331.4 676,331.4 675,331.7 674,331.6 673,332.1 672,331.7 671,331.3 670,331.6 669,331.7 668,331.2 667,331.4 666,331.5 665,331.9 664,332.3 663,331.4 662,331.6 661,331.5 660,331.3 659,331.2 658,331.4 657,331.1 656,331.2 655,331.4 654,331 653,331.2 652,331.4 651,331.4 650,331.3 649,331 648,331.2 647,330.9 646,333.4 645,330.8 644,331.2 643,330.9 642,331.2 641,331.2 640,330.7 639,331.1 638,330.7 637,330.7 636,330.9 635,331 634,331 633,330.7 632,330.9 631,330.9 630,330.5 629,330.9 628,331 627,330.5 626,331 625,330.6 624,330.8 623,330.7 622,330.3 621,330.7 620,330.5 619,332 618,331.6 617,330.4 616,330.1 615,330.5 614,330.6 613,330.2 612,330.1 611,330.3 610,330.3 609,330.1 608,330.5 607,330.2 606,330.3 605,329.9 604,330.2 603,331.9 602,330.2 601,329.8 600,329.7 599,330.2 598,329.4 597,329.7 596,329.8 595,329.7 594,329.4 593,329.2 592,329.5 591,329.3 590,329.3 589,328.9 588,329.3 587,329 586,329 585,328.6 584,328.7 583,328.5 582,328.7 581,329.2 580,328.5 579,328.2 578,328.4 577,328.2 576,328 575,327.8 574,327.8 573,329.1 572,327.7 571,327.7 570,327.3 569,327 568,327.4 567,326.8 566,327 565,326.9 564,326.4 563,326.2 562,326.1 561,326.1 560,326 559,325.7 558,325.3 557,327.1 556,325.1 555,325.8 554,324.6 553,324.5 552,325.3 551,323.9 550,323.3 549,322.9 548,322.9 547,322.7 546,321.9 545,322.1 544,321.6 543,320.9 542,320.6 541,320.1 540,319.9 539,319.4 538,318.9 537,318 536,317.7 535,316.9 534,316.7 533,315.9 532,315.5 531,314.7 530,314.4 529,313.3 528,313 527,312.4 526,311.2 525,310.5 524,309.8 523,308.8 522,308.3 521,308.5 520,306.4 519,305.4 518,304.3 517,303.2 516,302.1 515,301.3 514,300.3 513,299 512,298 511,296.9 510,295.7 509,295 508,293.7 507,292.5 506,291.8 505,290.5 504,289.4 503,288.7 502,287.4 501,286.5 500,285.5 499,284.1 498,283.1 497,282.4 496,281.3 495,280 494,278.9 493,278.1 492,276.7 491,275.5 490,276.8 489,273.2 488,272.2 487,273.2 486,270.2 485,269.1 484,267.5 483,266.5 482,265.4 481,263.9 480,263.1 479,261.7 478,260.5 477,259.4 476,259.8 475,259.7 474,259.5 473,259.8 472,259.4 471,259.4 470,261.4 469,259.7 468,259.6 467,260.5 466,259.5 465,259.8 464,259.3 463,259.6 462,259.7 461,259.4 460,259.4 459,259.8 458,259.5 457,259.3 456,259.3 455,259.4 454,259.7 453,259.6 452,259.9 451,259.7 450,259.9 449,259.6 448,259.3 447,261.7 446,259.6 445,259.5 444,259.6 443,259.4 442,259.8 441,259.9 440,259.4 439,259.7 438,259.9 437,259.7 436,259.7 435,259.6 434,259.6 433,259.7 432,259.6 431,259.4 430,259.3 429,259.5 428,259.4 427,259.5 426,259.7 425,259.8 424,259.3 423,259.4 422,259.6 421,259.4 420,259.4 419,259.8 418,259.5 417,259.5 416,259.6 415,259.5 414,259.8 413,259.6 412,259.8 411,259.6 410,259.3 409,261.8 408,259.7 407,259.5 406,259.8 405,259.6 404,259.9 403,259.9 402,259.6 401,259.5 400,259.8 399,259.7 398,259.6 397,259.4 396,259.3 395,259.8 394,259.9 393,259.6 392,259.9 391,259.9 390,259.5 389,259.9 388,259.4 387,259.8 386,259.3 385,259.7 384,259.9 383,260.7 382,259.9 381,259.5 380,259.5 379,259.3 378,259.8 377,259.5 376,259.7 375,259.7 374,259.3 373,259.7 372,259.5 371,259.4 370,259.5 369,259.9 368,259.6 367,260.3 366,259.5 365,259.3 364,259.6 363,259.4 362,259.4 361,259.8 360,259.5 359,259.6 358,259.6 357,261.1 356,259.5 355,259.6 354,259.9 353,259.3 352,259.4 351,259.5 350,259.9 349,261 348,259.4 347,259.6 346,259.8 345,259.4 344,259.6 343,259.5 342,259.6 341,259.7 340,259.8 339,259.4 338,259.5 337,259.5 336,259.5 335,259.5 334,259.4 333,259.6 332,259.7 331,259.3 330,259.7 329,260 328,259.4 327,259.8 326,259.7 325,259.8 324,259.7 323,259.4 322,259.4 321,259.8 320,259.5 319,259.4 318,259.7 317,259.7 316,259.6 315,259.4 314,259.8 313,259.8 312,259.6 311,259.6 310,259.6 309,259.7 308,259.7 307,259.4 306,259.4 305,259.4 304,259.5 303,259.3 302,259.3 301,259.5 300,259.4 299,259.9 298,259.5 297,259.9 296,259.7 295,259.6 294,259.7 293,259.8 292,259.8 291,259.8 290,259.9 289,259.7 288,259.8 287,259.5 286,259.7 285,259.8 284,259.5 283,259.7 282,259.9 281,259.8 280,259.5 279,259.7 278,259.9 277,259.4 276,261.1 275,259.8 274,259.9 273,259.8 272,259.7 271,259.9 270,259.9 269,259.7 268,259.5 267,259.6 266,259.6 265,259.5 264,259.8 263,259.3 262,259.4 261,259.6 260,259.5 259,259.3 258,259.8 257,259.4 256,259.6 255,259.8 254,259.7 253,259.4 252,259.3 251,259.8 250,260.7 249,259.7 248,259.6 247,259.9 246,259.9 245,259.7 244,259.5 243,259.8 242,259.7 241,259.8 240,259.7 239,260.3 238,259.6 237,259.3 236,259.6 235,259.6 234,259.6 233,259.7 232,259.6 231,259.8 230,259.8 229,259.5 228,259.4 227,260.4 226,259.8 225,259.8 224,259.8 223,259.6 222,259.5 221,259.7 220,259.7 219,259.6 218,259.3 217,259.5 216,259.7 215,259.5 214,259.9 213,259.4 212,259.6 211,259.4 210,259.8 209,259.3 208,259.6 207,259.7 206,259.8 205,259.9 204,259.5 203,259.3 202,259.6 201,259.7 200,259.3 199,259.7 198,259.8 197,259.4 196,259.5 195,259.5 194,259.8 193,259.6 192,259.4 191,261.1 190,259.7 189,259.4 188,259.7 187,259.9 186,259.4 185,259.6 184,259.7 183,259.6 182,259.4 181,259.6 180,259.5 179,259.6 178,261.5 177,259.5 176,259.7 175,259.5 174,259.5 173,259.3 172,259.6 171,259.3 170,259.6 169,259.7 168,259.5 167,259.9 166,259.4 165,259.7 164,259.5 163,259.6 162,259.4 161,259.7 160,259.4 159,259.5 158,259.6 157,261.7 156,259.5 155,259.8 154,259.3 153,259.7 152,259.9 151,259.9 150,259.4 149,259.4 148,260.3 147,259.3 146,259.9 145,259.7 144,259.4 143,259.4 142,259.4 141,259.8 140,259.6 139,259.3 138,259.7 137,259.4 136,259.8 135,259.3 134,259.8 133,259.8 132,259.7 131,259.8 130,259.7 129,259.6 128,259.7 127,259.5 126,261.5 125,259.7 124,259.6 123,259.8 122,259.6 121,259.6 120,259.9 119,261.9 118,259.5 117,261.2 116,259.6 115,259.8 114,259.3 113,259.8 112,259.4 111,259.8 110,259.8 109,259.6 108,259.5 107,259.5 106,259.9 105,259.8 104,259.4 103,259.7 102,259.6 101,259.7 100,259.6 99,259.7 98,261 97,259.4 96,259.4 95,259.8 94,261.3 93,259.4 92,259.6 91,261.4 90,259.4 89,259.6 88,259.7 87,259.6 86,259.7 85,261.8 84,259.3 83,259.8 82,259.5 81,259.9 80,259.6 79,259.8 78,259.8 77,259.7 76,259.8 75,261 74,259.6 73,259.8 72,259.6 71,259.5 70,259.8 69,259.3 68,259.7 67,259.4 66,259.4 65,259.8 64,259.4 63,259.9 62,259.4 61,259.5 60,259.5 59,259.4 58,259.3 57,259.9 56,259.4 55,259.4 54,259.4 53,260.7 52,259.5 51,259.7 50,259.4 49,259.3 48,259.6 47,259.9 46,259.9 45,259.5 44,259.4 43,259.4 42,259.6 41,259.8 40,259.9 39,259.5 38,259.7 37,259.5 36,259.7 35,259.7 34,259.7 33,259.7 32,259.4 31,261.1 30,259.6 29,259.8 28,259.3 27,260.4 26,259.7 25,259.7 24,259.5 23,259.4 22,259.4 21,259.8 20,259.4 19,259.7 18,259.4 17,259.7Z" fill="#007878"/>
<path d="M17,248.4 18,248.6 19,248.3 20,248.5 21,248.5 22,248.3 23,248.4 24,248.5 25,248.5 26,248.5 27,248.6 28,248.6 29,248.5 30,248.5 31,248.5 32,248.3 33,248.6 34,248.5 35,248.7 36,248.3 37,248.6 38,248.6 39,248.6 40,248.4 41,248.4 42,248.6 43,248.4 44,248.5 45,248.4 46,248.6 47,248.5 48,248.5 49,248.7 50,248.5 51,248.6 52,248.6 53,248.4 54,248.3 55,248.5 56,248.5 57,248.4 58,248.5 59,248.7 60,248.4 61,248.7 62,248.5 63,248.5 64,248.3 65,248.6 66,248.6 67,248.5 68,248.7 69,248.3 70,248.6 71,248.4 72,248.6 73,248.4 74,248.6 75,248.6 76,248.4 77,248.3 78,248.6 79,248.7 80,248.3 81,248.6 82,248.4 83,248.6 84,248.6 85,248.5 86,248.4 87,248.5 88,248.4 89,248.4 90,248.4 91,248.4 92,248.3 93,248.6 94,248.6 95,248.5 96,248.7 97,248.6 98,248.4 99,248.6 100,248.5 101,248.7 102,248.7 103,248.4 104,248.4 105,248.5 106,248.4 107,248.4 108,248.3 109,248.6 110,248.7 111,248.5 112,248.6 113,248.3 114,248.5 115,248.5 116,248.7 117,248.5 118,248.3 119,248.7 120,248.6 121,248.5 122,248.5 123,248.5 124,248.3 125,248.4 126,248.4 127,248.5 128,248.6 129,248.7 130,248.5 131,248.4 132,248.3 133,248.6 134,248.3 135,248.6 136,248.7 137,248.5 138,248.5 139,248.5 140,248.5 141,248.3 142,248.6 143,248.6 144,248.6 145,248.5 146,248.3 147,248.6 148,248.7 149,248.4 150,248.6 151,248.6 152,248.6 153,248.6 154,248.6 155,248.3 156,248.3 157,248.3 158,248.7 159,248.4 160,248.5 161,248.3 162,248.4 163,248.4 164,248.7 165,248.6 166,248.6 167,248.6 168,248.6 169,248.6 170,248.4 171,248.6 172,248.3 173,248.6 174,248.7 175,248.6 176,248.4 177,248.4 178,248.5 179,248.4 180,248.4 181,248.7 182,248.4 183,248.5 184,248.6 185,248.5 186,248.4 187,248.5 188,248.5 189,248.7 190,248.5 191,248.6 192,248.6 193,248.4 194,248.5 195,248.4 196,248.6 197,248.5 198,248.6 199,248.3 200,248.6 201,248.6 202,248.6 203,248.6 204,248.4 205,248.6 206,248.5 207,248.4 208,248.6 209,248.7 210,248.4 211,248.5 212,248.5 213,248.6 214,248.7 215,248.6 216,248.3 217,248.4 218,248.4 219,248.6 220,248.4 221,248.6 222,248.6 223,248.7 224,248.6 225,248.4 226,248.4 227,248.5 228,248.4 229,248.6 230,248.5 231,248.4 232,248.7 233,248.5 234,248.6 235,248.4 236,248.6 237,248.6 238,248.4 239,248.7 240,248.4 241,248.6 242,248.7 243,248.4 244,248.6 245,248.3 246,248.5 247,248.5 248,248.5 249,248.5 250,248.4 251,248.6 252,248.7 253,248.6 254,248.5 255,248.4 256,248.4 257,248.5 258,248.5 259,248.6 260,248.6 261,248.5 262,248.4 263,248.4 264,248.6 265,248.3 266,248.5 267,248.4 268,248.6 269,248.5 270,248.6 271,248.6 272,248.6 273,248.4 274,248.3 275,248.6 276,248.4 277,248.6 278,248.5 279,248.3 280,248.4 281,248.5 282,248.4 283,248.6 284,248.5 285,248.5 286,248.6 287,248.7 288,248.7 289,248.6 290,248.4 291,248.5 292,248.5 293,248.6 294,248.6 295,248.5 296,248.6 297,248.5 298,248.4 299,248.6 300,248.5 301,248.3 302,248.6 303,248.6 304,248.7 305,248.4 306,248.6 307,248.4 308,248.6 309,248.4 310,248.7 311,248.6 312,248.5 313,248.4 314,248.6 315,248.5 316,248.6 317,248.5 318,248.3 319,248.4 320,248.3 321,248.5 322,248.4 323,248.5 324,248.4 325,248.4 326,248.5 327,248.6 328,248.5 329,248.4 330,248.7 331,248.5 332,248.6 333,248.5 334,248.6 335,248.5 336,248.3 337,248.3 338,248.7 339,248.3 340,248.6 341,248.5 342,248.4 343,248.4 344,248.4 345,248.5 346,248.5 347,248.5 348,248.7 349,248.6 350,248.3 351,248.6 352,248.5 353,248.6 354,248.5 355,248.6 356,248.7 357,248.3 358,248.6 359,248.6 360,248.4 361,248.4 362,248.6 363,248.4 364,248.4 365,248.5 366,248.6 367,248.5 368,248.6 369,248.4 370,248.7 371,248.4 372,248.7 373,248.4 374,248.4 375,248.6 376,248.6 377,248.7 378,248.4 379,248.6 380,248.4 381,248.4 382,248.4 383,248.4 384,248.3 385,248.5 386,248.4 387,248.5 388,248.4 389,248.6 390,248.6 391,248.4 392,248.6 393,248.5 394,248.5 395,248.7 396,248.6 397,248.4 398,248.6 399,248.6 400,248.4 401,248.6 402,248.4 403,248.5 404,248.7 405,248.5 406,248.6 407,248.5 408,248.6 409,248.6 410,248.5 411,248.6 412,248.7 413,248.4 414,248.6 415,248.6 416,248.3 417,248.4 418,248.3 419,248.6 420,248.6 421,248.4 422,248.6 423,248.6 424,248.6 425,248.4 426,248.4 427,248.6 428,248.6 429,248.3 430,248.5 431,248.6 432,248.3 433,248.3 434,248.7 435,248.3 436,248.4 437,248.5 438,248.6 439,248.3 440,248.5 441,248.6 442,248.3 443,248.3 444,248.7 445,248.5 446,248.6 447,248.4 448,248.4 449,248.4 450,248.4 451,248.4 452,248.5 453,248.6 454,248.3 455,248.3 456,248.4 457,248.5 458,248.3 459,248.4 460,248.6 461,248.6 462,248.4 463,248.3 464,248.4 465,248.4 466,248.4 467,248.3 468,248.6 469,248.5 470,248.3 471,248.3 472,248.5 473,248.6 474,248.6 475,248.3 476,248.6 477,248.7 478,248.7 479,249.5 480,250.7 481,252 482,253.1 483,254.5 484,255.6 485,256.9 486,257.8 487,259.1 488,260.1 489,261.3 490,262.5 491,263.8 492,264.8 493,265.9 494,266.8 495,268.1 496,269.3 497,270.4 498,271.1 499,272.4 500,273.5 501,274.5 502,275.7 503,276.5 504,277.8 505,278.5 506,279.8 507,280.6 508,282 509,283 510,284.1 511,285.1 512,286.3 513,287.1 514,288.6 515,289.4 516,290.7 517,291.5 518,292.5 519,293.3 520,294.4 521,295.5 522,296.2 523,297.2 524,298.1 525,298.9 526,299.8 527,300.6 528,301.4 529,301.7 530,302.8 531,303.3 532,303.8 533,304.7 534,305.2 535,305.6 536,306.2 537,306.8 538,307.2 539,308 540,308.5 541,308.8 542,309.4 543,309.7 544,310.3 545,310.5 546,310.8 547,311.1 548,311.5 549,311.8 550,312.3 551,312.5 552,312.8 553,313.2 554,313.4 555,313.5 556,313.7 557,313.9 558,314.2 559,314.4 560,314.8 561,314.9 562,315.1 563,315.2 564,315.4 565,315.5 566,315.9 567,315.9 568,316.2 569,316.1 570,316.4 571,316.4 572,316.5 573,316.6 574,316.9 575,317 576,317 577,317 578,317.3 579,317.3 580,317.4 581,317.5 582,317.6 583,317.7 584,317.5 585,317.7 586,317.8 587,317.7 588,318.2 589,318 590,317.9 591,318.1 592,318.1 593,318.2 594,318.4 595,318.3 596,318.7 597,318.5 598,318.4 599,318.7 600,318.7 601,318.9 602,318.6 603,318.8 604,319 605,318.8 606,318.9 607,319 608,319.1 609,319.1 610,319.2 611,319.1 612,319.3 613,319.2 614,319.4 615,319.4 616,319.4 617,319.4 618,319.4 619,319.4 620,319.3 621,319.4 622,319.4 623,319.4 624,319.5 625,319.5 626,319.6 627,319.5 628,319.4 629,319.5 630,319.8 631,319.6 632,319.8 633,319.6 634,319.8 635,319.6 636,319.7 637,319.7 638,320 639,319.8 640,319.7 641,319.9 642,320 643,319.8 644,319.9 645,319.8 646,320.1 647,319.9 648,319.9 649,320 650,320.2 651,320.2 652,320 653,319.9 654,320.1 655,320 656,319.9 657,320.1 658,320.3 659,320.3 660,320.3 661,320.1 662,320.3 663,320.1 664,320 665,320.2 666,320.3 667,320.4 668,320.1 669,320.2 670,320.2 671,320.2 672,320.5 673,320.4 674,320.5 675,320.6 676,320.5 677,320.3 678,320.6 679,320.3 680,320.3 681,320.4 682,320.4 683,320.5 684,320.6 685,320.5 686,320.6 687,320.5 688,320.6 689,320.5 690,320.5 691,320.6 692,320.5 693,320.5 694,320.6 695,320.6 696,320.7 697,320.5 698,320.8 699,320.9 700,320.8 701,320.8 702,320.7 703,320.6 704,320.8 705,320.8 706,320.7 707,320.9 708,321 709,320.9 710,320.9 711,320.7 712,320.8 713,320.7 714,320.7 715,320.7 716,320.9 717,320.9 718,320.9 719,320.9 720,321 721,321 722,321.1 723,321.1 724,321 725,321.1 726,321.1 727,321 728,320.9 729,321.1 730,321.2 731,321.1 732,321.1 733,321.3 734,321 735,321.3 736,321.3 737,321.3 738,321.4 739,321.4 740,321.1 741,321.4 742,321.4 743,321.4 744,321.2 745,321.2 746,321.1 747,321.5 748,321.5 749,321.3 750,321.2 751,321.2 752,321.4 753,321.3 754,321.5 755,321.3 756,321.3 757,321.5 758,321.6 759,321.6 760,321.4 761,321.5 762,321.6 763,321.3 764,321.4 765,321.6 766,321.4 767,321.6 768,321.6 769,321.5 770,321.6 771,321.7 772,321.8 773,321.6 774,321.7 775,321.5 776,321.7 777,321.6 778,321.6 779,321.8 780,321.6 781,321.5 782,321.7 783,321.7 784,321.7 785,321.8 786,321.8 787,321.5 788,321.6 789,321.7 790,321.8 791,321.6 792,321.8 793,321.6 794,322 795,321.9 796,321.6 797,321.9 798,322 799,322 800,321.9 801,321.7 802,321.7 803,321.8 804,321.9 805,322 806,321.8 807,321.8 808,321.9 809,321.9 810,321.8 811,321.9 812,321.8 813,321.9 814,322 815,322 816,321.9 817,321.8 818,322 819,322 820,322 821,322 822,321.8 823,321.8 824,321.9 825,321.8 826,321.8 827,321.8 828,322 829,322 830,322 831,322 832,321.9 833,321.9 834,322 835,322 836,322 837,322.1 838,322.1 839,322.2 840,321.9 841,322.1 842,322.1 843,322.2 844,322 845,322.1 846,322 847,322 848,322.2 849,322 850,322 851,322.1 852,322.1 853,322.1 854,322 855,321.9 856,321.9 857,322 858,322.1 859,322.1 860,322 861,322 862,322.1 863,322 864,322.1 865,322.2 866,322.1 867,322.3 868,322.1 869,322.1 870,322.2 871,322.2 872,322.2 873,322.2 874,322.3 875,322.2 876,322 877,322.2 878,322.2 879,322 880,322 881,322.1 882,322.1 883,322.2 884,322.2 885,322 886,322.1 887,322.2 888,322.3 889,322.4 890,322.3 891,322.2 892,322.4 893,322 894,322.3 895,322.2 896,322.1 897,322.2 898,322 899,322.2 900,322.2 901,322.1 902,322.1 903,322.1 904,322.4 905,322.2 906,322.2 907,322.4 908,322.2 909,322.2 910,322.3 911,322.2 912,322.4 913,322.2 914,322.2 915,322.4 916,322.1 917,322.2 918,322.3 919,322.4 920,322.2 921,322.1 922,322.1 923,322.3 924,322.5 925,322.5 926,322.4 927,322.3 928,322.2 929,322.4 930,322.3 931,322.4 932,322.2 933,322.3 934,322.5 935,322.2 936,322.2 937,322.2 938,322.3 939,322.5 940,322.4 941,322.3 942,322.2 943,322.3 944,322.5 945,322.2 946,322.4 947,322.3 948,322.4 949,322.6 950,322.6 951,322.5 952,322.6 953,322.2 954,322.4 955,322.5 956,322.4 957,322.6 958,322.3 959,322.3 960,322.2 961,322.3 962,322.4 963,322.6 964,322.3 965,322.4 966,322.4 967,322.3 968,322.6 969,322.3 970,322.5 971,322.3 972,322.5 973,322.7 974,322.5 975,322.6 976,322.4 977,322.6 978,322.3 979,322.4 980,322.6 981,322.7 982,322.6 983,322.4 984,322.6 985,322.4 986,322.3 987,322.5 988,322.4 989,322.7 990,322.7 991,322.5 992,322.4 993,322.4 994,322.7 995,322.6 996,322.6 997,322.6 998,322.4 999,322.7 1000,322.4 1001,322.5 1002,322.6 1003,322.7 1004,322.4 1005,322.4 1006,322.7 1007,322.4 1008,322.6 1009,322.5 1010,322.4 1011,322.7 1012,322.6 1013,322.5 1014,322.7 1015,322.7 1016,322.7 1016,331.9 1015,331.7 1014,332 1013,332 1012,332 1011,331.9 1010,331.7 1009,331.8 1008,332 1007,331.8 1006,331.8 1005,331.8 1004,331.9 1003,331.9 1002,331.8 1001,331.7 1000,331.7 999,332 998,331.9 997,332 996,332 995,331.9 994,331.8 993,331.8 992,332 991,331.7 990,331.9 989,331.8 988,331.9 987,331.6 986,331.7 985,331.9 984,331.9 983,331.8 982,331.6 981,331.7 980,331.8 979,331.9 978,331.9 977,332 976,331.7 975,331.9 974,331.6 973,331.7 972,331.6 971,331.8 970,332 969,331.9 968,331.7 967,331.9 966,331.7 965,331.9 964,331.6 963,331.8 962,331.9 961,331.9 960,331.5 959,331.7 958,331.7 957,331.9 956,331.9 955,331.6 954,331.6 953,331.6 952,331.7 951,331.5 950,331.7 949,331.8 948,331.9 947,331.5 946,331.7 945,331.8 944,331.5 943,331.5 942,331.5 941,331.9 940,331.6 939,331.5 938,331.7 937,331.6 936,331.6 935,331.6 934,331.7 933,331.8 932,331.8 931,331.8 930,331.8 929,331.6 928,331.7 927,331.4 926,331.8 925,331.7 924,331.6 923,331.5 922,331.7 921,331.5 920,331.6 919,331.5 918,331.5 917,331.7 916,331.5 915,331.8 914,331.6 913,331.7 912,331.7 911,331.6 910,331.7 909,331.5 908,331.5 907,331.6 906,331.4 905,331.7 904,331.6 903,331.4 902,331.4 901,331.7 900,331.4 899,331.6 898,331.4 897,331.5 896,331.6 895,331.7 894,331.5 893,331.4 892,331.4 891,331.6 890,331.6 889,331.4 888,331.5 887,331.5 886,331.4 885,331.5 884,331.5 883,331.4 882,331.4 881,331.3 880,331.5 879,331.6 878,331.6 877,331.4 876,331.3 875,331.5 874,331.4 873,331.4 872,331.5 871,331.5 870,331.6 869,331.4 868,331.5 867,331.3 866,331.5 865,331.4 864,331.4 863,331.4 862,331.6 861,331.2 860,331.6 859,331.6 858,331.2 857,331.4 856,331.3 855,331.5 854,331.5 853,331.5 852,331.2 851,331.2 850,331.4 849,331.5 848,331.2 847,331.3 846,331.5 845,331.4 844,331.2 843,331.3 842,331.5 841,331.2 840,331.1 839,331.4 838,331.2 837,331.1 836,331.5 835,331.3 834,331.3 833,331.1 832,331.3 831,331.1 830,331.5 829,331.1 828,331.3 827,331.4 826,331.3 825,331.2 824,331.3 823,331.3 822,331.3 821,331.2 820,331.2 819,331.1 818,331.1 817,331.4 816,331.3 815,331.2 814,331 813,331.1 812,331 811,331.1 810,331.3 809,331.3 808,331 807,331.2 806,331 805,331.1 804,331 803,331 802,331.2 801,331.3 800,331 799,331 798,331.2 797,331.1 796,331.3 795,331.3 794,331.1 793,331 792,331.2 791,331.1 790,331.2 789,331.2 788,331.2 787,330.9 786,331.2 785,331 784,331 783,331.2 782,330.9 781,330.9 780,330.9 779,331 778,331 777,330.8 776,331.1 775,330.9 774,330.8 773,331.1 772,331 771,331.1 770,331.1 769,331 768,330.9 767,331 766,330.8 765,330.7 764,330.8 763,330.7 762,330.9 761,331 760,331 759,330.6 758,330.8 757,330.9 756,330.6 755,330.6 754,330.7 753,330.7 752,330.7 751,330.6 750,330.8 749,330.8 748,330.8 747,330.6 746,330.7 745,330.8 744,330.4 743,330.5 742,330.5 741,330.8 740,330.7 739,330.4 738,330.5 737,330.7 736,330.6 735,330.6 734,330.4 733,330.7 732,330.5 731,330.5 730,330.3 729,330.3 728,330.3 727,330.4 726,330.3 725,330.3 724,330.4 723,330.4 722,330.4 721,330.2 720,330.5 719,330.2 718,330.5 717,330.1 716,330.3 715,330.1 714,330.4 713,330.3 712,330.3 711,330.1 710,330.3 709,330.3 708,330.3 707,330.2 706,329.9 705,330.1 704,330.1 703,330.2 702,330.1 701,330.1 700,330.2 699,330.2 698,330 697,330.2 696,329.9 695,329.9 694,329.9 693,330 692,330.1 691,330 690,329.8 689,330 688,329.9 687,329.8 686,329.9 685,329.8 684,329.8 683,329.7 682,329.8 681,329.7 680,329.7 679,329.9 678,329.7 677,329.8 676,329.9 675,329.6 674,329.5 673,329.6 672,329.7 671,329.6 670,329.7 669,329.5 668,329.6 667,329.4 666,329.6 665,329.7 664,329.4 663,329.5 662,329.4 661,329.6 660,329.6 659,329.5 658,329.5 657,329.4 656,329.5 655,329.4 654,329.3 653,329.5 652,329.2 651,329.4 650,329.4 649,329.4 648,329.2 647,329.4 646,329.2 645,329.5 644,329.2 643,329.3 642,329.4 641,329.1 640,329.2 639,329 638,329.3 637,329.1 636,329.2 635,329.2 634,329.1 633,329.3 632,328.9 631,329.1 630,328.9 629,329 628,329 627,329.2 626,328.9 625,328.7 624,328.8 623,328.7 622,328.9 621,329 620,328.8 619,328.9 618,328.7 617,328.8 616,328.7 615,328.8 614,328.5 613,328.8 612,328.6 611,328.6 610,328.6 609,328.6 608,328.3 607,328.4 606,328.4 605,328.5 604,328.2 603,328.4 602,328.3 601,328.3 600,328 599,328.2 598,328.1 597,328.1 596,328.1 595,327.9 594,327.7 593,327.6 592,327.7 591,327.8 590,327.5 589,327.5 588,327.5 587,327.3 586,327.4 585,327.3 584,327.4 583,327.3 582,327 581,327.1 580,326.8 579,326.9 578,326.8 577,326.5 576,326.6 575,326.4 574,326.3 573,326 572,326.1 571,325.8 570,325.9 569,325.6 568,325.8 567,325.4 566,325.5 565,325.2 564,325.1 563,324.8 562,324.8 561,324.7 560,324.5 559,324.4 558,324.2 557,323.8 556,323.5 555,323.3 554,323.1 553,323.1 552,322.9 551,322.3 550,322.2 549,321.8 548,321.8 547,321.2 546,320.7 545,320.7 544,320.1 543,319.9 542,319.4 541,319 540,318.7 539,318.1 538,317.5 537,317.1 536,316.7 535,315.9 534,315.5 533,315 532,314.5 531,313.8 530,313 529,312.3 528,311.6 527,311.2 526,310.2 525,309.5 524,308.8 523,307.8 522,307.2 521,306.2 520,305.4 519,304.4 518,303.2 517,302.2 516,301.5 515,300.3 514,299.5 513,298.4 512,297.3 511,295.9 510,295 509,293.9 508,292.8 507,291.7 506,290.5 505,289.7 504,288.6 503,287.7 502,286.6 501,285.4 500,284.3 499,283.3 498,282.3 497,281.3 496,279.9 495,279 494,277.9 493,276.9 492,275.7 491,274.7 490,273.7 489,272.5 488,271.5 487,270.1 486,269 485,268 484,266.5 483,265.5 482,264.1 481,262.9 480,262 479,260.6 478,259.5 477,258 476,257.9 475,257.8 474,257.6 473,257.9 472,257.8 471,257.6 470,257.8 469,257.6 468,257.7 467,258 466,257.9 465,258 464,258 463,257.6 462,257.7 461,258 460,258 459,257.8 458,257.8 457,257.8 456,257.9 455,257.7 454,257.6 453,257.8 452,257.8 451,257.6 450,257.7 449,257.6 448,257.7 447,257.7 446,258 445,257.9 444,257.6 443,257.7 442,257.6 441,257.9 440,257.9 439,258 438,257.8 437,257.8 436,257.9 435,257.8 434,257.8 433,257.7 432,257.9 431,258 430,257.7 429,257.9 428,258 427,257.9 426,258 425,257.6 424,257.9 423,257.8 422,257.8 421,257.7 420,257.8 419,257.9 418,257.7 417,257.7 416,257.7 415,257.9 414,258 413,257.7 412,257.9 411,257.7 410,257.7 409,257.9 408,257.7 407,257.9 406,257.6 405,258 404,257.8 403,257.7 402,257.9 401,257.8 400,257.8 399,257.6 398,257.7 397,257.6 396,258 395,258 394,257.7 393,257.8 392,257.7 391,257.9 390,257.8 389,258 388,258 387,257.8 386,257.9 385,257.8 384,257.8 383,257.7 382,257.9 381,257.8 380,257.6 379,257.6 378,257.8 377,257.8 376,257.8 375,258 374,257.8 373,257.9 372,257.8 371,257.7 370,257.7 369,257.9 368,257.9 367,257.9 366,257.7 365,257.9 364,257.9 363,257.8 362,257.7 361,257.7 360,257.8 359,257.6 358,258 357,257.7 356,257.6 355,257.8 354,257.8 353,257.9 352,257.9 351,257.7 350,257.7 349,257.9 348,257.7 347,258 346,257.9 345,258 344,257.6 343,257.8 342,257.8 341,257.8 340,257.9 339,257.7 338,257.9 337,257.7 336,258 335,257.7 334,257.8 333,257.9 332,257.8 331,257.6 330,257.6 329,257.7 328,257.8 327,257.6 326,257.8 325,257.6 324,257.7 323,258 322,257.7 321,257.9 320,258 319,258 318,257.7 317,257.8 316,257.9 315,257.9 314,257.8 313,257.7 312,258 311,257.9 310,257.7 309,257.9 308,257.7 307,257.6 306,257.9 305,257.9 304,257.8 303,257.7 302,257.7 301,257.8 300,257.6 299,257.8 298,257.7 297,257.7 296,257.9 295,258 294,257.9 293,257.7 292,257.9 291,257.7 290,257.8 289,257.7 288,257.9 287,257.7 286,257.8 285,257.7 284,257.7 283,257.7 282,258 281,258 280,257.7 279,257.7 278,257.9 277,257.9 276,257.7 275,257.9 274,257.6 273,257.7 272,257.7 271,257.7 270,257.7 269,257.6 268,257.8 267,257.8 266,257.7 265,257.6 264,257.8 263,257.6 262,257.9 261,257.6 260,258 259,257.9 258,257.7 257,258 256,257.6 255,257.7 254,257.8 253,258 252,257.7 251,258 250,257.8 249,257.8 248,257.7 247,257.8 246,258 245,257.9 244,257.9 243,258 242,257.9 241,257.8 240,257.8 239,257.7 238,257.9 237,257.9 236,257.9 235,257.7 234,257.6 233,257.6 232,257.8 231,257.9 230,257.9 229,257.8 228,257.8 227,257.8 226,258 225,257.9 224,257.7 223,258 222,257.9 221,257.8 220,258 219,257.7 218,257.6 217,257.7 216,257.9 215,257.8 214,257.9 213,257.8 212,257.7 211,257.9 210,257.9 209,257.7 208,258 207,257.9 206,257.9 205,257.6 204,257.6 203,257.8 202,257.8 201,258 200,257.7 199,257.8 198,257.9 197,258 196,257.9 195,257.9 194,257.9 193,257.6 192,257.9 191,257.7 190,257.9 189,257.8 188,257.6 187,257.8 186,257.9 185,257.9 184,257.7 183,257.7 182,257.9 181,257.7 180,257.9 179,257.7 178,257.6 177,257.6 176,257.7 175,257.8 174,258 173,257.7 172,257.9 171,257.9 170,257.8 169,258 168,257.9 167,257.7 166,257.8 165,257.8 164,257.7 163,257.7 162,257.9 161,257.7 160,258 159,258 158,257.6 157,257.8 156,257.9 155,257.8 154,258 153,257.9 152,258 151,257.7 150,257.7 149,257.6 148,257.6 147,257.8 146,257.9 145,257.7 144,257.6 143,257.6 142,257.6 141,257.7 140,258 139,257.9 138,257.7 137,257.7 136,257.9 135,258 134,258 133,257.7 132,257.7 131,257.7 130,257.7 129,257.9 128,257.6 127,257.6 126,257.8 125,258 124,257.7 123,258 122,257.9 121,257.9 120,257.7 119,257.7 118,257.6 117,257.9 116,258 115,257.8 114,257.8 113,257.8 112,257.7 111,257.7 110,257.8 109,257.6 108,257.6 107,257.8 106,257.8 105,257.8 104,257.8 103,257.7 102,257.6 101,258 100,257.9 99,257.8 98,258 97,257.6 96,257.7 95,257.8 94,257.9 93,257.9 92,257.9 91,257.9 90,257.9 89,257.8 88,257.7 87,257.6 86,257.9 85,257.9 84,257.9 83,257.7 82,257.9 81,257.7 80,257.9 79,257.8 78,257.7 77,257.8 76,257.8 75,257.9 74,258 73,257.8 72,257.9 71,257.7 70,257.6 69,257.7 68,257.9 67,257.8 66,258 65,257.7 64,258 63,258 62,257.8 61,257.8 60,257.7 59,257.8 58,257.8 57,257.8 56,257.9 55,257.6 54,257.8 53,257.8 52,257.9 51,257.9 50,257.9 49,257.6 48,257.8 47,257.7 46,258 45,257.8 44,257.8 43,257.7 42,257.7 41,257.6 40,257.8 39,257.8 38,257.6 37,257.8 36,257.8 35,257.8 34,257.8 33,257.7 32,257.6 31,257.7 30,257.7 29,257.9 28,258 27,257.6 26,257.7 25,257.7 24,257.9 23,258 22,257.6 21,257.7 20,257.7 19,257.6 18,257.7 17,257.9Z" fill="#00c8c8"/>
<path d="M17,250 18,250 19,250 20,250 21,250 22,250 23,250 24,250 25,250 26,250 27,250 28,250 29,250 30,250 31,250 32,250 33,250 34,250 35,250 36,250 37,250 38,250 39,250 40,250 41,250 42,250 43,250 44,250 45,250 46,250 47,250 48,250 49,250 50,250 51,250 52,250 53,250 54,250 55,250 56,250 57,250 58,250 59,250 60,250 61,250 62,250 63,250 64,250 65,250 66,250 67,250 68,250 69,250 70,250 71,250 72,250 73,250 74,250 75,250 76,250 77,250 78,250 79,250 80,250 81,250 82,250 83,250 84,250 85,250 86,250 87,250 88,250 89,250 90,250 91,250 92,250 93,250 94,250 95,250 96,250 97,250 98,250 99,250 100,250 101,250 102,250 103,250 104,250 105,250 106,250 107,250 108,250 109,250 110,250 111,250 112,250 113,250 114,250 115,250 116,250 117,250 118,250 119,250 120,250 121,250 122,250 123,250 124,250 125,250 126,250 127,250 128,250 129,250 130,250 131,250 132,250 133,250 134,250 135,250 136,250 137,250 138,250 139,250 140,250 141,250 142,250 143,250 144,250 145,250 146,250 147,250 148,250 149,250 150,250 151,250 152,250 153,250 154,250 155,250 156,250 157,250 158,250 159,250 160,250 161,250 162,250 163,250 164,250 165,250 166,250 167,250 168,250 169,250 170,250 171,250 172,250 173,250 174,250 175,250 176,250 177,250 178,250 179,250 180,250 181,250 182,250 183,250 184,250 185,250 186,250 187,250 188,250 189,250 190,250 191,250 192,250 193,250 194,250 195,250 196,250 197,250 198,250 199,250 200,250 201,250 202,250 203,250 204,250 205,250 206,250 207,250 208,250 209,250 210,250 211,250 212,250 213,250 214,250 215,250 216,250 217,250 218,250 219,250 220,250 221,250 222,250 223,250 224,250 225,250 226,250 227,250 228,250 229,250 230,250 231,250 232,250 233,250 234,250 235,250 236,250 237,250 238,250 239,250 240,250 241,250 242,250 243,250 244,250 245,250 246,250 247,250 248,250 249,250 250,250 251,250 252,250 253,250 254,250 255,250 256,250 257,250 258,250 259,250 260,250 261,250 262,250 263,250 264,250 265,250 266,250 267,250 268,250 269,250 270,250 271,250 272,250 273,250 274,250 275,250 276,250 277,250 278,250 279,250 280,250 281,250 282,250 283,250 284,250 285,250 286,250 287,250 288,250 289,250 290,250 291,250 292,250 293,250 294,250 295,250 296,250 297,250 298,250 299,250 300,250 301,250 302,250 303,250 304,250 305,250 306,250 307,250 308,250 309,250 310,250 311,250 312,250 313,250 314,250 315,250 316,250 317,250 318,250 319,250 320,250 321,250 322,250 323,250 324,250 325,250 326,250 327,250 328,250 329,250 330,250 331,250 332,250 333,250 334,250 335,250 336,250 337,250 338,250 339,250 340,250 341,250 342,250 343,250 344,250 345,250 346,250 347,250 348,250 349,250 350,250 351,250 352,250 353,250 354,250 355,250 356,250 357,250 358,250 359,250 360,250 361,250 362,250 363,250 364,250 365,250 366,250 367,250 368,250 369,250 370,250 371,250 372,250 373,250 374,250 375,250 376,250 377,250 378,250 379,250 380,250 381,250 382,250 383,250 384,250 385,250 386,250 387,250 388,250 389,250 390,250 391,250 392,250 393,250 394,250 395,250 396,250 397,250 398,250 399,250 400,250 401,250 402,250 403,250 404,250 405,250 406,250 407,250 408,250 409,250 410,250 411,250 412,250 413,250 414,250 415,250 416,250 417,250 418,250 419,250 420,250 421,250 422,250 423,250 424,250 425,250 426,250 427,250 428,250 429,250 430,250 431,250 432,250 433,250 434,250 435,250 436,250 437,250 438,250 439,250 440,250 441,250 442,250 443,250 444,250 445,250 446,250 447,250 448,250 449,250 450,250 451,250 452,250 453,250 454,250 455,250 456,250 457,250 458,250 459,250 460,250 461,250 462,250 463,250 464,250 465,250 466,250 467,250 468,250 469,250 470,250 471,250 472,250 473,250 474,250 475,250 476,250 477,249.7 478,249.3 479,250 480,251.2 481,252.4 482,253.6 483,254.8 484,256 485,257.2 486,258.4 487,259.6 488,260.7 489,261.9 490,263 491,264.2 492,265.3 493,266.4 494,267.5 495,268.6 496,269.6 497,270.7 498,271.8 499,272.8 500,273.9 501,274.9 502,276 503,277 504,278.1 505,279.1 506,280.2 507,281.2 508,282.3 509,283.3 510,284.4 511,285.5 512,286.7 513,287.8 514,288.9 515,290 516,291 517,292 518,293 519,294 520,295 521,295.9 522,296.9 523,297.8 524,298.6 525,299.5 526,300.3 527,301.1 528,301.8 529,302.5 530,303.2 531,303.9 532,304.5 533,305.2 534,305.8 535,306.3 536,306.9 537,307.5 538,308 539,308.5 540,309 541,309.5 542,310 543,310.4 544,310.9 545,311.3 546,311.7 547,312 548,312.4 549,312.7 550,313.1 551,313.4 552,313.7 553,314 554,314.3 555,314.5 556,314.8 557,315 558,315.3 559,315.5 560,315.7 561,315.9 562,316.1 563,316.3 564,316.5 565,316.6 566,316.8 567,316.9 568,317.1 569,317.2 570,317.4 571,317.5 572,317.6 573,317.7 574,317.8 575,317.9 576,318.1 577,318.2 578,318.3 579,318.4 580,318.5 581,318.6 582,318.7 583,318.8 584,318.9 585,319 586,319.1 587,319.2 588,319.2 589,319.3 590,319.4 591,319.5 592,319.5 593,319.6 594,319.6 595,319.7 596,319.8 597,319.8 598,319.9 599,319.9 600,320 601,320.1 602,320.1 603,320.2 604,320.2 605,320.3 606,320.3 607,320.3 608,320.4 609,320.4 610,320.5 611,320.5 612,320.6 613,320.6 614,320.6 615,320.7 616,320.7 617,320.7 618,320.8 619,320.8 620,320.8 621,320.8 622,320.9 623,320.9 624,320.9 625,320.9 626,321 627,321 628,321 629,321 630,321.1 631,321.1 632,321.1 633,321.1 634,321.1 635,321.2 636,321.2 637,321.2 638,321.2 639,321.3 640,321.3 641,321.3 642,321.3 643,321.3 644,321.3 645,321.4 646,321.4 647,321.4 648,321.4 649,321.4 650,321.5 651,321.5 652,321.5 653,321.5 654,321.5 655,321.5 656,321.6 657,321.6 658,321.6 659,321.6 660,321.6 661,321.6 662,321.6 663,321.7 664,321.7 665,321.7 666,321.7 667,321.7 668,321.7 669,321.7 670,321.8 671,321.8 672,321.8 673,321.8 674,321.8 675,321.8 676,321.8 677,321.9 678,321.9 679,321.9 680,321.9 681,321.9 682,321.9 683,321.9 684,321.9 685,322 686,322 687,322 688,322 689,322 690,322 691,322 692,322 693,322.1 694,322.1 695,322.1 696,322.1 697,322.1 698,322.1 699,322.1 700,322.1 701,322.2 702,322.2 703,322.2 704,322.2 705,322.2 706,322.2 707,322.2 708,322.3 709,322.3 710,322.3 711,322.3 712,322.3 713,322.3 714,322.3 715,322.3 716,322.4 717,322.4 718,322.4 719,322.4 720,322.4 721,322.4 722,322.4 723,322.5 724,322.5 725,322.5 726,322.5 727,322.5 728,322.5 729,322.5 730,322.5 731,322.6 732,322.6 733,322.6 734,322.6 735,322.6 736,322.6 737,322.6 738,322.6 739,322.7 740,322.7 741,322.7 742,322.7 743,322.7 744,322.7 745,322.7 746,322.7 747,322.8 748,322.8 749,322.8 750,322.8 751,322.8 752,322.8 753,322.8 754,322.8 755,322.9 756,322.9 757,322.9 758,322.9 759,322.9 760,322.9 761,322.9 762,322.9 763,322.9 764,323 765,323 766,323 767,323 768,323 769,323 770,323 771,323 772,323 773,323.1 774,323.1 775,323.1 776,323.1 777,323.1 778,323.1 779,323.1 780,323.1 781,323.1 782,323.1 783,323.1 784,323.2 785,323.2 786,323.2 787,323.2 788,323.2 789,323.2 790,323.2 791,323.2 792,323.2 793,323.2 794,323.2 795,323.2 796,323.2 797,323.3 798,323.3 799,323.3 800,323.3 801,323.3 802,323.3 803,323.3 804,323.3 805,323.3 806,323.3 807,323.3 808,323.3 809,323.3 810,323.3 811,323.3 812,323.3 813,323.4 814,323.4 815,323.4 816,323.4 817,323.4 818,323.4 819,323.4 820,323.4 821,323.4 822,323.4 823,323.4 824,323.4 825,323.4 826,323.4 827,323.4 828,323.4 829,323.4 830,323.4 831,323.4 832,323.5 833,323.5 834,323.5 835,323.5 836,323.5 837,323.5 838,323.5 839,323.5 840,323.5 841,323.5 842,323.5 843,323.5 844,323.5 845,323.5 846,323.5 847,323.5 848,323.5 849,323.5 850,323.5 851,323.5 852,323.5 853,323.5 854,323.6 855,323.6 856,323.6 857,323.6 858,323.6 859,323.6 860,323.6 861,323.6 862,323.6 863,323.6 864,323.6 865,323.6 866,323.6 867,323.6 868,323.6 869,323.6 870,323.6 871,323.6 872,323.6 873,323.6 874,323.6 875,323.6 876,323.6 877,323.6 878,323.6 879,323.6 880,323.7 881,323.7 882,323.7 883,323.7 884,323.7 885,323.7 886,323.7 887,323.7 888,323.7 889,323.7 890,323.7 891,323.7 892,323.7 893,323.7 894,323.7 895,323.7 896,323.7 897,323.7 898,323.7 899,323.7 900,323.7 901,323.7 902,323.7 903,323.7 904,323.7 905,323.7 906,323.7 907,323.7 908,323.7 909,323.7 910,323.8 911,323.8 912,323.8 913,323.8 914,323.8 915,323.8 916,323.8 917,323.8 918,323.8 919,323.8 920,323.8 921,323.8 922,323.8 923,323.8 924,323.8 925,323.8 926,323.8 927,323.8 928,323.8 929,323.8 930,323.8 931,323.8 932,323.8 933,323.8 934,323.8 935,323.8 936,323.8 937,323.8 938,323.8 939,323.8 940,323.8 941,323.8 942,323.9 943,323.9 944,323.9 945,323.9 946,323.9 947,323.9 948,323.9 949,323.9 950,323.9 951,323.9 952,323.9 953,323.9 954,323.9 955,323.9 956,323.9 957,323.9 958,323.9 959,323.9 960,323.9 961,323.9 962,323.9 963,323.9 964,323.9 965,323.9 966,323.9 967,323.9 968,323.9 969,323.9 970,323.9 971,323.9 972,323.9 973,323.9 974,323.9 975,323.9 976,324 977,324 978,324 979,324 980,324 981,324 982,324 983,324 984,324 985,324 986,324 987,324 988,324 989,324 990,324 991,324 992,324 993,324 994,324 995,324 996,324 997,324 998,324 999,324 1000,324 1001,324 1002,324 1003,324 1004,324 1005,324 1006,324.1 1007,324.1 1008,324.1 1009,324.1 1010,324.1 1011,324.1 1012,324.1 1013,324.1 1014,324.1 1015,324.1 1016,324.1 1016,330.7 1015,330.7 1014,330.7 1013,330.7 1012,330.7 1011,330.7 1010,330.7 1009,330.7 1008,330.7 1007,330.7 1006,330.7 1005,330.7 1004,330.7 1003,330.7 1002,330.7 1001,330.7 1000,330.7 999,330.7 998,330.7 997,330.7 996,330.7 995,330.7 994,330.6 993,330.6 992,330.6 991,330.6 990,330.6 989,330.6 988,330.6 987,330.6 986,330.6 985,330.6 984,330.6 983,330.6 982,330.6 981,330.6 980,330.6 979,330.6 978,330.6 977,330.6 976,330.6 975,330.6 974,330.6 973,330.6 972,330.6 971,330.6 970,330.6 969,330.6 968,330.6 967,330.6 966,330.6 965,330.6 964,330.6 963,330.5 962,330.5 961,330.5 960,330.5 959,330.5 958,330.5 957,330.5 956,330.5 955,330.5 954,330.5 953,330.5 952,330.5 951,330.5 950,330.5 949,330.5 948,330.5 947,330.5 946,330.5 945,330.5 944,330.5 943,330.5 942,330.5 941,330.5 940,330.5 939,330.5 938,330.5 937,330.5 936,330.5 935,330.5 934,330.5 933,330.5 932,330.5 931,330.5 930,330.4 929,330.4 928,330.4 927,330.4 926,330.4 925,330.4 924,330.4 923,330.4 922,330.4 921,330.4 920,330.4 919,330.4 918,330.4 917,330.4 916,330.4 915,330.4 914,330.4 913,330.4 912,330.4 911,330.4 910,330.4 909,330.4 908,330.4 907,330.4 906,330.4 905,330.4 904,330.4 903,330.4 902,330.4 901,330.4 900,330.4 899,330.4 898,330.4 897,330.3 896,330.3 895,330.3 894,330.3 893,330.3 892,330.3 891,330.3 890,330.3 889,330.3 888,330.3 887,330.3 886,330.3 885,330.3 884,330.3 883,330.3 882,330.3 881,330.3 880,330.3 879,330.3 878,330.3 877,330.3 876,330.3 875,330.3 874,330.3 873,330.3 872,330.3 871,330.3 870,330.3 869,330.3 868,330.3 867,330.2 866,330.2 865,330.2 864,330.2 863,330.2 862,330.2 861,330.2 860,330.2 859,330.2 858,330.2 857,330.2 856,330.2 855,330.2 854,330.2 853,330.2 852,330.2 851,330.2 850,330.2 849,330.2 848,330.2 847,330.2 846,330.2 845,330.2 844,330.2 843,330.2 842,330.1 841,330.1 840,330.1 839,330.1 838,330.1 837,330.1 836,330.1 835,330.1 834,330.1 833,330.1 832,330.1 831,330.1 830,330.1 829,330.1 828,330.1 827,330.1 826,330.1 825,330.1 824,330.1 823,330.1 822,330.1 821,330.1 820,330 819,330 818,330 817,330 816,330 815,330 814,330 813,330 812,330 811,330 810,330 809,330 808,330 807,330 806,330 805,330 804,330 803,330 802,330 801,329.9 800,329.9 799,329.9 798,329.9 797,329.9 796,329.9 795,329.9 794,329.9 793,329.9 792,329.9 791,329.9 790,329.9 789,329.9 788,329.9 787,329.9 786,329.9 785,329.9 784,329.8 783,329.8 782,329.8 781,329.8 780,329.8 779,329.8 778,329.8 777,329.8 776,329.8 775,329.8 774,329.8 773,329.8 772,329.7 771,329.7 770,329.7 769,329.7 768,329.7 767,329.7 766,329.7 765,329.7 764,329.7 763,329.7 762,329.7 761,329.6 760,329.6 759,329.6 758,329.6 757,329.6 756,329.6 755,329.6 754,329.6 753,329.6 752,329.5 751,329.5 750,329.5 749,329.5 748,329.5 747,329.5 746,329.5 745,329.5 744,329.5 743,329.4 742,329.4 741,329.4 740,329.4 739,329.4 738,329.4 737,329.4 736,329.4 735,329.4 734,329.3 733,329.3 732,329.3 731,329.3 730,329.3 729,329.3 728,329.3 727,329.3 726,329.2 725,329.2 724,329.2 723,329.2 722,329.2 721,329.2 720,329.2 719,329.1 718,329.1 717,329.1 716,329.1 715,329.1 714,329.1 713,329.1 712,329.1 711,329 710,329 709,329 708,329 707,329 706,329 705,329 704,328.9 703,328.9 702,328.9 701,328.9 700,328.9 699,328.9 698,328.9 697,328.9 696,328.8 695,328.8 694,328.8 693,328.8 692,328.8 691,328.8 690,328.8 689,328.7 688,328.7 687,328.7 686,328.7 685,328.7 684,328.7 683,328.7 682,328.7 681,328.6 680,328.6 679,328.6 678,328.6 677,328.6 676,328.6 675,328.6 674,328.6 673,328.5 672,328.5 671,328.5 670,328.5 669,328.5 668,328.5 667,328.5 666,328.5 665,328.4 664,328.4 663,328.4 662,328.4 661,328.4 660,328.4 659,328.4 658,328.3 657,328.3 656,328.3 655,328.3 654,328.3 653,328.3 652,328.3 651,328.2 650,328.2 649,328.2 648,328.2 647,328.2 646,328.2 645,328.2 644,328.1 643,328.1 642,328.1 641,328.1 640,328.1 639,328.1 638,328 637,328 636,328 635,328 634,328 633,328 632,327.9 631,327.9 630,327.9 629,327.9 628,327.9 627,327.8 626,327.8 625,327.8 624,327.8 623,327.7 622,327.7 621,327.7 620,327.7 619,327.7 618,327.6 617,327.6 616,327.6 615,327.6 614,327.5 613,327.5 612,327.5 611,327.5 610,327.5 609,327.4 608,327.4 607,327.4 606,327.3 605,327.3 604,327.3 603,327.2 602,327.2 601,327.1 600,327.1 599,327.1 598,327 597,327 596,326.9 595,326.9 594,326.8 593,326.8 592,326.7 591,326.7 590,326.6 589,326.5 588,326.5 587,326.4 586,326.4 585,326.3 584,326.3 583,326.2 582,326.2 581,326.1 580,326 579,325.9 578,325.8 577,325.7 576,325.6 575,325.5 574,325.4 573,325.3 572,325.2 571,325.1 570,325 569,324.9 568,324.8 567,324.7 566,324.5 565,324.4 564,324.3 563,324.2 562,324 561,323.9 560,323.7 559,323.5 558,323.3 557,323.1 556,322.9 555,322.7 554,322.5 553,322.3 552,322.1 551,321.8 550,321.5 549,321.2 548,320.9 547,320.6 546,320.3 545,320 544,319.6 543,319.2 542,318.8 541,318.4 540,318 539,317.5 538,317 537,316.5 536,316 535,315.5 534,315 533,314.4 532,313.8 531,313.2 530,312.6 529,311.9 528,311.2 527,310.5 526,309.8 525,309.1 524,308.3 523,307.5 522,306.6 521,305.7 520,304.8 519,303.9 518,302.9 517,301.9 516,301 515,300 514,298.9 513,297.9 512,296.8 511,295.6 510,294.5 509,293.4 508,292.3 507,291.2 506,290.2 505,289.1 504,288.1 503,287 502,286 501,285 500,283.9 499,282.8 498,281.8 497,280.7 496,279.7 495,278.6 494,277.5 493,276.4 492,275.4 491,274.3 490,273.2 489,272 488,270.9 487,269.7 486,268.6 485,267.4 484,266.2 483,265 482,263.8 481,262.6 480,261.4 479,260.2 478,258.9 477,257.2 476,256.6 475,256.6 474,256.6 473,256.6 472,256.6 471,256.6 470,256.6 469,256.6 468,256.6 467,256.6 466,256.6 465,256.6 464,256.6 463,256.6 462,256.6 461,256.6 460,256.6 459,256.6 458,256.6 457,256.6 456,256.6 455,256.6 454,256.6 453,256.6 452,256.6 451,256.6 450,256.6 449,256.6 448,256.6 447,256.6 446,256.6 445,256.6 444,256.6 443,256.6 442,256.6 441,256.6 440,256.6 439,256.6 438,256.6 437,256.6 436,256.6 435,256.6 434,256.6 433,256.6 432,256.6 431,256.6 430,256.6 429,256.6 428,256.6 427,256.6 426,256.6 425,256.6 424,256.6 423,256.6 422,256.6 421,256.6 420,256.6 419,256.6 418,256.6 417,256.6 416,256.6 415,256.6 414,256.6 413,256.6 412,256.6 411,256.6 410,256.6 409,256.6 408,256.6 407,256.6 406,256.6 405,256.6 404,256.6 403,256.6 402,256.6 401,256.6 400,256.6 399,256.6 398,256.6 397,256.6 396,256.6 395,256.6 394,256.6 393,256.6 392,256.6 391,256.6 390,256.6 389,256.6 388,256.6 387,256.6 386,256.6 385,256.6 384,256.6 383,256.6 382,256.6 381,256.6 380,256.6 379,256.6 378,256.6 377,256.6 376,256.6 375,256.6 374,256.6 373,256.6 372,256.6 371,256.6 370,256.6 369,256.6 368,256.6 367,256.6 366,256.6 365,256.6 364,256.6 363,256.6 362,256.6 361,256.6 360,256.6 359,256.6 358,256.6 357,256.6 356,256.6 355,256.6 354,256.6 353,256.6 352,256.6 351,256.6 350,256.6 349,256.6 348,256.6 347,256.6 346,256.6 345,256.6 344,256.6 343,256.6 342,256.6 341,256.6 340,256.6 339,256.6 338,256.6 337,256.6 336,256.6 335,256.6 334,256.6 333,256.6 332,256.6 331,256.6 330,256.6 329,256.6 328,256.6 327,256.6 326,256.6 325,256.6 324,256.6 323,256.6 322,256.6 321,256.6 320,256.6 319,256.6 318,256.6 317,256.6 316,256.6 315,256.6 314,256.6 313,256.6 312,256.6 311,256.6 310,256.6 309,256.6 308,256.6 307,256.6 306,256.6 305,256.6 304,256.6 303,256.6 302,256.6 301,256.6 300,256.6 299,256.6 298,256.6 297,256.6 296,256.6 295,256.6 294,256.6 293,256.6 292,256.6 291,256.6 290,256.6 289,256.6 288,256.6 287,256.6 286,256.6 285,256.6 284,256.6 283,256.6 282,256.6 281,256.6 280,256.6 279,256.6 278,256.6 277,256.6 276,256.6 275,256.6 274,256.6 273,256.6 272,256.6 271,256.6 270,256.6 269,256.6 268,256.6 267,256.6 266,256.6 265,256.6 264,256.6 263,256.6 262,256.6 261,256.6 260,256.6 259,256.6 258,256.6 257,256.6 256,256.6 255,256.6 254,256.6 253,256.6 252,256.6 251,256.6 250,256.6 249,256.6 248,256.6 247,256.6 246,256.6 245,256.6 244,256.6 243,256.6 242,256.6 241,256.6 240,256.6 239,256.6 238,256.6 237,256.6 236,256.6 235,256.6 234,256.6 233,256.6 232,256.6 231,256.6 230,256.6 229,256.6 228,256.6 227,256.6 226,256.6 225,256.6 224,256.6 223,256.6 222,256.6 221,256.6 220,256.6 219,256.6 218,256.6 217,256.6 216,256.6 215,256.6 214,256.6 213,256.6 212,256.6 211,256.6 210,256.6 209,256.6 208,256.6 207,256.6 206,256.6 205,256.6 204,256.6 203,256.6 202,256.6 201,256.6 200,256.6 199,256.6 198,256.6 197,256.6 196,256.6 195,256.6 194,256.6 193,256.6 192,256.6 191,256.6 190,256.6 189,256.6 188,256.6 187,256.6 186,256.6 185,256.6 184,256.6 183,256.6 182,256.6 181,256.6 180,256.6 179,256.6 178,256.6 177,256.6 176,256.6 175,256.6 174,256.6 173,256.6 172,256.6 171,256.6 170,256.6 169,256.6 168,256.6 167,256.6 166,256.6 165,256.6 164,256.6 163,256.6 162,256.6 161,256.6 160,256.6 159,256.6 158,256.6 157,256.6 156,256.6 155,256.6 154,256.6 153,256.6 152,256.6 151,256.6 150,256.6 149,256.6 148,256.6 147,256.6 146,256.6 145,256.6 144,256.6 143,256.6 142,256.6 141,256.6 140,256.6 139,256.6 138,256.6 137,256.6 136,256.6 135,256.6 134,256.6 133,256.6 132,256.6 131,256.6 130,256.6 129,256.6 128,256.6 127,256.6 126,256.6 125,256.6 124,256.6 123,256.6 122,256.6 121,256.6 120,256.6 119,256.6 118,256.6 117,256.6 116,256.6 115,256.6 114,256.6 113,256.6 112,256.6 111,256.6 110,256.6 109,256.6 108,256.6 107,256.6 106,256.6 105,256.6 104,256.6 103,256.6 102,256.6 101,256.6 100,256.6 99,256.6 98,256.6 97,256.6 96,256.6 95,256.6 94,256.6 93,256.6 92,256.6 91,256.6 90,256.6 89,256.6 88,256.6 87,256.6 86,256.6 85,256.6 84,256.6 83,256.6 82,256.6 81,256.6 80,256.6 79,256.6 78,256.6 77,256.6 76,256.6 75,256.6 74,256.6 73,256.6 72,256.6 71,256.6 70,256.6 69,256.6 68,256.6 67,256.6 66,256.6 65,256.6 64,256.6 63,256.6 62,256.6 61,256.6 60,256.6 59,256.6 58,256.6 57,256.6 56,256.6 55,256.6 54,256.6 53,256.6 52,256.6 51,256.6 50,256.6 49,256.6 48,256.6 47,256.6 46,256.6 45,256.6 44,256.6 43,256.6 42,256.6 41,256.6 40,256.6 39,256.6 38,256.6 37,256.6 36,256.6 35,256.6 34,256.6 33,256.6 32,256.6 31,256.6 30,256.6 29,256.6 28,256.6 27,256.6 26,256.6 25,256.6 24,256.6 23,256.6 22,256.6 21,256.6 20,256.6 19,256.6 18,256.6 17,256.6Z" fill="#00f8f8"/>
<path d="M17,63.8 18,63.5 19,63.7 20,63.5 21,63.9 22,63.7 23,63.6 24,61.3 25,63.8 26,63.5 27,64.1 28,64 29,63.5 30,64 31,63.8 32,63.5 33,63.8 34,64 35,63.8 36,63.9 37,63.6 38,64 39,61.7 40,63.5 41,63.7 42,63.7 43,63.9 44,63.7 45,64.1 46,63.9 47,63.8 48,63.8 49,63.9 50,64 51,64.1 52,63.8 53,63.9 54,63.6 55,64.1 56,63.6 57,63.6 58,63.9 59,63.6 60,63.9 61,63.9 62,63.9 63,63.7 64,63.6 65,63.9 66,63.2 67,64 68,63.9 69,63.9 70,63.9 71,61.4 72,64.1 73,63.9 74,64.1 75,63.9 76,63.9 77,64 78,61.5 79,64 80,64 81,63.5 82,64.1 83,63.5 84,63.8 85,63.7 86,64 87,63.5 88,63.7 89,63.5 90,61.5 91,63.7 92,63.6 93,63.6 94,63.8 95,63.9 96,63.6 97,63.6 98,64 99,63.9 100,63.5 101,63.8 102,63.7 103,64 104,63.6 105,63.9 106,64 107,63.9 108,64 109,64 110,64 111,63.9 112,63.7 113,63.7 114,63.7 115,64.1 116,64 117,64 118,63.7 119,64 120,63.5 121,63.6 122,63.8 123,64 124,63.5 125,64 126,63.7 127,63.7 128,62.8 129,63.9 130,63.8 131,64 132,64 133,63.8 134,63.6 135,63.9 136,63.9 137,63.7 138,63.9 139,63.9 140,63.5 141,63.5 142,63.8 143,64 144,63.6 145,63.7 146,63.7 147,64.1 148,64 149,63.9 150,64.1 151,63.5 152,63.6 153,63.7 154,63.9 155,63.6 156,64 157,64.1 158,63.7 159,63.5 160,63.8 161,63.9 162,64.1 163,63.5 164,64.1 165,63.6 166,63.7 167,64 168,64.1 169,64.5 170,65.1 171,65.6 172,66.2 173,66.6 174,67.4 175,68.4 176,68.9 177,69.3 178,67.7 179,70.4 180,70.8 181,71.7 182,72.1 183,72.8 184,73.1 185,74 186,74.6 187,75.1 188,75.4 189,76 190,76.5 191,77.1 192,77.6 193,78.3 194,78.5 195,79.4 196,78.6 197,80.1 198,80.8 199,81.4 200,82 201,82.2 202,82.7 203,83.5 204,83.8 205,84.3 206,85.2 207,85.7 208,86.4 209,86.6 210,87.3 211,88 212,88.5 213,88.6 214,89.6 215,89.8 216,90.3 217,90.8 218,91.9 219,92.4 220,92.7 221,93.6 222,91.5 223,94.4 224,95.2 225,95.8 226,96 227,96.7 228,97.1 229,97.7 230,98.5 231,99.3 232,99.4 233,99.9 234,101 235,101.4 236,102.2 237,102.3 238,103.2 239,103.9 240,102.4 241,105 242,105.8 243,106 244,107 245,107.2 246,108 247,108.3 248,109.1 249,109.8 250,110.4 251,110.9 252,111.7 253,112.5 254,112.9 255,113.8 256,113.9 257,114.7 258,115.1 259,116 260,116.5 261,117 262,118.1 263,118.6 264,119 265,119.9 266,120.1 267,121.2 268,121.5 269,122.2 270,123.1 271,123.5 272,124.3 273,124.6 274,125.5 275,126.1 276,127 277,127.6 278,127.8 279,128.5 280,129.7 281,130.3 282,130.5 283,131.5 284,132.2 285,132.6 286,133.5 287,134.4 288,134.8 289,135.8 290,136.5 291,137.2 292,137.8 293,138.3 294,138.8 295,140 296,140.4 297,140.9 298,141.6 299,142.3 300,143.4 301,144.2 302,144.5 303,145.2 304,146 305,147.1 306,147.4 307,146.2 308,148.8 309,150 310,150.8 311,151 312,152.2 313,152.5 314,153.4 315,154 316,154.5 317,155.6 318,156.2 319,157 320,157.7 321,158.3 322,159.2 323,159.5 324,160.7 325,161.2 326,161.6 327,162.7 328,163.4 329,164.2 330,164.9 331,165.6 332,166.3 333,167 334,167.7 335,168.3 336,169.1 337,170 338,170.9 339,171.4 340,172.1 341,173 342,173.2 343,174 344,175.1 345,175.5 346,176.7 347,177.4 348,177.8 349,179 350,179.4 351,180.2 352,180.9 353,181.6 354,182.5 355,183.3 356,184.3 357,184.7 358,185.4 359,186.4 360,187.1 361,187.8 362,188.4 363,189.3 364,189.9 365,191 366,191.8 367,192.5 368,193 369,193.6 370,194.9 371,195.5 372,196.2 373,197 374,197.5 375,198.2 376,199.3 377,200.1 378,200.7 379,201.5 380,202.3 381,202 382,203.7 383,204.5 384,205.4 385,206.3 386,207.2 387,208.1 388,209.1 389,210.1 390,210.1 391,211.8 392,212.4 393,213.7 394,214.4 395,215.3 396,216.1 397,217.4 398,218.2 399,219.4 400,220.1 401,220.9 402,222.2 403,223.2 404,224.2 405,225.5 406,226.6 407,227.6 408,228.5 409,229.8 410,231 411,232 412,232.7 413,234.2 414,235.4 415,236.4 416,237.4 417,238.5 418,239.7 419,240.7 420,241.5 421,242.6 422,244 423,245.2 424,246.1 425,247.2 426,248.4 427,249.6 428,250.6 429,251.8 430,253.3 431,254.7 432,255.9 433,257.1 434,258.4 435,259.3 436,260.8 437,262.3 438,263.8 439,265.2 440,265.4 441,267.9 442,269.6 443,270.9 444,272.5 445,273.6 446,275.5 447,277.1 448,278.7 449,280.3 450,282 451,283.5 452,285.5 453,287 454,289.2 455,291 456,292.5 457,294.7 458,296.5 459,298 460,300.3 461,302.3 462,304 463,305.9 464,307.1 465,310.4 466,312.7 467,315.7 468,318.3 469,320.5 470,323.5 471,326.2 472,329.2 473,332 474,335.7 475,337.6 476,345.5 477,352.3 478,361.6 478.2,363.3 478.2,388.5 478,388.7 477,373.7 476,364.3 475,357.4 474,352.6 473,347.5 472,344.4 471,341.2 470,338.4 469,335.8 468,332.6 467,329.8 466,327.2 465,324.8 464,322.7 463,320.1 462,318.2 461,316.1 460,314.1 459,312.2 458,310.2 457,308.1 456,306.5 455,305.5 454,303 453,302.4 452,299.3 451,297.2 450,295.6 449,293.9 448,292.6 447,290.8 446,289.3 445,287.4 444,285.8 443,284.6 442,282.5 441,281.5 440,279.6 439,278.4 438,276.9 437,275.8 436,273.9 435,272.8 434,271.5 433,270.6 432,268.8 431,267.6 430,266.2 429,265.1 428,264.3 427,263 426,261.3 425,260.3 424,259.5 423,258.2 422,257.1 421,255.6 420,254.8 419,253.7 418,252.7 417,251.6 416,250.1 415,249.4 414,248.4 413,246.9 412,245.8 411,245 410,243.8 409,242.6 408,241.6 407,240.6 406,239.6 405,238.4 404,239 403,236.2 402,235.3 401,234.5 400,233 399,232.2 398,231 397,229.9 396,229.2 395,228.1 394,227.5 393,226.6 392,225.3 391,224.7 390,223.6 389,223 388,223 387,221.1 386,219.9 385,219 384,219.7 383,217.4 382,217.9 381,216 380,215.2 379,214.1 378,213.8 377,212.7 376,212.1 375,211.1 374,210.1 373,209.6 372,208.8 371,207.9 370,207.6 369,206.8 368,205.7 367,205 366,204 365,204.5 364,202.6 363,203.9 362,201.5 361,200.3 360,200 359,198.8 358,198.4 357,197.7 356,196.9 355,196.1 354,195.3 353,194.5 352,193.5 351,192.8 350,192 349,191.2 348,190.7 347,192.1 346,189.1 345,188.7 344,188 343,186.9 342,186.5 341,185.8 340,185 339,184.1 338,183.2 337,182.5 336,181.6 335,180.8 334,180.7 333,179.9 332,178.9 331,178.3 330,177.2 329,176.7 328,176.3 327,175.1 326,174.8 325,174.6 324,173.2 323,172.2 322,171.6 321,171 320,170.4 319,169.4 318,169.1 317,168.4 316,167.4 315,166.5 314,167.4 313,165.3 312,164.7 311,163.9 310,163.4 309,162.2 308,163 307,161.3 306,160.2 305,159.4 304,159.1 303,158.4 302,157.5 301,156.7 300,156.3 299,155.6 298,154.5 297,153.9 296,155.4 295,153.4 294,151.6 293,150.9 292,150.6 291,149.7 290,149 289,148.3 288,147.6 287,146.9 286,146 285,145.7 284,144.9 283,144.3 282,143.2 281,142.9 280,141.9 279,141.3 278,142.2 277,140 276,139.4 275,138.6 274,137.9 273,137.4 272,136.7 271,136.3 270,135.4 269,134.8 268,134.1 267,133.9 266,133.2 265,132.1 264,131.9 263,131.3 262,130.2 261,129.9 260,129.4 259,128.4 258,127.9 257,127.6 256,127.3 255,126 254,125.6 253,126.3 252,124.3 251,123.4 250,122.9 249,122.4 248,122.7 247,121.1 246,120.6 245,120.1 244,119.3 243,118.5 242,118 241,117.4 240,116.8 239,116.6 238,116 237,115.5 236,114.5 235,113.8 234,113.3 233,113.7 232,112.2 231,111.9 230,111.1 229,110.2 228,111.7 227,109.5 226,108.7 225,108.4 224,107.7 223,106.7 222,106.5 221,105.6 220,105.3 219,104.8 218,104.3 217,103.3 216,104.3 215,102.4 214,101.7 213,101.6 212,100.8 211,100.4 210,99.9 209,99.2 208,98.7 207,99.9 206,97.4 205,97.3 204,96.8 203,95.8 202,95.7 201,97 200,94.5 199,95.1 198,93.3 197,92.6 196,92.3 195,91.9 194,91.2 193,90.6 192,90.2 191,89.3 190,89.2 189,88.4 188,87.7 187,87.2 186,86.9 185,86.4 184,85.7 183,86.9 182,84.9 181,84.3 180,83.6 179,82.8 178,82.6 177,82.2 176,81.1 175,81 174,80 173,79.7 172,78.7 171,78 170,77.5 169,77 168,76.7 167,76.4 166,75.7 165,75.9 164,75.7 163,75.8 162,75.9 161,76.9 160,76.6 159,75.8 158,75.8 157,75.6 156,75.5 155,75.6 154,75.9 153,75.6 152,75.7 151,75.9 150,77.1 149,76 148,76.1 147,75.8 146,75.9 145,75.9 144,75.7 143,76 142,76 141,76 140,78.1 139,75.9 138,75.5 137,75.9 136,75.5 135,75.8 134,76 133,75.6 132,75.8 131,75.6 130,75.6 129,76 128,75.7 127,75.7 126,75.7 125,75.6 124,75.9 123,75.9 122,75.7 121,76 120,75.7 119,75.6 118,75.7 117,75.6 116,75.7 115,75.9 114,76 113,75.6 112,76.1 111,76 110,75.5 109,75.8 108,76 107,76.1 106,75.6 105,75.9 104,75.7 103,76.1 102,75.7 101,76 100,75.5 99,75.7 98,75.8 97,75.9 96,75.6 95,75.6 94,75.7 93,75.9 92,75.6 91,75.9 90,76.1 89,77.5 88,76 87,75.6 86,76 85,75.8 84,75.7 83,75.6 82,76 81,75.9 80,76.7 79,75.7 78,75.9 77,76.1 76,75.9 75,75.5 74,75.6 73,75.5 72,78.1 71,75.9 70,75.8 69,75.7 68,75.9 67,75.8 66,75.9 65,76 64,76 63,76 62,75.7 61,76 60,75.9 59,78.1 58,75.5 57,76 56,75.9 55,75.7 54,75.7 53,75.6 52,75.9 51,75.7 50,75.6 49,76 48,75.7 47,75.7 46,76.7 45,78.5 44,75.5 43,76.1 42,75.7 41,75.8 40,76 39,75.6 38,76.1 37,75.9 36,75.6 35,76 34,75.6 33,75.9 32,75.9 31,75.8 30,75.8 29,75.5 28,75.9 27,75.7 26,76 25,76 24,75.9 23,75.8 22,76 21,75.6 20,76.1 19,75.9 18,75.8 17,75.6ZM478.2,376.7 479.2,376.5 480.2,374.2 481.2,376.3 482.2,375.9 483.2,376.3 484.2,375.9 485.2,376 486.2,375.9 487.2,375.7 488.2,374.3 489.2,375.6 490.2,375.3 491.2,375.3 492.2,375.3 493.2,375.2 494.2,375.4 495.2,375 496.2,374.8 497.2,374.8 498.2,374.9 499.2,374.8 500.2,374.5 501.2,375 502.2,374.4 503.2,374.6 504.2,374.8 505.2,374.4 506.2,374.5 507.2,374.1 508.2,373.4 509.2,374.4 510.2,374.4 511.2,374.2 512.2,374.1 513.2,374 514.2,374.2 515.2,374.2 516.2,373.6 517.2,374.2 518.2,373.5 519.2,373.9 520.2,373.5 521.2,373.7 522.2,373.7 523.2,373.4 524.2,373.8 525.2,373.5 526.2,373.7 527.2,373.2 528.2,373.3 529.2,373.4 530.2,373.3 531.2,373.4 532.2,373.6 533.2,373.2 534.2,373.4 535.2,373.4 536.2,372.8 537.2,373.4 538.2,373.2 539.2,373 540.2,373.1 541.2,372.8 542.2,372.8 543.2,373 544.2,372.9 545.2,372.7 546.2,371.8 547.2,373 548.2,372.7 549.2,372.8 550.2,373 551.2,372.6 552.2,372.6 553.2,373 554.2,372.6 555.2,372.9 556.2,372.8 557.2,372.9 558.2,372.9 559.2,372.9 560.2,372.4 561.2,372.5 562.2,372.8 563.2,372.6 564.2,372.6 565.2,372.8 566.2,372.7 567.2,372.7 568.2,372.6 569.2,372.4 570.2,372.4 571.2,372.5 572.2,372.5 573.2,372.3 574.2,372.2 575.2,372.7 576.2,372.7 577.2,372.2 578.2,372.1 579.2,372.1 580.2,372.5 581.2,372.7 582.2,372.4 583.2,371.8 584.2,372.1 585.2,372.4 586.2,372.3 587.2,372.3 588.2,371.9 589.2,372.3 590.2,372.1 591.2,372.6 592.2,372.3 593.2,372 594.2,372.3 595.2,372 596.2,372 597.2,372.2 598.2,372 599.2,372.3 600.2,372.2 601.2,372.1 602.2,372 603.2,372.4 604.2,372 605.2,372.4 606.2,372.3 607.2,371.9 608.2,372 609.2,372.2 610.2,372.1 611.2,372 612.2,372.4 613.2,371.9 614.2,372.4 615.2,372 616.2,372.2 617.2,372.2 618.2,372.1 619.2,372.4 620.2,372.2 621.2,372.3 622.2,372.4 623.2,372.1 624.2,372 625.2,371.8 626.2,372 627.2,371.8 628.2,371.9 629.2,372.3 630.2,372.3 631.2,372 632.2,372.1 633.2,371.8 634.2,372.3 635.2,370 636.2,371.8 637.2,372.3 638.2,371.9 639.2,372.3 640.2,372.2 641.2,372.1 642.2,371.7 643.2,371.9 644.2,371.8 645.2,372.2 646.2,372.1 647.2,372 648.2,372.3 649.2,371.8 650.2,371.8 651.2,371.7 652.2,372.2 653.2,369.4 654.2,371.9 655.2,372.2 656.2,371.9 657.2,372 658.2,372.2 659.2,372 660.2,372.2 661.2,372.2 662.2,372.1 663.2,371.8 664.2,371.8 665.2,371.7 666.2,371.8 667.2,372 668.2,372 669.2,371.7 670.2,372.2 671.2,372.2 672.2,371.7 673.2,372.2 674.2,371.8 675.2,372.1 676.2,371.8 677.2,371.8 678.2,372 679.2,371.9 680.2,371.7 681.2,371.9 682.2,372 683.2,372 684.2,369.9 685.2,371.8 686.2,372.2 687.2,372.2 688.2,371.7 689.2,372.2 690.2,372.2 691.2,371.9 692.2,371.9 693.2,371.8 694.2,372.1 695.2,371.8 696.2,371.9 697.2,372.2 698.2,371.7 699.2,371.9 700.2,371.9 701.2,371.8 702.2,371.7 703.2,372 704.2,371.9 705.2,371.7 706.2,372 707.2,371.7 708.2,371.8 709.2,371.9 710.2,372.1 711.2,372.1 712.2,372.1 713.2,372.1 714.2,371.7 715.2,372.1 716.2,371.9 717.2,372 718.2,372.1 719.2,371.9 720.2,371.9 721.2,372.2 722.2,371.9 723.2,371.8 724.2,372 725.2,371.9 726.2,372 727.2,371.9 728.2,372.2 729.2,371.7 730.2,371.6 731.2,371.7 732.2,369.9 733.2,372.2 734.2,371.9 735.2,371.7 736.2,372.1 737.2,372 738.2,372.2 739.2,371.8 740.2,372 741.2,372.1 742.2,372 743.2,371.9 744.2,372 745.2,372.2 746.2,372.1 747.2,371.8 748.2,371.9 749.2,372.1 750.2,371.8 751.2,371.7 752.2,372 753.2,372 754.2,371.7 755.2,371.8 756.2,372 757.2,372.2 758.2,371.8 759.2,371.7 760.2,372.1 761.2,372.1 762.2,371.8 763.2,370.9 764.2,372 765.2,371.7 766.2,372 767.2,372 768.2,371.8 769.2,371.9 770.2,372 771.2,372.1 772.2,371.9 773.2,371.2 774.2,371.8 775.2,371.9 776.2,371.9 777.2,372.2 778.2,372 779.2,372 780.2,371.9 781.2,372.1 782.2,371.8 783.2,371.9 784.2,372 785.2,371.8 786.2,371.9 787.2,371.8 788.2,371.7 789.2,371.7 790.2,372.1 791.2,372 792.2,371.6 793.2,371.9 794.2,372 795.2,371.9 796.2,372 797.2,371.9 798.2,371.7 799.2,371.9 800.2,372.1 801.2,371.7 802.2,371.7 803.2,371.9 804.2,371.8 805.2,371.6 806.2,371.7 807.2,371.7 808.2,372.1 809.2,371.7 810.2,372.1 811.2,371.8 812.2,371.8 813.2,372 814.2,372.1 815.2,372.2 816.2,371.8 817.2,372 818.2,371.9 819.2,372.1 820.2,372.2 821.2,372.2 822.2,371.7 823.2,371.9 824.2,371.7 825.2,372 826.2,369.5 827.2,372.1 828.2,372 829.2,372.1 830.2,372 831.2,371.8 832.2,371.7 833.2,371.7 834.2,372.1 835.2,371.8 836.2,371.7 837.2,371.7 838.2,372.1 839.2,372.1 840.2,371.6 841.2,372 842.2,371.8 843.2,372.1 844.2,371.9 845.2,372.1 846.2,372.2 847.2,369.4 848.2,371.9 849.2,372.1 850.2,371.7 851.2,371.7 852.2,371.9 853.2,371.9 854.2,372 855.2,371.9 856.2,371.8 857.2,371.7 858.2,372 859.2,371.8 860.2,371.6 861.2,371.6 862.2,371.8 863.2,372 864.2,371.9 865.2,371.8 866.2,372 867.2,371.9 868.2,371.8 869.2,371.9 870.2,371.9 871.2,371.8 872.2,372 873.2,371.7 874.2,372 875.2,371.9 876.2,372.2 877.2,372 878.2,372 879.2,372 880.2,372.1 881.2,371.9 882.2,372.2 883.2,372 884.2,371.9 885.2,371.7 886.2,371.8 887.2,371.9 888.2,372.1 889.2,371.9 890.2,371.9 891.2,371.7 892.2,371.7 893.2,371.6 894.2,372.1 895.2,371.7 896.2,372.1 897.2,372.1 898.2,371.7 899.2,371.6 900.2,372.1 901.2,372.2 902.2,372.2 903.2,372 904.2,371.7 905.2,371.9 906.2,372 907.2,371.8 908.2,372 909.2,372.1 910.2,372.1 911.2,371.9 912.2,372.1 913.2,372 914.2,371.8 915.2,371.8 916.2,371.8 917.2,371.9 918.2,371.8 919.2,372.2 920.2,372.1 921.2,372.2 922.2,371.9 923.2,372.2 924.2,371.9 925.2,372 926.2,372 927.2,371.8 928.2,371.7 929.2,371.7 930.2,372.1 931.2,371.6 932.2,371.8 933.2,372.1 934.2,371.9 935.2,371.8 936.2,371.8 937.2,371.7 938.2,372 939.2,372.1 940.2,371.8 941.2,372.1 942.2,372.1 943.2,372.2 944.2,372.2 945.2,371.9 946.2,372 947.2,371.7 948.2,372 949.2,371.8 950.2,372.2 951.2,372.1 952.2,371.8 953.2,371.7 954.2,372.1 955.2,371.7 956.2,372 957.2,372.1 958.2,371.9 959.2,372.1 960.2,372.1 961.2,372.2 962.2,371.7 963.2,371.7 964.2,371.9 965.2,371.8 966.2,372 967.2,372.1 968.2,371.7 969.2,369.4 970.2,372.1 971.2,371.7 972.2,371.6 973.2,371.8 974.2,371.8 975.2,371.9 976.2,372.1 977.2,372 978.2,372.2 979.2,372.2 980.2,371.7 981.2,371.7 982.2,372.1 983.2,372.1 984.2,371.7 985.2,371.7 986.2,371.7 987.2,371.7 988.2,371.8 989.2,371.6 990.2,371.6 991.2,372 992.2,371.8 993.2,371.8 994.2,372.2 995.2,372.2 996.2,371.7 997.2,372.1 998.2,371.7 999.2,372.2 1000.2,371.9 1001.2,371.8 1002.2,372.1 1003.2,372.1 1004.2,371.7 1005.2,372 1006.2,371.9 1007.2,371.9 1008.2,372.1 1009.2,371.8 1010.2,371.7 1011.2,372 1012.2,371.7 1013.2,371.7 1014.2,372 1015.2,371.9 1016,371.8 1016,383.7 1015.2,383.8 1014.2,384.1 1013.2,383.8 1012.2,384.2 1011.2,384 1010.2,383.9 1009.2,384 1008.2,384.1 1007.2,384.1 1006.2,383.7 1005.2,383.8 1004.2,384.1 1003.2,383.9 1002.2,383.7 1001.2,383.8 1000.2,384.1 999.2,384.1 998.2,384.1 997.2,384.1 996.2,383.6 995.2,383.6 994.2,383.6 993.2,383.8 992.2,384.2 991.2,383.7 990.2,383.8 989.2,386.4 988.2,384.2 987.2,383.7 986.2,383.8 985.2,384 984.2,383.6 983.2,383.9 982.2,384.2 981.2,384.2 980.2,384 979.2,384.1 978.2,384 977.2,384.1 976.2,383.6 975.2,384.1 974.2,383.8 973.2,383.9 972.2,383.9 971.2,384.3 970.2,383.8 969.2,383.9 968.2,383.7 967.2,384.4 966.2,384.2 965.2,383.7 964.2,384 963.2,384.1 962.2,383.9 961.2,383.8 960.2,384.1 959.2,383.7 958.2,383.6 957.2,384.2 956.2,383.7 955.2,383.7 954.2,383.8 953.2,384 952.2,384.2 951.2,383.8 950.2,384.2 949.2,384.2 948.2,383.8 947.2,384 946.2,383.8 945.2,384 944.2,383.6 943.2,383.9 942.2,384 941.2,383.8 940.2,383.9 939.2,383.9 938.2,384.1 937.2,384 936.2,383.9 935.2,383.9 934.2,383.6 933.2,383.8 932.2,383.8 931.2,384.1 930.2,383.9 929.2,384 928.2,384 927.2,384 926.2,383.8 925.2,384.1 924.2,384.1 923.2,384 922.2,383.7 921.2,384 920.2,383.7 919.2,383.8 918.2,383.9 917.2,383.8 916.2,383.6 915.2,384.1 914.2,383.8 913.2,383.8 912.2,383.8 911.2,384.1 910.2,384.2 909.2,384.2 908.2,383.8 907.2,383.8 906.2,383.9 905.2,384.1 904.2,383.7 903.2,383.7 902.2,384.1 901.2,384.2 900.2,383.7 899.2,384 898.2,383.7 897.2,383.9 896.2,383.8 895.2,383.6 894.2,384.1 893.2,384.2 892.2,383.8 891.2,384.1 890.2,383.6 889.2,384 888.2,383.8 887.2,383.9 886.2,383.9 885.2,383.7 884.2,384.2 883.2,384 882.2,384.5 881.2,383.8 880.2,383.9 879.2,383.8 878.2,384.1 877.2,384.1 876.2,384 875.2,385.3 874.2,383.9 873.2,384.2 872.2,383.9 871.2,385.8 870.2,384.1 869.2,384 868.2,383.8 867.2,383.9 866.2,384.2 865.2,383.7 864.2,384.1 863.2,383.7 862.2,383.7 861.2,384.1 860.2,383.8 859.2,384.2 858.2,384.2 857.2,384 856.2,383.8 855.2,384 854.2,383.9 853.2,383.7 852.2,383.8 851.2,384 850.2,383.6 849.2,384.2 848.2,383.9 847.2,383.9 846.2,383.9 845.2,383.9 844.2,384.2 843.2,384 842.2,383.8 841.2,384.1 840.2,384.1 839.2,384.2 838.2,383.8 837.2,384.1 836.2,383.9 835.2,383.7 834.2,386 833.2,383.8 832.2,384.1 831.2,383.7 830.2,383.7 829.2,384 828.2,383.6 827.2,383.9 826.2,383.9 825.2,384.1 824.2,384.1 823.2,383.7 822.2,384.1 821.2,383.7 820.2,384.1 819.2,384 818.2,383.9 817.2,383.8 816.2,384 815.2,384.1 814.2,383.8 813.2,383.8 812.2,383.7 811.2,383.8 810.2,384.1 809.2,384 808.2,383.9 807.2,384 806.2,383.8 805.2,384 804.2,384 803.2,384.1 802.2,385.6 801.2,384.1 800.2,384.2 799.2,383.9 798.2,384 797.2,383.7 796.2,384 795.2,383.7 794.2,384.8 793.2,383.9 792.2,383.9 791.2,383.8 790.2,384 789.2,383.8 788.2,384 787.2,384 786.2,384.1 785.2,383.7 784.2,383.7 783.2,384.1 782.2,383.6 781.2,384.1 780.2,383.9 779.2,383.8 778.2,384 777.2,384.1 776.2,383.8 775.2,383.9 774.2,383.9 773.2,383.8 772.2,383.8 771.2,384.1 770.2,383.7 769.2,384.2 768.2,384.1 767.2,383.6 766.2,384.8 765.2,384.1 764.2,383.9 763.2,383.6 762.2,383.8 761.2,384.9 760.2,383.7 759.2,384.1 758.2,384 757.2,383.9 756.2,383.8 755.2,383.8 754.2,384.1 753.2,383.7 752.2,384.2 751.2,384.1 750.2,385.9 749.2,384 748.2,383.6 747.2,383.9 746.2,384 745.2,383.9 744.2,384.2 743.2,384.2 742.2,383.8 741.2,384.1 740.2,383.9 739.2,383.9 738.2,383.7 737.2,384.1 736.2,383.9 735.2,383.7 734.2,384.1 733.2,383.9 732.2,383.9 731.2,384.2 730.2,384 729.2,383.7 728.2,384 727.2,384 726.2,386.3 725.2,383.8 724.2,386.5 723.2,383.8 722.2,383.9 721.2,384.2 720.2,384.1 719.2,384 718.2,384.2 717.2,384.2 716.2,384.2 715.2,385.1 714.2,386.2 713.2,384.2 712.2,384.2 711.2,384.1 710.2,383.7 709.2,384.2 708.2,383.9 707.2,383.7 706.2,383.7 705.2,384.2 704.2,383.8 703.2,383.8 702.2,383.7 701.2,383.8 700.2,384.2 699.2,383.9 698.2,384 697.2,383.8 696.2,383.8 695.2,384.8 694.2,384.2 693.2,384 692.2,383.9 691.2,383.7 690.2,383.7 689.2,383.7 688.2,383.7 687.2,383.9 686.2,383.7 685.2,383.9 684.2,383.7 683.2,384.1 682.2,383.7 681.2,384 680.2,384.1 679.2,383.8 678.2,384.3 677.2,383.9 676.2,385.4 675.2,384 674.2,385.5 673.2,386.4 672.2,384.2 671.2,384 670.2,383.8 669.2,384 668.2,384 667.2,384 666.2,383.7 665.2,384 664.2,383.7 663.2,383.8 662.2,383.9 661.2,384.2 660.2,384 659.2,384 658.2,384.2 657.2,384.1 656.2,384.2 655.2,383.9 654.2,383.9 653.2,384.1 652.2,384.2 651.2,384.2 650.2,383.7 649.2,384.4 648.2,383.9 647.2,383.8 646.2,383.9 645.2,384.3 644.2,383.9 643.2,384.1 642.2,384 641.2,383.7 640.2,384 639.2,385.3 638.2,384 637.2,384.2 636.2,383.8 635.2,384.3 634.2,384 633.2,384.1 632.2,384 631.2,384.3 630.2,384 629.2,384.2 628.2,384.3 627.2,384 626.2,383.8 625.2,384.4 624.2,384.2 623.2,384 622.2,384.2 621.2,384.2 620.2,383.8 619.2,384.2 618.2,384.2 617.2,384.1 616.2,383.9 615.2,384.2 614.2,384.4 613.2,384.2 612.2,384.3 611.2,384.1 610.2,383.9 609.2,384.1 608.2,384.1 607.2,384.3 606.2,384.4 605.2,383.9 604.2,384.3 603.2,384.4 602.2,383.9 601.2,384.5 600.2,384.4 599.2,384.2 598.2,385.4 597.2,384.4 596.2,384.1 595.2,384 594.2,384.4 593.2,385.6 592.2,384.5 591.2,384.4 590.2,384.1 589.2,384.2 588.2,384.1 587.2,384.1 586.2,384.5 585.2,384.3 584.2,384.2 583.2,384.2 582.2,384.2 581.2,384.6 580.2,384.2 579.2,384.6 578.2,384.7 577.2,384.4 576.2,384.5 575.2,385.2 574.2,384.5 573.2,384.5 572.2,384.3 571.2,384.8 570.2,384.4 569.2,384.4 568.2,384.6 567.2,384.7 566.2,384.8 565.2,384.8 564.2,384.5 563.2,384.5 562.2,385.3 561.2,384.4 560.2,384.8 559.2,384.6 558.2,384.6 557.2,386 556.2,385 555.2,384.9 554.2,385 553.2,384.5 552.2,384.8 551.2,384.8 550.2,385.3 549.2,385.1 548.2,384.8 547.2,384.7 546.2,384.9 545.2,384.9 544.2,385 543.2,385.3 542.2,385.6 541.2,385.3 540.2,384.9 539.2,384.9 538.2,385.1 537.2,385.1 536.2,385.1 535.2,385.1 534.2,385.2 533.2,385 532.2,385.1 531.2,385.7 530.2,386.6 529.2,385.5 528.2,385.5 527.2,385.6 526.2,385.4 525.2,385.4 524.2,385.4 523.2,385.6 522.2,385.9 521.2,385.4 520.2,386 519.2,385.8 518.2,385.7 517.2,385.9 516.2,385.9 515.2,386.2 514.2,386.1 513.2,386.3 512.2,386 511.2,386 510.2,386.4 509.2,386.6 508.2,386.4 507.2,386.4 506.2,386.4 505.2,386.5 504.2,386.8 503.2,388.6 502.2,386.8 501.2,386.8 500.2,386.6 499.2,386.6 498.2,386.9 497.2,386.9 496.2,386.9 495.2,386.9 494.2,388.7 493.2,387.5 492.2,387.5 491.2,387.3 490.2,387.5 489.2,387.5 488.2,387.7 487.2,388.7 486.2,387.9 485.2,388.2 484.2,388.1 483.2,388.3 482.2,388 481.2,388.3 480.2,388.7 479.2,388.3 478.2,388.5Z" fill="#747400"/>
<path d="M17,64.3 18,64.3 19,64.1 20,64.2 21,64.3 22,64.3 23,64.2 24,64.3 25,64.2 26,64.3 27,64.2 28,64.3 29,64.2 30,64.1 31,64.4 32,64.4 33,64.4 34,64.3 35,64.1 36,64.2 37,64.3 38,64.2 39,64.2 40,64.1 41,64.3 42,64.1 43,64.4 44,64.3 45,64.2 46,64.3 47,64.3 48,64.4 49,64.2 50,64.3 51,64.3 52,64.3 53,64.1 54,64.1 55,64.2 56,64.3 57,64.3 58,64.1 59,64.2 60,64.3 61,64.4 62,64.3 63,64.2 64,64.2 65,64.3 66,64.2 67,64.2 68,64.4 69,64.3 70,64.3 71,64.2 72,64.2 73,64.2 74,64.3 75,64.3 76,64.2 77,64.2 78,64.1 79,64.3 80,64.3 81,64.2 82,64.4 83,64.1 84,64.1 85,64.4 86,64.1 87,64.1 88,64.4 89,64.4 90,64.2 91,64.4 92,64.4 93,64.2 94,64.3 95,64.3 96,64.1 97,64.2 98,64.2 99,64.2 100,64.4 101,64.2 102,64.3 103,64.3 104,64.2 105,64.4 106,64.2 107,64.3 108,64.2 109,64.2 110,64.2 111,64.4 112,64.3 113,64.2 114,64.3 115,64.2 116,64.3 117,64.1 118,64.3 119,64.1 120,64.2 121,64.2 122,64.3 123,64.1 124,64.1 125,64.1 126,64.3 127,64.3 128,64.3 129,64.3 130,64.2 131,64.2 132,64.2 133,64.1 134,64.2 135,64.1 136,64.2 137,64.3 138,64.4 139,64.3 140,64.3 141,64.3 142,64.3 143,64.4 144,64.3 145,64.3 146,64.3 147,64.3 148,64.4 149,64.3 150,64.3 151,64.3 152,64.1 153,64.4 154,64.2 155,64.2 156,64.3 157,64.3 158,64.4 159,64.3 160,64.1 161,64.4 162,64.3 163,64.4 164,64.4 165,64.2 166,64.4 167,64.8 168,65.1 169,65.2 170,65.9 171,66.3 172,67 173,67.6 174,68.1 175,68.8 176,69.4 177,70.2 178,70.5 179,71.3 180,71.7 181,72.4 182,72.9 183,73.4 184,74 185,74.4 186,75 187,75.5 188,76.2 189,76.8 190,77.1 191,77.8 192,78.4 193,78.8 194,79.3 195,79.8 196,80.5 197,80.8 198,81.6 199,82.1 200,82.6 201,83.1 202,83.5 203,84.2 204,84.7 205,85.2 206,85.7 207,86.2 208,86.8 209,87.4 210,88 211,88.5 212,89.2 213,89.6 214,90.1 215,90.6 216,91.3 217,91.8 218,92.4 219,92.9 220,93.4 221,94 222,94.6 223,95.2 224,95.6 225,96.2 226,96.8 227,97.5 228,98.1 229,98.5 230,99.2 231,99.6 232,100.4 233,100.9 234,101.6 235,102.2 236,102.7 237,103.3 238,103.7 239,104.5 240,105 241,105.7 242,106.2 243,106.8 244,107.5 245,108 246,108.6 247,109.4 248,109.9 249,110.6 250,111.2 251,111.9 252,112.4 253,113 254,113.5 255,114.2 256,114.7 257,115.4 258,116.2 259,116.7 260,117.5 261,118.1 262,118.5 263,119.2 264,119.8 265,120.6 266,121 267,121.7 268,122.4 269,122.8 270,123.6 271,124.2 272,124.8 273,125.5 274,126.1 275,126.9 276,127.4 277,128.1 278,128.7 279,129.4 280,130.2 281,130.9 282,131.4 283,132.2 284,133 285,133.6 286,134.3 287,135.1 288,135.7 289,136.3 290,137.1 291,137.6 292,138.4 293,139 294,139.8 295,140.6 296,141.3 297,142 298,142.5 299,143.3 300,144.1 301,144.8 302,145.4 303,146.2 304,147 305,147.6 306,148.2 307,149 308,149.8 309,150.6 310,151.3 311,151.8 312,152.5 313,153.4 314,154.1 315,154.8 316,155.5 317,156.3 318,157 319,157.5 320,158.4 321,159.1 322,159.7 323,160.6 324,161 325,161.9 326,162.6 327,163.3 328,164.2 329,164.7 330,165.6 331,166.4 332,167 333,167.7 334,168.5 335,169.2 336,169.9 337,170.7 338,171.5 339,172.2 340,172.9 341,173.5 342,174.2 343,175 344,175.8 345,176.4 346,177.2 347,178.1 348,178.9 349,179.4 350,180.1 351,180.9 352,181.6 353,182.5 354,183.2 355,184 356,184.7 357,185.4 358,186.2 359,186.9 360,187.7 361,188.5 362,189.3 363,189.9 364,190.9 365,191.5 366,192.2 367,193.1 368,194 369,194.7 370,195.4 371,196 372,196.8 373,197.6 374,198.5 375,199.2 376,199.9 377,200.6 378,201.5 379,202.2 380,203 381,203.8 382,204.6 383,205.6 384,206.4 385,207.2 386,208 387,208.9 388,209.9 389,210.5 390,211.5 391,212.4 392,213.3 393,214.2 394,215.2 395,216.1 396,216.9 397,217.9 398,218.8 399,219.8 400,220.8 401,222 402,222.9 403,224 404,225.1 405,226 406,227.1 407,228.2 408,229.4 409,230.3 410,231.6 411,232.6 412,233.7 413,234.7 414,235.8 415,237.1 416,238 417,239.1 418,240.2 419,241.2 420,242.4 421,243.6 422,244.7 423,245.8 424,246.9 425,248.2 426,249.2 427,250.4 428,251.7 429,252.7 430,253.9 431,255.3 432,256.6 433,257.7 434,259 435,260.2 436,261.7 437,263 438,264.5 439,265.7 440,267.2 441,268.7 442,270.2 443,271.6 444,273.3 445,274.7 446,276.4 447,277.8 448,279.6 449,281.2 450,282.8 451,284.5 452,286.1 453,288.1 454,289.7 455,291.4 456,293.4 457,295.2 458,297 459,299 460,300.8 461,302.9 462,304.8 463,306.7 464,309 465,311.2 466,313.7 467,316.4 468,319 469,321.6 470,324.3 471,327.4 472,329.9 473,333 474,336.4 475,340.3 476,346.2 477,353 478,362.9 478.2,366.5 478.2,387.6 478,387.6 477,373.1 476,363.3 475,356.4 474,350.4 473,346.4 472,343 471,340.2 470,337.4 469,334.6 468,331.7 467,329.1 466,326.4 465,324 464,321.5 463,319.3 462,317 461,315 460,312.8 459,311 458,309.1 457,307.2 456,305.3 455,303.6 454,301.8 453,299.8 452,298.2 451,296.5 450,294.7 449,293 448,291.2 447,289.5 446,288 445,286.3 444,284.8 443,283.2 442,281.7 441,280.2 440,278.7 439,277.2 438,275.9 437,274.5 436,273 435,271.8 434,270.3 433,269.2 432,267.8 431,266.7 430,265.4 429,263.9 428,262.7 427,261.5 426,260.4 425,259.3 424,258.1 423,257 422,255.9 421,254.8 420,253.4 419,252.4 418,251.3 417,250.3 416,249.1 415,248.2 414,247.1 413,246 412,244.8 411,243.8 410,242.8 409,241.6 408,240.5 407,239.4 406,238.4 405,237.2 404,236.1 403,234.9 402,234.1 401,232.9 400,232 399,231.1 398,230 397,229 396,227.9 395,226.9 394,226.2 393,225.2 392,224.1 391,223.2 390,222.3 389,221.4 388,220.5 387,219.8 386,218.9 385,218 384,217 383,216.4 382,215.5 381,214.6 380,213.9 379,213 378,212.1 377,211.4 376,210.6 375,210 374,209.1 373,208.4 372,207.6 371,206.9 370,206.1 369,205.3 368,204.6 367,203.8 366,203 365,202.3 364,201.5 363,200.6 362,200 361,199.2 360,198.4 359,197.6 358,196.9 357,196.1 356,195.3 355,194.7 354,194 353,193.1 352,192.3 351,191.5 350,190.9 349,190.1 348,189.5 347,188.6 346,187.9 345,187.3 344,186.6 343,185.8 342,184.8 341,184.3 340,183.4 339,182.7 338,182 337,181.1 336,180.7 335,179.9 334,179.1 333,178.4 332,177.7 331,177 330,176.2 329,175.5 328,174.9 327,174.1 326,173.3 325,172.5 324,171.7 323,171 322,170.3 321,169.6 320,169 319,168.3 318,167.7 317,166.8 316,166.2 315,165.4 314,164.8 313,163.9 312,163.2 311,162.5 310,161.9 309,161.1 308,160.5 307,159.6 306,158.8 305,158.1 304,157.5 303,156.7 302,156 301,155.4 300,154.7 299,154.1 298,153.4 297,152.5 296,151.7 295,151.3 294,150.4 293,149.8 292,149.1 291,148.3 290,147.6 289,146.9 288,146.1 287,145.5 286,144.9 285,144.2 284,143.4 283,142.7 282,142 281,141.4 280,140.7 279,140.2 278,139.4 277,138.9 276,138 275,137.4 274,136.6 273,136.1 272,135.6 271,134.7 270,134.1 269,133.6 268,132.9 267,132.1 266,131.7 265,131 264,130.3 263,129.7 262,129 261,128.6 260,127.7 259,127.2 258,126.6 257,125.9 256,125.4 255,124.8 254,124 253,123.7 252,123 251,122.4 250,121.6 249,121 248,120.4 247,119.9 246,119.3 245,118.7 244,118 243,117.4 242,116.6 241,116.2 240,115.6 239,115 238,114.4 237,113.8 236,113.1 235,112.5 234,111.9 233,111.5 232,110.9 231,110.3 230,109.7 229,109 228,108.3 227,107.9 226,107.2 225,106.7 224,106.2 223,105.5 222,105.1 221,104.5 220,104 219,103.3 218,102.8 217,102.3 216,101.6 215,101 214,100.6 213,99.9 212,99.3 211,98.8 210,98.2 209,97.8 208,97.1 207,96.8 206,96.2 205,95.6 204,95 203,94.5 202,94 201,93.6 200,93.1 199,92.3 198,91.9 197,91.4 196,90.9 195,90.3 194,89.8 193,89.1 192,88.6 191,88 190,87.6 189,87.1 188,86.5 187,85.9 186,85.3 185,84.9 184,84.4 183,83.7 182,83.2 181,82.6 180,82.2 179,81.6 178,81 177,80.5 176,80.1 175,79.5 174,78.7 173,78.1 172,77.6 171,77 170,76.3 169,75.5 168,75 167,74.8 166,74 165,73.1 164,73.2 163,73.3 162,73.2 161,73.3 160,73.1 159,73.2 158,73.2 157,73.3 156,73.2 155,73.1 154,73.3 153,73.4 152,73.3 151,73.3 150,73.4 149,73.3 148,73.4 147,73.3 146,73.3 145,73.1 144,73.3 143,73.3 142,73.2 141,73.2 140,73.3 139,73.2 138,73.2 137,73.2 136,73.3 135,73.1 134,73.2 133,73.3 132,73.2 131,73.1 130,73.1 129,73.4 128,73.2 127,73.2 126,73.3 125,73.4 124,73.4 123,73.2 122,73.4 121,73.3 120,73.2 119,73.4 118,73.2 117,73.3 116,73.1 115,73.2 114,73.1 113,73.3 112,73.4 111,73.1 110,73.1 109,73.2 108,73.4 107,73.1 106,73.3 105,73.3 104,73.3 103,73.2 102,73.3 101,73.4 100,73.2 99,73.4 98,73.4 97,73.4 96,73.2 95,73.3 94,73.2 93,73.2 92,73.4 91,73.3 90,73.3 89,73.2 88,73.2 87,73.3 86,73.2 85,73.2 84,73.3 83,73.3 82,73.2 81,73.3 80,73.2 79,73.2 78,73.2 77,73.2 76,73.1 75,73.2 74,73.3 73,73.2 72,73.2 71,73.1 70,73.1 69,73.4 68,73.2 67,73.2 66,73.4 65,73.2 64,73.3 63,73.4 62,73.2 61,73.1 60,73.4 59,73.1 58,73.3 57,73.2 56,73.1 55,73.4 54,73.4 53,73.2 52,73.3 51,73.4 50,73.2 49,73.3 48,73.4 47,73.3 46,73.1 45,73.4 44,73.2 43,73.3 42,73.4 41,73.1 40,73.2 39,73.1 38,73.2 37,73.3 36,73.2 35,73.3 34,73.3 33,73.2 32,73.2 31,73.2 30,73.2 29,73.1 28,73.3 27,73.1 26,73.3 25,73.3 24,73.2 23,73.4 22,73.1 21,73.4 20,73.1 19,73.2 18,73.2 17,73.2ZM478.2,377 479.2,377.1 480.2,377 481.2,376.8 482.2,376.8 483.2,376.7 484.2,376.4 485.2,376.5 486.2,376.3 487.2,376.2 488.2,376.2 489.2,375.9 490.2,376 491.2,375.9 492.2,375.8 493.2,375.7 494.2,375.8 495.2,375.6 496.2,375.6 497.2,375.5 498.2,375.5 499.2,375.4 500.2,375.4 501.2,375.3 502.2,375 503.2,375.1 504.2,375.1 505.2,374.8 506.2,374.9 507.2,374.8 508.2,374.9 509.2,374.6 510.2,374.6 511.2,374.7 512.2,374.6 513.2,374.6 514.2,374.5 515.2,374.5 516.2,374.4 517.2,374.3 518.2,374.2 519.2,374.4 520.2,374.3 521.2,374.3 522.2,374.1 523.2,374.1 524.2,374.2 525.2,374.1 526.2,374 527.2,373.9 528.2,374 529.2,374 530.2,373.9 531.2,373.9 532.2,373.7 533.2,373.9 534.2,373.8 535.2,373.7 536.2,373.6 537.2,373.7 538.2,373.6 539.2,373.4 540.2,373.5 541.2,373.6 542.2,373.5 543.2,373.5 544.2,373.5 545.2,373.6 546.2,373.5 547.2,373.4 548.2,373.4 549.2,373.4 550.2,373.3 551.2,373.2 552.2,373.3 553.2,373.3 554.2,373.3 555.2,373.1 556.2,373.3 557.2,373.1 558.2,373.3 559.2,373.3 560.2,373.1 561.2,373.2 562.2,373 563.2,373.1 564.2,373.2 565.2,373.1 566.2,373 567.2,373.1 568.2,373 569.2,373 570.2,373 571.2,372.8 572.2,373 573.2,373.1 574.2,373 575.2,372.9 576.2,372.9 577.2,372.9 578.2,372.8 579.2,373 580.2,372.9 581.2,373 582.2,372.8 583.2,372.7 584.2,372.8 585.2,372.9 586.2,372.7 587.2,372.7 588.2,372.8 589.2,372.7 590.2,372.8 591.2,372.8 592.2,372.6 593.2,372.6 594.2,372.7 595.2,372.6 596.2,372.6 597.2,372.6 598.2,372.8 599.2,372.7 600.2,372.5 601.2,372.8 602.2,372.7 603.2,372.6 604.2,372.6 605.2,372.6 606.2,372.8 607.2,372.7 608.2,372.6 609.2,372.6 610.2,372.5 611.2,372.6 612.2,372.7 613.2,372.6 614.2,372.6 615.2,372.7 616.2,372.7 617.2,372.6 618.2,372.4 619.2,372.5 620.2,372.5 621.2,372.6 622.2,372.5 623.2,372.6 624.2,372.5 625.2,372.5 626.2,372.5 627.2,372.4 628.2,372.4 629.2,372.7 630.2,372.5 631.2,372.7 632.2,372.4 633.2,372.4 634.2,372.4 635.2,372.6 636.2,372.5 637.2,372.6 638.2,372.4 639.2,372.4 640.2,372.4 641.2,372.5 642.2,372.6 643.2,372.5 644.2,372.6 645.2,372.6 646.2,372.4 647.2,372.5 648.2,372.6 649.2,372.4 650.2,372.5 651.2,372.5 652.2,372.5 653.2,372.4 654.2,372.5 655.2,372.4 656.2,372.4 657.2,372.5 658.2,372.3 659.2,372.5 660.2,372.3 661.2,372.6 662.2,372.5 663.2,372.4 664.2,372.6 665.2,372.4 666.2,372.5 667.2,372.4 668.2,372.4 669.2,372.5 670.2,372.3 671.2,372.5 672.2,372.5 673.2,372.4 674.2,372.4 675.2,372.3 676.2,372.4 677.2,372.5 678.2,372.3 679.2,372.3 680.2,372.3 681.2,372.5 682.2,372.5 683.2,372.5 684.2,372.5 685.2,372.4 686.2,372.5 687.2,372.3 688.2,372.3 689.2,372.3 690.2,372.3 691.2,372.5 692.2,372.3 693.2,372.3 694.2,372.4 695.2,372.5 696.2,372.3 697.2,372.3 698.2,372.3 699.2,372.3 700.2,372.4 701.2,372.3 702.2,372.3 703.2,372.4 704.2,372.3 705.2,372.5 706.2,372.5 707.2,372.5 708.2,372.4 709.2,372.2 710.2,372.4 711.2,372.3 712.2,372.4 713.2,372.5 714.2,372.5 715.2,372.2 716.2,372.3 717.2,372.4 718.2,372.3 719.2,372.4 720.2,372.4 721.2,372.4 722.2,372.4 723.2,372.3 724.2,372.5 725.2,372.4 726.2,372.4 727.2,372.4 728.2,372.3 729.2,372.4 730.2,372.3 731.2,372.5 732.2,372.5 733.2,372.2 734.2,372.5 735.2,372.3 736.2,372.3 737.2,372.4 738.2,372.5 739.2,372.4 740.2,372.5 741.2,372.3 742.2,372.4 743.2,372.3 744.2,372.4 745.2,372.3 746.2,372.5 747.2,372.3 748.2,372.2 749.2,372.4 750.2,372.4 751.2,372.3 752.2,372.3 753.2,372.4 754.2,372.3 755.2,372.5 756.2,372.4 757.2,372.4 758.2,372.3 759.2,372.3 760.2,372.5 761.2,372.4 762.2,372.2 763.2,372.5 764.2,372.3 765.2,372.4 766.2,372.4 767.2,372.3 768.2,372.5 769.2,372.4 770.2,372.4 771.2,372.3 772.2,372.3 773.2,372.4 774.2,372.3 775.2,372.2 776.2,372.4 777.2,372.3 778.2,372.4 779.2,372.4 780.2,372.5 781.2,372.4 782.2,372.3 783.2,372.3 784.2,372.2 785.2,372.4 786.2,372.4 787.2,372.4 788.2,372.3 789.2,372.5 790.2,372.5 791.2,372.3 792.2,372.5 793.2,372.3 794.2,372.5 795.2,372.4 796.2,372.4 797.2,372.4 798.2,372.3 799.2,372.3 800.2,372.3 801.2,372.2 802.2,372.4 803.2,372.5 804.2,372.2 805.2,372.4 806.2,372.2 807.2,372.5 808.2,372.2 809.2,372.4 810.2,372.5 811.2,372.2 812.2,372.4 813.2,372.2 814.2,372.4 815.2,372.3 816.2,372.4 817.2,372.4 818.2,372.4 819.2,372.5 820.2,372.4 821.2,372.3 822.2,372.3 823.2,372.4 824.2,372.5 825.2,372.3 826.2,372.3 827.2,372.5 828.2,372.3 829.2,372.4 830.2,372.4 831.2,372.3 832.2,372.5 833.2,372.4 834.2,372.3 835.2,372.4 836.2,372.4 837.2,372.4 838.2,372.4 839.2,372.3 840.2,372.5 841.2,372.4 842.2,372.3 843.2,372.2 844.2,372.3 845.2,372.3 846.2,372.3 847.2,372.5 848.2,372.3 849.2,372.4 850.2,372.2 851.2,372.2 852.2,372.2 853.2,372.5 854.2,372.5 855.2,372.4 856.2,372.2 857.2,372.2 858.2,372.5 859.2,372.3 860.2,372.5 861.2,372.4 862.2,372.4 863.2,372.4 864.2,372.4 865.2,372.4 866.2,372.2 867.2,372.3 868.2,372.5 869.2,372.4 870.2,372.3 871.2,372.5 872.2,372.4 873.2,372.4 874.2,372.4 875.2,372.3 876.2,372.5 877.2,372.2 878.2,372.3 879.2,372.4 880.2,372.4 881.2,372.3 882.2,372.4 883.2,372.3 884.2,372.2 885.2,372.3 886.2,372.3 887.2,372.4 888.2,372.4 889.2,372.3 890.2,372.3 891.2,372.2 892.2,372.4 893.2,372.5 894.2,372.3 895.2,372.5 896.2,372.3 897.2,372.3 898.2,372.3 899.2,372.4 900.2,372.4 901.2,372.3 902.2,372.3 903.2,372.3 904.2,372.5 905.2,372.3 906.2,372.5 907.2,372.2 908.2,372.4 909.2,372.3 910.2,372.5 911.2,372.4 912.2,372.2 913.2,372.3 914.2,372.4 915.2,372.2 916.2,372.3 917.2,372.4 918.2,372.3 919.2,372.4 920.2,372.5 921.2,372.3 922.2,372.4 923.2,372.2 924.2,372.5 925.2,372.4 926.2,372.4 927.2,372.4 928.2,372.3 929.2,372.4 930.2,372.2 931.2,372.4 932.2,372.4 933.2,372.2 934.2,372.4 935.2,372.4 936.2,372.4 937.2,372.3 938.2,372.4 939.2,372.5 940.2,372.4 941.2,372.2 942.2,372.3 943.2,372.5 944.2,372.3 945.2,372.3 946.2,372.5 947.2,372.4 948.2,372.4 949.2,372.3 950.2,372.4 951.2,372.4 952.2,372.4 953.2,372.3 954.2,372.3 955.2,372.3 956.2,372.4 957.2,372.3 958.2,372.4 959.2,372.5 960.2,372.2 961.2,372.4 962.2,372.3 963.2,372.3 964.2,372.4 965.2,372.5 966.2,372.5 967.2,372.4 968.2,372.3 969.2,372.4 970.2,372.3 971.2,372.2 972.2,372.4 973.2,372.3 974.2,372.4 975.2,372.4 976.2,372.3 977.2,372.3 978.2,372.2 979.2,372.4 980.2,372.4 981.2,372.5 982.2,372.5 983.2,372.3 984.2,372.3 985.2,372.2 986.2,372.4 987.2,372.3 988.2,372.3 989.2,372.2 990.2,372.4 991.2,372.3 992.2,372.4 993.2,372.4 994.2,372.3 995.2,372.4 996.2,372.4 997.2,372.5 998.2,372.3 999.2,372.4 1000.2,372.4 1001.2,372.3 1002.2,372.3 1003.2,372.3 1004.2,372.2 1005.2,372.3 1006.2,372.3 1007.2,372.2 1008.2,372.3 1009.2,372.3 1010.2,372.4 1011.2,372.5 1012.2,372.5 1013.2,372.2 1014.2,372.2 1015.2,372.4 1016,372.2 1016,381.5 1015.2,381.2 1014.2,381.4 1013.2,381.4 1012.2,381.4 1011.2,381.4 1010.2,381.2 1009.2,381.5 1008.2,381.2 1007.2,381.2 1006.2,381.4 1005.2,381.2 1004.2,381.4 1003.2,381.4 1002.2,381.5 1001.2,381.3 1000.2,381.3 999.2,381.5 998.2,381.5 997.2,381.2 996.2,381.4 995.2,381.4 994.2,381.3 993.2,381.2 992.2,381.2 991.2,381.5 990.2,381.3 989.2,381.5 988.2,381.3 987.2,381.5 986.2,381.4 985.2,381.4 984.2,381.3 983.2,381.4 982.2,381.4 981.2,381.4 980.2,381.4 979.2,381.5 978.2,381.4 977.2,381.4 976.2,381.4 975.2,381.4 974.2,381.4 973.2,381.3 972.2,381.4 971.2,381.2 970.2,381.2 969.2,381.4 968.2,381.4 967.2,381.5 966.2,381.4 965.2,381.3 964.2,381.4 963.2,381.3 962.2,381.3 961.2,381.3 960.2,381.2 959.2,381.2 958.2,381.4 957.2,381.3 956.2,381.3 955.2,381.3 954.2,381.5 953.2,381.3 952.2,381.5 951.2,381.5 950.2,381.5 949.2,381.5 948.2,381.4 947.2,381.4 946.2,381.5 945.2,381.2 944.2,381.5 943.2,381.4 942.2,381.5 941.2,381.3 940.2,381.2 939.2,381.3 938.2,381.5 937.2,381.3 936.2,381.4 935.2,381.4 934.2,381.2 933.2,381.5 932.2,381.2 931.2,381.3 930.2,381.2 929.2,381.5 928.2,381.5 927.2,381.4 926.2,381.3 925.2,381.4 924.2,381.5 923.2,381.5 922.2,381.3 921.2,381.2 920.2,381.2 919.2,381.2 918.2,381.2 917.2,381.5 916.2,381.4 915.2,381.4 914.2,381.5 913.2,381.2 912.2,381.3 911.2,381.4 910.2,381.5 909.2,381.2 908.2,381.3 907.2,381.3 906.2,381.4 905.2,381.4 904.2,381.3 903.2,381.2 902.2,381.4 901.2,381.3 900.2,381.3 899.2,381.4 898.2,381.4 897.2,381.3 896.2,381.2 895.2,381.2 894.2,381.3 893.2,381.2 892.2,381.3 891.2,381.3 890.2,381.2 889.2,381.3 888.2,381.5 887.2,381.2 886.2,381.5 885.2,381.5 884.2,381.4 883.2,381.4 882.2,381.4 881.2,381.3 880.2,381.2 879.2,381.3 878.2,381.4 877.2,381.5 876.2,381.5 875.2,381.3 874.2,381.4 873.2,381.2 872.2,381.4 871.2,381.5 870.2,381.4 869.2,381.4 868.2,381.2 867.2,381.3 866.2,381.4 865.2,381.2 864.2,381.5 863.2,381.3 862.2,381.3 861.2,381.5 860.2,381.5 859.2,381.3 858.2,381.4 857.2,381.4 856.2,381.4 855.2,381.3 854.2,381.4 853.2,381.5 852.2,381.4 851.2,381.4 850.2,381.3 849.2,381.4 848.2,381.3 847.2,381.2 846.2,381.3 845.2,381.4 844.2,381.3 843.2,381.2 842.2,381.2 841.2,381.4 840.2,381.4 839.2,381.2 838.2,381.4 837.2,381.3 836.2,381.2 835.2,381.2 834.2,381.3 833.2,381.4 832.2,381.5 831.2,381.4 830.2,381.4 829.2,381.5 828.2,381.2 827.2,381.4 826.2,381.4 825.2,381.3 824.2,381.4 823.2,381.3 822.2,381.3 821.2,381.5 820.2,381.2 819.2,381.4 818.2,381.4 817.2,381.3 816.2,381.3 815.2,381.4 814.2,381.4 813.2,381.3 812.2,381.3 811.2,381.4 810.2,381.3 809.2,381.2 808.2,381.3 807.2,381.2 806.2,381.4 805.2,381.2 804.2,381.4 803.2,381.5 802.2,381.3 801.2,381.4 800.2,381.2 799.2,381.4 798.2,381.4 797.2,381.3 796.2,381.3 795.2,381.3 794.2,381.4 793.2,381.2 792.2,381.4 791.2,381.3 790.2,381.5 789.2,381.3 788.2,381.5 787.2,381.5 786.2,381.4 785.2,381.5 784.2,381.4 783.2,381.5 782.2,381.3 781.2,381.2 780.2,381.4 779.2,381.4 778.2,381.3 777.2,381.4 776.2,381.4 775.2,381.4 774.2,381.4 773.2,381.3 772.2,381.4 771.2,381.3 770.2,381.2 769.2,381.4 768.2,381.5 767.2,381.2 766.2,381.4 765.2,381.4 764.2,381.2 763.2,381.4 762.2,381.3 761.2,381.2 760.2,381.3 759.2,381.3 758.2,381.3 757.2,381.5 756.2,381.3 755.2,381.4 754.2,381.3 753.2,381.5 752.2,381.4 751.2,381.4 750.2,381.2 749.2,381.5 748.2,381.5 747.2,381.5 746.2,381.2 745.2,381.4 744.2,381.3 743.2,381.3 742.2,381.3 741.2,381.4 740.2,381.4 739.2,381.3 738.2,381.3 737.2,381.3 736.2,381.4 735.2,381.4 734.2,381.4 733.2,381.4 732.2,381.3 731.2,381.2 730.2,381.4 729.2,381.4 728.2,381.4 727.2,381.3 726.2,381.4 725.2,381.5 724.2,381.2 723.2,381.3 722.2,381.2 721.2,381.3 720.2,381.3 719.2,381.4 718.2,381.5 717.2,381.4 716.2,381.4 715.2,381.4 714.2,381.4 713.2,381.4 712.2,381.4 711.2,381.3 710.2,381.4 709.2,381.5 708.2,381.4 707.2,381.4 706.2,381.5 705.2,381.4 704.2,381.4 703.2,381.4 702.2,381.5 701.2,381.3 700.2,381.4 699.2,381.4 698.2,381.3 697.2,381.3 696.2,381.5 695.2,381.4 694.2,381.2 693.2,381.3 692.2,381.3 691.2,381.5 690.2,381.4 689.2,381.5 688.2,381.3 687.2,381.3 686.2,381.3 685.2,381.4 684.2,381.4 683.2,381.5 682.2,381.3 681.2,381.4 680.2,381.4 679.2,381.4 678.2,381.3 677.2,381.3 676.2,381.4 675.2,381.3 674.2,381.3 673.2,381.5 672.2,381.5 671.2,381.5 670.2,381.5 669.2,381.4 668.2,381.5 667.2,381.5 666.2,381.4 665.2,381.6 664.2,381.3 663.2,381.4 662.2,381.3 661.2,381.3 660.2,381.6 659.2,381.5 658.2,381.5 657.2,381.5 656.2,381.3 655.2,381.4 654.2,381.4 653.2,381.5 652.2,381.4 651.2,381.5 650.2,381.5 649.2,381.5 648.2,381.3 647.2,381.6 646.2,381.6 645.2,381.5 644.2,381.4 643.2,381.6 642.2,381.6 641.2,381.5 640.2,381.5 639.2,381.6 638.2,381.6 637.2,381.4 636.2,381.5 635.2,381.6 634.2,381.5 633.2,381.5 632.2,381.5 631.2,381.7 630.2,381.4 629.2,381.6 628.2,381.7 627.2,381.6 626.2,381.7 625.2,381.5 624.2,381.6 623.2,381.5 622.2,381.5 621.2,381.7 620.2,381.7 619.2,381.7 618.2,381.7 617.2,381.5 616.2,381.5 615.2,381.6 614.2,381.5 613.2,381.6 612.2,381.5 611.2,381.6 610.2,381.7 609.2,381.7 608.2,381.6 607.2,381.7 606.2,381.7 605.2,381.7 604.2,381.7 603.2,381.6 602.2,381.6 601.2,381.6 600.2,381.7 599.2,381.6 598.2,381.7 597.2,381.6 596.2,381.8 595.2,381.6 594.2,381.7 593.2,381.8 592.2,381.9 591.2,381.8 590.2,381.8 589.2,381.7 588.2,381.8 587.2,381.8 586.2,381.7 585.2,381.8 584.2,381.9 583.2,381.8 582.2,381.9 581.2,381.8 580.2,381.9 579.2,382 578.2,381.9 577.2,381.8 576.2,381.9 575.2,381.9 574.2,382.1 573.2,381.9 572.2,382.1 571.2,381.9 570.2,382.2 569.2,382.2 568.2,381.9 567.2,382.1 566.2,382 565.2,382.2 564.2,382 563.2,382.1 562.2,382.1 561.2,382.1 560.2,382.1 559.2,382.3 558.2,382.3 557.2,382.4 556.2,382.3 555.2,382.3 554.2,382.4 553.2,382.2 552.2,382.3 551.2,382.3 550.2,382.4 549.2,382.5 548.2,382.6 547.2,382.4 546.2,382.7 545.2,382.6 544.2,382.5 543.2,382.7 542.2,382.6 541.2,382.6 540.2,382.8 539.2,382.9 538.2,382.7 537.2,382.7 536.2,382.9 535.2,382.8 534.2,383 533.2,383 532.2,383.1 531.2,382.9 530.2,382.9 529.2,383.1 528.2,383.1 527.2,383.2 526.2,383 525.2,383.1 524.2,383.2 523.2,383.4 522.2,383.2 521.2,383.3 520.2,383.5 519.2,383.5 518.2,383.6 517.2,383.7 516.2,383.7 515.2,383.7 514.2,383.7 513.2,383.6 512.2,383.9 511.2,383.8 510.2,384 509.2,384.1 508.2,384.2 507.2,384.2 506.2,384.3 505.2,384.4 504.2,384.3 503.2,384.4 502.2,384.5 501.2,384.4 500.2,384.5 499.2,384.7 498.2,384.6 497.2,384.9 496.2,384.8 495.2,384.9 494.2,385 493.2,385.1 492.2,385.1 491.2,385.3 490.2,385.3 489.2,385.3 488.2,385.5 487.2,385.5 486.2,385.7 485.2,385.9 484.2,385.8 483.2,386.2 482.2,386.2 481.2,386.3 480.2,386.4 479.2,386.5 478.2,386.5Z" fill="#c8c800"/>
<path d="M17,66.7 18,66.7 19,66.7 20,66.7 21,66.7 22,66.7 23,66.7 24,66.7 25,66.7 26,66.7 27,66.7 28,66.7 29,66.7 30,66.7 31,66.7 32,66.7 33,66.7 34,66.7 35,66.7 36,66.7 37,66.7 38,66.7 39,66.7 40,66.7 41,66.7 42,66.7 43,66.7 44,66.7 45,66.7 46,66.7 47,66.7 48,66.7 49,66.7 50,66.7 51,66.7 52,66.7 53,66.7 54,66.7 55,66.7 56,66.7 57,66.7 58,66.7 59,66.7 60,66.7 61,66.7 62,66.7 63,66.7 64,66.7 65,66.7 66,66.7 67,66.7 68,66.7 69,66.7 70,66.7 71,66.7 72,66.7 73,66.7 74,66.7 75,66.7 76,66.7 77,66.7 78,66.7 79,66.7 80,66.7 81,66.7 82,66.7 83,66.7 84,66.7 85,66.7 86,66.7 87,66.7 88,66.7 89,66.7 90,66.7 91,66.7 92,66.7 93,66.7 94,66.7 95,66.7 96,66.7 97,66.7 98,66.7 99,66.7 100,66.7 101,66.7 102,66.7 103,66.7 104,66.7 105,66.7 106,66.7 107,66.7 108,66.7 109,66.7 110,66.7 111,66.7 112,66.7 113,66.7 114,66.7 115,66.7 116,66.7 117,66.7 118,66.7 119,66.7 120,66.7 121,66.7 122,66.7 123,66.7 124,66.7 125,66.7 126,66.7 127,66.7 128,66.7 129,66.7 130,66.7 131,66.7 132,66.7 133,66.7 134,66.7 135,66.7 136,66.7 137,66.7 138,66.7 139,66.7 140,66.7 141,66.7 142,66.7 143,66.7 144,66.7 145,66.7 146,66.7 147,66.7 148,66.7 149,66.7 150,66.7 151,66.7 152,66.7 153,66.7 154,66.7 155,66.7 156,66.7 157,66.7 158,66.7 159,66.7 160,66.7 161,66.7 162,66.7 163,66.7 164,66.7 165,66.7 166,66 167,65.8 168,66.1 169,66.4 170,66.8 171,67.3 172,67.8 173,68.4 174,69.1 175,69.7 176,70.4 177,71 178,71.6 179,72.1 180,72.7 181,73.3 182,73.8 183,74.4 184,74.9 185,75.5 186,76 187,76.5 188,77.1 189,77.6 190,78.2 191,78.7 192,79.2 193,79.8 194,80.3 195,80.8 196,81.4 197,81.9 198,82.5 199,83 200,83.5 201,84.1 202,84.6 203,85.1 204,85.7 205,86.2 206,86.7 207,87.3 208,87.8 209,88.3 210,88.9 211,89.4 212,90 213,90.5 214,91 215,91.6 216,92.1 217,92.7 218,93.3 219,93.8 220,94.4 221,94.9 222,95.5 223,96.1 224,96.6 225,97.2 226,97.8 227,98.3 228,98.9 229,99.5 230,100.1 231,100.7 232,101.2 233,101.8 234,102.4 235,103 236,103.6 237,104.2 238,104.8 239,105.4 240,106 241,106.6 242,107.2 243,107.8 244,108.4 245,109 246,109.6 247,110.2 248,110.8 249,111.4 250,112 251,112.6 252,113.3 253,113.9 254,114.5 255,115.1 256,115.7 257,116.4 258,117 259,117.6 260,118.2 261,118.8 262,119.5 263,120.1 264,120.7 265,121.3 266,122 267,122.6 268,123.2 269,123.8 270,124.5 271,125.1 272,125.8 273,126.4 274,127 275,127.7 276,128.3 277,129 278,129.7 279,130.3 280,131 281,131.7 282,132.3 283,133 284,133.7 285,134.4 286,135.1 287,135.8 288,136.4 289,137.1 290,137.8 291,138.5 292,139.2 293,139.9 294,140.6 295,141.3 296,142 297,142.7 298,143.4 299,144.2 300,144.9 301,145.6 302,146.3 303,147 304,147.7 305,148.4 306,149.1 307,149.9 308,150.6 309,151.3 310,152 311,152.7 312,153.4 313,154.1 314,154.9 315,155.6 316,156.3 317,157 318,157.7 319,158.4 320,159.1 321,159.9 322,160.6 323,161.3 324,162 325,162.7 326,163.4 327,164.2 328,164.9 329,165.6 330,166.3 331,167 332,167.8 333,168.5 334,169.2 335,169.9 336,170.7 337,171.4 338,172.1 339,172.9 340,173.6 341,174.3 342,175.1 343,175.8 344,176.5 345,177.3 346,178 347,178.8 348,179.5 349,180.3 350,181 351,181.7 352,182.5 353,183.2 354,184 355,184.8 356,185.5 357,186.3 358,187 359,187.8 360,188.5 361,189.3 362,190 363,190.8 364,191.6 365,192.3 366,193.1 367,193.8 368,194.6 369,195.4 370,196.1 371,196.9 372,197.7 373,198.4 374,199.2 375,199.9 376,200.7 377,201.4 378,202.2 379,203 380,203.8 381,204.6 382,205.4 383,206.2 384,207.1 385,207.9 386,208.8 387,209.6 388,210.5 389,211.3 390,212.2 391,213.1 392,214 393,214.9 394,215.8 395,216.7 396,217.7 397,218.6 398,219.6 399,220.6 400,221.6 401,222.6 402,223.6 403,224.6 404,225.7 405,226.7 406,227.8 407,228.9 408,230 409,231.1 410,232.1 411,233.2 412,234.3 413,235.4 414,236.5 415,237.6 416,238.7 417,239.8 418,240.9 419,242 420,243.1 421,244.1 422,245.2 423,246.4 424,247.5 425,248.7 426,249.8 427,251 428,252.2 429,253.4 430,254.6 431,255.8 432,257 433,258.3 434,259.6 435,260.9 436,262.2 437,263.5 438,264.9 439,266.3 440,267.7 441,269.2 442,270.6 443,272.1 444,273.7 445,275.2 446,276.8 447,278.4 448,280 449,281.6 450,283.3 451,285 452,286.7 453,288.5 454,290.2 455,292 456,293.8 457,295.7 458,297.5 459,299.4 460,301.3 461,303.2 462,305.2 463,307.3 464,309.4 465,311.7 466,314.1 467,316.6 468,319.2 469,321.9 470,324.7 471,327.6 472,330.4 473,333.3 474,336.6 475,340.6 476,346.4 477,353.2 478,362.9 478.2,366.6 478.2,387.6 478,387.6 477,372.9 476,363.1 475,356.2 474,350.4 473,346.3 472,343 471,340.1 470,337.2 469,334.4 468,331.6 467,328.9 466,326.2 465,323.7 464,321.3 463,319 462,316.8 461,314.7 460,312.7 459,310.8 458,308.9 457,307 456,305.2 455,303.3 454,301.5 453,299.7 452,297.9 451,296.2 450,294.4 449,292.8 448,291.1 447,289.4 446,287.8 445,286.2 444,284.6 443,283.1 442,281.5 441,280 440,278.5 439,277.1 438,275.6 437,274.2 436,272.9 435,271.5 434,270.2 433,268.9 432,267.6 431,266.3 430,265.1 429,263.9 428,262.7 427,261.5 426,260.3 425,259.1 424,257.9 423,256.7 422,255.6 421,254.5 420,253.4 419,252.3 418,251.2 417,250.1 416,249 415,247.9 414,246.8 413,245.7 412,244.6 411,243.5 410,242.5 409,241.4 408,240.3 407,239.2 406,238.1 405,237 404,235.9 403,234.9 402,233.8 401,232.8 400,231.7 399,230.7 398,229.7 397,228.7 396,227.8 395,226.8 394,225.9 393,224.9 392,224 391,223.1 390,222.2 389,221.3 388,220.4 387,219.5 386,218.7 385,217.8 384,217 383,216.1 382,215.3 381,214.4 380,213.6 379,212.8 378,212 377,211.2 376,210.4 375,209.6 374,208.9 373,208.1 372,207.4 371,206.6 370,205.9 369,205.1 368,204.3 367,203.6 366,202.8 365,202.1 364,201.3 363,200.5 362,199.8 361,199 360,198.2 359,197.5 358,196.7 357,196 356,195.2 355,194.5 354,193.7 353,193 352,192.2 351,191.4 350,190.7 349,189.9 348,189.2 347,188.5 346,187.7 345,187 344,186.2 343,185.5 342,184.7 341,184 340,183.3 339,182.5 338,181.8 337,181.1 336,180.3 335,179.6 334,178.9 333,178.1 332,177.4 331,176.7 330,176 329,175.2 328,174.5 327,173.8 326,173.1 325,172.4 324,171.6 323,170.9 322,170.2 321,169.5 320,168.8 319,168.1 318,167.3 317,166.6 316,165.9 315,165.2 314,164.5 313,163.8 312,163.1 311,162.3 310,161.6 309,160.9 308,160.2 307,159.5 306,158.8 305,158.1 304,157.3 303,156.6 302,155.9 301,155.2 300,154.5 299,153.8 298,153.1 297,152.4 296,151.6 295,150.9 294,150.2 293,149.5 292,148.8 291,148.1 290,147.4 289,146.7 288,146 287,145.3 286,144.6 285,144 284,143.3 283,142.6 282,141.9 281,141.2 280,140.5 279,139.9 278,139.2 277,138.5 276,137.9 275,137.2 274,136.5 273,135.9 272,135.2 271,134.6 270,133.9 269,133.3 268,132.7 267,132 266,131.4 265,130.8 264,130.1 263,129.5 262,128.9 261,128.3 260,127.6 259,127 258,126.4 257,125.8 256,125.2 255,124.5 254,123.9 253,123.3 252,122.7 251,122.1 250,121.4 249,120.8 248,120.2 247,119.6 246,119 245,118.4 244,117.8 243,117.2 242,116.5 241,115.9 240,115.3 239,114.7 238,114.1 237,113.5 236,112.9 235,112.3 234,111.8 233,111.2 232,110.6 231,110 230,109.4 229,108.8 228,108.2 227,107.7 226,107.1 225,106.5 224,105.9 223,105.4 222,104.8 221,104.2 220,103.7 219,103.1 218,102.5 217,102 216,101.4 215,100.9 214,100.3 213,99.7 212,99.2 211,98.7 210,98.1 209,97.6 208,97 207,96.5 206,96 205,95.4 204,94.9 203,94.4 202,93.8 201,93.3 200,92.7 199,92.2 198,91.7 197,91.1 196,90.6 195,90.1 194,89.5 193,89 192,88.4 191,87.9 190,87.4 189,86.8 188,86.3 187,85.8 186,85.2 185,84.7 184,84.1 183,83.6 182,83.1 181,82.5 180,82 179,81.4 178,80.9 177,80.3 176,79.7 175,79.2 174,78.6 173,77.9 172,77.2 171,76.6 170,76 169,75.4 168,74.9 167,74.5 166,73.8 165,72.9 164,72.9 163,72.9 162,72.9 161,72.9 160,72.9 159,72.9 158,72.9 157,72.9 156,72.9 155,72.9 154,72.9 153,72.9 152,72.9 151,72.9 150,72.9 149,72.9 148,72.9 147,72.9 146,72.9 145,72.9 144,72.9 143,72.9 142,72.9 141,72.9 140,72.9 139,72.9 138,72.9 137,72.9 136,72.9 135,72.9 134,72.9 133,72.9 132,72.9 131,72.9 130,72.9 129,72.9 128,72.9 127,72.9 126,72.9 125,72.9 124,72.9 123,72.9 122,72.9 121,72.9 120,72.9 119,72.9 118,72.9 117,72.9 116,72.9 115,72.9 114,72.9 113,72.9 112,72.9 111,72.9 110,72.9 109,72.9 108,72.9 107,72.9 106,72.9 105,72.9 104,72.9 103,72.9 102,72.9 101,72.9 100,72.9 99,72.9 98,72.9 97,72.9 96,72.9 95,72.9 94,72.9 93,72.9 92,72.9 91,72.9 90,72.9 89,72.9 88,72.9 87,72.9 86,72.9 85,72.9 84,72.9 83,72.9 82,72.9 81,72.9 80,72.9 79,72.9 78,72.9 77,72.9 76,72.9 75,72.9 74,72.9 73,72.9 72,72.9 71,72.9 70,72.9 69,72.9 68,72.9 67,72.9 66,72.9 65,72.9 64,72.9 63,72.9 62,72.9 61,72.9 60,72.9 59,72.9 58,72.9 57,72.9 56,72.9 55,72.9 54,72.9 53,72.9 52,72.9 51,72.9 50,72.9 49,72.9 48,72.9 47,72.9 46,72.9 45,72.9 44,72.9 43,72.9 42,72.9 41,72.9 40,72.9 39,72.9 38,72.9 37,72.9 36,72.9 35,72.9 34,72.9 33,72.9 32,72.9 31,72.9 30,72.9 29,72.9 28,72.9 27,72.9 26,72.9 25,72.9 24,72.9 23,72.9 22,72.9 21,72.9 20,72.9 19,72.9 18,72.9 17,72.9ZM478.2,378.9 479.2,378.8 480.2,378.8 481.2,378.7 482.2,378.6 483.2,378.5 484.2,378.4 485.2,378.3 486.2,378.2 487.2,378.2 488.2,378.1 489.2,378 490.2,377.9 491.2,377.9 492.2,377.8 493.2,377.7 494.2,377.7 495.2,377.6 496.2,377.5 497.2,377.5 498.2,377.4 499.2,377.4 500.2,377.3 501.2,377.2 502.2,377.2 503.2,377.1 504.2,377.1 505.2,377 506.2,377 507.2,376.9 508.2,376.9 509.2,376.8 510.2,376.8 511.2,376.7 512.2,376.7 513.2,376.7 514.2,376.6 515.2,376.6 516.2,376.5 517.2,376.5 518.2,376.5 519.2,376.4 520.2,376.4 521.2,376.4 522.2,376.3 523.2,376.3 524.2,376.3 525.2,376.2 526.2,376.2 527.2,376.2 528.2,376.1 529.2,376.1 530.2,376.1 531.2,376 532.2,376 533.2,376 534.2,376 535.2,375.9 536.2,375.9 537.2,375.9 538.2,375.9 539.2,375.8 540.2,375.8 541.2,375.8 542.2,375.8 543.2,375.7 544.2,375.7 545.2,375.7 546.2,375.7 547.2,375.7 548.2,375.6 549.2,375.6 550.2,375.6 551.2,375.6 552.2,375.6 553.2,375.6 554.2,375.5 555.2,375.5 556.2,375.5 557.2,375.5 558.2,375.5 559.2,375.5 560.2,375.4 561.2,375.4 562.2,375.4 563.2,375.4 564.2,375.4 565.2,375.4 566.2,375.4 567.2,375.4 568.2,375.3 569.2,375.3 570.2,375.3 571.2,375.3 572.2,375.3 573.2,375.3 574.2,375.3 575.2,375.3 576.2,375.3 577.2,375.2 578.2,375.2 579.2,375.2 580.2,375.2 581.2,375.2 582.2,375.2 583.2,375.2 584.2,375.2 585.2,375.2 586.2,375.2 587.2,375.2 588.2,375.1 589.2,375.1 590.2,375.1 591.2,375.1 592.2,375.1 593.2,375.1 594.2,375.1 595.2,375.1 596.2,375.1 597.2,375.1 598.2,375.1 599.2,375.1 600.2,375.1 601.2,375.1 602.2,375.1 603.2,375 604.2,375 605.2,375 606.2,375 607.2,375 608.2,375 609.2,375 610.2,375 611.2,375 612.2,375 613.2,375 614.2,375 615.2,375 616.2,375 617.2,375 618.2,375 619.2,375 620.2,375 621.2,375 622.2,375 623.2,375 624.2,375 625.2,375 626.2,374.9 627.2,374.9 628.2,374.9 629.2,374.9 630.2,374.9 631.2,374.9 632.2,374.9 633.2,374.9 634.2,374.9 635.2,374.9 636.2,374.9 637.2,374.9 638.2,374.9 639.2,374.9 640.2,374.9 641.2,374.9 642.2,374.9 643.2,374.9 644.2,374.9 645.2,374.9 646.2,374.9 647.2,374.9 648.2,374.9 649.2,374.9 650.2,374.9 651.2,374.9 652.2,374.9 653.2,374.9 654.2,374.9 655.2,374.9 656.2,374.9 657.2,374.9 658.2,374.9 659.2,374.9 660.2,374.9 661.2,374.9 662.2,374.9 663.2,374.9 664.2,374.9 665.2,374.9 666.2,374.9 667.2,374.9 668.2,374.9 669.2,374.9 670.2,374.9 671.2,374.9 672.2,374.9 673.2,374.9 674.2,374.9 675.2,374.8 676.2,374.8 677.2,374.8 678.2,374.8 679.2,374.8 680.2,374.8 681.2,374.8 682.2,374.8 683.2,374.8 684.2,374.8 685.2,374.8 686.2,374.8 687.2,374.8 688.2,374.8 689.2,374.8 690.2,374.8 691.2,374.8 692.2,374.8 693.2,374.8 694.2,374.8 695.2,374.8 696.2,374.8 697.2,374.8 698.2,374.8 699.2,374.8 700.2,374.8 701.2,374.8 702.2,374.8 703.2,374.8 704.2,374.8 705.2,374.8 706.2,374.8 707.2,374.8 708.2,374.8 709.2,374.8 710.2,374.8 711.2,374.8 712.2,374.8 713.2,374.8 714.2,374.8 715.2,374.8 716.2,374.8 717.2,374.8 718.2,374.8 719.2,374.8 720.2,374.8 721.2,374.8 722.2,374.8 723.2,374.8 724.2,374.8 725.2,374.8 726.2,374.8 727.2,374.8 728.2,374.8 729.2,374.8 730.2,374.8 731.2,374.8 732.2,374.8 733.2,374.8 734.2,374.8 735.2,374.8 736.2,374.8 737.2,374.8 738.2,374.8 739.2,374.8 740.2,374.8 741.2,374.8 742.2,374.8 743.2,374.8 744.2,374.8 745.2,374.8 746.2,374.8 747.2,374.8 748.2,374.8 749.2,374.8 750.2,374.8 751.2,374.8 752.2,374.8 753.2,374.8 754.2,374.8 755.2,374.8 756.2,374.8 757.2,374.8 758.2,374.8 759.2,374.8 760.2,374.8 761.2,374.8 762.2,374.8 763.2,374.8 764.2,374.8 765.2,374.8 766.2,374.8 767.2,374.8 768.2,374.8 769.2,374.8 770.2,374.8 771.2,374.8 772.2,374.8 773.2,374.8 774.2,374.8 775.2,374.8 776.2,374.8 777.2,374.8 778.2,374.8 779.2,374.8 780.2,374.8 781.2,374.8 782.2,374.8 783.2,374.8 784.2,374.8 785.2,374.8 786.2,374.8 787.2,374.8 788.2,374.8 789.2,374.8 790.2,374.8 791.2,374.8 792.2,374.8 793.2,374.8 794.2,374.8 795.2,374.8 796.2,374.8 797.2,374.8 798.2,374.8 799.2,374.8 800.2,374.8 801.2,374.8 802.2,374.8 803.2,374.8 804.2,374.8 805.2,374.8 806.2,374.8 807.2,374.8 808.2,374.8 809.2,374.8 810.2,374.8 811.2,374.8 812.2,374.8 813.2,374.8 814.2,374.8 815.2,374.8 816.2,374.8 817.2,374.8 818.2,374.8 819.2,374.8 820.2,374.8 821.2,374.8 822.2,374.8 823.2,374.8 824.2,374.8 825.2,374.8 826.2,374.8 827.2,374.8 828.2,374.8 829.2,374.8 830.2,374.8 831.2,374.8 832.2,374.8 833.2,374.8 834.2,374.8 835.2,374.8 836.2,374.8 837.2,374.8 838.2,374.8 839.2,374.8 840.2,374.8 841.2,374.8 842.2,374.8 843.2,374.8 844.2,374.8 845.2,374.8 846.2,374.8 847.2,374.8 848.2,374.8 849.2,374.8 850.2,374.8 851.2,374.8 852.2,374.8 853.2,374.8 854.2,374.8 855.2,374.8 856.2,374.8 857.2,374.8 858.2,374.8 859.2,374.8 860.2,374.8 861.2,374.8 862.2,374.8 863.2,374.8 864.2,374.8 865.2,374.8 866.2,374.8 867.2,374.8 868.2,374.8 869.2,374.8 870.2,374.8 871.2,374.8 872.2,374.8 873.2,374.8 874.2,374.8 875.2,374.8 876.2,374.8 877.2,374.8 878.2,374.8 879.2,374.8 880.2,374.8 881.2,374.8 882.2,374.8 883.2,374.8 884.2,374.8 885.2,374.8 886.2,374.8 887.2,374.8 888.2,374.8 889.2,374.8 890.2,374.8 891.2,374.8 892.2,374.8 893.2,374.8 894.2,374.8 895.2,374.8 896.2,374.8 897.2,374.8 898.2,374.8 899.2,374.8 900.2,374.8 901.2,374.8 902.2,374.8 903.2,374.8 904.2,374.8 905.2,374.8 906.2,374.8 907.2,374.8 908.2,374.8 909.2,374.8 910.2,374.8 911.2,374.8 912.2,374.8 913.2,374.8 914.2,374.8 915.2,374.8 916.2,374.8 917.2,374.8 918.2,374.8 919.2,374.8 920.2,374.8 921.2,374.8 922.2,374.8 923.2,374.8 924.2,374.8 925.2,374.8 926.2,374.8 927.2,374.8 928.2,374.8 929.2,374.8 930.2,374.8 931.2,374.8 932.2,374.8 933.2,374.8 934.2,374.8 935.2,374.8 936.2,374.8 937.2,374.8 938.2,374.8 939.2,374.8 940.2,374.8 941.2,374.8 942.2,374.8 943.2,374.8 944.2,374.8 945.2,374.8 946.2,374.8 947.2,374.8 948.2,374.8 949.2,374.8 950.2,374.8 951.2,374.8 952.2,374.8 953.2,374.8 954.2,374.8 955.2,374.8 956.2,374.8 957.2,374.8 958.2,374.8 959.2,374.8 960.2,374.8 961.2,374.8 962.2,374.8 963.2,374.8 964.2,374.8 965.2,374.8 966.2,374.8 967.2,374.8 968.2,374.8 969.2,374.8 970.2,374.8 971.2,374.8 972.2,374.8 973.2,374.8 974.2,374.8 975.2,374.8 976.2,374.8 977.2,374.8 978.2,374.8 979.2,374.8 980.2,374.8 981.2,374.8 982.2,374.8 983.2,374.8 984.2,374.8 985.2,374.8 986.2,374.8 987.2,374.8 988.2,374.8 989.2,374.8 990.2,374.8 991.2,374.8 992.2,374.8 993.2,374.8 994.2,374.8 995.2,374.8 996.2,374.8 997.2,374.8 998.2,374.8 999.2,374.8 1000.2,374.8 1001.2,374.8 1002.2,374.8 1003.2,374.8 1004.2,374.8 1005.2,374.8 1006.2,374.8 1007.2,374.8 1008.2,374.8 1009.2,374.8 1010.2,374.8 1011.2,374.8 1012.2,374.8 1013.2,374.8 1014.2,374.8 1015.2,374.8 1016,374.8 1016,381 1015.2,381 1014.2,381 1013.2,381 1012.2,381 1011.2,381 1010.2,381 1009.2,381 1008.2,381 1007.2,381 1006.2,381 1005.2,381 1004.2,381 1003.2,381 1002.2,381 1001.2,381 1000.2,381 999.2,381 998.2,381 997.2,381 996.2,381 995.2,381 994.2,381 993.2,381 992.2,381 991.2,381 990.2,381 989.2,381 988.2,381 987.2,381 986.2,381 985.2,381 984.2,381 983.2,381 982.2,381 981.2,381 980.2,381 979.2,381 978.2,381 977.2,381 976.2,381 975.2,381 974.2,381 973.2,381 972.2,381 971.2,381 970.2,381 969.2,381 968.2,381 967.2,381 966.2,381 965.2,381 964.2,381 963.2,381 962.2,381 961.2,381 960.2,381 959.2,381 958.2,381 957.2,381 956.2,381 955.2,381 954.2,381 953.2,381 952.2,381 951.2,381 950.2,381 949.2,381 948.2,381 947.2,381 946.2,381 945.2,381 944.2,381 943.2,381 942.2,381 941.2,381 940.2,381 939.2,381 938.2,381 937.2,381 936.2,381 935.2,381 934.2,381 933.2,381 932.2,381 931.2,381 930.2,381 929.2,381 928.2,381 927.2,381 926.2,381 925.2,381 924.2,381 923.2,381 922.2,381 921.2,381 920.2,381 919.2,381 918.2,381 917.2,381 916.2,381 915.2,381 914.2,381 913.2,381 912.2,381 911.2,381 910.2,381 909.2,381 908.2,381 907.2,381 906.2,381 905.2,381 904.2,381 903.2,381 902.2,381 901.2,381 900.2,381 899.2,381 898.2,381 897.2,381 896.2,381 895.2,381 894.2,381 893.2,381 892.2,381 891.2,381 890.2,381 889.2,381 888.2,381 887.2,381 886.2,381 885.2,381 884.2,381 883.2,381 882.2,381 881.2,381 880.2,381 879.2,381 878.2,381 877.2,381 876.2,381 875.2,381 874.2,381 873.2,381 872.2,381 871.2,381 870.2,381 869.2,381 868.2,381 867.2,381 866.2,381 865.2,381 864.2,381 863.2,381 862.2,381 861.2,381 860.2,381 859.2,381 858.2,381 857.2,381 856.2,381 855.2,381 854.2,381 853.2,381 852.2,381 851.2,381 850.2,381 849.2,381 848.2,381 847.2,381 846.2,381 845.2,381 844.2,381 843.2,381 842.2,381 841.2,381 840.2,381 839.2,381 838.2,381 837.2,381 836.2,381 835.2,381 834.2,381 833.2,381 832.2,381 831.2,381 830.2,381 829.2,381 828.2,381 827.2,381 826.2,381 825.2,381 824.2,381 823.2,381 822.2,381 821.2,381 820.2,381 819.2,381 818.2,381 817.2,381 816.2,381 815.2,381 814.2,381 813.2,381 812.2,381 811.2,381 810.2,381 809.2,381 808.2,381 807.2,381 806.2,381 805.2,381 804.2,381 803.2,381 802.2,381 801.2,381 800.2,381 799.2,381 798.2,381 797.2,381 796.2,381 795.2,381 794.2,381 793.2,381 792.2,381 791.2,381 790.2,381 789.2,381 788.2,381 787.2,381 786.2,381 785.2,381 784.2,381 783.2,381 782.2,381 781.2,381 780.2,381 779.2,381 778.2,381 777.2,381 776.2,381 775.2,381 774.2,381 773.2,381 772.2,381 771.2,381 770.2,381 769.2,381 768.2,381 767.2,381 766.2,381 765.2,381 764.2,381 763.2,381 762.2,381 761.2,381 760.2,381 759.2,381 758.2,381 757.2,381 756.2,381 755.2,381 754.2,381 753.2,381 752.2,381 751.2,381 750.2,381 749.2,381 748.2,381 747.2,381 746.2,381 745.2,381 744.2,381 743.2,381 742.2,381 741.2,381 740.2,381 739.2,381 738.2,381 737.2,381 736.2,381 735.2,381 734.2,381 733.2,381 732.2,381 731.2,381 730.2,381 729.2,381 728.2,381 727.2,381 726.2,381 725.2,381 724.2,381 723.2,381 722.2,381 721.2,381 720.2,381 719.2,381 718.2,381 717.2,381 716.2,381 715.2,381 714.2,381 713.2,381 712.2,381 711.2,381 710.2,381 709.2,381 708.2,381 707.2,381 706.2,381 705.2,381 704.2,381 703.2,381 702.2,381 701.2,381 700.2,381 699.2,381 698.2,381 697.2,381 696.2,381 695.2,381 694.2,381 693.2,381 692.2,381 691.2,381 690.2,381 689.2,381.1 688.2,381.1 687.2,381.1 686.2,381.1 685.2,381.1 684.2,381.1 683.2,381.1 682.2,381.1 681.2,381.1 680.2,381.1 679.2,381.1 678.2,381.1 677.2,381.1 676.2,381.1 675.2,381.1 674.2,381.1 673.2,381.1 672.2,381.1 671.2,381.1 670.2,381.1 669.2,381.1 668.2,381.1 667.2,381.1 666.2,381.1 665.2,381.1 664.2,381.1 663.2,381.1 662.2,381.1 661.2,381.1 660.2,381.1 659.2,381.1 658.2,381.1 657.2,381.1 656.2,381.1 655.2,381.1 654.2,381.1 653.2,381.1 652.2,381.1 651.2,381.1 650.2,381.1 649.2,381.1 648.2,381.1 647.2,381.1 646.2,381.1 645.2,381.1 644.2,381.1 643.2,381.1 642.2,381.1 641.2,381.1 640.2,381.1 639.2,381.2 638.2,381.2 637.2,381.2 636.2,381.2 635.2,381.2 634.2,381.2 633.2,381.2 632.2,381.2 631.2,381.2 630.2,381.2 629.2,381.2 628.2,381.2 627.2,381.2 626.2,381.2 625.2,381.2 624.2,381.2 623.2,381.2 622.2,381.2 621.2,381.2 620.2,381.2 619.2,381.2 618.2,381.2 617.2,381.2 616.2,381.3 615.2,381.3 614.2,381.3 613.2,381.3 612.2,381.3 611.2,381.3 610.2,381.3 609.2,381.3 608.2,381.3 607.2,381.3 606.2,381.3 605.2,381.3 604.2,381.3 603.2,381.3 602.2,381.3 601.2,381.4 600.2,381.4 599.2,381.4 598.2,381.4 597.2,381.4 596.2,381.4 595.2,381.4 594.2,381.4 593.2,381.4 592.2,381.4 591.2,381.4 590.2,381.5 589.2,381.5 588.2,381.5 587.2,381.5 586.2,381.5 585.2,381.5 584.2,381.5 583.2,381.5 582.2,381.5 581.2,381.5 580.2,381.6 579.2,381.6 578.2,381.6 577.2,381.6 576.2,381.6 575.2,381.6 574.2,381.6 573.2,381.7 572.2,381.7 571.2,381.7 570.2,381.7 569.2,381.7 568.2,381.7 567.2,381.7 566.2,381.8 565.2,381.8 564.2,381.8 563.2,381.8 562.2,381.8 561.2,381.9 560.2,381.9 559.2,381.9 558.2,381.9 557.2,381.9 556.2,382 555.2,382 554.2,382 553.2,382 552.2,382 551.2,382.1 550.2,382.1 549.2,382.1 548.2,382.1 547.2,382.2 546.2,382.2 545.2,382.2 544.2,382.2 543.2,382.3 542.2,382.3 541.2,382.3 540.2,382.4 539.2,382.4 538.2,382.4 537.2,382.5 536.2,382.5 535.2,382.5 534.2,382.6 533.2,382.6 532.2,382.6 531.2,382.7 530.2,382.7 529.2,382.7 528.2,382.8 527.2,382.8 526.2,382.8 525.2,382.9 524.2,382.9 523.2,383 522.2,383 521.2,383.1 520.2,383.1 519.2,383.2 518.2,383.2 517.2,383.3 516.2,383.3 515.2,383.4 514.2,383.4 513.2,383.5 512.2,383.5 511.2,383.6 510.2,383.6 509.2,383.7 508.2,383.7 507.2,383.8 506.2,383.9 505.2,383.9 504.2,384 503.2,384.1 502.2,384.1 501.2,384.2 500.2,384.3 499.2,384.3 498.2,384.4 497.2,384.5 496.2,384.6 495.2,384.6 494.2,384.7 493.2,384.8 492.2,384.9 491.2,385 490.2,385.1 489.2,385.1 488.2,385.2 487.2,385.3 486.2,385.4 485.2,385.5 484.2,385.6 483.2,385.7 482.2,385.8 481.2,385.9 480.2,386 479.2,386.1 478.2,386.2Z" fill="#f8f800"/>
<path d="M476.6 352 L477.6 368 L478.4 386" stroke="#f0f000" stroke-width="1.5" fill="none"/>
</g>
<rect x="17" y="350.2" width="999" height="1.25" fill="#91886f"/>
<rect x="515.85" y="36" width="1.35" height="630" fill="#91886f"/>
<path d="M36.5 347.4v6.8M36.5 36v6M36.5 666v-6M56.5 347.4v6.8M56.5 36v6M56.5 666v-6M76.5 347.4v6.8M76.5 36v6M76.5 666v-6M96.5 347.4v6.8M96.5 36v6M96.5 666v-6M116.5 345.4v10.8M116.5 36v10M116.5 666v-10M136.5 347.4v6.8M136.5 36v6M136.5 666v-6M156.5 347.4v6.8M156.5 36v6M156.5 666v-6M176.5 347.4v6.8M176.5 36v6M176.5 666v-6M196.5 347.4v6.8M196.5 36v6M196.5 666v-6M216.5 345.4v10.8M216.5 36v10M216.5 666v-10M236.5 347.4v6.8M236.5 36v6M236.5 666v-6M256.5 347.4v6.8M256.5 36v6M256.5 666v-6M276.5 347.4v6.8M276.5 36v6M276.5 666v-6M296.5 347.4v6.8M296.5 36v6M296.5 666v-6M316.5 345.4v10.8M316.5 36v10M316.5 666v-10M336.5 347.4v6.8M336.5 36v6M336.5 666v-6M356.5 347.4v6.8M356.5 36v6M356.5 666v-6M376.5 347.4v6.8M376.5 36v6M376.5 666v-6M396.5 347.4v6.8M396.5 36v6M396.5 666v-6M416.5 345.4v10.8M416.5 36v10M416.5 666v-10M436.5 347.4v6.8M436.5 36v6M436.5 666v-6M456.5 347.4v6.8M456.5 36v6M456.5 666v-6M476.5 347.4v6.8M476.5 36v6M476.5 666v-6M496.5 347.4v6.8M496.5 36v6M496.5 666v-6M516.5 345.4v10.8M516.5 36v10M516.5 666v-10M536.5 347.4v6.8M536.5 36v6M536.5 666v-6M556.5 347.4v6.8M556.5 36v6M556.5 666v-6M576.5 347.4v6.8M576.5 36v6M576.5 666v-6M596.5 347.4v6.8M596.5 36v6M596.5 666v-6M616.5 345.4v10.8M616.5 36v10M616.5 666v-10M636.5 347.4v6.8M636.5 36v6M636.5 666v-6M656.5 347.4v6.8M656.5 36v6M656.5 666v-6M676.5 347.4v6.8M676.5 36v6M676.5 666v-6M696.5 347.4v6.8M696.5 36v6M696.5 666v-6M716.5 345.4v10.8M716.5 36v10M716.5 666v-10M736.5 347.4v6.8M736.5 36v6M736.5 666v-6M756.5 347.4v6.8M756.5 36v6M756.5 666v-6M776.5 347.4v6.8M776.5 36v6M776.5 666v-6M796.5 347.4v6.8M796.5 36v6M796.5 666v-6M816.5 345.4v10.8M816.5 36v10M816.5 666v-10M836.5 347.4v6.8M836.5 36v6M836.5 666v-6M856.5 347.4v6.8M856.5 36v6M856.5 666v-6M876.5 347.4v6.8M876.5 36v6M876.5 666v-6M896.5 347.4v6.8M896.5 36v6M896.5 666v-6M916.5 345.4v10.8M916.5 36v10M916.5 666v-10M936.5 347.4v6.8M936.5 36v6M936.5 666v-6M956.5 347.4v6.8M956.5 36v6M956.5 666v-6M976.5 347.4v6.8M976.5 36v6M976.5 666v-6M996.5 347.4v6.8M996.5 36v6M996.5 666v-6M513.1 48.8h6.8M17 48.8h5.6M1016 48.8h-5.6M513.1 61.4h6.8M17 61.4h5.6M1016 61.4h-5.6M513.1 74.0h6.8M17 74.0h5.6M1016 74.0h-5.6M513.1 86.6h6.8M17 86.6h5.6M1016 86.6h-5.6M511.1 99.2h10.8M17 99.2h9.8M1016 99.2h-9.8M513.1 111.8h6.8M17 111.8h5.6M1016 111.8h-5.6M513.1 124.4h6.8M17 124.4h5.6M1016 124.4h-5.6M513.1 137.0h6.8M17 137.0h5.6M1016 137.0h-5.6M513.1 149.6h6.8M17 149.6h5.6M1016 149.6h-5.6M511.1 162.2h10.8M17 162.2h9.8M1016 162.2h-9.8M513.1 174.8h6.8M17 174.8h5.6M1016 174.8h-5.6M513.1 187.4h6.8M17 187.4h5.6M1016 187.4h-5.6M513.1 200.0h6.8M17 200.0h5.6M1016 200.0h-5.6M513.1 212.6h6.8M17 212.6h5.6M1016 212.6h-5.6M511.1 225.2h10.8M17 225.2h9.8M1016 225.2h-9.8M513.1 237.8h6.8M17 237.8h5.6M1016 237.8h-5.6M513.1 250.4h6.8M17 250.4h5.6M1016 250.4h-5.6M513.1 263.0h6.8M17 263.0h5.6M1016 263.0h-5.6M513.1 275.6h6.8M17 275.6h5.6M1016 275.6h-5.6M511.1 288.2h10.8M17 288.2h9.8M1016 288.2h-9.8M513.1 300.8h6.8M17 300.8h5.6M1016 300.8h-5.6M513.1 313.4h6.8M17 313.4h5.6M1016 313.4h-5.6M513.1 326.0h6.8M17 326.0h5.6M1016 326.0h-5.6M513.1 338.6h6.8M17 338.6h5.6M1016 338.6h-5.6M511.1 351.2h10.8M17 351.2h9.8M1016 351.2h-9.8M513.1 363.8h6.8M17 363.8h5.6M1016 363.8h-5.6M513.1 376.4h6.8M17 376.4h5.6M1016 376.4h-5.6M513.1 389.0h6.8M17 389.0h5.6M1016 389.0h-5.6M513.1 401.6h6.8M17 401.6h5.6M1016 401.6h-5.6M511.1 414.2h10.8M17 414.2h9.8M1016 414.2h-9.8M513.1 426.8h6.8M17 426.8h5.6M1016 426.8h-5.6M513.1 439.4h6.8M17 439.4h5.6M1016 439.4h-5.6M513.1 452.0h6.8M17 452.0h5.6M1016 452.0h-5.6M513.1 464.6h6.8M17 464.6h5.6M1016 464.6h-5.6M511.1 477.2h10.8M17 477.2h9.8M1016 477.2h-9.8M513.1 489.8h6.8M17 489.8h5.6M1016 489.8h-5.6M513.1 502.4h6.8M17 502.4h5.6M1016 502.4h-5.6M513.1 515.0h6.8M17 515.0h5.6M1016 515.0h-5.6M513.1 527.6h6.8M17 527.6h5.6M1016 527.6h-5.6M511.1 540.2h10.8M17 540.2h9.8M1016 540.2h-9.8M513.1 552.8h6.8M17 552.8h5.6M1016 552.8h-5.6M513.1 565.4h6.8M17 565.4h5.6M1016 565.4h-5.6M513.1 578.0h6.8M17 578.0h5.6M1016 578.0h-5.6M513.1 590.6h6.8M17 590.6h5.6M1016 590.6h-5.6M511.1 603.2h10.8M17 603.2h9.8M1016 603.2h-9.8M513.1 615.8h6.8M17 615.8h5.6M1016 615.8h-5.6M513.1 628.4h6.8M17 628.4h5.6M1016 628.4h-5.6M513.1 641.0h6.8M17 641.0h5.6M1016 641.0h-5.6M513.1 653.6h6.8M17 653.6h5.6M1016 653.6h-5.6" stroke="#a09880" stroke-width="1" fill="none"/>
<path d="M36.0 98.7h1v1h-1zM56.0 98.7h1v1h-1zM76.0 98.7h1v1h-1zM96.0 98.7h1v1h-1zM116.0 98.7h1v1h-1zM136.0 98.7h1v1h-1zM156.0 98.7h1v1h-1zM176.0 98.7h1v1h-1zM196.0 98.7h1v1h-1zM216.0 98.7h1v1h-1zM236.0 98.7h1v1h-1zM256.0 98.7h1v1h-1zM276.0 98.7h1v1h-1zM296.0 98.7h1v1h-1zM316.0 98.7h1v1h-1zM336.0 98.7h1v1h-1zM356.0 98.7h1v1h-1zM376.0 98.7h1v1h-1zM396.0 98.7h1v1h-1zM416.0 98.7h1v1h-1zM436.0 98.7h1v1h-1zM456.0 98.7h1v1h-1zM476.0 98.7h1v1h-1zM496.0 98.7h1v1h-1zM516.0 98.7h1v1h-1zM536.0 98.7h1v1h-1zM556.0 98.7h1v1h-1zM576.0 98.7h1v1h-1zM596.0 98.7h1v1h-1zM616.0 98.7h1v1h-1zM636.0 98.7h1v1h-1zM656.0 98.7h1v1h-1zM676.0 98.7h1v1h-1zM696.0 98.7h1v1h-1zM716.0 98.7h1v1h-1zM736.0 98.7h1v1h-1zM756.0 98.7h1v1h-1zM776.0 98.7h1v1h-1zM796.0 98.7h1v1h-1zM816.0 98.7h1v1h-1zM836.0 98.7h1v1h-1zM856.0 98.7h1v1h-1zM876.0 98.7h1v1h-1zM896.0 98.7h1v1h-1zM916.0 98.7h1v1h-1zM936.0 98.7h1v1h-1zM956.0 98.7h1v1h-1zM976.0 98.7h1v1h-1zM996.0 98.7h1v1h-1zM36.0 161.7h1v1h-1zM56.0 161.7h1v1h-1zM76.0 161.7h1v1h-1zM96.0 161.7h1v1h-1zM116.0 161.7h1v1h-1zM136.0 161.7h1v1h-1zM156.0 161.7h1v1h-1zM176.0 161.7h1v1h-1zM196.0 161.7h1v1h-1zM216.0 161.7h1v1h-1zM236.0 161.7h1v1h-1zM256.0 161.7h1v1h-1zM276.0 161.7h1v1h-1zM296.0 161.7h1v1h-1zM316.0 161.7h1v1h-1zM336.0 161.7h1v1h-1zM356.0 161.7h1v1h-1zM376.0 161.7h1v1h-1zM396.0 161.7h1v1h-1zM416.0 161.7h1v1h-1zM436.0 161.7h1v1h-1zM456.0 161.7h1v1h-1zM476.0 161.7h1v1h-1zM496.0 161.7h1v1h-1zM516.0 161.7h1v1h-1zM536.0 161.7h1v1h-1zM556.0 161.7h1v1h-1zM576.0 161.7h1v1h-1zM596.0 161.7h1v1h-1zM616.0 161.7h1v1h-1zM636.0 161.7h1v1h-1zM656.0 161.7h1v1h-1zM676.0 161.7h1v1h-1zM696.0 161.7h1v1h-1zM716.0 161.7h1v1h-1zM736.0 161.7h1v1h-1zM756.0 161.7h1v1h-1zM776.0 161.7h1v1h-1zM796.0 161.7h1v1h-1zM816.0 161.7h1v1h-1zM836.0 161.7h1v1h-1zM856.0 161.7h1v1h-1zM876.0 161.7h1v1h-1zM896.0 161.7h1v1h-1zM916.0 161.7h1v1h-1zM936.0 161.7h1v1h-1zM956.0 161.7h1v1h-1zM976.0 161.7h1v1h-1zM996.0 161.7h1v1h-1zM36.0 224.7h1v1h-1zM56.0 224.7h1v1h-1zM76.0 224.7h1v1h-1zM96.0 224.7h1v1h-1zM116.0 224.7h1v1h-1zM136.0 224.7h1v1h-1zM156.0 224.7h1v1h-1zM176.0 224.7h1v1h-1zM196.0 224.7h1v1h-1zM216.0 224.7h1v1h-1zM236.0 224.7h1v1h-1zM256.0 224.7h1v1h-1zM276.0 224.7h1v1h-1zM296.0 224.7h1v1h-1zM316.0 224.7h1v1h-1zM336.0 224.7h1v1h-1zM356.0 224.7h1v1h-1zM376.0 224.7h1v1h-1zM396.0 224.7h1v1h-1zM416.0 224.7h1v1h-1zM436.0 224.7h1v1h-1zM456.0 224.7h1v1h-1zM476.0 224.7h1v1h-1zM496.0 224.7h1v1h-1zM516.0 224.7h1v1h-1zM536.0 224.7h1v1h-1zM556.0 224.7h1v1h-1zM576.0 224.7h1v1h-1zM596.0 224.7h1v1h-1zM616.0 224.7h1v1h-1zM636.0 224.7h1v1h-1zM656.0 224.7h1v1h-1zM676.0 224.7h1v1h-1zM696.0 224.7h1v1h-1zM716.0 224.7h1v1h-1zM736.0 224.7h1v1h-1zM756.0 224.7h1v1h-1zM776.0 224.7h1v1h-1zM796.0 224.7h1v1h-1zM816.0 224.7h1v1h-1zM836.0 224.7h1v1h-1zM856.0 224.7h1v1h-1zM876.0 224.7h1v1h-1zM896.0 224.7h1v1h-1zM916.0 224.7h1v1h-1zM936.0 224.7h1v1h-1zM956.0 224.7h1v1h-1zM976.0 224.7h1v1h-1zM996.0 224.7h1v1h-1zM36.0 287.7h1v1h-1zM56.0 287.7h1v1h-1zM76.0 287.7h1v1h-1zM96.0 287.7h1v1h-1zM116.0 287.7h1v1h-1zM136.0 287.7h1v1h-1zM156.0 287.7h1v1h-1zM176.0 287.7h1v1h-1zM196.0 287.7h1v1h-1zM216.0 287.7h1v1h-1zM236.0 287.7h1v1h-1zM256.0 287.7h1v1h-1zM276.0 287.7h1v1h-1zM296.0 287.7h1v1h-1zM316.0 287.7h1v1h-1zM336.0 287.7h1v1h-1zM356.0 287.7h1v1h-1zM376.0 287.7h1v1h-1zM396.0 287.7h1v1h-1zM416.0 287.7h1v1h-1zM436.0 287.7h1v1h-1zM456.0 287.7h1v1h-1zM476.0 287.7h1v1h-1zM496.0 287.7h1v1h-1zM516.0 287.7h1v1h-1zM536.0 287.7h1v1h-1zM556.0 287.7h1v1h-1zM576.0 287.7h1v1h-1zM596.0 287.7h1v1h-1zM616.0 287.7h1v1h-1zM636.0 287.7h1v1h-1zM656.0 287.7h1v1h-1zM676.0 287.7h1v1h-1zM696.0 287.7h1v1h-1zM716.0 287.7h1v1h-1zM736.0 287.7h1v1h-1zM756.0 287.7h1v1h-1zM776.0 287.7h1v1h-1zM796.0 287.7h1v1h-1zM816.0 287.7h1v1h-1zM836.0 287.7h1v1h-1zM856.0 287.7h1v1h-1zM876.0 287.7h1v1h-1zM896.0 287.7h1v1h-1zM916.0 287.7h1v1h-1zM936.0 287.7h1v1h-1zM956.0 287.7h1v1h-1zM976.0 287.7h1v1h-1zM996.0 287.7h1v1h-1zM36.0 413.7h1v1h-1zM56.0 413.7h1v1h-1zM76.0 413.7h1v1h-1zM96.0 413.7h1v1h-1zM116.0 413.7h1v1h-1zM136.0 413.7h1v1h-1zM156.0 413.7h1v1h-1zM176.0 413.7h1v1h-1zM196.0 413.7h1v1h-1zM216.0 413.7h1v1h-1zM236.0 413.7h1v1h-1zM256.0 413.7h1v1h-1zM276.0 413.7h1v1h-1zM296.0 413.7h1v1h-1zM316.0 413.7h1v1h-1zM336.0 413.7h1v1h-1zM356.0 413.7h1v1h-1zM376.0 413.7h1v1h-1zM396.0 413.7h1v1h-1zM416.0 413.7h1v1h-1zM436.0 413.7h1v1h-1zM456.0 413.7h1v1h-1zM476.0 413.7h1v1h-1zM496.0 413.7h1v1h-1zM516.0 413.7h1v1h-1zM536.0 413.7h1v1h-1zM556.0 413.7h1v1h-1zM576.0 413.7h1v1h-1zM596.0 413.7h1v1h-1zM616.0 413.7h1v1h-1zM636.0 413.7h1v1h-1zM656.0 413.7h1v1h-1zM676.0 413.7h1v1h-1zM696.0 413.7h1v1h-1zM716.0 413.7h1v1h-1zM736.0 413.7h1v1h-1zM756.0 413.7h1v1h-1zM776.0 413.7h1v1h-1zM796.0 413.7h1v1h-1zM816.0 413.7h1v1h-1zM836.0 413.7h1v1h-1zM856.0 413.7h1v1h-1zM876.0 413.7h1v1h-1zM896.0 413.7h1v1h-1zM916.0 413.7h1v1h-1zM936.0 413.7h1v1h-1zM956.0 413.7h1v1h-1zM976.0 413.7h1v1h-1zM996.0 413.7h1v1h-1zM36.0 476.7h1v1h-1zM56.0 476.7h1v1h-1zM76.0 476.7h1v1h-1zM96.0 476.7h1v1h-1zM116.0 476.7h1v1h-1zM136.0 476.7h1v1h-1zM156.0 476.7h1v1h-1zM176.0 476.7h1v1h-1zM196.0 476.7h1v1h-1zM216.0 476.7h1v1h-1zM236.0 476.7h1v1h-1zM256.0 476.7h1v1h-1zM276.0 476.7h1v1h-1zM296.0 476.7h1v1h-1zM316.0 476.7h1v1h-1zM336.0 476.7h1v1h-1zM356.0 476.7h1v1h-1zM376.0 476.7h1v1h-1zM396.0 476.7h1v1h-1zM416.0 476.7h1v1h-1zM436.0 476.7h1v1h-1zM456.0 476.7h1v1h-1zM476.0 476.7h1v1h-1zM496.0 476.7h1v1h-1zM516.0 476.7h1v1h-1zM536.0 476.7h1v1h-1zM556.0 476.7h1v1h-1zM576.0 476.7h1v1h-1zM596.0 476.7h1v1h-1zM616.0 476.7h1v1h-1zM636.0 476.7h1v1h-1zM656.0 476.7h1v1h-1zM676.0 476.7h1v1h-1zM696.0 476.7h1v1h-1zM716.0 476.7h1v1h-1zM736.0 476.7h1v1h-1zM756.0 476.7h1v1h-1zM776.0 476.7h1v1h-1zM796.0 476.7h1v1h-1zM816.0 476.7h1v1h-1zM836.0 476.7h1v1h-1zM856.0 476.7h1v1h-1zM876.0 476.7h1v1h-1zM896.0 476.7h1v1h-1zM916.0 476.7h1v1h-1zM936.0 476.7h1v1h-1zM956.0 476.7h1v1h-1zM976.0 476.7h1v1h-1zM996.0 476.7h1v1h-1zM36.0 539.7h1v1h-1zM56.0 539.7h1v1h-1zM76.0 539.7h1v1h-1zM96.0 539.7h1v1h-1zM116.0 539.7h1v1h-1zM136.0 539.7h1v1h-1zM156.0 539.7h1v1h-1zM176.0 539.7h1v1h-1zM196.0 539.7h1v1h-1zM216.0 539.7h1v1h-1zM236.0 539.7h1v1h-1zM256.0 539.7h1v1h-1zM276.0 539.7h1v1h-1zM296.0 539.7h1v1h-1zM316.0 539.7h1v1h-1zM336.0 539.7h1v1h-1zM356.0 539.7h1v1h-1zM376.0 539.7h1v1h-1zM396.0 539.7h1v1h-1zM416.0 539.7h1v1h-1zM436.0 539.7h1v1h-1zM456.0 539.7h1v1h-1zM476.0 539.7h1v1h-1zM496.0 539.7h1v1h-1zM516.0 539.7h1v1h-1zM536.0 539.7h1v1h-1zM556.0 539.7h1v1h-1zM576.0 539.7h1v1h-1zM596.0 539.7h1v1h-1zM616.0 539.7h1v1h-1zM636.0 539.7h1v1h-1zM656.0 539.7h1v1h-1zM676.0 539.7h1v1h-1zM696.0 539.7h1v1h-1zM716.0 539.7h1v1h-1zM736.0 539.7h1v1h-1zM756.0 539.7h1v1h-1zM776.0 539.7h1v1h-1zM796.0 539.7h1v1h-1zM816.0 539.7h1v1h-1zM836.0 539.7h1v1h-1zM856.0 539.7h1v1h-1zM876.0 539.7h1v1h-1zM896.0 539.7h1v1h-1zM916.0 539.7h1v1h-1zM936.0 539.7h1v1h-1zM956.0 539.7h1v1h-1zM976.0 539.7h1v1h-1zM996.0 539.7h1v1h-1zM36.0 602.7h1v1h-1zM56.0 602.7h1v1h-1zM76.0 602.7h1v1h-1zM96.0 602.7h1v1h-1zM116.0 602.7h1v1h-1zM136.0 602.7h1v1h-1zM156.0 602.7h1v1h-1zM176.0 602.7h1v1h-1zM196.0 602.7h1v1h-1zM216.0 602.7h1v1h-1zM236.0 602.7h1v1h-1zM256.0 602.7h1v1h-1zM276.0 602.7h1v1h-1zM296.0 602.7h1v1h-1zM316.0 602.7h1v1h-1zM336.0 602.7h1v1h-1zM356.0 602.7h1v1h-1zM376.0 602.7h1v1h-1zM396.0 602.7h1v1h-1zM416.0 602.7h1v1h-1zM436.0 602.7h1v1h-1zM456.0 602.7h1v1h-1zM476.0 602.7h1v1h-1zM496.0 602.7h1v1h-1zM516.0 602.7h1v1h-1zM536.0 602.7h1v1h-1zM556.0 602.7h1v1h-1zM576.0 602.7h1v1h-1zM596.0 602.7h1v1h-1zM616.0 602.7h1v1h-1zM636.0 602.7h1v1h-1zM656.0 602.7h1v1h-1zM676.0 602.7h1v1h-1zM696.0 602.7h1v1h-1zM716.0 602.7h1v1h-1zM736.0 602.7h1v1h-1zM756.0 602.7h1v1h-1zM776.0 602.7h1v1h-1zM796.0 602.7h1v1h-1zM816.0 602.7h1v1h-1zM836.0 602.7h1v1h-1zM856.0 602.7h1v1h-1zM876.0 602.7h1v1h-1zM896.0 602.7h1v1h-1zM916.0 602.7h1v1h-1zM936.0 602.7h1v1h-1zM956.0 602.7h1v1h-1zM976.0 602.7h1v1h-1zM996.0 602.7h1v1h-1zM116.0 48.3h1v1h-1zM116.0 60.9h1v1h-1zM116.0 73.5h1v1h-1zM116.0 86.1h1v1h-1zM116.0 111.3h1v1h-1zM116.0 123.9h1v1h-1zM116.0 136.5h1v1h-1zM116.0 149.1h1v1h-1zM116.0 174.3h1v1h-1zM116.0 186.9h1v1h-1zM116.0 199.5h1v1h-1zM116.0 212.1h1v1h-1zM116.0 237.3h1v1h-1zM116.0 249.9h1v1h-1zM116.0 262.5h1v1h-1zM116.0 275.1h1v1h-1zM116.0 300.3h1v1h-1zM116.0 312.9h1v1h-1zM116.0 325.5h1v1h-1zM116.0 338.1h1v1h-1zM116.0 363.3h1v1h-1zM116.0 375.9h1v1h-1zM116.0 388.5h1v1h-1zM116.0 401.1h1v1h-1zM116.0 426.3h1v1h-1zM116.0 438.9h1v1h-1zM116.0 451.5h1v1h-1zM116.0 464.1h1v1h-1zM116.0 489.3h1v1h-1zM116.0 501.9h1v1h-1zM116.0 514.5h1v1h-1zM116.0 527.1h1v1h-1zM116.0 552.3h1v1h-1zM116.0 564.9h1v1h-1zM116.0 577.5h1v1h-1zM116.0 590.1h1v1h-1zM116.0 615.3h1v1h-1zM116.0 627.9h1v1h-1zM116.0 640.5h1v1h-1zM116.0 653.1h1v1h-1zM216.0 48.3h1v1h-1zM216.0 60.9h1v1h-1zM216.0 73.5h1v1h-1zM216.0 86.1h1v1h-1zM216.0 111.3h1v1h-1zM216.0 123.9h1v1h-1zM216.0 136.5h1v1h-1zM216.0 149.1h1v1h-1zM216.0 174.3h1v1h-1zM216.0 186.9h1v1h-1zM216.0 199.5h1v1h-1zM216.0 212.1h1v1h-1zM216.0 237.3h1v1h-1zM216.0 249.9h1v1h-1zM216.0 262.5h1v1h-1zM216.0 275.1h1v1h-1zM216.0 300.3h1v1h-1zM216.0 312.9h1v1h-1zM216.0 325.5h1v1h-1zM216.0 338.1h1v1h-1zM216.0 363.3h1v1h-1zM216.0 375.9h1v1h-1zM216.0 388.5h1v1h-1zM216.0 401.1h1v1h-1zM216.0 426.3h1v1h-1zM216.0 438.9h1v1h-1zM216.0 451.5h1v1h-1zM216.0 464.1h1v1h-1zM216.0 489.3h1v1h-1zM216.0 501.9h1v1h-1zM216.0 514.5h1v1h-1zM216.0 527.1h1v1h-1zM216.0 552.3h1v1h-1zM216.0 564.9h1v1h-1zM216.0 577.5h1v1h-1zM216.0 590.1h1v1h-1zM216.0 615.3h1v1h-1zM216.0 627.9h1v1h-1zM216.0 640.5h1v1h-1zM216.0 653.1h1v1h-1zM316.0 48.3h1v1h-1zM316.0 60.9h1v1h-1zM316.0 73.5h1v1h-1zM316.0 86.1h1v1h-1zM316.0 111.3h1v1h-1zM316.0 123.9h1v1h-1zM316.0 136.5h1v1h-1zM316.0 149.1h1v1h-1zM316.0 174.3h1v1h-1zM316.0 186.9h1v1h-1zM316.0 199.5h1v1h-1zM316.0 212.1h1v1h-1zM316.0 237.3h1v1h-1zM316.0 249.9h1v1h-1zM316.0 262.5h1v1h-1zM316.0 275.1h1v1h-1zM316.0 300.3h1v1h-1zM316.0 312.9h1v1h-1zM316.0 325.5h1v1h-1zM316.0 338.1h1v1h-1zM316.0 363.3h1v1h-1zM316.0 375.9h1v1h-1zM316.0 388.5h1v1h-1zM316.0 401.1h1v1h-1zM316.0 426.3h1v1h-1zM316.0 438.9h1v1h-1zM316.0 451.5h1v1h-1zM316.0 464.1h1v1h-1zM316.0 489.3h1v1h-1zM316.0 501.9h1v1h-1zM316.0 514.5h1v1h-1zM316.0 527.1h1v1h-1zM316.0 552.3h1v1h-1zM316.0 564.9h1v1h-1zM316.0 577.5h1v1h-1zM316.0 590.1h1v1h-1zM316.0 615.3h1v1h-1zM316.0 627.9h1v1h-1zM316.0 640.5h1v1h-1zM316.0 653.1h1v1h-1zM416.0 48.3h1v1h-1zM416.0 60.9h1v1h-1zM416.0 73.5h1v1h-1zM416.0 86.1h1v1h-1zM416.0 111.3h1v1h-1zM416.0 123.9h1v1h-1zM416.0 136.5h1v1h-1zM416.0 149.1h1v1h-1zM416.0 174.3h1v1h-1zM416.0 186.9h1v1h-1zM416.0 199.5h1v1h-1zM416.0 212.1h1v1h-1zM416.0 237.3h1v1h-1zM416.0 249.9h1v1h-1zM416.0 262.5h1v1h-1zM416.0 275.1h1v1h-1zM416.0 300.3h1v1h-1zM416.0 312.9h1v1h-1zM416.0 325.5h1v1h-1zM416.0 338.1h1v1h-1zM416.0 363.3h1v1h-1zM416.0 375.9h1v1h-1zM416.0 388.5h1v1h-1zM416.0 401.1h1v1h-1zM416.0 426.3h1v1h-1zM416.0 438.9h1v1h-1zM416.0 451.5h1v1h-1zM416.0 464.1h1v1h-1zM416.0 489.3h1v1h-1zM416.0 501.9h1v1h-1zM416.0 514.5h1v1h-1zM416.0 527.1h1v1h-1zM416.0 552.3h1v1h-1zM416.0 564.9h1v1h-1zM416.0 577.5h1v1h-1zM416.0 590.1h1v1h-1zM416.0 615.3h1v1h-1zM416.0 627.9h1v1h-1zM416.0 640.5h1v1h-1zM416.0 653.1h1v1h-1zM616.0 48.3h1v1h-1zM616.0 60.9h1v1h-1zM616.0 73.5h1v1h-1zM616.0 86.1h1v1h-1zM616.0 111.3h1v1h-1zM616.0 123.9h1v1h-1zM616.0 136.5h1v1h-1zM616.0 149.1h1v1h-1zM616.0 174.3h1v1h-1zM616.0 186.9h1v1h-1zM616.0 199.5h1v1h-1zM616.0 212.1h1v1h-1zM616.0 237.3h1v1h-1zM616.0 249.9h1v1h-1zM616.0 262.5h1v1h-1zM616.0 275.1h1v1h-1zM616.0 300.3h1v1h-1zM616.0 312.9h1v1h-1zM616.0 325.5h1v1h-1zM616.0 338.1h1v1h-1zM616.0 363.3h1v1h-1zM616.0 375.9h1v1h-1zM616.0 388.5h1v1h-1zM616.0 401.1h1v1h-1zM616.0 426.3h1v1h-1zM616.0 438.9h1v1h-1zM616.0 451.5h1v1h-1zM616.0 464.1h1v1h-1zM616.0 489.3h1v1h-1zM616.0 501.9h1v1h-1zM616.0 514.5h1v1h-1zM616.0 527.1h1v1h-1zM616.0 552.3h1v1h-1zM616.0 564.9h1v1h-1zM616.0 577.5h1v1h-1zM616.0 590.1h1v1h-1zM616.0 615.3h1v1h-1zM616.0 627.9h1v1h-1zM616.0 640.5h1v1h-1zM616.0 653.1h1v1h-1zM716.0 48.3h1v1h-1zM716.0 60.9h1v1h-1zM716.0 73.5h1v1h-1zM716.0 86.1h1v1h-1zM716.0 111.3h1v1h-1zM716.0 123.9h1v1h-1zM716.0 136.5h1v1h-1zM716.0 149.1h1v1h-1zM716.0 174.3h1v1h-1zM716.0 186.9h1v1h-1zM716.0 199.5h1v1h-1zM716.0 212.1h1v1h-1zM716.0 237.3h1v1h-1zM716.0 249.9h1v1h-1zM716.0 262.5h1v1h-1zM716.0 275.1h1v1h-1zM716.0 300.3h1v1h-1zM716.0 312.9h1v1h-1zM716.0 325.5h1v1h-1zM716.0 338.1h1v1h-1zM716.0 363.3h1v1h-1zM716.0 375.9h1v1h-1zM716.0 388.5h1v1h-1zM716.0 401.1h1v1h-1zM716.0 426.3h1v1h-1zM716.0 438.9h1v1h-1zM716.0 451.5h1v1h-1zM716.0 464.1h1v1h-1zM716.0 489.3h1v1h-1zM716.0 501.9h1v1h-1zM716.0 514.5h1v1h-1zM716.0 527.1h1v1h-1zM716.0 552.3h1v1h-1zM716.0 564.9h1v1h-1zM716.0 577.5h1v1h-1zM716.0 590.1h1v1h-1zM716.0 615.3h1v1h-1zM716.0 627.9h1v1h-1zM716.0 640.5h1v1h-1zM716.0 653.1h1v1h-1zM816.0 48.3h1v1h-1zM816.0 60.9h1v1h-1zM816.0 73.5h1v1h-1zM816.0 86.1h1v1h-1zM816.0 111.3h1v1h-1zM816.0 123.9h1v1h-1zM816.0 136.5h1v1h-1zM816.0 149.1h1v1h-1zM816.0 174.3h1v1h-1zM816.0 186.9h1v1h-1zM816.0 199.5h1v1h-1zM816.0 212.1h1v1h-1zM816.0 237.3h1v1h-1zM816.0 249.9h1v1h-1zM816.0 262.5h1v1h-1zM816.0 275.1h1v1h-1zM816.0 300.3h1v1h-1zM816.0 312.9h1v1h-1zM816.0 325.5h1v1h-1zM816.0 338.1h1v1h-1zM816.0 363.3h1v1h-1zM816.0 375.9h1v1h-1zM816.0 388.5h1v1h-1zM816.0 401.1h1v1h-1zM816.0 426.3h1v1h-1zM816.0 438.9h1v1h-1zM816.0 451.5h1v1h-1zM816.0 464.1h1v1h-1zM816.0 489.3h1v1h-1zM816.0 501.9h1v1h-1zM816.0 514.5h1v1h-1zM816.0 527.1h1v1h-1zM816.0 552.3h1v1h-1zM816.0 564.9h1v1h-1zM816.0 577.5h1v1h-1zM816.0 590.1h1v1h-1zM816.0 615.3h1v1h-1zM816.0 627.9h1v1h-1zM816.0 640.5h1v1h-1zM816.0 653.1h1v1h-1zM916.0 48.3h1v1h-1zM916.0 60.9h1v1h-1zM916.0 73.5h1v1h-1zM916.0 86.1h1v1h-1zM916.0 111.3h1v1h-1zM916.0 123.9h1v1h-1zM916.0 136.5h1v1h-1zM916.0 149.1h1v1h-1zM916.0 174.3h1v1h-1zM916.0 186.9h1v1h-1zM916.0 199.5h1v1h-1zM916.0 212.1h1v1h-1zM916.0 237.3h1v1h-1zM916.0 249.9h1v1h-1zM916.0 262.5h1v1h-1zM916.0 275.1h1v1h-1zM916.0 300.3h1v1h-1zM916.0 312.9h1v1h-1zM916.0 325.5h1v1h-1zM916.0 338.1h1v1h-1zM916.0 363.3h1v1h-1zM916.0 375.9h1v1h-1zM916.0 388.5h1v1h-1zM916.0 401.1h1v1h-1zM916.0 426.3h1v1h-1zM916.0 438.9h1v1h-1zM916.0 451.5h1v1h-1zM916.0 464.1h1v1h-1zM916.0 489.3h1v1h-1zM916.0 501.9h1v1h-1zM916.0 514.5h1v1h-1zM916.0 527.1h1v1h-1zM916.0 552.3h1v1h-1zM916.0 564.9h1v1h-1zM916.0 577.5h1v1h-1zM916.0 590.1h1v1h-1zM916.0 615.3h1v1h-1zM916.0 627.9h1v1h-1zM916.0 640.5h1v1h-1zM916.0 653.1h1v1h-1z" fill="#b4ac98"/>
<rect x="476.9" y="36" width="1.3" height="630" fill="#00f000"/>
<path d="M585.5 36V666" stroke="#00e800" stroke-width="1.2" stroke-dasharray="3.3 1.7" fill="none"/>
<path d="M466.6 169.9L487.0 190.3" stroke="#001400" stroke-width="1.05" stroke-dasharray="1.4 1.4" fill="none"/>
<path d="M467.6 168.9L488.0 189.3" stroke="#00e000" stroke-width="1.05" fill="none"/>
<path d="M487.0 168.9L466.6 189.3" stroke="#001400" stroke-width="1.05" stroke-dasharray="1.4 1.4" fill="none"/>
<path d="M488.0 169.9L467.6 190.3" stroke="#00e000" stroke-width="1.05" fill="none"/>
<path d="M574.6 401.7L595.0 422.1" stroke="#001400" stroke-width="1.05" stroke-dasharray="1.4 1.4" fill="none"/>
<path d="M575.6 400.7L596.0 421.1" stroke="#00e000" stroke-width="1.05" fill="none"/>
<path d="M595.0 400.7L574.6 421.1" stroke="#001400" stroke-width="1.05" stroke-dasharray="1.4 1.4" fill="none"/>
<path d="M596.0 401.7L575.6 422.1" stroke="#00e000" stroke-width="1.05" fill="none"/>
<circle cx="467.9" cy="98.8" r="6.1" fill="#ffa500"/>
<text x="467.9" y="102.3" font-size="10.5" font-weight="bold" text-anchor="middle" fill="#000000">a</text>
<circle cx="575.2" cy="98.8" r="6.1" fill="#ffa500"/>
<text x="575.2" y="102.3" font-size="10.5" font-weight="bold" text-anchor="middle" fill="#000000">b</text>
<path d="M173.2 36h9.8l-4.9 9.5z" fill="#ff9a00"/>
<rect x="1004" y="74" width="15" height="1.8" fill="#c0c000"/>
<path d="M995.5 74.8L1004.2 69.8V79.9z" fill="#ffff00"/>
<text x="53.3" y="93.2" font-size="12" fill="#e8e800" textLength="17.4" lengthAdjust="spacingAndGlyphs">VIN</text>
<text x="49.3" y="155.8" font-size="12" fill="#00e800" textLength="62.2" lengthAdjust="spacingAndGlyphs">VOUT 4V/DIV</text>
<text x="53.6" y="236.9" font-size="12" fill="#00e8e8" textLength="20.8" lengthAdjust="spacingAndGlyphs">VDD</text>
<text x="57.3" y="491.0" font-size="12" fill="#f000f0" textLength="29.4" lengthAdjust="spacingAndGlyphs">COMP</text>
<rect x="18" y="381.5" width="6" height="1.8" fill="#ffff00"/>
<path d="M22.9 377.3L30.5 382.4L22.9 387.5z" fill="#ffff00"/>
<circle cx="10.6" cy="382.4" r="9.7" fill="#ffa000"/>
<circle cx="10.6" cy="382.4" r="8.0" fill="#ffff00"/>
<text x="10.6" y="386.6" font-size="11.8" text-anchor="middle" fill="#000000">1</text>
<rect x="18" y="413.1" width="6" height="1.8" fill="#00f000"/>
<path d="M22.9 408.9L30.5 414.0L22.9 419.1z" fill="#00f000"/>
<circle cx="10.6" cy="414.0" r="9.7" fill="#b0b0b0"/>
<circle cx="10.6" cy="414.0" r="8.0" fill="#00f000"/>
<text x="10.6" y="418.2" font-size="11.8" text-anchor="middle" fill="#000000">4</text>
<rect x="18" y="539.0" width="6" height="1.8" fill="#00f0f0"/>
<path d="M22.9 534.8L30.5 539.9L22.9 545.0z" fill="#00f0f0"/>
<circle cx="10.6" cy="539.9" r="9.7" fill="#b0b0b0"/>
<circle cx="10.6" cy="539.9" r="8.0" fill="#00f0f0"/>
<text x="10.6" y="544.1" font-size="11.8" text-anchor="middle" fill="#000000">2</text>
<rect x="18" y="601.5" width="6" height="1.8" fill="#f000f0"/>
<path d="M22.9 597.3L30.5 602.4L22.9 607.5z" fill="#f000f0"/>
<circle cx="10.6" cy="602.4" r="9.7" fill="#b0b0b0"/>
<circle cx="10.6" cy="602.4" r="8.0" fill="#f000f0"/>
<text x="10.6" y="606.6" font-size="11.8" text-anchor="middle" fill="#000000">3</text>
<rect x="21.5" y="674.5" width="280.0" height="92.0" rx="5.2" fill="none" stroke="#c4c4c4" stroke-width="1"/>
<rect x="306.5" y="674.5" width="270.0" height="92.0" rx="5.2" fill="none" stroke="#c4c4c4" stroke-width="1"/>
<rect x="591.5" y="674.5" width="185.0" height="23.0" rx="5.2" fill="none" stroke="#c4c4c4" stroke-width="1"/>
<rect x="781.5" y="674.5" width="230.0" height="92.0" rx="5.2" fill="none" stroke="#c4c4c4" stroke-width="1"/>
<rect x="29.5" y="681.1" width="33.4" height="14.8" rx="7.4" fill="url(#bev)"/>
<rect x="31.2" y="683.0" width="30.0" height="11.2" rx="5.6" fill="url(#py)"/>
<text transform="translate(46.2 692.1) scale(0.92 1)" font-size="10.5" font-weight="bold" text-anchor="middle" fill="#101010">C1</text>
<text x="67.0" y="691.4" font-size="12.25" font-weight="bold" fill="#f0f0f0">200V/div</text>
<text x="182.8" y="691.4" font-size="12.25" font-weight="bold" fill="#f0f0f0">1MΩ</text>
<text x="215.2" y="688.7" font-size="9" font-weight="bold" fill="#e0e0e0">B</text>
<text x="220.1" y="694.3" font-size="10" font-weight="bold" fill="#e0e0e0">W</text>
<text x="229.4" y="691.4" font-size="12.25" font-weight="bold" fill="#f0f0f0">:20.0M</text>
<rect x="29.5" y="702.2" width="33.4" height="14.8" rx="7.4" fill="url(#bev)"/>
<rect x="31.2" y="704.1" width="30.0" height="11.2" rx="5.6" fill="url(#pc)"/>
<text transform="translate(46.2 713.2) scale(0.92 1)" font-size="10.5" font-weight="bold" text-anchor="middle" fill="#101010">C2</text>
<text x="67.0" y="712.4" font-size="12.25" font-weight="bold" fill="#f0f0f0">4.0V/div</text>
<text x="182.8" y="712.4" font-size="12.25" font-weight="bold" fill="#f0f0f0">1MΩ</text>
<text x="215.2" y="709.7" font-size="9" font-weight="bold" fill="#e0e0e0">B</text>
<text x="220.1" y="715.3" font-size="10" font-weight="bold" fill="#e0e0e0">W</text>
<text x="229.4" y="712.4" font-size="12.25" font-weight="bold" fill="#f0f0f0">:20.0M</text>
<rect x="29.5" y="723.3" width="33.4" height="14.8" rx="7.4" fill="url(#bev)"/>
<rect x="31.2" y="725.2" width="30.0" height="11.2" rx="5.6" fill="url(#pm)"/>
<text transform="translate(46.2 734.3) scale(0.92 1)" font-size="10.5" font-weight="bold" text-anchor="middle" fill="#101010">C3</text>
<text x="67.0" y="733.2" font-size="12.25" font-weight="bold" fill="#f0f0f0">2.0V/div</text>
<text x="182.8" y="733.2" font-size="12.25" font-weight="bold" fill="#f0f0f0">1MΩ</text>
<text x="215.2" y="730.5" font-size="9" font-weight="bold" fill="#e0e0e0">B</text>
<text x="220.1" y="736.1" font-size="10" font-weight="bold" fill="#e0e0e0">W</text>
<text x="229.4" y="733.2" font-size="12.25" font-weight="bold" fill="#f0f0f0">:20.0M</text>
<rect x="29.5" y="744.4" width="33.4" height="14.8" rx="7.4" fill="url(#bev)"/>
<rect x="31.2" y="746.3" width="30.0" height="11.2" rx="5.6" fill="url(#pg)"/>
<text transform="translate(46.2 755.4) scale(0.92 1)" font-size="10.5" font-weight="bold" text-anchor="middle" fill="#101010">C4</text>
<text x="67.0" y="754.0" font-size="12.25" font-weight="bold" fill="#f0f0f0">200mV/div</text>
<text x="182.8" y="754.0" font-size="12.25" font-weight="bold" fill="#f0f0f0">1MΩ</text>
<text x="215.2" y="751.3" font-size="9" font-weight="bold" fill="#e0e0e0">B</text>
<text x="220.1" y="756.9" font-size="10" font-weight="bold" fill="#e0e0e0">W</text>
<text x="229.4" y="754.0" font-size="12.25" font-weight="bold" fill="#f0f0f0">:20.0M</text>
<path d="M352.5 680.5H437.5V764.5H352.5zM352.5 701.5H437.5M352.5 722.5H437.5M352.5 743.5H437.5M482.5 680.5H567.5V764.5H482.5zM482.5 701.5H567.5M482.5 722.5H567.5M482.5 743.5H567.5" fill="none" stroke="#c4c4c4" stroke-width="1"/>
<rect x="313.8" y="682.7" width="36.6" height="15.2" rx="7.6" fill="url(#bev)"/>
<rect x="315.5" y="684.6" width="33.2" height="11.6" rx="5.8" fill="url(#pg)"/>
<text transform="translate(332.1 693.1) scale(0.92 1)" font-size="10.5" font-weight="bold" text-anchor="middle" fill="#101010">V1</text>
<text x="354.4" y="694.1" font-size="12.25" font-weight="bold" fill="#f0f0f0">744mV</text>
<rect x="313.8" y="703.7" width="36.6" height="15.2" rx="7.6" fill="url(#bev)"/>
<rect x="315.5" y="705.6" width="33.2" height="11.6" rx="5.8" fill="url(#pg)"/>
<text transform="translate(332.1 714.1) scale(0.92 1)" font-size="10.5" font-weight="bold" text-anchor="middle" fill="#101010">V2</text>
<text x="354.4" y="715.1" font-size="12.25" font-weight="bold" fill="#f0f0f0">8.0mV</text>
<rect x="313.8" y="724.7" width="36.6" height="15.2" rx="7.6" fill="url(#bev)"/>
<rect x="315.5" y="726.6" width="33.2" height="11.6" rx="5.8" fill="url(#pg)"/>
<text transform="translate(332.1 735.1) scale(0.92 1)" font-size="10.5" font-weight="bold" text-anchor="middle" fill="#101010">ΔV</text>
<text x="354.4" y="736.1" font-size="12.25" font-weight="bold" fill="#f0f0f0">-736mV</text>
<rect x="313.8" y="745.7" width="36.6" height="15.2" rx="7.6" fill="url(#bev)"/>
<rect x="315.5" y="747.6" width="33.2" height="11.6" rx="5.8" fill="url(#pg)"/>
<text transform="translate(332.1 756.1) scale(0.92 1)" font-size="10.5" font-weight="bold" text-anchor="middle" fill="#101010">ΔV/Δt</text>
<text x="354.4" y="757.1" font-size="12.25" font-weight="bold" fill="#f0f0f0">-68.148V/s</text>
<rect x="443.8" y="682.7" width="36.6" height="15.2" rx="7.6" fill="url(#bev)"/>
<rect x="445.5" y="684.6" width="33.2" height="11.6" rx="5.8" fill="url(#pg)"/>
<text transform="translate(462.1 693.1) scale(0.92 1)" font-size="10.5" font-weight="bold" text-anchor="middle" fill="#101010">t1</text>
<text x="484.4" y="694.1" font-size="12.25" font-weight="bold" fill="#f0f0f0">29.9ms</text>
<rect x="443.8" y="703.7" width="36.6" height="15.2" rx="7.6" fill="url(#bev)"/>
<rect x="445.5" y="705.6" width="33.2" height="11.6" rx="5.8" fill="url(#pg)"/>
<text transform="translate(462.1 714.1) scale(0.92 1)" font-size="10.5" font-weight="bold" text-anchor="middle" fill="#101010">t2</text>
<text x="484.4" y="715.1" font-size="12.25" font-weight="bold" fill="#f0f0f0">40.7ms</text>
<rect x="443.8" y="724.7" width="36.6" height="15.2" rx="7.6" fill="url(#bev)"/>
<rect x="445.5" y="726.6" width="33.2" height="11.6" rx="5.8" fill="url(#pg)"/>
<text transform="translate(462.1 735.1) scale(0.92 1)" font-size="10.5" font-weight="bold" text-anchor="middle" fill="#101010">Δt</text>
<text x="484.4" y="736.1" font-size="12.25" font-weight="bold" fill="#f0f0f0">10.8ms</text>
<rect x="443.8" y="745.7" width="36.6" height="15.2" rx="7.6" fill="url(#bev)"/>
<rect x="445.5" y="747.6" width="33.2" height="11.6" rx="5.8" fill="url(#pg)"/>
<text transform="translate(462.1 756.1) scale(0.92 1)" font-size="10.5" font-weight="bold" text-anchor="middle" fill="#101010">1/Δt</text>
<text x="484.4" y="757.1" font-size="12.25" font-weight="bold" fill="#f0f0f0">92.593Hz</text>
<rect x="597.4" y="680.7" width="15" height="14.6" fill="#d4d4d4"/>
<rect x="597.4" y="680.7" width="15" height="14.6" fill="none" stroke="#888" stroke-width="0.8"/>
<text x="604.9" y="692.4" font-size="12" text-anchor="middle" fill="#000000">A</text>
<rect x="614.3" y="681.3" width="33.7" height="15.0" rx="7.5" fill="url(#bev)"/>
<rect x="616.0" y="683.2" width="30.3" height="11.4" rx="5.7" fill="url(#py)"/>
<text transform="translate(631.1 692.4) scale(0.92 1)" font-size="10.5" font-weight="bold" text-anchor="middle" fill="#101010">C1</text>
<path d="M650.8 682H654.2L660.4 693.6H664.5" stroke="#f0f0f0" stroke-width="1.8" fill="none"/>
<text x="667.2" y="691.5" font-size="12.25" font-weight="bold" fill="#f0f0f0">976V</text>
<text x="789.4" y="691.5" font-size="12.25" font-weight="bold" fill="#f0f0f0">10.0ms/div</text>
<text x="854.4" y="691.5" font-size="12.25" font-weight="bold" fill="#f0f0f0">100MS/s</text>
<text x="939.8" y="691.5" font-size="12.25" font-weight="bold" fill="#f0f0f0">10.0ns/pt</text>
<text x="789.4" y="712.5" font-size="12.25" font-weight="bold" fill="#f01818">Stopped</text>
<text x="880.2" y="712.5" font-size="12.25" font-weight="bold" fill="#f0f0f0">Single Seq</text>
<text x="789.4" y="733.4" font-size="12.25" font-weight="bold" fill="#f0f0f0">1 acqs</text>
<text x="928.9" y="733.4" font-size="12.25" font-weight="bold" fill="#f0f0f0">RL:10.0M</text>
<text x="789.4" y="754.4" font-size="12.25" font-weight="bold" fill="#f0f0f0">Auto</text>
<rect x="993.3" y="701.5" width="2.7" height="14" rx="1.2" fill="#f0e800"/>
<circle cx="994.6" cy="715.7" r="3.3" fill="#f0e800"/>
</svg>
</body></html>
